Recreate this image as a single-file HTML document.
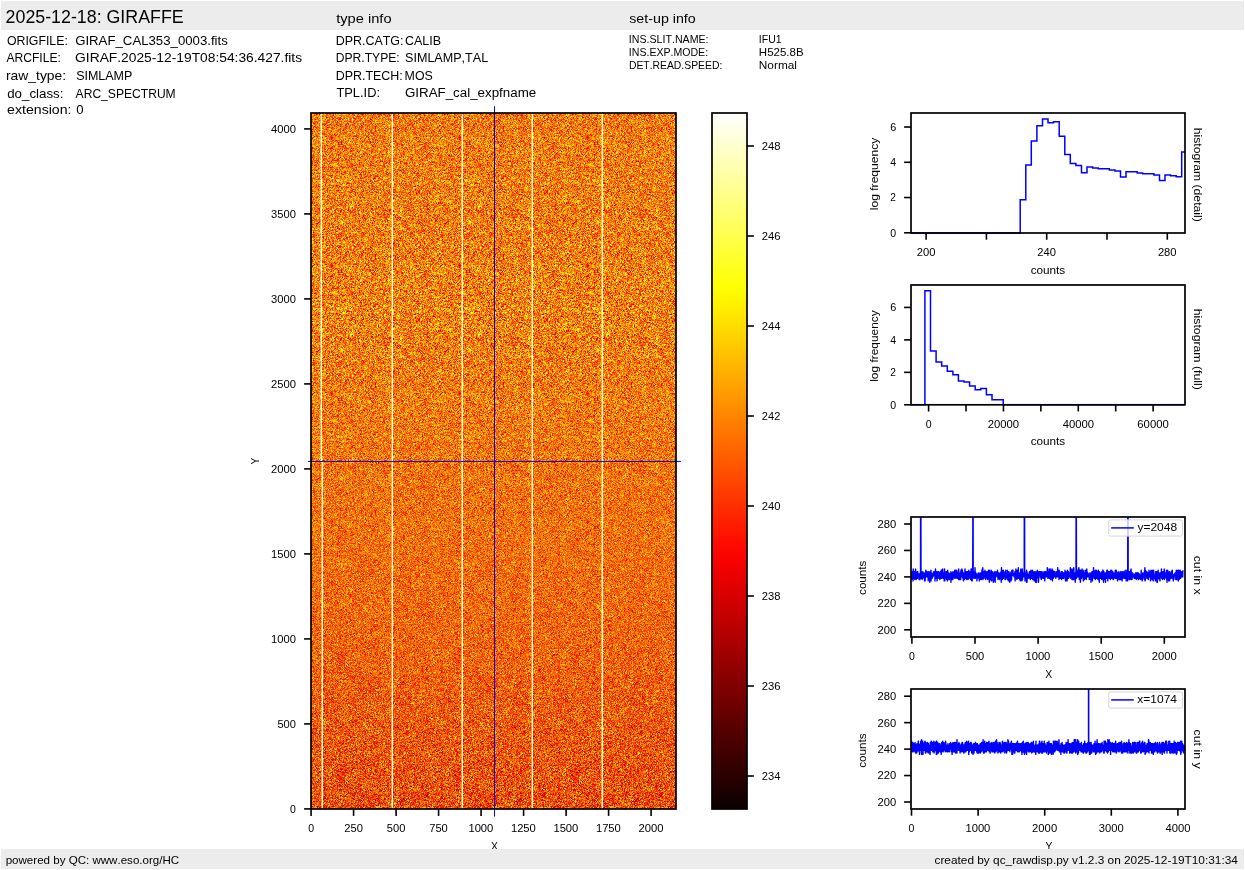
<!DOCTYPE html><html><head><meta charset="utf-8"><title>GIRAFFE raw display</title><style>html,body{margin:0;padding:0;background:#fff;width:1245px;height:870px;overflow:hidden;position:relative}text{font-family:"Liberation Sans",sans-serif;font-kerning:none}svg{will-change:transform}</style></head><body><svg width="1245" height="870" viewBox="0 0 1245 870" style="position:absolute;left:0;top:0">
<defs>
<pattern id="nzA" patternUnits="userSpaceOnUse" x="311" y="113" width="128" height="128">
<path stroke="#2a0000" stroke-width="1" fill="none" d="M29 13.5h1M57 24.5h1M1 25.5h1"/>
<path stroke="#560000" stroke-width="1" fill="none" d="M15 4.5h1M3 23.5h1M5 57.5h1M42 61.5h1M111 67.5h1M99 89.5h1M76 107.5h1"/>
<path stroke="#810000" stroke-width="1" fill="none" d="M5 1.5h1M22 2.5h1m59 0h1M103 10.5h1M0 12.5h1M84 15.5h1M30 29.5h1M126 35.5h1M117 40.5h1M58 41.5h1M50 43.5h1M20 48.5h1m48 0h1M81 50.5h1M108 51.5h1M56 69.5h1M80 70.5h1M104 76.5h1M105 80.5h1M67 85.5h1M44 89.5h1M47 92.5h1M115 93.5h1M17 97.5h1M105 100.5h1M115 101.5h1M61 104.5h1M125 107.5h1M6 110.5h1M51 111.5h1M113 120.5h1M23 121.5h1M90 123.5h1M33 126.5h1"/>
<path stroke="#ac0000" stroke-width="1" fill="none" d="M102 0.5h1m4 0h1M8 1.5h1m42 0h1M113 2.5h1m6 0h1M0 4.5h1m108 0h1M10 5.5h1M59 6.5h1M57 7.5h1m22 0h1M59 8.5h1M37 10.5h1m5 0h1M19 11.5h1m5 0h1m3 0h1m22 0h1m8 0h1M34 12.5h1m15 0h1m50 0h1M21 14.5h1m42 0h1m17 0h1M54 15.5h1M60 16.5h1M0 17.5h1m63 0h1M7 20.5h1M23 21.5h1M15 23.5h1M21 24.5h1m83 0h1M54 25.5h1m27 0h1M115 29.5h1M27 31.5h1M16 32.5h1m44 0h1m39 0h1m1 0h1M28 33.5h1m35 0h1m14 0h1M1 34.5h1m119 0h1M11 38.5h1m36 0h1m32 0h1m32 0h1m7 0h1M15 41.5h1m11 0h1M12 42.5h1m31 0h1M29 44.5h1m34 0h1M12 46.5h1M31 47.5h1m16 0h1m29 0h1m32 0h1M65 48.5h1m5 0h1M36 49.5h1m50 0h1m13 0h1m19 0h1M93 50.5h1M95 51.5h1M61 52.5h1m41 0h1M64 53.5h1M7 55.5h1M26 56.5h1m16 0h1m32 0h1M42 57.5h1M68 58.5h1M48 59.5h1m9 0h1M49 65.5h1m13 0h1M59 67.5h1M5 68.5h1M36 70.5h1m53 0h1M83 71.5h1M28 73.5h1m75 0h1M21 74.5h1M122 75.5h1M43 78.5h1m34 0h1M65 79.5h1m61 0h1M1 80.5h1m114 0h1M80 81.5h1M9 83.5h1m6 0h1M37 85.5h1m44 0h1M0 86.5h1M50 87.5h1M81 88.5h1M127 89.5h1M125 90.5h1m1 0h1M12 91.5h1m36 0h1M9 92.5h1m13 0h1m21 0h1M41 94.5h1M61 95.5h1M37 96.5h1M23 97.5h1m23 0h1m30 0h1M4 98.5h1M20 100.5h1m35 0h1m59 0h1M21 101.5h1m55 0h1M52 102.5h1m50 0h1m15 0h1m4 0h1M52 103.5h1M26 104.5h1m47 0h1m11 0h1M53 105.5h1m35 0h1m33 0h1M63 108.5h1m30 0h1m18 0h1M108 110.5h1M20 111.5h1m55 0h1M5 112.5h1m55 0h1m48 0h1M17 115.5h1m50 0h1M113 117.5h1M25 118.5h1m43 0h1M51 119.5h1M18 120.5h1m11 0h1M87 121.5h1m6 0h1M72 122.5h1M79 123.5h1M12 124.5h1m22 0h1M81 125.5h1m7 0h1M3 126.5h1m106 0h1M86 127.5h1"/>
<path stroke="#d70000" stroke-width="1" fill="none" d="M42 0.5h1m79 0h1M47 1.5h1m2 0h1m11 0h1m46 0h1M74 2.5h1m1 0h1m1 0h1M68 3.5h1m58 0h1M16 4.5h1m44 0h1m11 0h1m13 0h1m37 0h1M22 5.5h1m10 0h1m9 0h1m27 0h1m36 0h1M28 6.5h1m85 0h1M9 7.5h1m84 0h1m11 0h1m9 0h1m5 0h1m4 0h1M26 8.5h1m12 0h1m45 0h1m26 0h1M52 9.5h1m18 0h1m1 0h1M2 10.5h1m33 0h1m23 0h1m7 0h1m27 0h1M12 11.5h1m1 0h1m20 0h1m1 0h1m3 0h1m22 0h1m33 0h1M13 12.5h1m13 0h1m69 0h1m22 0h1M3 13.5h1m31 0h1m20 0h1m7 0h1m21 0h1m14 0h1M50 14.5h1m75 0h1M74 15.5h1m13 0h1m5 0h1m20 0h1M1 16.5h1m45 0h1m10 0h1m20 0h1m7 0h1m6 0h1m17 0h1M32 17.5h1m21 0h1m5 0h1m12 0h1M20 18.5h1m73 0h1m6 0h1m21 0h1M34 19.5h1m22 0h1m62 0h1M13 21.5h1M20 22.5h1M6 23.5h1m7 0h1m30 0h1m9 0h1m59 0h1M2 24.5h1m8 0h1m59 0h1m18 0h1m12 0h1M38 25.5h1m2 0h1m63 0h1M20 26.5h1m36 0h1m16 0h1m2 0h1m31 0h1m3 0h1M25 27.5h1m38 0h1m1 0h1m14 0h1m14 0h1m1 0h1m2 0h1m6 0h1m12 0h1M15 28.5h1m1 0h1m41 0h1m47 0h1M7 29.5h1m19 0h1m31 0h1m2 0h1m3 0h1m3 0h1m21 0h1M30 30.5h1m32 0h1m11 0h1m21 0h1m15 0h1M9 31.5h1m21 0h1m46 0h1m12 0h1M50 32.5h1m40 0h1m6 0h1M6 33.5h1m16 0h1m10 0h1m45 0h1m32 0h1M20 34.5h1m13 0h1m33 0h1m4 0h1m29 0h1M1 35.5h1m17 0h1m20 0h1m79 0h1M14 36.5h1m58 0h1m22 0h1M35 37.5h1m52 0h1M32 38.5h1m13 0h1m29 0h1m15 0h1m4 0h1m6 0h1M47 39.5h1m27 0h1m5 0h1M14 40.5h1m14 0h1m12 0h1m9 0h1M17 41.5h1m34 0h1m3 0h1m14 0h1m13 0h1m1 0h1m4 0h1m8 0h1m11 0h1M9 42.5h2m8 0h1m17 0h1m52 0h1m24 0h1M18 43.5h1m96 0h1M1 44.5h1m86 0h1m19 0h1M5 45.5h1m17 0h1m16 0h1M21 46.5h1m4 0h2m6 0h1m7 0h1M24 47.5h1m12 0h1m78 0h1M17 48.5h1m71 0h1M4 49.5h1m5 0h1m37 0h1m40 0h1m33 0h1M1 50.5h1m4 0h1m11 0h1m8 0h1m66 0h1m3 0h1M0 51.5h1m40 0h1m78 0h1M1 52.5h1m1 0h1m39 0h1m8 0h1m6 0h1M73 53.5h1m23 0h1m13 0h1m12 0h1M9 54.5h1m1 0h1m7 0h2m7 0h1m8 0h1m7 0h1m43 0h1M118 55.5h1M81 56.5h1m29 0h1M1 57.5h1m42 0h1m44 0h1m2 0h1M13 58.5h1m14 0h1m18 0h1m38 0h1M3 59.5h1m29 0h1m16 0h1m1 0h1m38 0h2M5 60.5h1m2 0h1m21 0h1m44 0h1m24 0h1M2 61.5h1m46 0h1M20 62.5h2m28 0h1m39 0h1m32 0h1M6 63.5h1m5 0h1m31 0h1m10 0h1m10 0h1M20 64.5h1m82 0h1m9 0h1M111 65.5h1m12 0h1M7 66.5h1m1 0h2m29 0h1m35 0h1m5 0h1M15 67.5h1m8 0h1M15 68.5h1m3 0h1m39 0h1M74 69.5h1m25 0h1m1 0h1M60 70.5h1m27 0h1m5 0h1M30 71.5h1m50 0h1M14 72.5h1m7 0h1m2 0h2m79 0h1M50 73.5h1m10 0h1m17 0h1m23 0h1m4 0h1M4 74.5h1m45 0h1m6 0h1m52 0h1m11 0h1M0 75.5h1M0 76.5h1m15 0h1m25 0h1m40 0h1M25 77.5h1m1 0h1m24 0h1m55 0h1M51 78.5h1m24 0h1m22 0h1m2 0h1M28 79.5h1m15 0h1m16 0h1m15 0h1m5 0h1m23 0h1M44 80.5h1M99 81.5h1m19 0h1M28 82.5h1m15 0h1m5 0h1m35 0h1M89 83.5h1M6 84.5h1m42 0h1m3 0h1m13 0h1m43 0h1m6 0h1M53 85.5h1M2 86.5h1m13 0h1m60 0h1M17 87.5h1m7 0h1m9 0h1M21 88.5h1m75 0h1M1 89.5h1m33 0h1m40 0h1m32 0h1m12 0h1M9 90.5h1m6 0h1m2 0h1m27 0h1m9 0h1m7 0h1M30 91.5h1m3 0h1m26 0h1m12 0h1m41 0h1m9 0h1M3 92.5h1M67 93.5h1m19 0h1m21 0h1m3 0h1M65 94.5h1m1 0h1m1 0h1m22 0h1M17 95.5h1m42 0h1m11 0h1m15 0h1m28 0h1M52 96.5h1m7 0h1m42 0h1M32 97.5h1m4 0h1m59 0h1M5 98.5h1m23 0h1m52 0h1m41 0h1M11 99.5h1m12 0h1m41 0h1M4 100.5h1M20 101.5h1m45 0h2m15 0h1m9 0h1m10 0h1M98 102.5h1m10 0h1M81 103.5h1m22 0h1m2 0h1M77 104.5h1m6 0h1m4 0h1m20 0h1m10 0h1M0 105.5h1m19 0h1m41 0h2m23 0h1m9 0h1m15 0h1m1 0h1M4 106.5h1m80 0h1M81 107.5h1m36 0h1m1 0h1m3 0h1M48 108.5h1m22 0h1m36 0h1m15 0h1M7 109.5h1m6 0h1m35 0h1M9 110.5h1m51 0h1m43 0h1M71 111.5h1M30 112.5h1m12 0h1M26 113.5h1m8 0h1m1 0h1m19 0h1m16 0h1m42 0h1M31 114.5h1m32 0h1M0 115.5h1m2 0h1m9 0h1m12 0h1m19 0h1m36 0h1M13 116.5h1m14 0h1m1 0h1m14 0h1m1 0h1M20 117.5h1m46 0h1m2 0h1M41 118.5h1m42 0h1m40 0h1M2 119.5h1m64 0h1m10 0h1m18 0h1m20 0h1M16 120.5h1m64 0h1m19 0h1M9 121.5h1m19 0h1M39 122.5h1m69 0h1m16 0h1M42 123.5h1m19 0h1M3 124.5h1m32 0h1m57 0h1M69 125.5h1m3 0h1m27 0h1M126 126.5h1M10 127.5h1m11 0h1m75 0h1"/>
<path stroke="#ff0400" stroke-width="1" fill="none" d="M4 0.5h1m11 0h1m1 0h1m2 0h1m19 0h1m52 0h1m16 0h1m1 0h1M15 1.5h1m6 0h1m15 0h1m2 0h1m24 0h1m2 0h1m3 0h1m9 0h1m3 0h1m19 0h1m13 0h1M43 2.5h1m26 0h1m8 0h1m1 0h1m16 0h1m2 0h1m4 0h1M9 3.5h1m1 0h1m34 0h1m1 0h1m18 0h1m19 0h1m4 0h1m2 0h1m2 0h1m5 0h2m3 0h1M6 4.5h1m11 0h1m2 0h1m7 0h1m12 0h1m61 0h1m13 0h1M25 5.5h2m1 0h1m1 0h1m13 0h1m2 0h1m11 0h1m27 0h1m17 0h1m9 0h1M4 6.5h1m16 0h1m5 0h1m1 0h1m14 0h1m15 0h1m6 0h1m9 0h1m1 0h1m29 0h1m14 0h1M16 7.5h1m32 0h1m4 0h1m24 0h1m28 0h1m4 0h1m5 0h1M33 8.5h1m4 0h1m3 0h1m3 0h1m4 0h1m47 0h1m3 0h2m12 0h1m5 0h1m2 0h1M2 9.5h1m12 0h1m1 0h1m63 0h1m26 0h2m9 0h1M3 10.5h1m2 0h1M34 11.5h1m19 0h1m16 0h1m12 0h1m28 0h1M90 12.5h1M6 13.5h1m3 0h1m33 0h1m3 0h1m2 0h1m13 0h1m45 0h1m5 0h1M2 14.5h1m13 0h2m16 0h1m3 0h1m7 0h1m29 0h1m17 0h2m6 0h1M5 15.5h1m14 0h1m8 0h1m10 0h1m23 0h1m10 0h1m4 0h1m18 0h1m4 0h1m3 0h1m1 0h1m7 0h1M15 16.5h1m16 0h1m16 0h2m33 0h1m1 0h1m12 0h1m2 0h1m8 0h1M8 17.5h2m30 0h1m26 0h1m3 0h1m4 0h1m9 0h1m6 0h1m18 0h1m4 0h1m3 0h2M1 18.5h1m1 0h1m25 0h1m9 0h1m24 0h1m19 0h2m5 0h1m35 0h1M41 19.5h1m18 0h1m26 0h1m37 0h1M1 20.5h1m9 0h1m1 0h1m33 0h1m4 0h1m9 0h1m11 0h1m27 0h1m15 0h1m8 0h1M26 21.5h1m18 0h1m16 0h1m24 0h1m17 0h1m5 0h1M24 22.5h1m3 0h1m9 0h1m8 0h1m6 0h1m14 0h1m11 0h1m26 0h1m16 0h1M27 23.5h1m6 0h1m8 0h2m28 0h1m38 0h1m7 0h1M6 24.5h1m2 0h1m9 0h2m25 0h1m18 0h1m7 0h1m5 0h1m3 0h1m1 0h1M20 25.5h1m24 0h1m3 0h1m13 0h1m21 0h1m36 0h1M34 26.5h1m18 0h1m11 0h1m7 0h1M12 27.5h1m17 0h1m22 0h1m30 0h1M26 28.5h1m12 0h1m11 0h1m4 0h1m15 0h1m9 0h1m26 0h1m7 0h1M34 29.5h1m16 0h1m27 0h1m15 0h1m18 0h1m4 0h1m5 0h1M20 30.5h1m6 0h1m7 0h1m8 0h1m14 0h1m5 0h1m8 0h1m11 0h1m30 0h1m6 0h1M0 31.5h1m29 0h1m15 0h1m4 0h1m8 0h1m1 0h1m23 0h1m8 0h1m12 0h4m3 0h1M9 32.5h1m3 0h1m64 0h1m6 0h1M5 33.5h1m3 0h1m11 0h1m5 0h1m3 0h2m15 0h1m12 0h2m9 0h1m39 0h1m4 0h1m2 0h1M21 34.5h1m28 0h1m23 0h1m11 0h1m3 0h2m3 0h1m2 0h1m15 0h1m4 0h1m5 0h1M5 35.5h1m11 0h1m2 0h1m12 0h1m2 0h2m15 0h1m12 0h1m2 0h1m5 0h1m37 0h1m4 0h1m5 0h1M8 36.5h1m13 0h1m8 0h1m14 0h1m14 0h1m14 0h1m10 0h1m6 0h1m9 0h1m6 0h1m2 0h1m12 0h1M20 37.5h1m3 0h1m8 0h1m6 0h1m1 0h1m15 0h1m1 0h1m11 0h1m27 0h1m5 0h1M13 38.5h1m25 0h2m20 0h1m7 0h1m40 0h1M16 39.5h1m9 0h1m27 0h1m57 0h1m2 0h1m2 0h1M21 40.5h1m33 0h1m4 0h1m7 0h1m35 0h1m2 0h1M10 41.5h1m1 0h1m40 0h1m14 0h1m31 0h1m15 0h1m10 0h1M2 42.5h1m19 0h1m4 0h1m12 0h1m2 0h1m4 0h1m15 0h2m18 0h1m16 0h1m24 0h2M11 43.5h1m20 0h1m18 0h1m9 0h1m28 0h1m5 0h2m13 0h1m9 0h1M19 44.5h1m13 0h1m15 0h1m27 0h1m11 0h1m11 0h1m5 0h1m7 0h1m3 0h1M28 45.5h1m6 0h1m2 0h1m19 0h1m15 0h1m7 0h1m17 0h1m14 0h1m2 0h1M2 46.5h1m32 0h1m4 0h1m14 0h1m36 0h1m8 0h1m9 0h1M10 47.5h1m10 0h1m1 0h1m2 0h2m19 0h1m60 0h1m5 0h1M1 48.5h1m57 0h2m9 0h1m14 0h1m5 0h1M50 49.5h1m24 0h1m2 0h1m16 0h1m7 0h1m15 0h1M13 50.5h1m34 0h1m10 0h1m1 0h2m14 0h1m25 0h1m7 0h1m13 0h1M11 51.5h1m36 0h1m8 0h1m1 0h1m18 0h1m33 0h1m1 0h1M4 52.5h2m4 0h1m25 0h1m32 0h1m16 0h1m19 0h1m10 0h1m6 0h1M5 53.5h1m11 0h1m3 0h1m7 0h2m3 0h1m3 0h1m2 0h1m10 0h1m10 0h1m7 0h1m20 0h1m21 0h1M31 54.5h3m39 0h1m51 0h1M13 55.5h1m40 0h1m2 0h1m7 0h1m32 0h1m6 0h1M9 56.5h1m6 0h2m6 0h1m4 0h1m54 0h1m6 0h1m21 0h1m3 0h1M60 57.5h1m22 0h1m6 0h1m16 0h1m11 0h2M0 58.5h1m11 0h1m8 0h2m3 0h1m7 0h1m19 0h1m11 0h1m23 0h1m10 0h1m2 0h1M7 59.5h1m1 0h2m14 0h2m48 0h1m26 0h2m2 0h1m5 0h1m4 0h1M49 60.5h1m14 0h1m12 0h1m1 0h1m6 0h1m7 0h1m1 0h1m6 0h1m2 0h2m2 0h2M11 61.5h1m19 0h2m6 0h1m45 0h1m3 0h1M18 62.5h1m6 0h1m13 0h1m19 0h2m44 0h1m1 0h2M24 63.5h1m8 0h1m20 0h1m4 0h1m4 0h2m14 0h1m25 0h1M11 64.5h2m31 0h1m4 0h1m3 0h1m9 0h1m7 0h1m51 0h1M26 65.5h1m20 0h1m14 0h1m1 0h1m19 0h1m8 0h1m8 0h1m5 0h1m12 0h1m5 0h1M17 66.5h1m44 0h1m34 0h1m6 0h1m8 0h1m5 0h1M42 67.5h1m7 0h1m40 0h1M21 68.5h1m30 0h1m10 0h1m29 0h1m5 0h1m9 0h1m12 0h1M13 69.5h1m14 0h1m19 0h1m12 0h1m28 0h1m16 0h1m12 0h1M37 70.5h2m1 0h1m8 0h1m25 0h1m16 0h1m24 0h1m3 0h1M5 71.5h1m8 0h1m20 0h1m4 0h1m5 0h1m44 0h1m34 0h1M5 72.5h1m12 0h1m34 0h1m7 0h1m23 0h1m7 0h1m1 0h1m3 0h1m7 0h1m4 0h1m14 0h1M7 73.5h2m20 0h1m5 0h1m4 0h1m5 0h1m15 0h1m2 0h1m11 0h1m19 0h1m20 0h1M19 74.5h1m10 0h1m6 0h1m8 0h1m4 0h1m12 0h1m27 0h1M10 75.5h1m1 0h2m2 0h1m23 0h1m20 0h2m29 0h1m22 0h1m3 0h1m3 0h1M7 76.5h1m33 0h1m1 0h1m8 0h1m7 0h1m2 0h1m1 0h1m14 0h3m13 0h1m27 0h1M18 77.5h2m9 0h1m10 0h2m12 0h1m12 0h1m4 0h1m31 0h1m11 0h1M4 78.5h1m5 0h1m5 0h1m24 0h1m10 0h1m5 0h1m5 0h1m19 0h1m22 0h2M10 79.5h1m3 0h1m15 0h1m8 0h2m18 0h1m6 0h1m15 0h1m3 0h1m11 0h1M12 80.5h1m9 0h1m23 0h1m22 0h1m38 0h1m1 0h1m2 0h1m4 0h2M10 81.5h1m22 0h1m26 0h1m20 0h2m2 0h1m12 0h1m17 0h1M17 82.5h1m14 0h1m1 0h1m3 0h1m34 0h1m10 0h1m25 0h1M1 83.5h1m4 0h2m5 0h1m4 0h1m13 0h1m5 0h1m12 0h1m70 0h1M5 84.5h1m20 0h1m21 0h1m3 0h1m35 0h1m2 0h1m11 0h1m9 0h1M26 85.5h1m1 0h1m2 0h1m17 0h1m7 0h1m31 0h2m9 0h1m12 0h1M11 86.5h1m11 0h1m57 0h1m2 0h1m17 0h1m2 0h1m15 0h1m3 0h1M26 87.5h1m2 0h1m7 0h1m36 0h1m19 0h1m4 0h1m16 0h1M70 88.5h1m33 0h1m7 0h1m11 0h1M3 89.5h1m23 0h1m11 0h1m33 0h2m33 0h1m7 0h1M1 90.5h1m84 0h1m10 0h1M28 91.5h1m19 0h1m7 0h1m43 0h1m16 0h1m4 0h1M0 92.5h1m4 0h1m21 0h1m20 0h1m21 0h1m23 0h1m21 0h1M19 93.5h1m14 0h1m26 0h1m9 0h1m18 0h1m5 0h1m7 0h1m18 0h1M55 94.5h1m20 0h1m4 0h1m12 0h2m5 0h2m15 0h1M3 95.5h1m3 0h2m6 0h1m9 0h1m39 0h1m50 0h1M8 96.5h1m2 0h1m8 0h1m3 0h1m5 0h1m12 0h2m11 0h1m4 0h1m2 0h1m9 0h1m3 0h2m4 0h1m24 0h1m6 0h3M8 97.5h1m4 0h1m12 0h1m2 0h2m5 0h1m2 0h1m1 0h1m10 0h1m9 0h1m12 0h1m3 0h1m2 0h1m27 0h1m7 0h1m6 0h1M14 98.5h1m15 0h1m7 0h1m5 0h1m5 0h1m3 0h1m23 0h1m12 0h1m1 0h1m5 0h1m12 0h1M29 99.5h1m2 0h1m6 0h1m25 0h1m7 0h1m35 0h1m5 0h1M28 100.5h1m3 0h1m14 0h1m22 0h1M5 101.5h1m23 0h1m14 0h1m2 0h2m8 0h1m11 0h1m3 0h1m2 0h1m5 0h1m2 0h1m36 0h1m4 0h1M0 102.5h1m13 0h1m27 0h2m28 0h1m9 0h1m3 0h1m12 0h1m18 0h1M11 103.5h1m9 0h1m6 0h1m5 0h1m13 0h1m9 0h1m25 0h1m16 0h1m24 0h1M44 104.5h1m6 0h1m1 0h1m27 0h1m40 0h1M2 105.5h1m10 0h1m1 0h1m28 0h1m2 0h1m1 0h1m1 0h1m2 0h1m25 0h1m14 0h1m5 0h2M54 106.5h1m31 0h1m1 0h1m12 0h1m18 0h1m5 0h1M9 107.5h1m6 0h1m7 0h1m13 0h1m15 0h1m5 0h1m1 0h1m10 0h1m17 0h1m2 0h1m12 0h1m2 0h1M8 108.5h2m64 0h1m8 0h1m9 0h1m12 0h1M27 109.5h1m10 0h1m2 0h1m10 0h1m6 0h1m6 0h1m7 0h1m20 0h1m10 0h1m2 0h1M5 110.5h1m8 0h1m3 0h1m1 0h2m10 0h1m4 0h1m1 0h1m43 0h1m4 0h1m1 0h2m10 0h1m21 0h1M1 111.5h1m16 0h1m3 0h1m34 0h1m9 0h1m19 0h1m7 0h1m13 0h1M21 112.5h1m5 0h1m17 0h1m12 0h1m4 0h1m12 0h1m7 0h1m9 0h1m1 0h1m15 0h2m2 0h1M1 113.5h1m78 0h1m7 0h1M19 114.5h1m2 0h1m3 0h1m8 0h2m4 0h2m50 0h1m17 0h1M28 115.5h1m3 0h1m20 0h1m11 0h2m29 0h3m21 0h1M7 116.5h1m4 0h1m26 0h1m32 0h1m9 0h2m12 0h1m8 0h1m6 0h1m14 0h1M0 117.5h1m42 0h1m47 0h1m15 0h1m13 0h1M14 118.5h1m1 0h1m14 0h1m1 0h1m13 0h1m9 0h1m4 0h1m11 0h2m1 0h1m9 0h1m4 0h1m10 0h1m7 0h1m12 0h1M0 119.5h1m10 0h1m89 0h1m7 0h1M9 120.5h1m10 0h1m7 0h1m10 0h1m10 0h1m1 0h1m1 0h1m3 0h1m13 0h1m27 0h1m6 0h1m9 0h1M11 121.5h1m3 0h1m5 0h1m22 0h1m7 0h2m7 0h1m1 0h1m8 0h1m4 0h1m21 0h1m2 0h1m12 0h1M3 122.5h1m1 0h1m24 0h1m1 0h1m25 0h1m3 0h1m18 0h1m10 0h1m34 0h1M2 123.5h1m24 0h1m10 0h1m26 0h1m56 0h1M9 124.5h1m15 0h1m12 0h1m73 0h1m5 0h1M12 125.5h1m2 0h1m4 0h1m6 0h3m2 0h1m2 0h1m24 0h1m16 0h1m19 0h1m4 0h1m13 0h1m9 0h1M14 126.5h1m2 0h1m8 0h1m23 0h1m34 0h1m20 0h1m13 0h1m6 0h1M29 127.5h1m39 0h1m13 0h1m1 0h1m2 0h1m4 0h1m27 0h1"/>
<path stroke="#ff2f00" stroke-width="1" fill="none" d="M3 0.5h1m7 0h2m6 0h1m17 0h1m6 0h1m3 0h1m7 0h1m4 0h1m4 0h1m3 0h1m20 0h1m8 0h1m22 0h1m1 0h2M6 1.5h1m45 0h1m1 0h1m5 0h1m3 0h1m2 0h2m3 0h1m4 0h1m2 0h1m27 0h1m4 0h1M3 2.5h1m25 0h2m15 0h1m4 0h1m9 0h1m21 0h1m1 0h2m5 0h1m2 0h1m18 0h1m2 0h2M20 3.5h1m9 0h1m14 0h1m1 0h1m4 0h1m23 0h1m5 0h2m4 0h1m7 0h1m16 0h1m2 0h1m3 0h1m1 0h1M24 4.5h1m2 0h2m28 0h1m7 0h1m17 0h1m1 0h1m5 0h2m8 0h1m9 0h1m5 0h1M6 5.5h1m22 0h1m5 0h1m14 0h1m13 0h1m9 0h1m2 0h1m6 0h1m7 0h2m3 0h1m14 0h1m5 0h1M1 6.5h1m12 0h1m3 0h1m5 0h1m6 0h1m7 0h1m9 0h1m25 0h1m6 0h1m10 0h1m5 0h1m7 0h2m2 0h2m3 0h1m8 0h1M8 7.5h1m8 0h2m5 0h1m18 0h1m12 0h1m3 0h2m20 0h1m5 0h1m9 0h2m5 0h1m5 0h1m3 0h1m5 0h1m4 0h1M1 8.5h1m1 0h1m11 0h1m6 0h1m7 0h1m4 0h1m9 0h1m8 0h1m2 0h1m5 0h1m11 0h1m4 0h1m1 0h1m12 0h1M4 9.5h1m1 0h1m2 0h1m8 0h1m2 0h1m2 0h1m1 0h2m4 0h1m3 0h1m2 0h2m1 0h1m11 0h1m5 0h1m27 0h2m7 0h1m3 0h1m3 0h2m5 0h2m10 0h1M14 10.5h2m4 0h1m4 0h2m3 0h1m20 0h1m10 0h1m24 0h2m5 0h1m4 0h2m13 0h1m4 0h1m5 0h1M8 11.5h1m2 0h1m1 0h1m4 0h1m12 0h1m14 0h1m20 0h1m4 0h2m6 0h1m7 0h1m2 0h2m6 0h1m2 0h1m12 0h1m4 0h1M1 12.5h1m6 0h1m7 0h1m1 0h1m1 0h1m2 0h1m2 0h1m2 0h1m9 0h1m1 0h1m1 0h1m13 0h1m7 0h1m4 0h1m15 0h1m7 0h1m1 0h1m1 0h1m16 0h1m2 0h1M0 13.5h1m3 0h1m18 0h1m7 0h1m6 0h1m6 0h1m3 0h1m8 0h1m2 0h1m7 0h1m6 0h1m4 0h1m7 0h1m22 0h2m1 0h1m10 0h1M4 14.5h2m1 0h1m10 0h1m16 0h1m8 0h1m3 0h1m2 0h1m4 0h1m16 0h1m5 0h1m3 0h3m6 0h1m6 0h1m9 0h1m2 0h2m13 0h1M2 15.5h1m6 0h1m5 0h1m5 0h1m1 0h1m1 0h1m9 0h1m9 0h1m2 0h1m1 0h1m12 0h1m4 0h1m2 0h1m5 0h3m10 0h2m11 0h1m10 0h1m10 0h1M0 16.5h1m3 0h1m8 0h1m13 0h3m3 0h2m4 0h1m1 0h1m22 0h1m2 0h1m28 0h1m4 0h1m8 0h1m12 0h1M10 17.5h1m9 0h1m5 0h2m3 0h1m3 0h1m11 0h1m21 0h1m13 0h1m6 0h1m15 0h1m4 0h1m1 0h1m5 0h1M0 18.5h1m12 0h1m13 0h1m5 0h1m4 0h1m5 0h1m6 0h1m3 0h1m3 0h1m5 0h1m13 0h1m2 0h1m4 0h1m7 0h1m7 0h2m5 0h1m1 0h1m1 0h1m5 0h1m1 0h1M1 19.5h1m7 0h1m5 0h1m3 0h1m9 0h1m1 0h1m1 0h1m1 0h1m6 0h1m18 0h2m5 0h2m9 0h2m8 0h1m12 0h2m1 0h1m1 0h1m1 0h1m13 0h1M10 20.5h1m1 0h1m5 0h1m4 0h1m5 0h2m1 0h1m21 0h1m6 0h1m11 0h1m6 0h1m7 0h1m14 0h2m10 0h1m4 0h2M5 21.5h1m5 0h1m3 0h1m5 0h1m11 0h1m16 0h1m3 0h1m2 0h2m26 0h1m17 0h2m4 0h1m12 0h1m3 0h1M5 22.5h1m4 0h1m11 0h1m2 0h1m17 0h1m1 0h1m7 0h1m3 0h1m5 0h2m1 0h1m15 0h1m7 0h1m6 0h1m19 0h1m1 0h1m2 0h1m4 0h1M5 23.5h1m11 0h1m1 0h3m20 0h1m13 0h1m3 0h1m8 0h1m2 0h1m9 0h1m13 0h1m22 0h1m4 0h1M1 24.5h1m45 0h1m15 0h1m16 0h1m6 0h1m9 0h1m6 0h1m1 0h2m11 0h1M15 25.5h2m1 0h2m1 0h1m20 0h1m7 0h1m7 0h1m2 0h1m5 0h1m1 0h1m11 0h1m9 0h1m6 0h1m3 0h1m4 0h1m1 0h1m9 0h1M0 26.5h1m2 0h1m14 0h1m4 0h1m8 0h1m13 0h1m11 0h1m2 0h2m1 0h1m7 0h1m7 0h1m7 0h1m1 0h1m7 0h1m5 0h1m6 0h1M21 27.5h2m1 0h1m7 0h1m3 0h1m35 0h1m3 0h1m12 0h1m20 0h1m14 0h1M2 28.5h1m17 0h1m2 0h1m6 0h2m3 0h1m8 0h1m10 0h1m2 0h1m9 0h1m6 0h1m1 0h1m2 0h2m1 0h2m5 0h1m7 0h1m1 0h1m5 0h1m1 0h1m13 0h1M9 29.5h2m4 0h1m4 0h1m1 0h1m5 0h1m29 0h1m2 0h1m2 0h1m19 0h1m14 0h1m18 0h1M11 30.5h1m4 0h1m16 0h1m20 0h1m16 0h1m4 0h1m10 0h1m2 0h1m13 0h1m9 0h2m6 0h1M15 31.5h1m12 0h2m6 0h1m5 0h1m1 0h1m25 0h2m18 0h1m2 0h1m3 0h1M23 32.5h1m9 0h1m4 0h2m15 0h1m8 0h1m1 0h1m19 0h1m3 0h1m22 0h1M14 33.5h1m14 0h1m20 0h1m15 0h1m3 0h1m2 0h1m2 0h2m10 0h1m27 0h1m9 0h1M7 34.5h1m3 0h1m1 0h1m17 0h1m3 0h1m4 0h1m5 0h2m35 0h1m17 0h1m21 0h1M11 35.5h1m1 0h1m4 0h1m2 0h1m7 0h1m5 0h1m5 0h2m11 0h1m1 0h3m27 0h1m5 0h1m2 0h1m5 0h1m7 0h2m1 0h1m9 0h1M4 36.5h1m8 0h1m2 0h1m2 0h1m6 0h2m11 0h1m9 0h1m5 0h1m19 0h1m7 0h1m9 0h1m4 0h2m8 0h2m13 0h1M6 37.5h1m9 0h1m63 0h1m4 0h1m29 0h1m2 0h1m1 0h2M8 38.5h1m6 0h1m3 0h1m7 0h1m24 0h1m7 0h1m3 0h1m1 0h1M6 39.5h3m21 0h1m6 0h1m22 0h1m5 0h1m2 0h2m11 0h1m10 0h1m2 0h1m9 0h1M0 40.5h1m6 0h1m31 0h1m1 0h1m2 0h2m7 0h1m21 0h1m2 0h1m10 0h1m2 0h1m28 0h2M6 41.5h1m13 0h2m3 0h1m2 0h1m5 0h1m6 0h2m6 0h1m14 0h1m7 0h2m2 0h1m16 0h1m5 0h1m5 0h2m1 0h1m1 0h2m7 0h2m1 0h1M16 42.5h1m8 0h1m8 0h1m45 0h1m39 0h1M2 43.5h1m2 0h1m4 0h1m2 0h2m20 0h1m2 0h4m3 0h2m10 0h1m4 0h1m4 0h1m3 0h1m9 0h2m11 0h1M21 44.5h1m2 0h1m2 0h1m16 0h1m3 0h1m7 0h1m2 0h1m2 0h1m5 0h1m2 0h1m20 0h1m5 0h1m1 0h1m12 0h2m1 0h1M0 45.5h1m9 0h1m2 0h2m19 0h1m11 0h1m2 0h1m6 0h1m9 0h1m1 0h1m8 0h1m2 0h1m3 0h2m13 0h1m4 0h1m5 0h1m9 0h1m3 0h1M9 46.5h1m4 0h1m7 0h1m14 0h1m3 0h1m5 0h1m6 0h1m3 0h1m3 0h1m33 0h1m2 0h2m9 0h1M5 47.5h3m5 0h1m2 0h1m5 0h1m2 0h1m8 0h1m19 0h1m11 0h1m2 0h1m17 0h1m12 0h1M26 48.5h1m11 0h1m4 0h1m2 0h1m8 0h1m17 0h2m3 0h1m4 0h1m6 0h1m10 0h1m7 0h1m8 0h1m2 0h1m1 0h1M0 49.5h2m1 0h1m1 0h2m14 0h1m5 0h1m7 0h1m8 0h1m15 0h1m3 0h2m2 0h1m3 0h1m25 0h1m23 0h1m2 0h1M29 50.5h1m9 0h2m15 0h1m15 0h2m1 0h1m8 0h3m2 0h1m5 0h1m11 0h1m4 0h2M17 51.5h1m12 0h1m4 0h1m3 0h1m2 0h1m1 0h1m1 0h1m25 0h2m8 0h1m1 0h1m17 0h1m6 0h1m8 0h2m1 0h1M13 52.5h1m5 0h1m7 0h1m12 0h2m2 0h1m1 0h1m2 0h1m1 0h1m8 0h1m1 0h1m3 0h1m5 0h2m1 0h1m4 0h1m4 0h1m10 0h1m14 0h1M12 53.5h1m27 0h1m7 0h1m23 0h1m3 0h1m18 0h1m2 0h1m4 0h3M13 54.5h2m6 0h1m13 0h1m8 0h1m2 0h1m11 0h1m1 0h1m5 0h1m17 0h1m15 0h1m5 0h2m18 0h1M17 55.5h1m2 0h1m2 0h1m4 0h1m2 0h1m9 0h2m2 0h1m5 0h1m10 0h1m6 0h1m13 0h1m9 0h1m1 0h1m4 0h2M6 56.5h1m4 0h2m7 0h1m19 0h1m4 0h1m10 0h1m20 0h1m9 0h1m7 0h1m6 0h1m17 0h1M4 57.5h1m4 0h1m9 0h1m6 0h1m9 0h1m4 0h1m12 0h1m11 0h1m21 0h1m4 0h1m1 0h2m21 0h1m3 0h1m1 0h1m1 0h1M16 58.5h3m6 0h1m12 0h1m12 0h3m3 0h1m4 0h1m7 0h1m3 0h2m4 0h2m17 0h1m7 0h1m7 0h1m1 0h1m1 0h1m1 0h1m1 0h1M22 59.5h1m9 0h1m1 0h1m3 0h1m7 0h1m8 0h1m1 0h1m14 0h1m3 0h1m1 0h1m5 0h1m9 0h1m21 0h1m5 0h1M1 60.5h2m3 0h1m2 0h1m14 0h1m9 0h1m3 0h1m3 0h1m11 0h1m23 0h1m4 0h1m9 0h1m11 0h1m8 0h1m1 0h1m3 0h1m4 0h1M0 61.5h1m14 0h1m12 0h1m19 0h1m1 0h1m2 0h2m11 0h1m3 0h1m4 0h3m3 0h1m4 0h1m14 0h1m4 0h1m3 0h1m8 0h1m2 0h2M17 62.5h1m1 0h1m36 0h1m5 0h1m1 0h1m1 0h1m2 0h1m4 0h1m1 0h1m2 0h2m2 0h1m8 0h1m1 0h1m1 0h1m7 0h1m4 0h1m10 0h1m6 0h1M8 63.5h2m9 0h1m9 0h1m15 0h1m4 0h1m31 0h1m6 0h1m8 0h1m8 0h1m3 0h1m11 0h1m3 0h1M4 64.5h1m24 0h1m6 0h1m20 0h1m10 0h1m26 0h2m1 0h1m1 0h1m1 0h1m4 0h1m6 0h1m1 0h1M1 65.5h3m3 0h2m14 0h1m3 0h1m13 0h1m9 0h1m15 0h3m8 0h1m13 0h1m20 0h1m4 0h1m6 0h1M16 66.5h1m25 0h1m12 0h1m14 0h2m9 0h1m3 0h1m1 0h1m23 0h1m6 0h1m1 0h1M1 67.5h1m8 0h1m7 0h1m1 0h2m14 0h2m1 0h1m4 0h1m4 0h1m2 0h1m1 0h1m5 0h1m5 0h2m13 0h2m3 0h1m17 0h1m1 0h2m11 0h1M1 68.5h1m10 0h1m12 0h1m21 0h1m5 0h1m7 0h1m2 0h2m6 0h2m2 0h1m4 0h1m3 0h1m17 0h1m8 0h1M4 69.5h1m11 0h1m9 0h1m5 0h1m3 0h2m5 0h2m9 0h1m15 0h1m4 0h1m9 0h1m11 0h1m13 0h1m6 0h1m4 0h1M3 70.5h1m11 0h1m15 0h1m3 0h1m6 0h1m1 0h1m6 0h1m5 0h1m1 0h1m2 0h1m6 0h1m7 0h1m5 0h1m11 0h1m2 0h1m1 0h1M7 71.5h1m1 0h1m8 0h1m10 0h1m18 0h1m2 0h1m9 0h1m7 0h1m2 0h1m2 0h2m3 0h1m3 0h1m3 0h1m5 0h1m3 0h1m16 0h1m1 0h2m5 0h1M7 72.5h1m12 0h2m16 0h1m3 0h1m15 0h1m1 0h1m7 0h1m4 0h1m1 0h1m1 0h1m1 0h1m10 0h1m22 0h1m8 0h1m1 0h1m1 0h1M2 73.5h1m7 0h2m3 0h1m6 0h1m2 0h1m22 0h1m8 0h1m13 0h2m18 0h1m3 0h1m3 0h1m2 0h1m9 0h1m3 0h1m6 0h2M1 74.5h1m4 0h1m10 0h1m9 0h1m3 0h1m3 0h2m2 0h1m4 0h1m2 0h1m5 0h1m4 0h1m13 0h1m2 0h1m3 0h1m2 0h1m17 0h1M30 75.5h1m4 0h1m11 0h1m6 0h1m3 0h1m4 0h1m5 0h1m2 0h1m24 0h1m3 0h1m5 0h1m2 0h1m3 0h1m6 0h1M9 76.5h4m33 0h1m14 0h1m4 0h1m2 0h1m1 0h1m1 0h1m4 0h1m5 0h1m8 0h2m13 0h1m1 0h1m15 0h1M9 77.5h1m6 0h1m9 0h1m1 0h1m3 0h1m1 0h1m21 0h1m2 0h1m2 0h1m12 0h1m1 0h1m11 0h1m2 0h1m7 0h1m5 0h1m8 0h1m1 0h1m1 0h1M1 78.5h2m10 0h1m12 0h1m7 0h1m2 0h2m1 0h1m22 0h1m1 0h1m4 0h1m11 0h1m5 0h1m24 0h1m3 0h3M16 79.5h1m1 0h1m2 0h1m16 0h1m7 0h1m3 0h1m4 0h2m3 0h1m9 0h1m2 0h1m16 0h2m1 0h2m2 0h1m7 0h1m12 0h1M6 80.5h2m5 0h1m9 0h1m25 0h1m5 0h1m17 0h1m1 0h1m1 0h1m10 0h1m1 0h1m4 0h1m1 0h1m8 0h1m4 0h1M23 81.5h1m19 0h2m3 0h1m1 0h1m10 0h1m2 0h1m7 0h1m3 0h1m2 0h1m8 0h1m1 0h1m10 0h1m3 0h1m4 0h1m13 0h1M8 82.5h1m1 0h1m5 0h1m5 0h1m1 0h2m21 0h1m3 0h1m12 0h1m4 0h1m4 0h1m5 0h1m11 0h1m2 0h2m2 0h1m6 0h1m9 0h1m5 0h1M0 83.5h1m29 0h1m5 0h1m2 0h2m6 0h1m24 0h1m3 0h1m2 0h1m6 0h1m8 0h1m14 0h1m4 0h1m1 0h1M1 84.5h1m19 0h1m6 0h1m10 0h1m22 0h3m6 0h1m2 0h1m1 0h1m27 0h1m3 0h1m6 0h1m6 0h1M11 85.5h1m6 0h4m1 0h1m35 0h1m13 0h1m7 0h1m17 0h1m16 0h1M8 86.5h1m1 0h1m2 0h1m6 0h1m3 0h1m8 0h1m8 0h1m20 0h1m4 0h2m8 0h1m8 0h1m2 0h1m7 0h2m14 0h3M23 87.5h1m7 0h1m10 0h1m2 0h1m7 0h2m1 0h2m1 0h1m6 0h1m8 0h1m2 0h1m8 0h1m17 0h2m5 0h2M1 88.5h1m14 0h1m1 0h1m4 0h1m8 0h1m1 0h1m4 0h1m3 0h1m3 0h1m2 0h1m7 0h1m3 0h1m16 0h1m5 0h1m7 0h2m5 0h1m8 0h1m10 0h1M5 89.5h1m8 0h2m3 0h1m4 0h1m3 0h1m3 0h1m14 0h1m7 0h2m20 0h1m11 0h1m2 0h1m2 0h1m7 0h1m9 0h1m6 0h1M0 90.5h1m6 0h1m9 0h1m7 0h1m3 0h2m2 0h1m3 0h1m2 0h1m3 0h1m13 0h2m8 0h2m6 0h1m4 0h1m21 0h2m12 0h1m5 0h1M5 91.5h2m6 0h1m12 0h1m2 0h1m7 0h1m15 0h1m6 0h1m12 0h1m1 0h1m12 0h1m2 0h2m3 0h1m2 0h1m12 0h1M4 92.5h1m1 0h1m15 0h1m8 0h1m1 0h1m9 0h1m15 0h1m13 0h1m1 0h1m11 0h1m12 0h1m1 0h1m14 0h1m2 0h1m4 0h1M4 93.5h1m15 0h1m11 0h1m26 0h1m2 0h1m1 0h1m33 0h1m7 0h1m7 0h1m1 0h1m7 0h2M9 94.5h1m10 0h1m1 0h1m9 0h1m12 0h1m2 0h1m22 0h1m21 0h1m6 0h1m11 0h1m9 0h1M6 95.5h1m9 0h1m2 0h2m5 0h1m10 0h1m8 0h2m47 0h1m1 0h2m10 0h1m2 0h1m6 0h1m3 0h1M1 96.5h1m1 0h1m11 0h1m9 0h1m5 0h1m2 0h1m15 0h1m19 0h1m5 0h1m21 0h1m3 0h1m19 0h1M0 97.5h1m9 0h1m13 0h1m2 0h1m14 0h1m5 0h1m5 0h1m17 0h3m6 0h1m12 0h1m1 0h1m1 0h2m1 0h1m4 0h1m15 0h1M10 98.5h1m4 0h2m1 0h1m5 0h1m8 0h1m5 0h2m2 0h1m3 0h1m4 0h1m2 0h1m4 0h1m3 0h1m4 0h1m2 0h1m3 0h1m9 0h1m1 0h1m6 0h1m4 0h1m1 0h1m12 0h1m1 0h1m1 0h1M0 99.5h1m6 0h2m7 0h2m16 0h1m1 0h1m3 0h4m3 0h1m3 0h1m8 0h1m1 0h1m8 0h1m17 0h1m1 0h1m5 0h1m12 0h2M6 100.5h1m6 0h1m9 0h1m1 0h1m1 0h1m11 0h1m4 0h1m10 0h1m5 0h2m4 0h1m5 0h1m5 0h2m7 0h1m4 0h2m6 0h1m1 0h1m13 0h1M0 101.5h1m5 0h1m5 0h1m1 0h1m2 0h1m6 0h1m10 0h1m6 0h1m2 0h1m18 0h1m3 0h1m3 0h1m1 0h1m4 0h2m21 0h1m20 0h1M4 102.5h1m5 0h1m5 0h1m2 0h1m6 0h1m6 0h2m18 0h2m1 0h1m10 0h1m5 0h1m10 0h1m22 0h1m3 0h1m14 0h1M16 103.5h1m7 0h1m1 0h1m11 0h1m2 0h1m22 0h1m1 0h1m2 0h2m4 0h2m16 0h2m22 0h1M1 104.5h2m5 0h1m6 0h2m18 0h2m20 0h1m10 0h2m3 0h1m1 0h1m12 0h1m1 0h1m16 0h1m6 0h1m2 0h1m7 0h1M3 105.5h1m1 0h1m16 0h2m2 0h1m7 0h1m2 0h1m21 0h1m14 0h2m16 0h1m25 0h1m5 0h1m1 0h1M3 106.5h1m4 0h3m1 0h1m5 0h1m7 0h1m3 0h1m2 0h1m11 0h1m6 0h1m2 0h1m14 0h1m4 0h2m5 0h1m14 0h1m2 0h1m6 0h2m15 0h1M1 107.5h2m11 0h1m8 0h1m23 0h3m2 0h1m4 0h1m11 0h1m16 0h2m24 0h2m1 0h1M0 108.5h1m9 0h1m4 0h1m30 0h1m9 0h1m19 0h1m13 0h1m5 0h1m18 0h1m2 0h1m6 0h2M8 109.5h1m13 0h1m25 0h1m12 0h1m1 0h1m13 0h1m15 0h1m8 0h1m5 0h1m5 0h1m2 0h1m5 0h1M7 110.5h1m9 0h1m17 0h2m11 0h1m7 0h2m12 0h1m10 0h1m2 0h1m14 0h1m7 0h1m2 0h2m5 0h1m9 0h1M0 111.5h1m1 0h1m3 0h1m1 0h2m13 0h1m8 0h1m22 0h1m10 0h1m8 0h1m4 0h1m1 0h1m2 0h1m6 0h1m1 0h1m12 0h1m3 0h1m2 0h1m4 0h1M13 112.5h1m3 0h2m10 0h1m4 0h1m2 0h1m1 0h1m4 0h1m4 0h1m22 0h1m24 0h2m24 0h1M5 113.5h2m1 0h1m4 0h1m7 0h2m1 0h2m5 0h2m8 0h1m7 0h2m14 0h1m2 0h1m2 0h1m7 0h1m11 0h2m9 0h1m2 0h2m6 0h1m2 0h1m4 0h2m2 0h1M0 114.5h1m1 0h1m1 0h1m7 0h1m8 0h1m2 0h1m8 0h1m14 0h1m2 0h2m22 0h1m6 0h1m11 0h1m4 0h1m10 0h1m7 0h1M10 115.5h1m16 0h1m11 0h1m1 0h1m3 0h1m3 0h1m6 0h1m1 0h1m15 0h1m10 0h1m24 0h1m3 0h1m2 0h1M0 116.5h1m17 0h1m2 0h1m2 0h1m10 0h1m6 0h1m5 0h2m8 0h1m1 0h1m8 0h1m29 0h1m10 0h1m7 0h1m1 0h1m1 0h2M3 117.5h1m1 0h1m5 0h1m9 0h1m2 0h1m12 0h1m26 0h1m1 0h1m4 0h1m6 0h1m16 0h1m2 0h1m11 0h3m3 0h2m5 0h1M8 118.5h1m1 0h1m7 0h1m7 0h1m8 0h1m8 0h1m3 0h1m6 0h1m4 0h1m5 0h1m1 0h1m11 0h2m11 0h1m1 0h1m6 0h1m2 0h2m5 0h1m2 0h1m3 0h1m3 0h1M3 119.5h1m13 0h1m6 0h1m14 0h1m12 0h1m2 0h1m20 0h1m11 0h1m1 0h1m8 0h2m2 0h1m1 0h1m4 0h1m6 0h1m3 0h1M10 120.5h1m20 0h1m6 0h1m5 0h1m16 0h1m1 0h1m23 0h1m1 0h2m1 0h1m6 0h1m22 0h1m2 0h1M1 121.5h3m8 0h1m1 0h1m11 0h2m7 0h1m9 0h1m12 0h1m8 0h2m1 0h1m9 0h1m1 0h1m6 0h1m6 0h2m5 0h1m5 0h1m12 0h1m1 0h2M2 122.5h1m4 0h1m2 0h1m9 0h1m4 0h1m1 0h1m14 0h1m8 0h1m15 0h1m2 0h2m13 0h1m2 0h1m7 0h1m2 0h1m3 0h1m11 0h4M1 123.5h1m1 0h1m5 0h1m2 0h1m2 0h1m10 0h1m2 0h2m3 0h1m4 0h2m3 0h1m5 0h2m29 0h1m12 0h1m4 0h1m1 0h1m15 0h1m5 0h1M8 124.5h1m2 0h1m8 0h1m1 0h1m27 0h2m5 0h1m4 0h1m11 0h1m6 0h1m6 0h1m15 0h1m8 0h1m7 0h1M0 125.5h1m16 0h1m7 0h1m10 0h1m3 0h2m5 0h1m4 0h1m4 0h1m4 0h2m3 0h2m21 0h1m14 0h2m6 0h2m3 0h1m8 0h1M15 126.5h1m16 0h1m3 0h1m7 0h2m13 0h1m2 0h1m12 0h1m1 0h2m10 0h1m1 0h1m20 0h1m2 0h1m6 0h1M0 127.5h1m5 0h2m10 0h1m12 0h1m2 0h1m15 0h1m10 0h1m3 0h2m6 0h2m14 0h2m12 0h2m1 0h1m4 0h1m7 0h1"/>
<path stroke="#ff5a00" stroke-width="1" fill="none" d="M17 0.5h1m4 0h1m1 0h3m1 0h1m5 0h1m1 0h1m2 0h2m10 0h1m7 0h2m1 0h3m6 0h1m5 0h2m1 0h1m5 0h2m7 0h1m8 0h2m6 0h1M3 1.5h1m5 0h1m6 0h1m2 0h1m4 0h1m17 0h2m12 0h1m13 0h1m3 0h1m3 0h1m3 0h1m8 0h1m1 0h1m2 0h1m3 0h1m11 0h1m9 0h1m2 0h2M5 2.5h1m2 0h1m3 0h1m2 0h3m1 0h1m5 0h1m2 0h1m6 0h1m1 0h1m4 0h1m12 0h1m1 0h2m1 0h1m1 0h2m3 0h2m22 0h1m2 0h1m2 0h1m4 0h2m1 0h1m2 0h1m12 0h4M14 3.5h2m3 0h1m1 0h1m1 0h1m8 0h2m2 0h2m1 0h1m13 0h2m6 0h2m1 0h2m5 0h1m2 0h1m2 0h2m5 0h1m15 0h1M9 4.5h1m10 0h1m2 0h1m9 0h1m5 0h1m5 0h1m1 0h1m1 0h1m6 0h1m3 0h1m2 0h1m4 0h1m2 0h1m5 0h1m3 0h2m10 0h1m16 0h1m4 0h1m7 0h1M0 5.5h1m2 0h1m4 0h1m2 0h1m6 0h1m2 0h1m14 0h1m2 0h2m1 0h1m2 0h1m3 0h1m1 0h1m1 0h1m2 0h1m4 0h2m5 0h2m2 0h1m3 0h1m3 0h2m1 0h1m7 0h1m6 0h1m2 0h1m1 0h1m3 0h1m2 0h1m5 0h1m2 0h1m2 0h1m1 0h1m1 0h1M3 6.5h1m1 0h1m1 0h1m1 0h1m9 0h1m2 0h1m9 0h1m5 0h1m4 0h1m6 0h1m3 0h2m12 0h1m1 0h1m3 0h1m9 0h3m2 0h2m3 0h1m7 0h1m17 0h4M7 7.5h1m2 0h1m12 0h1m1 0h1m9 0h2m2 0h1m8 0h1m6 0h1m2 0h1m15 0h1m2 0h1m5 0h1m6 0h2m8 0h1m1 0h2m8 0h1m4 0h1M4 8.5h3m3 0h1m2 0h1m2 0h1m7 0h1m3 0h2m10 0h1m6 0h1m8 0h1m1 0h1m2 0h2m3 0h1m1 0h2m8 0h1m5 0h1m1 0h1m1 0h4m2 0h1m3 0h1m6 0h1m10 0h1m4 0h1m2 0h1M16 9.5h1m3 0h1m1 0h1m2 0h1m4 0h1m13 0h1m12 0h1m24 0h1m4 0h1m3 0h1m4 0h1m3 0h1m16 0h1m4 0h1m2 0h1M4 10.5h1m5 0h4m14 0h1m13 0h1m1 0h1m1 0h2m1 0h2m1 0h1m3 0h1m2 0h1m6 0h1m3 0h2m3 0h1m1 0h3m1 0h1m1 0h1m1 0h1m11 0h2m6 0h1m4 0h1m4 0h1m11 0h1M3 11.5h2m16 0h2m5 0h1m11 0h1m1 0h2m5 0h2m4 0h1m1 0h3m6 0h1m9 0h1m12 0h1m10 0h2m1 0h1m7 0h1m9 0h2m2 0h1M4 12.5h1m4 0h1m7 0h1m4 0h1m1 0h1m10 0h1m6 0h1m3 0h2m3 0h1m2 0h1m1 0h1m1 0h1m2 0h1m5 0h1m7 0h1m8 0h2m13 0h1m9 0h1m4 0h1m1 0h1M14 13.5h2m2 0h1m6 0h1m4 0h1m2 0h1m2 0h1m6 0h1m6 0h1m4 0h1m4 0h1m1 0h2m6 0h1m1 0h1m1 0h1m4 0h1m5 0h1m5 0h1m4 0h1m5 0h1m1 0h2m2 0h2m6 0h1m4 0h1m1 0h1M6 14.5h1m12 0h1m5 0h2m6 0h1m8 0h1m9 0h1m5 0h1m2 0h2m3 0h2m13 0h1m5 0h1m2 0h2m5 0h1m7 0h2m1 0h1m9 0h2M8 15.5h1m2 0h2m9 0h1m9 0h3m1 0h1m1 0h1m5 0h1m2 0h1m8 0h1m5 0h1m7 0h1m1 0h1m9 0h1m3 0h1m5 0h1m2 0h1m1 0h1m8 0h2m9 0h1m1 0h1m7 0h1M2 16.5h1m3 0h1m3 0h1m3 0h1m1 0h2m3 0h1m16 0h1m5 0h1m16 0h1m8 0h1m5 0h2m2 0h2m9 0h2m2 0h1m18 0h1m2 0h2m1 0h1M7 17.5h1m8 0h1m1 0h2m4 0h1m4 0h1m16 0h1m8 0h1m3 0h1m5 0h1m2 0h1m5 0h1m9 0h1m4 0h1m4 0h1m5 0h1m1 0h1m1 0h1m4 0h2m3 0h1M6 18.5h1m9 0h2m4 0h1m3 0h1m9 0h1m10 0h1m4 0h1m1 0h1m1 0h1m3 0h1m2 0h1m4 0h1m3 0h1m1 0h1m1 0h1m11 0h1m3 0h1M10 19.5h2m1 0h1m11 0h1m19 0h2m8 0h1m3 0h1m3 0h1m1 0h1m6 0h2m8 0h1m3 0h1m8 0h1m2 0h1m7 0h1m1 0h1m8 0h1m4 0h1M4 20.5h1m3 0h2m7 0h1m16 0h2m2 0h2m2 0h2m4 0h1m2 0h1m5 0h2m1 0h1m3 0h1m1 0h1m1 0h1m1 0h1m7 0h1m2 0h3m1 0h1m4 0h2m3 0h1m1 0h1m2 0h1m12 0h1m3 0h1m1 0h1M4 21.5h1m7 0h1m1 0h1m3 0h2m4 0h1m3 0h1m3 0h1m4 0h3m8 0h1m17 0h2m15 0h2m10 0h1m1 0h1m3 0h1m6 0h1m12 0h1m3 0h1M1 22.5h2m3 0h1m9 0h1m1 0h1m4 0h1m12 0h1m2 0h1m4 0h1m1 0h1m8 0h2m2 0h2m1 0h1m4 0h2m1 0h2m5 0h2m5 0h2m1 0h2m5 0h1m3 0h1m3 0h1m3 0h1m2 0h1m2 0h1m1 0h2m5 0h1m2 0h1M0 23.5h1m7 0h1m15 0h1m3 0h1m6 0h5m7 0h1m1 0h1m1 0h1m6 0h1m2 0h1m2 0h1m3 0h1m2 0h1m3 0h1m16 0h2m1 0h1m13 0h2m10 0h1m1 0h1m2 0h2M10 24.5h1m11 0h1m5 0h1m1 0h2m18 0h1m1 0h1m2 0h2m12 0h1m7 0h1m11 0h1m2 0h2m18 0h1m11 0h1M5 25.5h1m1 0h1m1 0h1m18 0h1m8 0h1m6 0h1m27 0h1m1 0h1m1 0h2m11 0h1m16 0h1m6 0h1m11 0h1m1 0h1M4 26.5h1m4 0h1m2 0h1m1 0h1m6 0h2m5 0h2m7 0h1m7 0h1m3 0h1m32 0h1m4 0h1m3 0h4m6 0h1m14 0h2m1 0h1m1 0h4M2 27.5h1m2 0h1m5 0h1m15 0h2m8 0h1m4 0h1m1 0h2m5 0h1m6 0h1m3 0h1m2 0h1m2 0h1m10 0h1m3 0h1m6 0h3m1 0h1m10 0h1m6 0h1m3 0h3M4 28.5h1m2 0h2m9 0h2m1 0h1m2 0h1m3 0h1m5 0h1m6 0h1m6 0h2m2 0h2m7 0h2m1 0h1m2 0h1m2 0h1m2 0h1m11 0h1m3 0h1m1 0h1m2 0h1m18 0h1m7 0h1m4 0h1M4 29.5h1m11 0h1m12 0h1m1 0h1m9 0h1m2 0h2m3 0h1m2 0h1m1 0h4m2 0h1m16 0h1m2 0h2m4 0h1m1 0h1m5 0h1m2 0h1m4 0h2m3 0h6m9 0h1M4 30.5h1m2 0h1m1 0h1m2 0h2m5 0h1m2 0h1m19 0h1m6 0h2m7 0h1m22 0h1m1 0h1m1 0h1m3 0h1m29 0h1m5 0h1M3 31.5h1m15 0h1m4 0h1m1 0h1m12 0h1m5 0h1m7 0h1m9 0h1m5 0h1m11 0h1m3 0h1m1 0h2m3 0h1m9 0h2m9 0h2m3 0h3m4 0h1M4 32.5h1m6 0h1m3 0h1m1 0h1m4 0h1m5 0h1m3 0h1m1 0h1m5 0h1m4 0h1m14 0h1m7 0h1m3 0h2m1 0h1m1 0h1m3 0h1m10 0h1m12 0h3m6 0h1m1 0h2m4 0h1M13 33.5h1m4 0h1m20 0h1m5 0h1m5 0h2m21 0h1m7 0h1m1 0h1m2 0h1m3 0h1m2 0h1m4 0h1m4 0h1m1 0h2m3 0h1m2 0h2M2 34.5h1m20 0h1m8 0h2m4 0h1m17 0h1m5 0h3m1 0h2m10 0h1m1 0h1m1 0h1m10 0h2m5 0h1m9 0h1m2 0h1m4 0h1m5 0h1M2 35.5h2m4 0h2m15 0h1m1 0h2m2 0h1m2 0h1m9 0h2m14 0h1m1 0h1m7 0h1m8 0h1m5 0h1m4 0h1m2 0h1m2 0h1m17 0h2m11 0h1M1 36.5h1m5 0h1m9 0h1m6 0h1m9 0h2m5 0h1m2 0h1m11 0h1m5 0h2m6 0h1m7 0h1m1 0h1m3 0h1m15 0h1m2 0h1m3 0h1m2 0h1m1 0h1m3 0h1M1 37.5h1m6 0h1m1 0h2m18 0h1m3 0h1m4 0h1m1 0h1m1 0h1m1 0h2m2 0h1m5 0h3m5 0h2m5 0h1m3 0h1m7 0h3m5 0h1m13 0h2m4 0h1m13 0h2m1 0h1M1 38.5h3m10 0h1m5 0h1m3 0h1m1 0h1m2 0h1m6 0h1m4 0h1m3 0h1m19 0h1m2 0h1m2 0h1m21 0h1m5 0h1m7 0h2m4 0h1m5 0h1m6 0h2M0 39.5h1m2 0h1m9 0h1m4 0h2m1 0h1m5 0h1m1 0h1m1 0h1m12 0h1m3 0h1m4 0h1m7 0h1m1 0h2m14 0h1m5 0h1m1 0h1m2 0h3m5 0h1m5 0h1m11 0h1M2 40.5h1m8 0h1m6 0h1m5 0h2m2 0h1m2 0h1m1 0h1m2 0h2m9 0h1m8 0h1m19 0h1m8 0h1m4 0h2m1 0h2m14 0h1m1 0h1m6 0h3m6 0h1M1 41.5h2m1 0h1m3 0h1m17 0h1m2 0h1m3 0h1m1 0h2m7 0h1m5 0h1m15 0h2m2 0h1m8 0h2m2 0h2m4 0h2m26 0h2m5 0h1m1 0h1M3 42.5h1m3 0h1m10 0h1m9 0h2m16 0h1m4 0h1m1 0h2m4 0h2m2 0h1m7 0h1m20 0h2m1 0h1m7 0h1m2 0h1m3 0h1m1 0h1m3 0h2m7 0h1M0 43.5h2m5 0h1m1 0h1m2 0h1m14 0h1m5 0h1m10 0h1m3 0h1m3 0h1m2 0h2m11 0h3m1 0h1m11 0h1m3 0h1m3 0h1m6 0h1m2 0h1m2 0h1m1 0h2m7 0h1m1 0h1m5 0h1M0 44.5h1m1 0h2m2 0h1m1 0h1m6 0h1m4 0h1m17 0h1m3 0h2m17 0h1m1 0h1m2 0h1m3 0h1m3 0h1m5 0h1m2 0h1m10 0h1m14 0h1m7 0h1m2 0h1m1 0h1m1 0h1m1 0h2M2 45.5h1m4 0h1m1 0h1m5 0h1m1 0h2m2 0h2m3 0h2m3 0h1m1 0h1m9 0h1m7 0h1m1 0h1m6 0h3m8 0h2m6 0h1m3 0h1m24 0h1m3 0h2m2 0h1M0 46.5h1m6 0h1m5 0h1m1 0h2m13 0h1m1 0h1m10 0h1m16 0h2m7 0h1m3 0h1m2 0h1m1 0h2m2 0h1m2 0h1m2 0h2m3 0h1m9 0h1m5 0h1m2 0h2m4 0h1m6 0h1M0 47.5h1m1 0h3m7 0h1m7 0h1m11 0h2m4 0h1m1 0h1m8 0h1m3 0h1m3 0h1m5 0h1m3 0h1m2 0h2m1 0h3m1 0h1m2 0h1m1 0h2m4 0h1m3 0h1m2 0h2m4 0h2m1 0h3m2 0h1m10 0h1M3 48.5h1m1 0h1m1 0h1m3 0h1m2 0h1m3 0h1m3 0h1m7 0h2m4 0h1m3 0h1m12 0h1m3 0h1m3 0h2m5 0h1m7 0h1m3 0h3m1 0h1m14 0h1m20 0h1m1 0h1M8 49.5h2m3 0h1m1 0h1m4 0h1m4 0h1m12 0h1m10 0h1m8 0h1m8 0h1m5 0h1m2 0h1m8 0h2m5 0h3m4 0h1m8 0h1m1 0h1m9 0h1M15 50.5h2m3 0h1m20 0h1m1 0h1m6 0h1m2 0h1m1 0h1m18 0h1m4 0h1m10 0h1m5 0h1m4 0h1m7 0h1m5 0h1m1 0h1m5 0h2m1 0h1M3 51.5h3m1 0h1m2 0h1m2 0h1m12 0h1m1 0h1m2 0h1m1 0h1m6 0h1m8 0h1m1 0h2m7 0h1m2 0h1m3 0h1m19 0h1m11 0h1m22 0h1m2 0h1M0 52.5h1m11 0h1m17 0h1m6 0h3m2 0h1m5 0h1m9 0h1m5 0h2m1 0h1m2 0h1m5 0h1m2 0h1m1 0h1m17 0h3m6 0h1m5 0h1m8 0h1m2 0h1M8 53.5h1m2 0h1m3 0h1m2 0h1m12 0h1m11 0h1m2 0h1m2 0h2m6 0h2m3 0h1m14 0h1m3 0h1m6 0h2m10 0h1m9 0h1m1 0h1M0 54.5h2m1 0h2m5 0h1m1 0h1m2 0h1m1 0h2m3 0h1m3 0h1m12 0h3m6 0h1m5 0h1m11 0h1m1 0h1m5 0h1m13 0h1m2 0h1m2 0h1m4 0h1m2 0h1m13 0h1m2 0h2m3 0h1M3 55.5h1m4 0h1m2 0h1m3 0h1m3 0h1m5 0h1m6 0h1m2 0h1m1 0h1m5 0h1m11 0h1m2 0h1m1 0h1m2 0h1m4 0h1m1 0h3m9 0h1m4 0h1m4 0h1m1 0h1m1 0h1m5 0h1m3 0h1m8 0h2m2 0h2M2 56.5h2m1 0h1m7 0h1m5 0h1m1 0h1m3 0h1m20 0h1m3 0h1m14 0h1m2 0h1m2 0h1m3 0h1m3 0h2m5 0h1m1 0h1m1 0h1m1 0h1m1 0h1m4 0h1m7 0h1m1 0h2M3 57.5h1m6 0h1m1 0h1m1 0h1m3 0h1m2 0h1m2 0h1m4 0h2m14 0h1m1 0h1m1 0h1m7 0h3m9 0h4m2 0h2m4 0h2m2 0h1m1 0h1m9 0h1m2 0h1m2 0h1m8 0h1m8 0h1M14 58.5h1m9 0h1m5 0h2m1 0h1m2 0h1m18 0h1m4 0h1m2 0h1m8 0h1m9 0h1m2 0h1m6 0h2m3 0h1m5 0h1m4 0h2m1 0h1m14 0h1M6 59.5h1m21 0h1m10 0h1m1 0h1m2 0h1m22 0h1m2 0h1m25 0h1m29 0h1M11 60.5h1m3 0h1m3 0h1m13 0h1m2 0h1m6 0h2m1 0h1m5 0h1m3 0h1m1 0h1m6 0h1m3 0h1m2 0h2m11 0h1m5 0h1m7 0h1m2 0h1m5 0h1m9 0h1m4 0h1M12 61.5h2m2 0h1m2 0h1m1 0h1m8 0h1m6 0h2m6 0h1m1 0h1m4 0h1m3 0h1m2 0h1m1 0h3m3 0h1m4 0h1m7 0h1m1 0h1m9 0h1m2 0h1m9 0h1m6 0h3m2 0h1m2 0h1M0 62.5h2m2 0h1m1 0h1m1 0h1m4 0h1m2 0h1m19 0h1m6 0h1m9 0h1m11 0h1m6 0h2m3 0h1m6 0h1m3 0h1m10 0h1m1 0h1m8 0h1m3 0h1m1 0h1m1 0h1M4 63.5h1m8 0h2m5 0h2m1 0h1m4 0h1m1 0h1m10 0h1m4 0h1m9 0h3m3 0h2m3 0h1m1 0h3m3 0h2m7 0h3m1 0h1m6 0h1m1 0h1m1 0h1m9 0h1m2 0h1m4 0h1m1 0h1m2 0h1M2 64.5h1m11 0h1m8 0h4m3 0h1m2 0h2m16 0h2m1 0h1m9 0h1m14 0h2m4 0h1m3 0h3m5 0h1m7 0h1m9 0h1m3 0h1m1 0h1m4 0h1M4 65.5h1m7 0h2m1 0h1m9 0h1m3 0h1m2 0h1m4 0h1m8 0h1m3 0h1m1 0h1m4 0h2m18 0h1m1 0h1m2 0h1m2 0h1m2 0h1m9 0h2m5 0h2m8 0h2M1 66.5h1m1 0h3m6 0h2m1 0h1m5 0h2m1 0h1m6 0h1m16 0h1m8 0h1m1 0h1m7 0h1m1 0h1m7 0h1m16 0h1m4 0h1m6 0h1m7 0h1m1 0h2m3 0h1m1 0h1m3 0h1M16 67.5h1m6 0h1m5 0h1m2 0h1m14 0h1m15 0h1m4 0h1m10 0h1m8 0h1m11 0h1m1 0h2m1 0h1m9 0h1m6 0h1m4 0h1M0 68.5h1m23 0h1m9 0h1m6 0h1m1 0h3m4 0h1m3 0h2m2 0h1m7 0h1m8 0h1m8 0h1m1 0h1m1 0h1m2 0h1m2 0h1m6 0h1m2 0h2m7 0h1m4 0h1m1 0h2M2 69.5h1m11 0h2m2 0h2m4 0h1m10 0h1m11 0h1m3 0h1m10 0h1m9 0h1m5 0h1m16 0h1m21 0h1m3 0h1m2 0h1m1 0h2M0 70.5h1m10 0h1m2 0h1m13 0h1m4 0h1m5 0h1m7 0h1m7 0h2m6 0h1m4 0h1m4 0h1m12 0h1m16 0h1m7 0h1m4 0h1m3 0h1m3 0h2M8 71.5h1m16 0h1m16 0h1m7 0h1m22 0h2m3 0h1m10 0h1m9 0h2m9 0h2m2 0h1m7 0h2m3 0h1M12 72.5h1m4 0h1m1 0h1m4 0h1m2 0h1m9 0h1m9 0h1m3 0h2m11 0h1m4 0h2m1 0h1m8 0h1m7 0h1m2 0h1m1 0h1m1 0h1m7 0h1m9 0h1m3 0h1m1 0h1M0 73.5h2m2 0h2m3 0h1m4 0h1m3 0h1m5 0h1m1 0h1m6 0h1m5 0h1m2 0h1m15 0h1m1 0h1m2 0h1m2 0h1m9 0h1m3 0h1m3 0h2m1 0h1m1 0h1m4 0h1m1 0h1m3 0h2m5 0h1m2 0h2m2 0h1M10 74.5h1m1 0h1m5 0h1m5 0h1m1 0h1m1 0h1m13 0h1m2 0h1m17 0h1m2 0h2m10 0h1m4 0h2m5 0h1m3 0h1m3 0h1m2 0h1m4 0h2m3 0h1m3 0h2m8 0h2M3 75.5h1m1 0h1m14 0h1m2 0h1m1 0h1m1 0h1m3 0h1m1 0h1m10 0h1m4 0h1m9 0h2m4 0h1m14 0h1m8 0h1m3 0h1m6 0h1m4 0h1m3 0h1m2 0h2m3 0h1m6 0h1m1 0h2M1 76.5h1m4 0h1m16 0h1m3 0h1m2 0h1m13 0h1m6 0h1m5 0h1m6 0h1m3 0h1m3 0h1m25 0h2m12 0h1m1 0h1M1 77.5h1m5 0h2m6 0h1m4 0h1m1 0h1m16 0h1m4 0h1m5 0h1m4 0h1m2 0h1m17 0h1m1 0h1m1 0h1m1 0h3m9 0h1m3 0h2m5 0h1m1 0h1m4 0h1m1 0h1m5 0h3m2 0h2M14 78.5h1m3 0h1m4 0h1m1 0h1m7 0h1m2 0h1m5 0h1m7 0h1m16 0h1m5 0h1m6 0h1m4 0h1m3 0h3m9 0h1m4 0h1m8 0h1m5 0h1m1 0h1M5 79.5h1m2 0h2m10 0h1m4 0h1m5 0h3m13 0h1m1 0h1m1 0h1m5 0h1m4 0h1m4 0h1m6 0h1m3 0h2m4 0h2m2 0h1m3 0h1m6 0h1m1 0h2m1 0h1m3 0h1m2 0h1m3 0h2m2 0h1m1 0h1m2 0h2M0 80.5h1m2 0h1m1 0h1m5 0h1m7 0h1m4 0h1m8 0h1m5 0h1m2 0h1m8 0h1m2 0h1m1 0h1m1 0h1m8 0h1m6 0h1m1 0h1m1 0h2m16 0h1m2 0h1m7 0h1m17 0h1m1 0h1M5 81.5h1m2 0h1m3 0h1m4 0h1m11 0h1m10 0h1m8 0h1m2 0h1m4 0h3m13 0h2m3 0h1m4 0h1m9 0h1m2 0h1m6 0h1m5 0h1m2 0h2m1 0h1m4 0h1m4 0h1M1 82.5h1m9 0h2m20 0h1m1 0h1m3 0h1m1 0h1m10 0h1m1 0h2m1 0h2m7 0h1m3 0h1m1 0h1m2 0h1m6 0h1m2 0h1m3 0h1m1 0h1m10 0h2m8 0h2m4 0h1m2 0h1M3 83.5h1m11 0h1m7 0h1m4 0h1m2 0h1m10 0h1m24 0h1m15 0h1m1 0h1m1 0h2m5 0h1m3 0h1m1 0h1m7 0h1M2 84.5h1m1 0h1m3 0h1m3 0h1m2 0h3m2 0h1m1 0h1m1 0h1m6 0h2m2 0h1m4 0h1m5 0h1m3 0h2m3 0h1m2 0h1m6 0h1m6 0h1m6 0h1m2 0h2m1 0h1m1 0h1m4 0h1m1 0h1m5 0h1m1 0h1m21 0h2M0 85.5h1m2 0h1m1 0h1m16 0h1m6 0h1m15 0h1m17 0h2m4 0h2m4 0h1m2 0h2m3 0h1m8 0h3m1 0h3m2 0h3m8 0h1m1 0h1m4 0h2m2 0h1m3 0h1M3 86.5h1m8 0h1m1 0h1m2 0h1m12 0h1m17 0h1m3 0h1m7 0h1m4 0h1m1 0h1m6 0h2m4 0h1m19 0h1m7 0h1m10 0h2M1 87.5h1m2 0h1m2 0h1m1 0h1m4 0h1m1 0h1m3 0h1m3 0h1m3 0h1m1 0h1m5 0h1m9 0h1m1 0h2m11 0h1m8 0h1m6 0h1m11 0h1m1 0h3m1 0h1m1 0h1m9 0h1m1 0h1m1 0h1m5 0h1M14 88.5h2m11 0h1m5 0h1m4 0h1m1 0h1m19 0h1m2 0h2m6 0h2m2 0h1m2 0h1m5 0h1m3 0h1m3 0h1m3 0h1m8 0h1m1 0h1m9 0h1M0 89.5h1m16 0h1m3 0h1m7 0h1m1 0h1m4 0h1m3 0h1m5 0h1m4 0h1m12 0h2m1 0h1m3 0h1m12 0h1m1 0h1m6 0h1m6 0h1m11 0h1m1 0h1m10 0h1M2 90.5h2m17 0h1m2 0h1m6 0h1m2 0h1m17 0h1m10 0h1m8 0h2m6 0h1m1 0h1m1 0h1m2 0h2m9 0h2m2 0h1m2 0h4m1 0h1m7 0h1M10 91.5h1m4 0h2m7 0h1m20 0h1m5 0h1m2 0h2m3 0h1m21 0h2m1 0h2m4 0h1m10 0h1m8 0h1m2 0h2m5 0h2m5 0h1M1 92.5h1m6 0h1m12 0h1m3 0h2m3 0h1m1 0h1m1 0h2m8 0h1m6 0h1m3 0h1m1 0h2m1 0h1m5 0h1m4 0h1m5 0h2m3 0h1m10 0h1m1 0h3m3 0h1m4 0h1m1 0h1m2 0h3m1 0h1m2 0h1m2 0h2m1 0h1M13 93.5h1m7 0h2m1 0h2m2 0h1m8 0h1m5 0h2m4 0h2m5 0h1m8 0h1m2 0h1m1 0h1m2 0h1m1 0h1m4 0h1m2 0h1m1 0h2m16 0h1m4 0h1m3 0h1m6 0h1m6 0h1M3 94.5h1m1 0h2m3 0h1m8 0h1m14 0h1m2 0h2m5 0h1m1 0h2m1 0h2m1 0h1m1 0h1m2 0h1m10 0h1m29 0h1m8 0h1m7 0h1m4 0h1m2 0h2M0 95.5h2m8 0h1m11 0h1m4 0h3m2 0h1m1 0h1m6 0h1m1 0h1m10 0h1m1 0h2m5 0h2m1 0h1m2 0h2m3 0h1m1 0h1m9 0h1m6 0h1m2 0h1m3 0h1m1 0h1m5 0h1m1 0h1m3 0h1m7 0h1M5 96.5h1m10 0h1m1 0h2m18 0h1m7 0h1m1 0h1m16 0h1m1 0h2m2 0h3m3 0h1m2 0h1m4 0h1m11 0h1m1 0h1m5 0h1m4 0h1m2 0h1m1 0h1m7 0h1m2 0h1M1 97.5h1m2 0h1m1 0h1m7 0h1m18 0h1m12 0h1m8 0h1m1 0h1m1 0h1m1 0h1m6 0h1m2 0h1m16 0h1m3 0h1m7 0h1m2 0h1m9 0h1m2 0h1M0 98.5h1m5 0h1m1 0h2m2 0h1m4 0h1m3 0h1m5 0h1m13 0h1m15 0h2m8 0h1m7 0h1m7 0h1m1 0h1m1 0h1m16 0h1m2 0h1m1 0h1m10 0h1m1 0h1M15 99.5h1m2 0h1m4 0h1m6 0h1m4 0h1m8 0h1m12 0h1m3 0h1m6 0h1m9 0h3m6 0h1m6 0h2m3 0h1m2 0h2m12 0h1m1 0h2m1 0h1M3 100.5h1m3 0h3m12 0h1m15 0h1m19 0h1m5 0h1m1 0h1m5 0h1m3 0h1m4 0h1m15 0h2m7 0h1M28 101.5h1m3 0h1m1 0h1m3 0h1m13 0h1m9 0h1m15 0h1m7 0h1m8 0h1m3 0h1m9 0h2m6 0h1M15 102.5h1m2 0h1m1 0h1m17 0h1m5 0h1m13 0h1m4 0h1m6 0h1m5 0h1m1 0h1m2 0h1m10 0h1m1 0h4m2 0h2m11 0h1m9 0h1M3 103.5h2m2 0h1m9 0h2m6 0h1m1 0h1m3 0h1m13 0h1m5 0h1m2 0h1m1 0h1m16 0h1m4 0h1m4 0h1m3 0h2m2 0h1m7 0h1m6 0h1m3 0h2m1 0h1m4 0h1m4 0h1m3 0h1M9 104.5h1m2 0h1m1 0h1m3 0h1m5 0h1m7 0h3m7 0h1m7 0h1m1 0h1m3 0h1m5 0h2m8 0h1m9 0h1m2 0h1m1 0h1m10 0h2m2 0h1m8 0h1m14 0h2M8 105.5h1m15 0h1m2 0h1m2 0h1m1 0h2m7 0h1m3 0h1m9 0h2m7 0h1m18 0h1m14 0h1m1 0h1m3 0h1m5 0h1m3 0h1m4 0h1M0 106.5h2m3 0h1m7 0h1m6 0h1m2 0h2m6 0h1m4 0h2m2 0h1m18 0h1m6 0h4m4 0h1m6 0h1m7 0h1m1 0h1m6 0h1m3 0h1m2 0h1m3 0h4m12 0h1M3 107.5h1m1 0h2m1 0h1m2 0h1m7 0h1m8 0h1m2 0h1m3 0h1m7 0h2m1 0h1m6 0h1m5 0h1m4 0h3m4 0h1m2 0h1m2 0h2m10 0h1m2 0h1m6 0h2m3 0h1m6 0h1m4 0h1m4 0h1M3 108.5h1m1 0h1m17 0h1m1 0h2m6 0h1m7 0h2m1 0h2m6 0h1m27 0h1m3 0h1m7 0h1m4 0h1m3 0h1m3 0h1m5 0h1m5 0h1m3 0h1M0 109.5h1m2 0h1m16 0h1m3 0h1m3 0h1m5 0h2m4 0h1m2 0h2m1 0h1m7 0h1m21 0h1m3 0h1m11 0h1m5 0h1m1 0h1m2 0h1m6 0h3m2 0h2m1 0h1M1 110.5h1m2 0h1m7 0h2m2 0h1m9 0h2m27 0h1m4 0h1m2 0h1m2 0h1m5 0h1m21 0h2m2 0h1m5 0h1m1 0h1m12 0h1m5 0h1M5 111.5h1m8 0h1m1 0h1m11 0h1m5 0h1m3 0h1m3 0h2m3 0h2m1 0h1m1 0h1m5 0h1m10 0h1m2 0h1m1 0h1m4 0h1m3 0h1m7 0h1m4 0h1m4 0h1m3 0h1m6 0h1m5 0h1m2 0h1m1 0h2m2 0h1M11 112.5h1m3 0h1m25 0h1m6 0h1m3 0h2m2 0h1m3 0h1m10 0h1m6 0h1m1 0h1m4 0h2m6 0h1m15 0h1m5 0h1m11 0h1M14 113.5h1m2 0h1m11 0h1m13 0h2m1 0h2m35 0h2m9 0h1m1 0h1m3 0h1m3 0h1m6 0h1m7 0h1m4 0h1M1 114.5h1m14 0h2m9 0h1m15 0h1m3 0h1m6 0h1m4 0h2m4 0h2m6 0h2m11 0h1m8 0h2m1 0h1m3 0h2m4 0h1m3 0h1m6 0h1m3 0h4M5 115.5h1m9 0h1m18 0h1m2 0h1m10 0h1m3 0h1m1 0h2m5 0h2m13 0h2m4 0h1m3 0h1m1 0h1m12 0h4m2 0h1m3 0h1m7 0h1m1 0h1m2 0h1M15 116.5h2m6 0h1m1 0h1m1 0h1m4 0h2m3 0h1m5 0h1m6 0h1m4 0h1m5 0h1m4 0h2m17 0h1m5 0h1m3 0h1m1 0h2m8 0h1m5 0h2m1 0h1m8 0h1M2 117.5h1m1 0h1m1 0h1m5 0h1m3 0h2m1 0h1m2 0h1m9 0h1m1 0h2m14 0h1m6 0h2m9 0h1m10 0h1m3 0h1m4 0h1m1 0h1m14 0h1m2 0h1m11 0h1m1 0h1m1 0h1M0 118.5h1m1 0h1m12 0h1m1 0h1m6 0h1m7 0h1m13 0h1m2 0h1m4 0h1m12 0h1m5 0h1m4 0h1m7 0h1m2 0h1m1 0h1m2 0h1m5 0h1m6 0h1m2 0h1m2 0h2m3 0h1m1 0h1M10 119.5h1m2 0h1m1 0h1m4 0h1m1 0h1m6 0h2m2 0h1m3 0h1m9 0h2m1 0h1m2 0h1m2 0h1m6 0h1m4 0h2m1 0h1m7 0h1m3 0h1m2 0h2m4 0h2m2 0h1m11 0h1m4 0h1m1 0h1m7 0h1m1 0h1M2 120.5h1m3 0h1m8 0h1m8 0h1m2 0h1m4 0h2m2 0h1m5 0h1m2 0h1m9 0h2m3 0h1m1 0h1m2 0h1m3 0h1m4 0h1m2 0h1m1 0h1m5 0h1m2 0h1m6 0h2m9 0h1m1 0h1m1 0h1m1 0h1m6 0h3m4 0h1M4 121.5h2m10 0h1m7 0h2m2 0h1m1 0h1m3 0h1m8 0h1m6 0h2m8 0h1m10 0h1m1 0h2m6 0h1m1 0h1m4 0h1m3 0h1m5 0h1m2 0h1m5 0h1m15 0h1m2 0h1M4 122.5h1m3 0h1m6 0h1m2 0h1m5 0h1m9 0h2m7 0h1m1 0h1m3 0h2m1 0h1m3 0h1m12 0h1m3 0h1m26 0h1m3 0h1m3 0h1m4 0h1m7 0h1M0 123.5h1m10 0h1m1 0h1m2 0h1m2 0h1m5 0h1m2 0h1m6 0h1m5 0h1m3 0h1m2 0h1m3 0h1m1 0h1m2 0h1m6 0h1m1 0h1m6 0h1m6 0h1m2 0h1m2 0h1m4 0h1m3 0h1m2 0h1m1 0h1m1 0h2m20 0h1M1 124.5h1m3 0h1m11 0h1m3 0h1m5 0h1m2 0h1m2 0h1m7 0h1m1 0h2m1 0h2m8 0h1m9 0h1m18 0h1m3 0h2m8 0h2m5 0h1m2 0h1m10 0h1m6 0h1M8 125.5h1m13 0h2m10 0h1m9 0h2m25 0h1m4 0h1m3 0h1m2 0h1m3 0h2m2 0h2m5 0h1m13 0h1m6 0h1m1 0h1m3 0h1M5 126.5h1m1 0h4m7 0h1m2 0h1m16 0h2m17 0h1m3 0h1m7 0h2m3 0h1m7 0h1m1 0h1m2 0h1m15 0h2m13 0h1m2 0h1m3 0h1M2 127.5h2m1 0h1m2 0h1m2 0h2m1 0h1m6 0h1m2 0h1m3 0h1m4 0h1m7 0h2m2 0h3m5 0h1m4 0h2m11 0h1m7 0h2m10 0h1m8 0h1m14 0h1m4 0h1"/>
<path stroke="#ff8600" stroke-width="1" fill="none" d="M5 0.5h1m8 0h1m8 0h1m5 0h2m1 0h1m14 0h1m4 0h1m4 0h1m11 0h1m3 0h1m5 0h1m2 0h3m4 0h1m2 0h1m6 0h1m3 0h1m4 0h2m4 0h6m1 0h1m5 0h1M0 1.5h1m3 0h1m2 0h1m2 0h1m6 0h2m8 0h1m2 0h2m3 0h1m1 0h1m8 0h1m2 0h1m7 0h1m5 0h1m7 0h1m3 0h1m5 0h1m2 0h1m7 0h1m4 0h1m5 0h2m12 0h4m3 0h1M2 2.5h1m1 0h1m5 0h2m1 0h2m6 0h1m2 0h1m7 0h1m1 0h1m1 0h1m11 0h3m1 0h3m4 0h1m4 0h1m4 0h1m5 0h1m11 0h2m15 0h1m2 0h1m1 0h1m5 0h1M1 3.5h2m2 0h1m1 0h1m2 0h1m1 0h1m4 0h1m6 0h1m10 0h1m2 0h1m2 0h2m6 0h2m5 0h1m2 0h2m2 0h1m11 0h1m9 0h1m20 0h1m4 0h1m5 0h1m1 0h1m3 0h1M1 4.5h1m2 0h2m20 0h1m5 0h1m2 0h1m2 0h1m2 0h1m1 0h1m2 0h1m1 0h1m3 0h1m1 0h1m4 0h1m2 0h1m4 0h1m4 0h1m2 0h1m8 0h1m5 0h1m4 0h1m4 0h1m4 0h1m6 0h2m2 0h1m4 0h1M4 5.5h2m1 0h1m1 0h1m5 0h1m3 0h1m4 0h1m6 0h2m5 0h1m7 0h1m1 0h1m5 0h1m8 0h1m14 0h2m2 0h1m2 0h2m1 0h2m6 0h1m2 0h1m13 0h1m13 0h1M6 6.5h1m3 0h1m5 0h2m2 0h1m2 0h1m12 0h1m3 0h1m4 0h1m2 0h1m15 0h2m5 0h2m3 0h1m1 0h1m18 0h1m5 0h1m13 0h1M1 7.5h1m1 0h1m7 0h3m7 0h1m5 0h2m1 0h1m1 0h1m5 0h1m1 0h1m1 0h1m3 0h2m2 0h1m2 0h1m13 0h1m2 0h3m23 0h1m12 0h1m4 0h1m5 0h1m4 0h1M8 8.5h2m2 0h1m1 0h1m2 0h2m1 0h2m12 0h1m1 0h2m5 0h1m5 0h1m3 0h1m11 0h1m8 0h1m1 0h1m4 0h1m1 0h1m9 0h1m3 0h1m3 0h2m4 0h1m3 0h1m1 0h1m6 0h1m4 0h1M0 9.5h1m2 0h1m1 0h1m1 0h1m26 0h1m6 0h1m3 0h2m3 0h1m2 0h1m1 0h2m1 0h2m3 0h1m4 0h1m7 0h2m2 0h1m3 0h2m7 0h2m8 0h1m7 0h1m3 0h2M8 10.5h1m7 0h1m5 0h1m8 0h1m1 0h3m21 0h1m5 0h3m1 0h1m1 0h1m3 0h1m10 0h1m5 0h1m4 0h1m5 0h2m3 0h1m6 0h1m3 0h1m2 0h2m1 0h1M5 11.5h1m4 0h1m5 0h1m3 0h1m2 0h2m1 0h1m3 0h1m8 0h1m13 0h1m2 0h1m11 0h1m9 0h1m16 0h1m9 0h1m1 0h3m2 0h1m5 0h2M11 12.5h1m3 0h1m14 0h1m6 0h2m9 0h1m4 0h1m1 0h1m6 0h2m12 0h1m3 0h1m2 0h1m4 0h1m2 0h3m8 0h1m2 0h1m1 0h1m2 0h1m6 0h1m4 0h1m3 0h1M1 13.5h2m5 0h2m7 0h1m2 0h2m5 0h2m3 0h1m6 0h1m1 0h1m10 0h1m1 0h1m4 0h1m6 0h1m1 0h1m6 0h1m4 0h1m1 0h1m4 0h2m3 0h2m9 0h1m2 0h1m7 0h1m3 0h1m1 0h1m1 0h1m4 0h1M8 14.5h2m1 0h3m1 0h1m4 0h1m1 0h1m7 0h2m8 0h2m1 0h1m3 0h1m11 0h1m3 0h1m13 0h1m2 0h1m19 0h2m1 0h2m5 0h1m4 0h1m4 0h2m1 0h1m1 0h1M6 15.5h1m7 0h1m1 0h1m11 0h1m14 0h1m8 0h1m4 0h5m19 0h1m7 0h1m3 0h1m6 0h1m10 0h2m3 0h1m3 0h1m5 0h1M7 16.5h2m13 0h2m6 0h1m11 0h1m8 0h1m2 0h4m10 0h2m1 0h2m1 0h1m10 0h1m7 0h1m3 0h1m5 0h3m10 0h1m4 0h1m2 0h1m1 0h1M2 17.5h2m1 0h2m4 0h3m14 0h1m10 0h1m2 0h2m1 0h1m4 0h4m3 0h1m23 0h1m14 0h1m1 0h1m6 0h1m1 0h1m7 0h2m8 0h1M5 18.5h1m2 0h2m9 0h1m12 0h1m4 0h1m2 0h2m4 0h1m2 0h2m6 0h1m12 0h1m4 0h1m5 0h1m8 0h1m2 0h1m3 0h1m1 0h1m7 0h2m4 0h1m1 0h1m5 0h1M4 19.5h1m1 0h1m5 0h1m8 0h1m4 0h1m1 0h1m3 0h1m17 0h1m1 0h1m5 0h1m5 0h1m6 0h1m6 0h1m11 0h2m4 0h1m3 0h1m10 0h1m1 0h2m3 0h1m2 0h1m2 0h1m2 0h1M0 20.5h1m1 0h1m11 0h1m5 0h1m3 0h1m1 0h2m3 0h1m1 0h1m6 0h2m3 0h2m9 0h1m6 0h1m1 0h1m1 0h1m4 0h1m3 0h1m7 0h1m1 0h1m2 0h1m3 0h1m2 0h1m1 0h2m5 0h5m1 0h2m3 0h1m5 0h1m1 0h1M1 21.5h1m1 0h1m2 0h1m1 0h1m16 0h1m3 0h3m3 0h2m3 0h2m10 0h1m10 0h1m1 0h1m3 0h1m1 0h1m1 0h2m2 0h1m1 0h1m2 0h1m3 0h1m5 0h1m5 0h1m8 0h1m4 0h2m1 0h1m3 0h1m3 0h2M4 22.5h1m2 0h1m5 0h2m2 0h1m1 0h1m1 0h1m7 0h1m2 0h1m1 0h1m2 0h1m3 0h2m7 0h1m1 0h1m19 0h2m6 0h1m2 0h1m2 0h1m5 0h2m1 0h2m8 0h1m10 0h1m1 0h1m4 0h1m2 0h1M2 23.5h1m1 0h1m2 0h1m3 0h1m1 0h1m2 0h1m1 0h1m4 0h1m2 0h1m3 0h2m8 0h2m4 0h1m1 0h1m3 0h1m4 0h1m7 0h2m7 0h1m1 0h1m2 0h1m3 0h2m1 0h1m1 0h1m8 0h4m1 0h1m8 0h1m1 0h2m2 0h2m6 0h1M16 24.5h2m5 0h2m2 0h1m7 0h2m1 0h1m3 0h1m8 0h1m2 0h1m7 0h1m5 0h1m1 0h1m11 0h1m8 0h1m7 0h1m8 0h3m9 0h1m1 0h1M8 25.5h1m1 0h1m6 0h1m4 0h1m1 0h1m9 0h1m4 0h1m7 0h1m4 0h2m6 0h1m1 0h1m5 0h1m2 0h1m12 0h1m8 0h1m2 0h1m7 0h1m7 0h1m2 0h1m1 0h2m5 0h1M1 26.5h1m3 0h1m4 0h2m1 0h1m5 0h1m21 0h3m7 0h1m7 0h1m3 0h1m2 0h1m4 0h1m4 0h1m7 0h1m10 0h1m10 0h2m6 0h2m11 0h1M0 27.5h1m2 0h1m2 0h2m7 0h2m9 0h1m4 0h1m8 0h1m2 0h1m2 0h1m1 0h1m1 0h1m1 0h1m2 0h2m6 0h1m5 0h2m11 0h1m2 0h1m7 0h1m1 0h1m1 0h1m6 0h1m9 0h1m7 0h2m2 0h2M6 28.5h1m6 0h1m2 0h1m8 0h1m3 0h1m2 0h1m4 0h1m5 0h1m1 0h2m3 0h1m3 0h1m2 0h1m2 0h1m13 0h1m1 0h1m2 0h1m7 0h1m7 0h2m6 0h1m7 0h1m11 0h2m2 0h1M0 29.5h1m1 0h1m2 0h1m2 0h1m2 0h2m5 0h1m6 0h2m5 0h1m3 0h1m6 0h1m2 0h1m20 0h1m3 0h2m1 0h1m10 0h1m3 0h2m9 0h1m4 0h2m10 0h1m5 0h1m2 0h1M0 30.5h1m2 0h1m4 0h1m8 0h1m3 0h1m4 0h1m1 0h1m2 0h1m6 0h1m1 0h1m7 0h1m6 0h3m9 0h1m1 0h1m2 0h2m4 0h1m3 0h1m10 0h1m4 0h1m1 0h1m1 0h2m1 0h3m4 0h1m3 0h1m10 0h1M1 31.5h2m1 0h1m2 0h1m2 0h2m1 0h1m4 0h1m2 0h1m10 0h1m2 0h1m2 0h1m1 0h1m2 0h1m11 0h1m5 0h1m2 0h1m2 0h2m7 0h1m12 0h1m11 0h1m4 0h1m5 0h1m4 0h1M7 32.5h2m3 0h1m1 0h1m3 0h1m5 0h1m2 0h1m9 0h1m4 0h2m4 0h1m2 0h1m2 0h1m7 0h1m2 0h1m4 0h1m5 0h1m7 0h1m12 0h1m2 0h1m7 0h1m6 0h1m7 0h1m1 0h1M7 33.5h2m2 0h2m3 0h2m4 0h1m3 0h1m3 0h1m9 0h2m1 0h2m10 0h2m6 0h1m4 0h1m12 0h1m18 0h2m1 0h1m14 0h1m2 0h1m3 0h1m1 0h1M4 34.5h1m4 0h1m4 0h1m1 0h1m1 0h2m2 0h1m16 0h1m2 0h3m6 0h3m1 0h1m1 0h1m1 0h2m14 0h1m9 0h1m1 0h1m9 0h1m4 0h1m1 0h1m6 0h1m4 0h2m4 0h1m3 0h2M4 35.5h1m10 0h1m6 0h1m1 0h1m1 0h1m3 0h1m8 0h1m6 0h1m1 0h2m1 0h2m8 0h1m10 0h1m3 0h1m1 0h1m10 0h1m1 0h1m6 0h1m1 0h1m2 0h1m12 0h2m7 0h1M0 36.5h1m2 0h1m6 0h2m8 0h1m7 0h2m7 0h1m7 0h1m14 0h1m4 0h2m7 0h1m13 0h2m1 0h2m26 0h1m1 0h1M2 37.5h2m3 0h1m4 0h2m5 0h1m1 0h2m2 0h2m1 0h1m2 0h1m15 0h1m3 0h2m6 0h1m1 0h2m2 0h2m4 0h1m3 0h2m1 0h2m1 0h1m9 0h2m2 0h2m4 0h2m5 0h2m1 0h3m3 0h1m1 0h1m6 0h1M18 38.5h1m3 0h1m2 0h1m2 0h1m4 0h1m4 0h1m8 0h1m5 0h3m1 0h1m1 0h1m10 0h1m1 0h1m1 0h2m4 0h1m4 0h1m2 0h1m5 0h2m2 0h1m1 0h1m4 0h2m5 0h1m2 0h2m6 0h2M4 39.5h1m5 0h1m3 0h2m1 0h1m10 0h1m5 0h2m2 0h2m11 0h1m3 0h2m1 0h1m3 0h1m5 0h1m3 0h1m1 0h1m5 0h1m3 0h1m3 0h2m7 0h1m2 0h1m4 0h1m1 0h1m2 0h2m1 0h1m12 0h1M3 40.5h1m1 0h1m17 0h1m2 0h1m3 0h1m9 0h1m9 0h1m3 0h1m2 0h2m11 0h1m10 0h1m16 0h1m4 0h1m6 0h1m1 0h1m3 0h1m8 0h1M5 41.5h1m3 0h1m4 0h1m7 0h1m23 0h1m4 0h1m22 0h2m10 0h1m15 0h2m5 0h1m4 0h1m8 0h1M0 42.5h2m4 0h1m4 0h1m1 0h1m7 0h1m4 0h1m4 0h3m5 0h1m15 0h2m1 0h1m3 0h1m5 0h3m4 0h1m2 0h1m3 0h1m2 0h2m2 0h1m7 0h1m1 0h1m7 0h1m3 0h1m6 0h2m1 0h1m2 0h1M3 43.5h2m3 0h1m6 0h1m3 0h2m1 0h2m1 0h1m3 0h2m5 0h1m10 0h1m10 0h2m3 0h2m9 0h2m1 0h1m2 0h1m4 0h3m3 0h1m6 0h1m4 0h2m5 0h1m6 0h1m1 0h1m7 0h1M10 44.5h2m6 0h1m3 0h1m12 0h2m3 0h2m5 0h1m3 0h2m1 0h1m2 0h1m9 0h1m5 0h1m2 0h1m7 0h1m1 0h1m10 0h1m4 0h1m20 0h1M1 45.5h1m1 0h1m4 0h1m2 0h2m12 0h1m4 0h1m13 0h1m5 0h1m3 0h1m8 0h1m11 0h1m2 0h1m12 0h1m4 0h2m4 0h1m2 0h1m17 0h1m1 0h1M5 46.5h2m3 0h1m8 0h1m3 0h1m1 0h1m10 0h1m1 0h2m6 0h1m3 0h4m10 0h1m3 0h1m2 0h1m2 0h1m6 0h1m1 0h2m2 0h1m6 0h1m2 0h1m8 0h1m7 0h1m1 0h1m4 0h1m2 0h1M1 47.5h1m9 0h1m5 0h3m8 0h1m1 0h1m4 0h2m5 0h2m7 0h2m3 0h1m4 0h1m6 0h1m10 0h1m13 0h1m3 0h1m1 0h1m3 0h1m8 0h2m1 0h1m10 0h2M6 48.5h1m1 0h1m7 0h1m2 0h1m4 0h2m2 0h2m5 0h1m3 0h1m1 0h1m8 0h2m12 0h1m7 0h1m4 0h1m1 0h1m16 0h3m6 0h4m1 0h1m2 0h1m2 0h2m9 0h1M11 49.5h1m2 0h1m3 0h2m2 0h3m5 0h1m2 0h2m2 0h1m1 0h2m2 0h1m8 0h1m2 0h3m1 0h1m2 0h1m3 0h1m7 0h1m16 0h1m8 0h1m3 0h1m2 0h1m3 0h2m3 0h3m5 0h1m1 0h1M7 50.5h1m1 0h1m2 0h1m1 0h1m4 0h1m2 0h1m3 0h1m5 0h1m3 0h3m3 0h1m2 0h1m6 0h1m13 0h3m9 0h1m1 0h1m23 0h1m11 0h1m1 0h3M2 51.5h1m5 0h1m7 0h1m1 0h1m6 0h1m1 0h1m4 0h1m3 0h2m7 0h1m1 0h1m7 0h2m7 0h2m2 0h2m18 0h3m1 0h2m2 0h1m4 0h1m1 0h1m7 0h1M2 52.5h1m3 0h2m3 0h1m5 0h1m10 0h2m24 0h2m7 0h1m4 0h1m2 0h1m10 0h2m5 0h4m1 0h2m1 0h1m4 0h1m1 0h1m7 0h1m2 0h2m1 0h2m5 0h1M0 53.5h1m3 0h1m14 0h1m3 0h2m7 0h1m6 0h1m11 0h1m1 0h1m2 0h1m2 0h1m7 0h1m6 0h1m3 0h1m1 0h1m1 0h1m1 0h2m8 0h1m12 0h2m4 0h1m2 0h2m1 0h1m2 0h1m2 0h2M7 54.5h1m8 0h1m7 0h2m1 0h1m2 0h1m5 0h1m1 0h1m3 0h1m6 0h2m2 0h1m4 0h1m5 0h1m5 0h3m3 0h1m1 0h4m2 0h1m2 0h1m2 0h1m5 0h1m1 0h1m4 0h1m7 0h1m1 0h1m1 0h1m2 0h1m2 0h1M4 55.5h1m16 0h1m4 0h1m3 0h1m5 0h1m3 0h1m6 0h1m11 0h1m1 0h1m4 0h1m8 0h1m1 0h1m10 0h1m1 0h1m13 0h1m3 0h1m5 0h1m6 0h2m2 0h2M1 56.5h1m2 0h1m2 0h1m6 0h2m6 0h1m4 0h1m3 0h2m2 0h1m2 0h1m3 0h1m1 0h1m3 0h1m2 0h1m2 0h1m5 0h2m1 0h1m2 0h2m1 0h1m13 0h1m13 0h1m3 0h1m3 0h2m1 0h1m5 0h1m1 0h1m1 0h2m2 0h1M6 57.5h1m4 0h1m4 0h1m16 0h2m8 0h1m2 0h1m1 0h1m1 0h1m1 0h1m3 0h1m10 0h1m9 0h1m2 0h1m3 0h1m6 0h1m7 0h1m5 0h1m4 0h1m2 0h1m13 0h1M2 58.5h1m4 0h1m1 0h1m1 0h1m3 0h1m4 0h1m2 0h1m3 0h1m7 0h1m1 0h1m1 0h5m1 0h1m15 0h1m5 0h1m1 0h1m8 0h1m5 0h1m3 0h1m11 0h1m15 0h1m1 0h1m5 0h1m2 0h1M1 59.5h1m9 0h1m2 0h2m3 0h1m3 0h1m3 0h1m2 0h2m3 0h1m4 0h1m6 0h1m6 0h1m4 0h1m1 0h1m6 0h1m2 0h1m10 0h2m1 0h1m1 0h1m7 0h1m1 0h1m2 0h1m6 0h1m5 0h1m1 0h1m4 0h1m6 0h1M3 60.5h1m3 0h1m2 0h1m1 0h2m2 0h1m3 0h1m5 0h1m1 0h2m1 0h1m3 0h1m3 0h1m1 0h1m3 0h1m11 0h1m2 0h1m7 0h1m2 0h1m2 0h1m5 0h2m19 0h1m2 0h1m4 0h1m12 0h1m1 0h1m1 0h1M7 61.5h3m4 0h1m2 0h1m6 0h1m1 0h1m7 0h1m6 0h1m1 0h1m13 0h1m11 0h1m4 0h1m4 0h1m3 0h1m3 0h2m5 0h1m3 0h1m8 0h2m7 0h1m1 0h1m2 0h1m3 0h3M9 62.5h4m1 0h1m9 0h1m1 0h3m2 0h1m6 0h1m1 0h1m7 0h1m3 0h1m2 0h1m1 0h1m5 0h1m4 0h1m2 0h1m9 0h1m4 0h2m27 0h1m1 0h1m7 0h1M5 63.5h1m4 0h2m5 0h1m8 0h1m9 0h1m1 0h1m1 0h1m2 0h1m4 0h1m4 0h1m18 0h2m4 0h2m10 0h1m3 0h1m5 0h1m2 0h1m4 0h1m4 0h1m1 0h1m8 0h1M0 64.5h2m1 0h1m1 0h1m2 0h2m3 0h1m2 0h2m17 0h1m6 0h1m2 0h1m4 0h1m4 0h1m2 0h2m1 0h2m4 0h1m6 0h1m8 0h1m9 0h2m9 0h1m3 0h1m11 0h1m3 0h1m2 0h1M11 65.5h1m4 0h1m1 0h1m5 0h1m3 0h1m1 0h1m3 0h1m3 0h2m4 0h2m7 0h2m6 0h1m8 0h1m9 0h1m5 0h1m4 0h1m8 0h2m2 0h1m2 0h1m1 0h2m11 0h1M6 66.5h1m1 0h1m5 0h1m8 0h1m5 0h1m3 0h1m2 0h1m4 0h1m2 0h1m2 0h1m2 0h1m7 0h1m5 0h1m3 0h1m4 0h3m4 0h1m7 0h1m1 0h2m1 0h1m1 0h2m3 0h3m12 0h1M12 67.5h3m23 0h1m9 0h1m2 0h1m1 0h1m16 0h4m2 0h3m6 0h1m6 0h3m15 0h1m1 0h1m3 0h3M8 68.5h2m1 0h1m2 0h1m2 0h1m5 0h1m8 0h1m2 0h1m12 0h1m7 0h2m2 0h1m6 0h1m3 0h1m2 0h1m2 0h1m5 0h1m6 0h1m4 0h1m1 0h2m1 0h1m1 0h1m3 0h3m6 0h1m1 0h1m6 0h1M1 69.5h1m1 0h1m1 0h1m1 0h1m4 0h1m8 0h3m5 0h1m3 0h1m8 0h1m3 0h1m3 0h1m2 0h1m3 0h1m2 0h1m6 0h1m18 0h2m10 0h1m5 0h1m3 0h1m5 0h1m1 0h1m2 0h1M1 70.5h1m4 0h2m9 0h1m5 0h1m1 0h2m2 0h1m16 0h1m1 0h1m3 0h2m11 0h3m4 0h1m1 0h1m4 0h1m1 0h1m2 0h1m2 0h1m14 0h1m2 0h1m1 0h1m2 0h1m3 0h1m8 0h1M1 71.5h2m7 0h1m8 0h1m18 0h1m6 0h1m6 0h1m1 0h2m4 0h1m1 0h1m5 0h1m1 0h1m6 0h1m1 0h1m5 0h2m5 0h1m2 0h2m6 0h2m2 0h1m4 0h1m3 0h1m4 0h1M0 72.5h1m1 0h3m1 0h1m2 0h1m6 0h1m6 0h1m4 0h1m11 0h2m4 0h1m3 0h1m4 0h1m1 0h1m4 0h1m2 0h1m1 0h1m3 0h1m4 0h1m1 0h1m4 0h2m3 0h1m8 0h1m2 0h2m3 0h1m3 0h1m5 0h1m1 0h1m5 0h1M3 73.5h1m9 0h1m2 0h1m15 0h1m1 0h1m1 0h2m3 0h1m5 0h1m1 0h1m2 0h3m1 0h1m10 0h1m13 0h1m1 0h1m14 0h1m10 0h1m12 0h1m4 0h1M0 74.5h1m4 0h1m2 0h2m4 0h3m15 0h3m5 0h1m2 0h1m10 0h2m4 0h1m1 0h1m6 0h1m1 0h1m8 0h2m7 0h1m5 0h2m2 0h1m9 0h1m10 0h2m1 0h2M6 75.5h3m2 0h1m2 0h1m2 0h2m2 0h1m2 0h1m4 0h1m6 0h1m8 0h1m6 0h1m2 0h1m14 0h1m3 0h3m7 0h1m1 0h1m3 0h2m4 0h1m2 0h1m4 0h1m6 0h1m6 0h1m1 0h1M5 76.5h1m7 0h1m3 0h1m1 0h1m2 0h1m1 0h1m1 0h1m1 0h1m2 0h1m1 0h3m2 0h2m14 0h1m1 0h1m1 0h1m8 0h1m9 0h1m10 0h1m1 0h1m4 0h1m4 0h2m1 0h1m1 0h1m3 0h1m6 0h1m4 0h1M2 77.5h2m6 0h1m3 0h1m8 0h1m11 0h1m11 0h1m1 0h1m10 0h1m5 0h1m1 0h3m2 0h1m17 0h1m1 0h1m2 0h1m5 0h2m7 0h1M3 78.5h1m3 0h1m19 0h1m4 0h1m6 0h1m5 0h1m2 0h1m5 0h1m1 0h1m3 0h2m9 0h2m2 0h1m7 0h1m2 0h1m5 0h1m1 0h1m10 0h1m3 0h1m1 0h1m2 0h1m1 0h1m9 0h1M3 79.5h1m2 0h1m4 0h2m10 0h2m4 0h1m4 0h1m8 0h1m1 0h1m2 0h1m20 0h1m10 0h1m6 0h1m1 0h1m5 0h1m10 0h1m5 0h3m5 0h1m5 0h1M2 80.5h1m6 0h1m7 0h2m2 0h1m3 0h1m3 0h3m2 0h2m1 0h2m2 0h1m10 0h2m7 0h1m2 0h1m7 0h1m18 0h2m1 0h1m7 0h1m9 0h1m1 0h1m5 0h1m1 0h1m1 0h1m1 0h1M0 81.5h1m3 0h1m4 0h1m4 0h2m3 0h1m1 0h1m2 0h4m2 0h1m1 0h1m1 0h2m1 0h1m7 0h1m1 0h1m8 0h1m8 0h1m4 0h1m4 0h1m11 0h1m4 0h1m1 0h1m2 0h1m2 0h1m1 0h1m3 0h1m7 0h1m6 0h1m1 0h1M0 82.5h1m3 0h1m8 0h1m4 0h2m10 0h1m5 0h1m8 0h1m10 0h1m6 0h1m1 0h1m2 0h1m7 0h3m2 0h1m1 0h1m9 0h1m4 0h1m5 0h2m1 0h1m1 0h1m1 0h1M5 83.5h1m5 0h1m7 0h3m7 0h1m5 0h1m5 0h1m1 0h1m1 0h1m3 0h1m8 0h1m1 0h1m1 0h1m1 0h2m4 0h2m2 0h1m5 0h1m10 0h1m4 0h2m3 0h1m12 0h1m1 0h1m1 0h1m2 0h1M13 84.5h1m4 0h1m4 0h1m6 0h1m3 0h1m3 0h1m18 0h1m2 0h1m14 0h1m4 0h1m9 0h1m6 0h3m6 0h1m5 0h1m8 0h1M2 85.5h1m1 0h1m1 0h1m3 0h1m13 0h1m2 0h1m10 0h1m2 0h2m3 0h1m5 0h1m1 0h1m1 0h1m1 0h1m1 0h1m15 0h1m7 0h1m3 0h1m17 0h1m2 0h2m15 0h1M1 86.5h1m3 0h1m12 0h2m1 0h2m3 0h1m11 0h1m5 0h3m3 0h1m4 0h2m4 0h2m1 0h1m7 0h1m3 0h1m2 0h1m2 0h1m8 0h1m4 0h1m14 0h1m10 0h1m4 0h1M2 87.5h1m2 0h1m12 0h1m2 0h1m10 0h1m1 0h1m8 0h2m17 0h1m5 0h2m9 0h2m3 0h1m1 0h1m14 0h1m19 0h1M0 88.5h1m1 0h1m1 0h1m3 0h1m4 0h1m6 0h1m5 0h1m4 0h1m3 0h1m6 0h1m1 0h1m3 0h2m1 0h1m1 0h1m2 0h2m9 0h1m1 0h1m4 0h1m11 0h1m3 0h2m3 0h1m6 0h2m2 0h1m3 0h2m2 0h1m4 0h1M2 89.5h1m1 0h1m2 0h1m4 0h2m6 0h1m2 0h1m2 0h1m3 0h1m6 0h1m4 0h1m5 0h1m8 0h1m2 0h1m1 0h2m4 0h3m7 0h2m1 0h3m6 0h1m6 0h2m2 0h1m13 0h1m1 0h1m1 0h1m4 0h1M5 90.5h2m3 0h1m1 0h2m1 0h1m4 0h1m2 0h1m11 0h1m10 0h1m1 0h1m2 0h1m2 0h2m4 0h1m5 0h1m3 0h2m6 0h1m4 0h1m8 0h1m2 0h1m5 0h1m9 0h1m1 0h4m7 0h1M0 91.5h1m1 0h1m5 0h1m2 0h1m7 0h2m1 0h1m4 0h1m3 0h1m1 0h1m5 0h1m1 0h2m7 0h1m1 0h1m4 0h1m6 0h2m6 0h1m7 0h1m6 0h1m1 0h1m3 0h1m3 0h1m7 0h1m1 0h1m1 0h1m1 0h1m12 0h1M7 92.5h1m3 0h1m2 0h1m3 0h1m10 0h1m8 0h1m14 0h1m9 0h2m4 0h1m4 0h1m6 0h1m1 0h1m2 0h1m1 0h1m1 0h1m1 0h1m5 0h2m5 0h1m1 0h1m1 0h2m12 0h1M7 93.5h3m1 0h1m3 0h3m11 0h2m7 0h1m6 0h1m6 0h1m1 0h1m2 0h1m2 0h1m13 0h1m1 0h2m4 0h1m1 0h1m7 0h1m4 0h1m2 0h1m1 0h1m2 0h1m1 0h1m10 0h1m8 0h1M1 94.5h2m1 0h1m3 0h1m5 0h2m1 0h2m2 0h1m2 0h2m5 0h1m1 0h1m9 0h1m7 0h1m1 0h1m2 0h1m3 0h1m1 0h1m9 0h1m4 0h1m2 0h1m3 0h3m2 0h1m9 0h1m4 0h1m4 0h1m6 0h1m4 0h1m3 0h1M4 95.5h1m4 0h1m13 0h1m9 0h1m6 0h1m1 0h1m1 0h1m4 0h2m2 0h1m4 0h2m7 0h1m3 0h1m6 0h2m3 0h1m3 0h1m18 0h1m4 0h1m1 0h1m13 0h1M0 96.5h1m5 0h2m2 0h1m2 0h2m11 0h2m5 0h1m1 0h1m3 0h1m1 0h2m6 0h1m1 0h1m1 0h1m5 0h1m2 0h1m3 0h1m19 0h1m1 0h1m2 0h1m1 0h2m6 0h1m4 0h2m6 0h1m4 0h1m1 0h1m5 0h1M2 97.5h1m6 0h1m1 0h2m3 0h1m11 0h1m9 0h1m6 0h1m5 0h1m12 0h1m4 0h1m6 0h2m9 0h1m5 0h1m1 0h1m6 0h1m4 0h1m3 0h1m8 0h2m2 0h1M2 98.5h1m4 0h1m3 0h1m25 0h1m8 0h1m4 0h1m7 0h1m11 0h1m1 0h1m3 0h1m1 0h1m1 0h1m2 0h1m7 0h1m10 0h1m1 0h1m4 0h1m10 0h1M1 99.5h2m2 0h2m2 0h2m8 0h1m1 0h1m3 0h1m5 0h1m1 0h1m4 0h1m11 0h1m1 0h2m2 0h1m1 0h1m5 0h1m5 0h1m3 0h1m2 0h1m5 0h1m17 0h1m4 0h1m1 0h1m3 0h3m2 0h1m5 0h1M0 100.5h2m8 0h1m6 0h1m1 0h1m6 0h1m4 0h1m1 0h2m2 0h1m8 0h1m4 0h1m2 0h1m2 0h1m7 0h1m9 0h1m10 0h2m3 0h1m4 0h1m3 0h1m11 0h1m1 0h1m5 0h1m2 0h1m2 0h1M2 101.5h1m4 0h5m4 0h1m5 0h1m7 0h2m1 0h1m5 0h1m1 0h1m8 0h1m2 0h1m1 0h1m14 0h2m3 0h1m5 0h1m8 0h1m6 0h2m9 0h1m10 0h1m4 0h2M2 102.5h1m3 0h1m2 0h1m11 0h1m1 0h1m1 0h1m1 0h1m1 0h1m1 0h2m2 0h2m4 0h1m3 0h5m1 0h1m9 0h2m3 0h1m4 0h1m3 0h1m1 0h1m7 0h1m4 0h2m10 0h1m1 0h1m3 0h1m1 0h1m3 0h4m2 0h1m1 0h1m2 0h1M1 103.5h1m10 0h3m14 0h1m7 0h1m4 0h1m1 0h1m2 0h1m1 0h1m5 0h1m3 0h2m2 0h1m8 0h1m1 0h1m2 0h1m25 0h1m1 0h1m8 0h2m3 0h4m1 0h1M3 104.5h1m9 0h1m3 0h1m4 0h1m8 0h1m11 0h1m2 0h1m7 0h1m9 0h1m1 0h1m3 0h2m4 0h1m1 0h1m14 0h1m2 0h1m4 0h1m2 0h2m3 0h1M14 105.5h1m1 0h2m3 0h1m16 0h2m21 0h1m10 0h1m9 0h1m1 0h3m3 0h1m15 0h2m1 0h1m1 0h1m8 0h1m1 0h1m2 0h1M7 106.5h1m6 0h4m9 0h1m1 0h1m4 0h1m4 0h1m2 0h2m4 0h1m2 0h1m10 0h1m1 0h2m7 0h1m9 0h1m11 0h1m7 0h1m2 0h1m6 0h2m1 0h1m1 0h1m3 0h1M0 107.5h1m3 0h1m2 0h1m10 0h1m2 0h1m3 0h2m15 0h1m18 0h1m5 0h2m13 0h1m2 0h1m2 0h1m4 0h1m2 0h1m4 0h1m1 0h1m2 0h1m7 0h1m4 0h1m7 0h1M1 108.5h1m2 0h1m1 0h1m4 0h1m6 0h1m1 0h1m8 0h1m2 0h1m2 0h1m2 0h2m7 0h1m2 0h2m2 0h1m9 0h1m2 0h2m1 0h1m1 0h1m6 0h1m5 0h1m5 0h1m3 0h1m4 0h1m3 0h1m2 0h1m1 0h1m6 0h1m3 0h1M1 109.5h1m4 0h1m2 0h1m1 0h1m5 0h2m2 0h1m25 0h1m5 0h1m4 0h1m3 0h1m4 0h2m1 0h2m6 0h1m3 0h1m2 0h1m4 0h1m6 0h1m1 0h1m24 0h1m1 0h1M3 110.5h1m19 0h1m14 0h1m2 0h1m1 0h1m1 0h1m3 0h2m2 0h1m8 0h1m2 0h1m10 0h1m1 0h2m7 0h1m4 0h2m7 0h1m11 0h2m3 0h1m1 0h1m5 0h1M4 111.5h1m6 0h2m8 0h1m2 0h4m1 0h1m5 0h2m2 0h1m1 0h1m2 0h1m4 0h1m3 0h1m7 0h2m7 0h1m2 0h1m4 0h1m10 0h2m24 0h1m4 0h1m1 0h1M2 112.5h2m2 0h1m2 0h2m3 0h1m20 0h1m4 0h1m9 0h1m4 0h1m3 0h1m2 0h1m12 0h1m1 0h1m9 0h1m3 0h2m9 0h1m2 0h2m7 0h1m2 0h1M4 113.5h1m2 0h1m1 0h1m1 0h2m14 0h1m2 0h1m9 0h1m7 0h1m2 0h1m3 0h1m2 0h3m14 0h1m2 0h1m16 0h1m12 0h3m7 0h1M7 114.5h2m5 0h2m2 0h1m1 0h1m8 0h1m2 0h1m5 0h2m5 0h1m7 0h1m3 0h2m2 0h1m1 0h1m4 0h1m19 0h1m1 0h1m6 0h1m3 0h1m5 0h1m9 0h1m3 0h2M6 115.5h1m2 0h1m6 0h1m2 0h1m3 0h1m6 0h2m1 0h1m4 0h1m28 0h1m2 0h1m4 0h1m2 0h1m8 0h1m18 0h1m8 0h1m2 0h1M3 116.5h1m5 0h1m4 0h1m4 0h1m9 0h1m8 0h1m5 0h1m8 0h1m2 0h1m5 0h2m1 0h1m18 0h1m2 0h1m6 0h1m6 0h4m3 0h1m10 0h1M1 117.5h1m6 0h1m9 0h1m7 0h1m4 0h1m1 0h1m6 0h1m4 0h1m7 0h4m2 0h4m11 0h1m2 0h1m2 0h2m3 0h2m2 0h1m7 0h1m2 0h3m6 0h1m4 0h2M4 118.5h1m2 0h1m1 0h1m26 0h1m1 0h1m1 0h1m9 0h1m2 0h1m7 0h1m3 0h1m16 0h1m25 0h2m7 0h1m4 0h1M4 119.5h2m15 0h1m1 0h1m4 0h1m2 0h2m25 0h1m2 0h1m3 0h2m3 0h1m1 0h1m9 0h1m1 0h2m3 0h1m4 0h1m9 0h1m2 0h1m4 0h1m3 0h1m9 0h1M3 120.5h2m2 0h1m4 0h1m1 0h1m4 0h1m1 0h2m3 0h1m2 0h1m7 0h1m10 0h2m3 0h1m19 0h1m4 0h1m1 0h1m1 0h1m14 0h2m4 0h1m7 0h1m11 0h1M0 121.5h1m5 0h3m1 0h1m2 0h1m3 0h1m14 0h2m3 0h2m1 0h1m1 0h1m3 0h1m12 0h1m4 0h3m2 0h1m5 0h2m2 0h1m20 0h1m13 0h1m2 0h3m1 0h1M9 122.5h1m6 0h2m10 0h2m11 0h1m4 0h3m4 0h2m4 0h1m1 0h1m12 0h1m1 0h4m6 0h1m7 0h1m7 0h1m2 0h1m1 0h1m2 0h1m1 0h1m6 0h2m3 0h2M4 123.5h1m2 0h1m6 0h1m3 0h1m2 0h1m2 0h1m6 0h2m10 0h1m9 0h1m1 0h2m2 0h2m2 0h1m5 0h2m4 0h2m1 0h1m3 0h1m1 0h2m6 0h1m13 0h1m3 0h1m1 0h1m1 0h1m3 0h3M0 124.5h1m1 0h1m3 0h1m8 0h1m3 0h1m6 0h1m1 0h1m8 0h1m2 0h1m8 0h1m8 0h2m1 0h1m7 0h2m6 0h1m2 0h1m5 0h2m8 0h1m4 0h1m8 0h1m3 0h1m8 0h1M2 125.5h1m1 0h1m14 0h1m6 0h1m6 0h1m4 0h1m3 0h2m6 0h1m4 0h1m3 0h1m14 0h1m3 0h2m2 0h1m2 0h1m8 0h1m1 0h1m2 0h1m4 0h1m3 0h2m7 0h1m4 0h1m1 0h1M6 126.5h1m4 0h1m1 0h1m5 0h1m2 0h1m5 0h2m1 0h1m3 0h1m6 0h1m3 0h1m1 0h1m2 0h2m5 0h1m1 0h1m3 0h2m6 0h1m10 0h1m2 0h1m8 0h1m2 0h1m6 0h1m3 0h1m1 0h1m4 0h1m2 0h1m3 0h1M1 127.5h1m13 0h1m9 0h2m3 0h1m6 0h1m5 0h1m5 0h1m2 0h1m3 0h2m2 0h1m2 0h1m6 0h1m13 0h1m2 0h1m4 0h1m1 0h1m1 0h1m11 0h3m1 0h1m3 0h1m6 0h2m2 0h1"/>
<path stroke="#ffb100" stroke-width="1" fill="none" d="M7 0.5h1m1 0h2m4 0h1m11 0h1m3 0h1m11 0h1m1 0h1m3 0h2m4 0h1m2 0h1m9 0h1m5 0h2m5 0h1m8 0h1m2 0h1m2 0h1m1 0h1m2 0h1m8 0h1m9 0h1m3 0h1M2 1.5h1m9 0h1m7 0h2m4 0h1m9 0h1m3 0h1m3 0h1m3 0h1m4 0h1m1 0h1m2 0h2m16 0h1m17 0h1m4 0h1m2 0h1m2 0h1m4 0h2m11 0h1M6 2.5h1m13 0h1m10 0h1m1 0h1m4 0h4m14 0h1m8 0h2m6 0h1m6 0h1m3 0h1m11 0h1m2 0h1m10 0h3m12 0h1M6 3.5h1m6 0h1m4 0h1m7 0h2m3 0h1m12 0h1m6 0h1m5 0h1m11 0h1m9 0h1m1 0h1m4 0h1m3 0h2m2 0h1m2 0h1m1 0h1m1 0h1m6 0h1m9 0h1m5 0h3M2 4.5h1m4 0h1m2 0h1m6 0h1m7 0h1m8 0h1m1 0h2m2 0h1m10 0h1m1 0h1m4 0h1m7 0h1m11 0h3m5 0h1m2 0h1m4 0h1m1 0h1m1 0h1m20 0h1m4 0h1m1 0h1M1 5.5h2m10 0h1m13 0h1m29 0h2m1 0h1m4 0h2m28 0h1m4 0h1m5 0h1m2 0h1m4 0h1m2 0h1m5 0h1M2 6.5h1m8 0h1m1 0h1m20 0h1m11 0h2m3 0h1m6 0h1m2 0h1m1 0h1m2 0h1m2 0h1m3 0h1m13 0h2m9 0h1m2 0h1m8 0h1m4 0h1m3 0h1M0 7.5h1m1 0h1m1 0h1m9 0h1m4 0h1m2 0h1m6 0h1m3 0h2m2 0h1m6 0h1m7 0h1m6 0h1m3 0h1m2 0h1m1 0h1m12 0h1m2 0h1m2 0h1m1 0h1m7 0h1m3 0h1m5 0h1m16 0h1M0 8.5h1m6 0h1m23 0h1m9 0h1m2 0h1m3 0h1m11 0h1m6 0h1m2 0h4m18 0h1m7 0h1m7 0h1m5 0h2m2 0h1m3 0h1m4 0h1M1 9.5h1m8 0h2m1 0h1m14 0h1m22 0h1m9 0h2m1 0h1m13 0h2m15 0h1m3 0h1m10 0h1m3 0h1m8 0h1m3 0h1M5 10.5h1m1 0h1m10 0h1m5 0h1m2 0h1m1 0h1m2 0h1m7 0h1m7 0h1m4 0h1m4 0h1m13 0h1m7 0h1m1 0h1m8 0h1m1 0h1m13 0h1m4 0h1m3 0h1m7 0h1m1 0h1M0 11.5h1m5 0h2m9 0h1m9 0h1m4 0h1m3 0h1m7 0h1m2 0h1m3 0h1m13 0h1m3 0h2m3 0h2m3 0h1m3 0h1m1 0h3m5 0h1m2 0h2m16 0h1m1 0h2m5 0h2M3 12.5h1m1 0h1m4 0h1m1 0h1m8 0h1m6 0h1m3 0h2m2 0h1m7 0h2m6 0h1m11 0h1m3 0h2m1 0h1m2 0h1m4 0h1m1 0h2m6 0h1m10 0h1m7 0h1m3 0h1m14 0h1M11 13.5h2m3 0h1m9 0h1m7 0h1m2 0h1m4 0h1m3 0h1m6 0h1m3 0h1m9 0h1m9 0h1m5 0h1m6 0h1m3 0h2m1 0h1m1 0h2M1 14.5h1m8 0h1m3 0h1m8 0h2m2 0h1m1 0h1m2 0h1m3 0h2m11 0h1m4 0h2m4 0h1m8 0h2m4 0h1m13 0h1m6 0h1m14 0h1m2 0h1m7 0h1m1 0h1M1 15.5h1m5 0h1m2 0h1m6 0h1m1 0h1m4 0h1m5 0h2m5 0h1m4 0h1m6 0h1m1 0h1m3 0h1m9 0h3m5 0h1m9 0h1m1 0h1m16 0h1m2 0h1m15 0h1m2 0h1M3 16.5h1m1 0h1m6 0h1m7 0h1m4 0h2m10 0h1m5 0h1m2 0h1m1 0h1m4 0h1m9 0h1m18 0h2m4 0h1m1 0h1m7 0h1m1 0h1m5 0h4m3 0h1m5 0h1m5 0h1m1 0h1M1 17.5h1m12 0h2m1 0h1m4 0h1m2 0h1m7 0h2m2 0h1m3 0h1m2 0h1m16 0h1m1 0h1m2 0h1m5 0h1m6 0h1m2 0h1m2 0h1m1 0h1m3 0h2m2 0h1m1 0h1m1 0h1m3 0h1m16 0h1m3 0h1m2 0h1M2 18.5h1m4 0h1m3 0h2m1 0h2m7 0h1m1 0h1m4 0h2m3 0h1m6 0h2m1 0h1m2 0h1m13 0h1m6 0h1m1 0h1m1 0h1m6 0h1m5 0h1m2 0h1m10 0h1m1 0h1m14 0h2m7 0h1M2 19.5h2m3 0h1m8 0h3m4 0h2m11 0h1m2 0h1m7 0h2m2 0h1m14 0h1m7 0h1m2 0h1m3 0h1m1 0h1m13 0h1m1 0h1m1 0h1m2 0h1m5 0h1M15 20.5h1m5 0h1m14 0h2m33 0h1m3 0h1m3 0h1m7 0h1m4 0h1m1 0h1m28 0h1m2 0h1M0 21.5h1m6 0h1m1 0h2m5 0h1m3 0h1m1 0h1m11 0h1m11 0h1m2 0h1m1 0h1m4 0h1m2 0h1m12 0h1m2 0h1m2 0h1m1 0h1m7 0h1m1 0h2m7 0h1m2 0h1m11 0h1M8 22.5h1m6 0h1m15 0h1m3 0h1m4 0h1m10 0h1m9 0h1m13 0h1m15 0h1m7 0h1m3 0h1m6 0h2m1 0h1M9 23.5h2m14 0h1m3 0h1m2 0h2m16 0h1m2 0h1m5 0h1m3 0h1m3 0h1m2 0h1m6 0h1m2 0h2m3 0h1m1 0h1m3 0h1m9 0h1m2 0h2M5 24.5h1m1 0h2m4 0h1m1 0h1m2 0h1m7 0h1m12 0h1m3 0h1m5 0h1m8 0h1m1 0h2m2 0h1m2 0h1m6 0h2m2 0h1m16 0h1m2 0h1m3 0h1m11 0h2m7 0h1m1 0h1m1 0h1M0 25.5h1m10 0h1m11 0h1m3 0h1m1 0h1m1 0h3m2 0h1m20 0h1m1 0h1m6 0h1m3 0h1m8 0h1m3 0h1m2 0h2m2 0h1m4 0h1m5 0h1m1 0h1m6 0h2m9 0h1m4 0h1M7 26.5h1m7 0h2m7 0h3m3 0h1m4 0h1m3 0h1m4 0h1m2 0h1m6 0h2m11 0h1m1 0h1m5 0h1m2 0h2m5 0h2m15 0h2m1 0h1m6 0h1m5 0h1M8 27.5h1m1 0h1m3 0h1m4 0h1m13 0h1m1 0h1m11 0h1m6 0h1m5 0h1m10 0h1m2 0h1m12 0h2m11 0h1m6 0h1m7 0h1m3 0h1M0 28.5h2m3 0h1m3 0h2m1 0h1m9 0h1m10 0h1m6 0h1m1 0h1m22 0h2m4 0h1m16 0h1m4 0h1m7 0h1m8 0h1m1 0h1m3 0h1m1 0h1M3 29.5h1m2 0h1m10 0h1m3 0h1m18 0h1m6 0h1m2 0h1m12 0h1m9 0h1m1 0h1m2 0h1m8 0h1m8 0h1m19 0h1m3 0h2m2 0h1M1 30.5h1m3 0h2m7 0h1m9 0h1m11 0h2m1 0h1m13 0h1m7 0h1m4 0h1m1 0h1m15 0h1m3 0h1m7 0h1m2 0h1m8 0h1m9 0h1m1 0h1m2 0h1m2 0h1M5 31.5h1m2 0h1m16 0h1m15 0h1m5 0h1m1 0h1m4 0h1m1 0h3m6 0h1m8 0h1m2 0h1m1 0h2m1 0h3m11 0h1m1 0h1m1 0h1m3 0h2m10 0h1M1 32.5h1m8 0h1m8 0h3m4 0h1m8 0h2m4 0h1m10 0h2m3 0h1m1 0h1m3 0h1m3 0h1m6 0h1m4 0h2m2 0h1m3 0h3m4 0h3m2 0h1m2 0h1m1 0h1m4 0h1m11 0h1M0 33.5h2m13 0h1m3 0h2m3 0h2m7 0h1m4 0h1m7 0h1m6 0h1m3 0h1m2 0h1m4 0h1m1 0h1m1 0h1m15 0h2m3 0h1m1 0h1m4 0h2m6 0h1m16 0h1M5 34.5h2m3 0h1m1 0h1m2 0h1m8 0h2m1 0h4m5 0h2m3 0h1m3 0h1m2 0h1m5 0h1m15 0h1m1 0h1m8 0h1m2 0h1m21 0h4m2 0h1m2 0h1M6 35.5h1m5 0h1m1 0h1m8 0h1m8 0h1m10 0h1m19 0h3m7 0h1m6 0h1m1 0h1m1 0h1m3 0h1m5 0h1m7 0h1m1 0h1m14 0h1m1 0h1m1 0h1M5 36.5h1m3 0h1m2 0h1m5 0h1m2 0h1m1 0h1m1 0h1m7 0h1m2 0h1m5 0h1m4 0h2m1 0h1m2 0h2m3 0h1m5 0h1m6 0h2m4 0h1m7 0h2m10 0h1m7 0h1m9 0h1m1 0h1m7 0h2M4 37.5h2m3 0h1m4 0h2m2 0h1m17 0h1m11 0h1m1 0h1m16 0h2m4 0h1m12 0h1m2 0h1m3 0h2m3 0h2m3 0h1m10 0h1m1 0h1m5 0h1M0 38.5h1m4 0h2m2 0h2m5 0h2m3 0h1m1 0h1m7 0h1m2 0h1m2 0h1m4 0h3m4 0h1m1 0h1m4 0h1m1 0h1m3 0h1m4 0h1m5 0h1m9 0h1m2 0h2m1 0h3m9 0h1m1 0h1m7 0h1m8 0h1M1 39.5h1m3 0h1m5 0h1m21 0h1m2 0h1m4 0h1m3 0h1m11 0h1m9 0h1m3 0h1m11 0h1m11 0h1m5 0h1m6 0h1m10 0h1m2 0h2m3 0h1M9 40.5h1m5 0h1m1 0h1m1 0h2m1 0h1m11 0h1m13 0h1m2 0h1m7 0h1m1 0h2m2 0h1m1 0h1m6 0h1m5 0h1m3 0h1m1 0h2m8 0h2m1 0h2m4 0h2m1 0h1m4 0h1m1 0h1m8 0h1m1 0h1M3 41.5h1m12 0h1m6 0h1m6 0h3m5 0h1m4 0h1m4 0h1m6 0h1m6 0h2m1 0h1m12 0h1m2 0h2m11 0h2m1 0h2m26 0h1M14 42.5h2m14 0h1m5 0h1m1 0h1m8 0h1m9 0h1m14 0h2m2 0h1m4 0h1m6 0h1m13 0h1m2 0h1m3 0h1m13 0h1M6 43.5h1m17 0h1m6 0h1m2 0h1m2 0h1m15 0h1m6 0h1m5 0h1m11 0h2m34 0h1m5 0h1m4 0h2M4 44.5h1m2 0h1m1 0h1m3 0h1m3 0h1m7 0h1m11 0h1m8 0h1m3 0h1m2 0h1m4 0h1m6 0h1m9 0h1m5 0h2m2 0h1m1 0h1m2 0h1m8 0h1m4 0h3m3 0h2m6 0h1m2 0h1M6 45.5h1m9 0h1m2 0h1m32 0h1m12 0h1m1 0h1m8 0h1m4 0h1m4 0h3m1 0h1m2 0h1m7 0h1m4 0h2m3 0h1m2 0h1m4 0h1m2 0h1m3 0h1M1 46.5h1m1 0h1m4 0h1m9 0h1m10 0h1m1 0h1m12 0h2m10 0h1m6 0h1m8 0h1m13 0h1m4 0h1m10 0h1m2 0h1m9 0h1m3 0h2m1 0h1m3 0h2M9 47.5h1m4 0h2m13 0h1m14 0h1m1 0h1m3 0h1m7 0h3m1 0h1m13 0h1m12 0h3m2 0h1m3 0h1m8 0h1m2 0h1m10 0h1m1 0h1M0 48.5h1m1 0h1m10 0h1m1 0h1m11 0h1m6 0h1m10 0h1m1 0h3m2 0h1m13 0h1m8 0h1m12 0h1m4 0h1m1 0h1m8 0h1m7 0h1m11 0h1m1 0h1M12 49.5h1m15 0h1m12 0h1m4 0h1m4 0h1m2 0h1m6 0h1m1 0h1m5 0h1m7 0h1m3 0h1m1 0h1m12 0h1m8 0h2m2 0h1m3 0h1m13 0h1M0 50.5h1m2 0h1m4 0h1m12 0h1m2 0h1m5 0h2m1 0h3m8 0h1m2 0h1m3 0h1m6 0h1m4 0h1m5 0h1m12 0h2m8 0h1m9 0h1m7 0h1m11 0h1m4 0h1M1 51.5h1m4 0h1m2 0h1m2 0h1m6 0h1m1 0h1m2 0h1m25 0h1m3 0h1m3 0h1m3 0h1m3 0h1m12 0h1m3 0h1m10 0h1m2 0h1m6 0h1m8 0h1m3 0h1m6 0h1m1 0h2M8 52.5h1m5 0h3m1 0h1m1 0h3m9 0h2m1 0h1m11 0h1m2 0h1m6 0h1m19 0h1m20 0h1m6 0h1m16 0h1M6 53.5h2m1 0h1m3 0h2m5 0h1m5 0h1m6 0h1m3 0h1m7 0h1m1 0h1m7 0h1m4 0h1m5 0h1m1 0h1m6 0h1m3 0h1m7 0h1m5 0h1m7 0h2m3 0h1m2 0h1m5 0h1m2 0h1m4 0h1m3 0h1M2 54.5h1m2 0h2m1 0h1m14 0h1m5 0h1m4 0h1m8 0h1m7 0h1m5 0h1m5 0h1m5 0h1m12 0h2m21 0h2m3 0h1m1 0h1m4 0h1m5 0h1M0 55.5h3m6 0h1m2 0h1m1 0h1m9 0h1m9 0h1m3 0h1m5 0h1m5 0h1m1 0h1m14 0h1m6 0h1m5 0h1m16 0h1m5 0h1m7 0h1m1 0h1m3 0h1m5 0h2M0 56.5h1m7 0h1m19 0h1m1 0h1m3 0h1m2 0h1m14 0h1m4 0h1m1 0h1m4 0h1m7 0h2m8 0h1m6 0h1m8 0h1m5 0h1m19 0h1M0 57.5h1m1 0h1m4 0h2m6 0h1m4 0h1m2 0h1m1 0h1m1 0h2m3 0h1m5 0h2m11 0h1m1 0h1m7 0h2m1 0h2m13 0h1m6 0h1m7 0h1m3 0h1m2 0h2m3 0h1m2 0h1m1 0h1m2 0h1M3 58.5h1m2 0h1m3 0h1m21 0h1m11 0h1m3 0h3m7 0h2m11 0h1m7 0h1m9 0h1m4 0h1m1 0h1m1 0h1m6 0h1m7 0h1m6 0h1m4 0h1M4 59.5h1m7 0h1m3 0h3m1 0h2m21 0h1m5 0h1m1 0h1m4 0h1m6 0h1m1 0h2m2 0h1m10 0h1m8 0h1m9 0h1m4 0h1m5 0h2m2 0h1m3 0h1M0 60.5h1m17 0h1m3 0h1m2 0h1m6 0h1m17 0h1m4 0h1m5 0h1m5 0h1m14 0h1m4 0h2m3 0h1m5 0h1m13 0h1m8 0h1M3 61.5h2m20 0h1m7 0h1m10 0h1m6 0h1m12 0h1m8 0h1m4 0h1m14 0h1m2 0h1m7 0h1m6 0h1m3 0h1M3 62.5h1m18 0h2m6 0h1m2 0h3m5 0h1m2 0h4m1 0h1m8 0h1m2 0h1m5 0h1m17 0h1m3 0h1m5 0h1m4 0h1m1 0h1m3 0h1m4 0h1m1 0h1m12 0h1M2 63.5h1m4 0h1m10 0h1m8 0h1m9 0h1m4 0h1m6 0h1m18 0h1m5 0h1m2 0h1m9 0h1m3 0h1m12 0h1m5 0h1m5 0h1m3 0h2m3 0h1M6 64.5h1m14 0h1m9 0h1m6 0h4m1 0h1m3 0h2m11 0h1m5 0h1m5 0h1m3 0h2m3 0h2m4 0h2m17 0h1m4 0h1m13 0h1M6 65.5h1m3 0h1m3 0h1m2 0h1m13 0h1m1 0h1m2 0h1m11 0h1m6 0h2m2 0h1m11 0h1m9 0h1m7 0h1m4 0h1m1 0h1m17 0h1m2 0h1m1 0h1m3 0h1m2 0h1M0 66.5h1m10 0h1m6 0h2m6 0h1m1 0h1m1 0h1m1 0h1m1 0h1m2 0h1m5 0h1m2 0h1m2 0h1m2 0h1m1 0h1m11 0h1m16 0h2m13 0h1m27 0h1M3 67.5h1m2 0h4m9 0h1m25 0h2m8 0h2m8 0h1m8 0h1m5 0h1m2 0h2m4 0h2m4 0h2m1 0h2m13 0h2m5 0h2m3 0h1M6 68.5h1m15 0h1m5 0h1m2 0h1m1 0h1m2 0h2m4 0h1m3 0h1m4 0h1m18 0h1m7 0h1m3 0h1m9 0h1m3 0h1m13 0h2m7 0h1m3 0h1m1 0h2M6 69.5h1m1 0h2m7 0h1m2 0h1m4 0h1m1 0h1m6 0h1m3 0h1m2 0h1m3 0h1m6 0h1m2 0h1m2 0h1m4 0h2m1 0h1m1 0h2m1 0h1m4 0h2m6 0h1m7 0h3m4 0h1m3 0h1m5 0h1m2 0h1m2 0h1m6 0h1M2 70.5h1m2 0h1m3 0h2m7 0h2m7 0h1m4 0h1m8 0h1m1 0h1m6 0h1m13 0h1m20 0h1m3 0h1m3 0h1m7 0h1m13 0h1m3 0h1M0 71.5h1m2 0h2m7 0h2m3 0h1m3 0h1m1 0h1m2 0h3m5 0h1m22 0h1m7 0h1m5 0h1m15 0h1m9 0h1m7 0h1m3 0h1m9 0h1M1 72.5h1m6 0h1m6 0h1m14 0h2m12 0h2m2 0h2m9 0h1m38 0h1m3 0h2m6 0h1m5 0h1m4 0h1M6 73.5h1m13 0h2m1 0h1m7 0h1m6 0h1m4 0h2m6 0h1m3 0h1m13 0h1m5 0h1m10 0h1m6 0h1m11 0h1m9 0h1m1 0h1m1 0h2M2 74.5h2m3 0h1m12 0h1m1 0h2m1 0h1m12 0h1m2 0h1m6 0h2m9 0h1m1 0h1m3 0h1m2 0h1m5 0h1m1 0h2m7 0h1m2 0h1m2 0h1m16 0h1m5 0h1m2 0h2M4 75.5h1m10 0h1m18 0h1m2 0h1m1 0h1m1 0h1m1 0h1m7 0h1m4 0h1m10 0h2m8 0h1m1 0h1m2 0h1m2 0h1m9 0h1m2 0h1m4 0h1m4 0h1m7 0h1m8 0h1M2 76.5h2m4 0h1m6 0h1m2 0h1m18 0h1m2 0h1m4 0h1m1 0h3m24 0h1m1 0h1m9 0h2m1 0h1m16 0h2m5 0h1m3 0h4m1 0h1m4 0h1M4 77.5h3m4 0h3m3 0h1m3 0h1m2 0h1m5 0h1m6 0h1m7 0h2m6 0h1m25 0h1m1 0h1m15 0h1m11 0h1m8 0h1m8 0h1M5 78.5h2m1 0h1m12 0h1m6 0h2m14 0h1m2 0h1m1 0h1m3 0h1m1 0h1m10 0h1m7 0h1m4 0h1m1 0h1m5 0h1m5 0h1m2 0h2m14 0h1m9 0h1m2 0h1M0 79.5h1m1 0h1m12 0h1m1 0h1m1 0h1m6 0h2m7 0h3m3 0h1m11 0h1m9 0h2m3 0h1m2 0h1m24 0h1m3 0h1m2 0h1m5 0h2m6 0h1M20 80.5h1m7 0h1m18 0h1m2 0h1m6 0h1m4 0h2m1 0h1m2 0h1m12 0h1m1 0h1m1 0h1m1 0h1m10 0h1m1 0h1m2 0h2m4 0h1m7 0h1m3 0h1m1 0h1M1 81.5h1m5 0h1m10 0h1m9 0h1m9 0h1m7 0h1m7 0h2m6 0h1m3 0h2m3 0h1m17 0h1m1 0h1m3 0h1m8 0h1m2 0h2m9 0h1m3 0h1m3 0h1M5 82.5h2m2 0h1m4 0h2m5 0h1m5 0h1m1 0h1m1 0h1m5 0h1m5 0h1m2 0h1m1 0h2m3 0h1m6 0h1m10 0h1m42 0h2m4 0h1m2 0h3M4 83.5h1m7 0h1m9 0h1m1 0h1m2 0h1m18 0h1m1 0h1m5 0h3m2 0h1m1 0h1m6 0h1m4 0h1m1 0h1m1 0h1m4 0h1m1 0h1m5 0h1m2 0h1m5 0h1m4 0h1m1 0h1m4 0h1m1 0h1m9 0h1m3 0h1M3 84.5h1m5 0h3m17 0h1m7 0h1m4 0h1m2 0h1m8 0h1m1 0h1m2 0h1m13 0h1m4 0h1m2 0h1m25 0h1m1 0h2m6 0h1m1 0h2m5 0h1M7 85.5h1m1 0h1m3 0h1m2 0h1m16 0h4m2 0h1m3 0h1m17 0h1m3 0h1m5 0h1m5 0h1m2 0h1m23 0h1m2 0h1m3 0h1m6 0h1m3 0h1M7 86.5h1m7 0h1m13 0h1m1 0h2m2 0h3m1 0h2m2 0h1m7 0h1m1 0h1m3 0h2m12 0h1m14 0h1m5 0h1m1 0h1m11 0h2m1 0h1m2 0h2m9 0h2M0 87.5h1m37 0h4m10 0h1m12 0h1m6 0h2m2 0h1m4 0h1m6 0h1m11 0h1m7 0h1m1 0h1m4 0h1m2 0h1m3 0h1m1 0h1m1 0h1M3 88.5h1m2 0h1m5 0h1m4 0h1m1 0h1m5 0h1m3 0h2m15 0h1m12 0h1m1 0h1m4 0h1m1 0h1m8 0h1m9 0h1m1 0h1m18 0h1m6 0h2m1 0h1m2 0h1m1 0h1M6 89.5h1m2 0h2m5 0h1m16 0h2m3 0h1m10 0h1m2 0h3m3 0h1m2 0h1m13 0h1m9 0h1m2 0h1m2 0h1m4 0h1m5 0h1m1 0h1m2 0h1m2 0h1m15 0h1M14 90.5h1m21 0h1m6 0h1m5 0h2m2 0h1m7 0h2m1 0h1m2 0h1m9 0h1m1 0h1m16 0h1m12 0h1m9 0h1m1 0h2M1 91.5h1m2 0h1m2 0h1m9 0h1m3 0h1m1 0h1m19 0h1m2 0h1m19 0h1m1 0h1m1 0h2m6 0h1m15 0h2m2 0h1m4 0h2m3 0h1m6 0h1m7 0h1M2 92.5h1m7 0h1m2 0h1m3 0h1m18 0h2m1 0h1m1 0h1m8 0h1m3 0h1m1 0h1m8 0h1m1 0h1m11 0h1m4 0h1m4 0h1m1 0h1m11 0h2m9 0h1m4 0h1m7 0h1M5 93.5h2m3 0h1m1 0h1m1 0h1m3 0h1m4 0h1m2 0h1m4 0h1m1 0h1m1 0h2m9 0h1m1 0h1m4 0h1m1 0h1m2 0h1m13 0h1m5 0h2m13 0h3m3 0h1m10 0h1M7 94.5h1m15 0h1m2 0h1m13 0h1m17 0h2m4 0h1m5 0h1m2 0h1m1 0h1m7 0h1m3 0h1m2 0h1m6 0h1m21 0h1m6 0h2M13 95.5h1m4 0h1m16 0h2m1 0h1m12 0h2m20 0h1m7 0h2m1 0h2m4 0h2m11 0h1m11 0h1m10 0h1M2 96.5h1m1 0h1m12 0h1m10 0h1m7 0h1m18 0h1m7 0h1m18 0h1m6 0h1m2 0h1m2 0h2m3 0h1m7 0h1m16 0h1M3 97.5h1m1 0h1m1 0h1m10 0h4m18 0h1m2 0h2m8 0h1m9 0h1m16 0h1m2 0h1m2 0h1m17 0h2m2 0h2m4 0h2m3 0h1m3 0h1m2 0h2M3 98.5h1m18 0h2m4 0h1m3 0h1m1 0h1m10 0h1m3 0h1m6 0h1m8 0h2m7 0h1m5 0h1m9 0h1m5 0h1m14 0h1m1 0h2m3 0h1m4 0h1m3 0h1M4 99.5h1m8 0h2m11 0h1m1 0h1m16 0h1m17 0h1m3 0h1m4 0h1m2 0h1m5 0h1m3 0h2m5 0h1m5 0h1m5 0h1m2 0h1m12 0h1m1 0h1m1 0h3M2 100.5h1m8 0h1m3 0h1m2 0h1m5 0h1m10 0h1m4 0h3m2 0h1m2 0h1m4 0h1m14 0h2m7 0h2m4 0h1m6 0h1m4 0h1m3 0h1m2 0h1m6 0h1m1 0h1m1 0h1m1 0h1m3 0h1m4 0h1m2 0h1M3 101.5h1m15 0h1m5 0h3m12 0h1m10 0h1m4 0h1m1 0h2m1 0h1m3 0h1m21 0h1m1 0h1m2 0h1m1 0h1m1 0h1m8 0h1m1 0h1m5 0h2m1 0h1m1 0h1m7 0h1M8 102.5h1m2 0h2m11 0h1m3 0h1m1 0h1m6 0h1m2 0h1m9 0h1m4 0h1m1 0h1m1 0h1m4 0h2m8 0h1m8 0h1m4 0h1m23 0h1m8 0h1m5 0h1M0 103.5h1m5 0h1m1 0h2m9 0h1m10 0h1m4 0h2m2 0h2m2 0h1m6 0h1m2 0h1m7 0h1m3 0h1m1 0h2m2 0h1m7 0h2m1 0h1m3 0h1m5 0h1m3 0h1m3 0h1m1 0h1m6 0h1m2 0h1M0 104.5h1m3 0h2m1 0h1m2 0h2m13 0h1m2 0h2m7 0h1m1 0h1m1 0h1m3 0h1m1 0h1m7 0h1m2 0h1m6 0h1m1 0h1m11 0h1m14 0h1m13 0h1m10 0h1m3 0h2M1 105.5h1m4 0h1m2 0h1m1 0h1m7 0h1m5 0h1m2 0h2m5 0h1m4 0h1m1 0h2m6 0h1m1 0h1m4 0h2m1 0h1m4 0h1m7 0h1m3 0h1m1 0h1m1 0h1m6 0h1m5 0h1m1 0h1m2 0h1m3 0h1m8 0h1m3 0h2m3 0h1m5 0h1M6 106.5h1m4 0h1m7 0h1m1 0h2m12 0h1m2 0h1m2 0h1m2 0h1m1 0h2m9 0h1m5 0h1m7 0h1m7 0h1m13 0h2m1 0h1m18 0h1m1 0h1m1 0h1m3 0h1M12 107.5h2m3 0h1m2 0h1m11 0h1m4 0h1m2 0h2m8 0h1m5 0h1m15 0h1m6 0h1m10 0h1m4 0h1m2 0h1m3 0h1m6 0h1m12 0h1M13 108.5h1m2 0h1m2 0h1m2 0h1m1 0h1m2 0h1m6 0h1m1 0h2m2 0h1m2 0h1m9 0h1m3 0h1m1 0h1m1 0h2m3 0h1m2 0h1m3 0h1m3 0h1m3 0h2m5 0h2m8 0h2m2 0h1m9 0h1m1 0h1m12 0h1M2 109.5h1m9 0h1m2 0h2m9 0h1m2 0h1m6 0h1m5 0h1m12 0h1m9 0h1m13 0h1m3 0h1m2 0h1m4 0h1m2 0h1m1 0h1m4 0h1m2 0h2m7 0h1m7 0h2m4 0h1M2 110.5h1m5 0h1m10 0h1m5 0h1m2 0h1m4 0h2m7 0h1m3 0h2m3 0h1m6 0h1m8 0h3m3 0h1m6 0h1m1 0h1m2 0h1m10 0h2m2 0h1m8 0h1m2 0h1m3 0h1m4 0h3M3 111.5h1m3 0h1m5 0h1m5 0h1m10 0h2m8 0h1m5 0h1m7 0h1m4 0h1m3 0h3m18 0h1m1 0h1m6 0h1m5 0h1m2 0h1m1 0h1m11 0h2M1 112.5h1m5 0h1m4 0h1m3 0h1m2 0h1m3 0h1m8 0h2m2 0h1m5 0h1m4 0h1m16 0h1m2 0h1m2 0h1m3 0h1m7 0h1m7 0h1m10 0h1m2 0h1m2 0h1m3 0h1m6 0h1m3 0h1m1 0h1m1 0h1M0 113.5h1m9 0h1m5 0h1m1 0h1m23 0h1m9 0h1m3 0h1m4 0h3m3 0h1m2 0h1m1 0h1m9 0h1m2 0h1m1 0h1m13 0h1m5 0h1m6 0h2m4 0h1m5 0h2M5 114.5h2m2 0h1m13 0h1m6 0h1m3 0h1m2 0h1m2 0h1m9 0h1m4 0h2m12 0h4m5 0h3m3 0h1m6 0h1m8 0h1m5 0h1m6 0h1m1 0h1m4 0h1m6 0h1M4 115.5h1m3 0h1m2 0h1m2 0h1m9 0h1m4 0h1m5 0h1m7 0h2m2 0h1m2 0h2m5 0h1m11 0h1m1 0h1m9 0h1m7 0h1m3 0h1m1 0h1m3 0h2m11 0h1m10 0h1m3 0h1M1 116.5h1m20 0h1m8 0h1m20 0h1m6 0h1m10 0h1m2 0h5m1 0h1m6 0h1m2 0h1m2 0h2m6 0h1m5 0h1m2 0h1m16 0h1M7 117.5h1m5 0h1m1 0h1m9 0h1m2 0h3m7 0h2m1 0h1m5 0h1m1 0h1m2 0h1m12 0h1m3 0h1m2 0h2m1 0h1m6 0h1m1 0h1m2 0h1m4 0h2m9 0h2m14 0h1m5 0h2M6 118.5h1m5 0h2m5 0h1m1 0h2m4 0h2m1 0h1m3 0h1m2 0h1m1 0h1m2 0h2m14 0h1m5 0h1m7 0h1m3 0h1m2 0h1m8 0h1m1 0h1m7 0h2m1 0h1m2 0h1m16 0h1m4 0h1M1 119.5h1m5 0h1m4 0h1m1 0h1m4 0h1m7 0h1m8 0h1m1 0h1m2 0h1m4 0h1m7 0h1m2 0h1m2 0h1m1 0h1m10 0h1m1 0h1m5 0h1m13 0h1m6 0h1m11 0h1m5 0h1M0 120.5h1m4 0h1m17 0h1m1 0h1m8 0h1m6 0h1m5 0h1m3 0h1m5 0h1m8 0h3m1 0h2m4 0h1m7 0h1m6 0h1m17 0h1m4 0h1m1 0h1m10 0h1M18 121.5h2m2 0h1m8 0h1m4 0h1m2 0h1m8 0h2m4 0h1m2 0h1m26 0h2m5 0h1m16 0h1m1 0h1m2 0h1m2 0h1m3 0h1m6 0h1M1 122.5h1m9 0h1m11 0h1m7 0h1m1 0h1m3 0h2m5 0h1m12 0h1m8 0h1m1 0h1m6 0h1m6 0h1m4 0h1m2 0h1m23 0h1m7 0h1M5 123.5h1m14 0h1m2 0h1m12 0h2m8 0h2m20 0h1m5 0h1m18 0h1m3 0h1m7 0h1m1 0h1m1 0h1m3 0h1m11 0h1m1 0h1M4 124.5h1m2 0h1m2 0h1m5 0h1m6 0h2m4 0h1m2 0h1m6 0h1m2 0h1m5 0h1m4 0h3m7 0h3m2 0h1m9 0h2m3 0h1m7 0h2m4 0h2m3 0h1m4 0h2m2 0h1m4 0h2m7 0h1M3 125.5h1m1 0h1m3 0h2m2 0h2m6 0h1m2 0h1m24 0h1m3 0h2m1 0h1m8 0h2m3 0h1m13 0h1m1 0h1m8 0h1m11 0h1m3 0h1m11 0h1M4 126.5h1m7 0h1m3 0h1m3 0h1m6 0h1m6 0h1m6 0h1m7 0h1m5 0h1m7 0h1m4 0h1m2 0h1m1 0h1m2 0h1m15 0h1m1 0h1m1 0h1m3 0h3m5 0h1m4 0h2M4 127.5h1m4 0h1m3 0h1m3 0h1m1 0h2m14 0h2m1 0h1m5 0h1m6 0h1m2 0h1m9 0h1m7 0h1m2 0h1m2 0h1m2 0h1m13 0h1m1 0h1m1 0h1m1 0h1m3 0h1m11 0h1m4 0h1m3 0h1"/>
<path stroke="#ffdc00" stroke-width="1" fill="none" d="M0 0.5h1m1 0h1m3 0h1m13 0h1m14 0h1m2 0h1m15 0h1m10 0h1m1 0h1m8 0h1m8 0h1m2 0h1M1 1.5h1m9 0h1m11 0h1m1 0h1m3 0h1m4 0h1m4 0h1m25 0h1m13 0h1m5 0h1m2 0h3m4 0h1m2 0h1m7 0h1m7 0h1M1 2.5h1m5 0h1m1 0h1m16 0h1m17 0h2m1 0h1m23 0h2m4 0h1m11 0h2m2 0h1m6 0h1m15 0h1m9 0h1M3 3.5h1m4 0h1m7 0h1m8 0h1m3 0h1m4 0h1m5 0h1m17 0h1m13 0h1m20 0h1m8 0h1m7 0h1m1 0h1m1 0h1m6 0h1M11 4.5h4m4 0h1m2 0h1m41 0h1m4 0h1m4 0h1m1 0h1m20 0h1m1 0h1m8 0h1m5 0h1m5 0h1M12 5.5h1m1 0h1m1 0h1m24 0h1m13 0h1m38 0h1m7 0h1m1 0h1m6 0h1m8 0h1M0 6.5h1m7 0h1m26 0h1m17 0h1m2 0h2m4 0h1m17 0h1m2 0h1m7 0h1m3 0h1m4 0h1m12 0h1m13 0h1M6 7.5h1m8 0h1m15 0h1m19 0h1m12 0h1m8 0h1m2 0h1m8 0h1m6 0h2m1 0h1m8 0h1m5 0h1m7 0h1m4 0h1M23 8.5h1m8 0h1m17 0h1m28 0h1m7 0h1m31 0h1M12 9.5h1m1 0h1m8 0h1m13 0h2m4 0h1m4 0h2m15 0h3m4 0h1m1 0h2m7 0h1m14 0h1m5 0h1m15 0h1M0 10.5h2m19 0h1m1 0h1m14 0h1m2 0h1m3 0h1m28 0h1m14 0h1m14 0h1m6 0h1m10 0h1M2 11.5h1m6 0h1m5 0h1m22 0h1m9 0h1m11 0h1m2 0h1m13 0h1m4 0h1m23 0h1m3 0h1m15 0h2M6 12.5h2m6 0h1m10 0h1m14 0h1m18 0h2m5 0h1m5 0h1m4 0h1m9 0h1m7 0h1m7 0h2m1 0h1m6 0h1m5 0h1M5 13.5h1m1 0h1m11 0h1m2 0h1m1 0h1m46 0h1m1 0h1m4 0h1m5 0h1m13 0h1m11 0h1m13 0h1M3 14.5h1m24 0h1m10 0h1m13 0h1m11 0h1m5 0h1m14 0h1m1 0h1m4 0h1M18 15.5h1m7 0h2m11 0h1m6 0h1m51 0h1m10 0h1m3 0h1m8 0h2M9 16.5h1m9 0h1m11 0h1m4 0h1m15 0h1m6 0h1m55 0h1m6 0h1M23 17.5h1m6 0h1m17 0h2m6 0h1m1 0h1m3 0h1m14 0h2m1 0h1m27 0h1m9 0h1m4 0h1m2 0h1M4 18.5h1m13 0h1m2 0h1m2 0h1m3 0h1m5 0h1m26 0h1m15 0h1m5 0h1m12 0h1m8 0h2m2 0h1m14 0h1M5 19.5h1m14 0h1m1 0h1m4 0h1m16 0h1m8 0h2m1 0h1m10 0h1m8 0h1m7 0h1m7 0h3m17 0h1m6 0h1M5 20.5h2m9 0h1m2 0h1m2 0h1m2 0h1m2 0h1m24 0h1m1 0h1m3 0h1m9 0h1m31 0h1m8 0h1m14 0h1M2 21.5h1m14 0h1m9 0h1m14 0h1m4 0h1m16 0h1m29 0h1m22 0h1m2 0h1M0 22.5h1m2 0h1m7 0h2m14 0h1m5 0h1m14 0h2m15 0h1m10 0h1m23 0h2m2 0h1m15 0h1M22 23.5h1m39 0h1m26 0h1m16 0h1m1 0h1m7 0h1M3 24.5h1m8 0h1m12 0h1m3 0h1m2 0h1m7 0h1m4 0h1m2 0h1m4 0h1m5 0h1m6 0h1m5 0h1m3 0h1m4 0h1m2 0h1m3 0h1m7 0h1m3 0h1m10 0h1m1 0h1m3 0h1M12 25.5h2m11 0h2m8 0h1m7 0h1m4 0h1m16 0h1m7 0h1m1 0h1m2 0h1m9 0h1m3 0h1m1 0h1m2 0h1m1 0h2m7 0h1m5 0h1m1 0h1m6 0h1M2 26.5h1m3 0h1m1 0h1m18 0h1m3 0h1m4 0h1m1 0h1m1 0h1m9 0h1m1 0h1m3 0h1m3 0h1m7 0h1m14 0h1m13 0h1m1 0h1m8 0h1m1 0h1m14 0h1M1 27.5h1m2 0h1m8 0h1m3 0h1m2 0h1m2 0h1m14 0h1m10 0h1m7 0h1m3 0h1m5 0h1m5 0h1m3 0h1m21 0h1m2 0h2m9 0h1m10 0h1M14 28.5h1m21 0h1m26 0h1m28 0h1m4 0h1m1 0h1m2 0h1m2 0h1m8 0h1m4 0h1m5 0h1M1 29.5h1m11 0h1m9 0h2m8 0h1m1 0h1m6 0h1m5 0h1m4 0h1m15 0h1m21 0h1m1 0h1m7 0h1m11 0h1m13 0h1M2 30.5h1m7 0h1m7 0h1m4 0h1m5 0h1m4 0h1m6 0h1m1 0h1m2 0h2m4 0h1m17 0h1m6 0h1m16 0h2M12 31.5h1m1 0h1m1 0h1m3 0h1m12 0h2m2 0h1m10 0h1m1 0h1m1 0h1m6 0h1m12 0h2m1 0h1m18 0h1m4 0h1m22 0h1m1 0h1m1 0h1M0 32.5h1m1 0h2m2 0h1m18 0h1m3 0h1m1 0h1m15 0h1m23 0h1m39 0h2m6 0h2m3 0h1M3 33.5h2m5 0h1m25 0h2m9 0h1m23 0h1m17 0h1m20 0h1m8 0h1m4 0h1M3 34.5h1m4 0h1m8 0h1m40 0h1m2 0h1m3 0h1m3 0h1m1 0h1m4 0h1m2 0h1m19 0h1m5 0h1m14 0h1M38 35.5h1m11 0h1m8 0h1m7 0h1m3 0h1m5 0h1m3 0h1m15 0h1m7 0h2m1 0h1m2 0h1M30 36.5h1m1 0h1m5 0h1m4 0h1m13 0h1m1 0h1m7 0h1m1 0h1m31 0h1m4 0h1m11 0h1m5 0h1M0 37.5h1m16 0h1m9 0h1m1 0h1m7 0h2m30 0h1m27 0h1m9 0h1m15 0h1M12 38.5h1m50 0h1m14 0h2m2 0h1m1 0h1m11 0h1m5 0h1m6 0h1m8 0h1M2 39.5h1m9 0h1m7 0h1m2 0h3m6 0h1m9 0h1m9 0h1m20 0h1m3 0h1m8 0h1m7 0h1m7 0h2m13 0h1m2 0h1m4 0h1M10 40.5h1m5 0h1m15 0h1m2 0h1m2 0h1m4 0h1m20 0h1m4 0h1m1 0h2m6 0h1m2 0h2m4 0h1m6 0h1m5 0h2m20 0h1M7 41.5h1m3 0h1m6 0h1m5 0h1m12 0h1m2 0h1m6 0h1m9 0h1m19 0h1m10 0h1m7 0h1m10 0h1m7 0h1M20 42.5h1m2 0h2m10 0h1m5 0h1m7 0h2m1 0h1m13 0h2m11 0h1m11 0h1m2 0h1m1 0h1m1 0h1m5 0h1m3 0h1m5 0h1M16 43.5h2m3 0h1m4 0h1m15 0h2m21 0h1m17 0h1m5 0h1m5 0h1m4 0h2m7 0h1M5 44.5h1m6 0h1m10 0h1m4 0h1m1 0h1m1 0h1m1 0h1m4 0h1m5 0h1m9 0h1m13 0h1m9 0h1m11 0h1m3 0h1m16 0h1M20 45.5h1m3 0h1m7 0h1m6 0h1m1 0h1m15 0h1m11 0h1m3 0h1m20 0h1m3 0h1M4 46.5h1m6 0h1m5 0h1m2 0h1m3 0h1m23 0h2m9 0h1m7 0h1m2 0h1m6 0h1m2 0h1m17 0h1m8 0h1m15 0h1M8 47.5h1m36 0h1m9 0h1m8 0h2m18 0h1m39 0h2M4 48.5h1m4 0h2m12 0h1m8 0h2m10 0h1m9 0h1m3 0h1m4 0h1m3 0h1m18 0h1m5 0h1m10 0h1m7 0h1m13 0h1M2 49.5h1m13 0h1m12 0h1m1 0h2m12 0h1m1 0h1m5 0h1m16 0h2m8 0h1m3 0h1m3 0h1m1 0h1m24 0h1M2 50.5h1m2 0h1m19 0h1m23 0h1m7 0h1m12 0h2m16 0h1m8 0h1m2 0h1m4 0h2m1 0h1M15 51.5h1m4 0h1m13 0h1m3 0h1m22 0h1m12 0h1m5 0h1m4 0h2m4 0h1m14 0h2m2 0h1m4 0h1m7 0h1M9 52.5h1m13 0h3m19 0h1m7 0h1m20 0h1m3 0h1m5 0h1m2 0h2m4 0h1m13 0h1m12 0h2m5 0h1M2 53.5h2m6 0h1m14 0h1m2 0h1m6 0h2m5 0h1m11 0h1m10 0h1m3 0h2m12 0h1m6 0h1m29 0h1M52 54.5h1m7 0h1m4 0h1m9 0h1m1 0h1m14 0h2m1 0h1m8 0h1m4 0h1m4 0h1m7 0h1m3 0h1M5 55.5h1m4 0h1m11 0h1m16 0h1m8 0h2m3 0h1m2 0h1m7 0h1m8 0h1m2 0h1m1 0h1m5 0h2m3 0h1m1 0h1m7 0h1m7 0h1m2 0h1m1 0h1m14 0h1M10 56.5h1m22 0h1m2 0h1m2 0h1m13 0h1m1 0h1m14 0h1m7 0h1m6 0h1m14 0h1m2 0h1m8 0h1m10 0h1m1 0h2M17 57.5h1m4 0h1m12 0h1m1 0h1m2 0h1m14 0h1m7 0h1m10 0h1m3 0h1m25 0h1m10 0h1m1 0h1m5 0h1M1 58.5h1m3 0h1m13 0h1m9 0h1m16 0h1m26 0h1m2 0h1m14 0h1m14 0h1m3 0h1m3 0h1m7 0h1M0 59.5h1m1 0h1m21 0h1m4 0h1m12 0h1m10 0h1m6 0h1m3 0h1m8 0h2m4 0h1m6 0h1m1 0h1m1 0h1m2 0h1m4 0h1m2 0h1m3 0h1m3 0h1m9 0h1m1 0h1m1 0h2M4 60.5h1m12 0h1m3 0h1m1 0h1m13 0h1m2 0h1m6 0h1m5 0h1m5 0h1m3 0h1m6 0h1m18 0h2m24 0h1m3 0h1m7 0h1M1 61.5h1m3 0h1m12 0h1m4 0h1m5 0h1m5 0h1m4 0h1m14 0h1m2 0h1m1 0h1m4 0h1m2 0h1m2 0h1m12 0h1m6 0h1m7 0h2m23 0h1M7 62.5h1m21 0h1m2 0h1m21 0h1m20 0h1m2 0h1m3 0h1m10 0h1m3 0h2m4 0h1m8 0h1m6 0h1m1 0h2M0 63.5h1m15 0h1m5 0h1m2 0h1m6 0h1m1 0h2m3 0h1m11 0h2m7 0h1m20 0h1m10 0h2m2 0h1m4 0h1M7 64.5h1m2 0h1m4 0h1m6 0h1m5 0h1m3 0h1m4 0h1m8 0h1m9 0h1m8 0h1m4 0h1m4 0h1m10 0h1m5 0h1m6 0h1m1 0h1m7 0h2m6 0h2M19 65.5h2m14 0h1m6 0h2m22 0h1m5 0h1m2 0h1m7 0h1m6 0h1m6 0h1m5 0h1m16 0h1M2 66.5h1m17 0h1m17 0h2m16 0h1m3 0h1m2 0h1m1 0h1m6 0h1m5 0h1m7 0h1m16 0h1m3 0h2m3 0h1m9 0h1M0 67.5h1m3 0h1m6 0h1m5 0h1m7 0h1m2 0h1m2 0h1m11 0h1m13 0h2m10 0h1m5 0h1m21 0h1m3 0h1m6 0h2m16 0h1M2 68.5h3m2 0h1m2 0h1m2 0h1m4 0h1m1 0h1m6 0h1m1 0h2m8 0h2m8 0h1m29 0h2m33 0h1M30 69.5h2m33 0h1m7 0h1m6 0h1m1 0h2m7 0h1m4 0h1m16 0h1M4 70.5h1m7 0h1m3 0h1m7 0h1m20 0h1m8 0h1m3 0h1m19 0h1m3 0h1m8 0h1m4 0h2m6 0h1m3 0h1m3 0h2m4 0h1m7 0h1M15 71.5h2m3 0h1m1 0h1m1 0h1m6 0h1m1 0h1m2 0h2m3 0h1m1 0h1m9 0h1m4 0h1m5 0h1m17 0h1m7 0h1m10 0h2m10 0h1m6 0h1m4 0h1M10 72.5h2m1 0h1m15 0h1m3 0h2m4 0h1m3 0h1m12 0h1m6 0h1m16 0h1m1 0h1m4 0h1m3 0h1m16 0h1m2 0h1m13 0h1M27 73.5h1m17 0h1m13 0h1m4 0h1m3 0h1m9 0h1m13 0h1m13 0h1m6 0h1m11 0h2M52 74.5h1m20 0h1m12 0h2m9 0h1m7 0h1m6 0h1m6 0h1m7 0h1M1 75.5h2m6 0h1m18 0h1m17 0h1m6 0h1m17 0h1m6 0h1m2 0h1m6 0h1m5 0h1m7 0h1m3 0h1M4 76.5h1m15 0h1m4 0h1m10 0h1m13 0h1m4 0h1m3 0h1m2 0h1m16 0h1m5 0h1m5 0h1m5 0h1m25 0h1m1 0h1M0 77.5h1m30 0h1m10 0h2m7 0h1m5 0h1m5 0h2m9 0h1m10 0h3m2 0h1m10 0h1m21 0h2M0 78.5h1m8 0h1m1 0h2m4 0h1m1 0h2m1 0h1m1 0h1m10 0h1m21 0h1m37 0h1m7 0h2m15 0h1M1 79.5h1m5 0h1m14 0h1m19 0h1m11 0h1m3 0h1m13 0h1m2 0h2m4 0h1m41 0h1M14 80.5h1m1 0h1m9 0h1m9 0h1m6 0h1m1 0h1m2 0h1m10 0h1m6 0h1m3 0h2m8 0h1m3 0h1m4 0h1m3 0h1m7 0h1m13 0h1M3 81.5h1m7 0h1m1 0h1m2 0h1m19 0h1m2 0h1m2 0h1m8 0h1m1 0h1m15 0h1m7 0h1m33 0h1m15 0h1M2 82.5h2m3 0h1m12 0h1m2 0h1m16 0h1m1 0h1m18 0h1m5 0h1m11 0h1m7 0h2m8 0h1m3 0h1m6 0h1m8 0h1m8 0h1M2 83.5h1m5 0h1m1 0h1m3 0h1m2 0h1m7 0h2m6 0h2m22 0h1m5 0h1m5 0h1m22 0h1m9 0h2m3 0h1m18 0h1M0 84.5h1m6 0h1m6 0h1m18 0h1m2 0h1m4 0h1m2 0h1m2 0h1m13 0h1m7 0h2m22 0h1m2 0h1m4 0h1m3 0h1m10 0h1m10 0h1M1 85.5h1m10 0h1m1 0h1m2 0h1m12 0h1m1 0h1m15 0h1m2 0h1m3 0h1m6 0h1m9 0h1m1 0h1m11 0h1m4 0h1m3 0h1m19 0h1m5 0h1m2 0h1M6 86.5h1m2 0h1m17 0h1m13 0h1m5 0h1m1 0h1m4 0h1m4 0h1m13 0h1m9 0h1m1 0h1m3 0h1m3 0h1m7 0h1m1 0h1m13 0h2m7 0h1M3 87.5h1m2 0h1m1 0h1m1 0h4m1 0h1m6 0h1m4 0h1m19 0h1m3 0h1m6 0h1m1 0h1m2 0h2m2 0h1m3 0h1m18 0h1m5 0h1m1 0h1m5 0h1m14 0h2m2 0h1m1 0h1m1 0h1M7 88.5h1m1 0h1m14 0h1m20 0h1m9 0h1m9 0h1m10 0h1m6 0h1m15 0h1m1 0h1m20 0h1m2 0h1m1 0h1M11 89.5h1m6 0h1m3 0h1m2 0h1m17 0h1m6 0h1m8 0h1m20 0h1m6 0h1m6 0h1m10 0h1m12 0h1M4 90.5h1m3 0h1m9 0h1m3 0h1m4 0h1m10 0h2m2 0h1m32 0h1m9 0h1m5 0h1m1 0h1m6 0h1m11 0h1M9 91.5h1m8 0h1m6 0h1m6 0h1m11 0h1m2 0h1m14 0h2m3 0h1m1 0h1m6 0h2m5 0h1m2 0h1m31 0h2m5 0h1M12 92.5h1m3 0h1m11 0h1m11 0h1m5 0h1m2 0h1m2 0h1m8 0h1m10 0h1m7 0h1m4 0h1M0 93.5h2m25 0h1m13 0h2m4 0h1m21 0h1m21 0h1m9 0h1m9 0h1m5 0h1m3 0h1M11 94.5h3m13 0h1m1 0h1m6 0h1m26 0h1m2 0h1m7 0h1m3 0h2m2 0h1m5 0h1m16 0h1m2 0h1m4 0h1m3 0h1M2 95.5h1m2 0h1m5 0h2m11 0h1m5 0h2m7 0h1m5 0h1m9 0h1m12 0h1m6 0h1m4 0h1m8 0h1m2 0h1m1 0h1m9 0h1m2 0h1m10 0h1m1 0h2m2 0h2M9 96.5h1m11 0h2m6 0h1m2 0h1m12 0h1m8 0h1m3 0h1m10 0h1m11 0h1m1 0h1m3 0h1m2 0h1m13 0h1m6 0h1M15 97.5h1m15 0h1m2 0h2m13 0h2m5 0h1m1 0h1m6 0h3m2 0h1m20 0h1M13 98.5h1m5 0h1m5 0h1m5 0h1m3 0h2m5 0h1m10 0h1m7 0h1m6 0h1m25 0h1m11 0h1m1 0h1m16 0h1M20 99.5h1m6 0h1m9 0h1m8 0h1m29 0h1m5 0h1m5 0h1m1 0h1m2 0h1m2 0h1m8 0h1m21 0h1M5 100.5h1m6 0h1m1 0h1m14 0h2m12 0h1m6 0h1m1 0h1m18 0h1m2 0h1m10 0h1m18 0h1m2 0h2m9 0h1m2 0h2M1 101.5h1m2 0h1m10 0h1m7 0h1m13 0h1m5 0h1m5 0h1m10 0h1m23 0h1m6 0h1m8 0h1m5 0h1m4 0h2m7 0h1M3 102.5h1m1 0h1m1 0h1m9 0h1m21 0h1m28 0h1m11 0h1m6 0h1m1 0h1m15 0h2M2 103.5h1m19 0h2m8 0h1m13 0h1m61 0h1m16 0h1M6 104.5h1m12 0h3m5 0h1m2 0h1m7 0h1m9 0h2m9 0h1m23 0h1m11 0h1m1 0h1m14 0h2m1 0h1M12 105.5h1m18 0h1m14 0h1m1 0h1m17 0h1m1 0h4m19 0h1m1 0h1m11 0h1m2 0h1M2 106.5h1m22 0h1m23 0h2m5 0h1m4 0h1m16 0h1m5 0h1m14 0h1m4 0h1m16 0h1M15 107.5h1m11 0h1m1 0h1m3 0h2m1 0h1m8 0h1m17 0h1m11 0h1m7 0h1m13 0h1m10 0h1m8 0h1m5 0h1M2 108.5h1m4 0h1m4 0h1m1 0h1m6 0h1m6 0h1m26 0h1m2 0h1m16 0h1m2 0h1m7 0h2m34 0h2M5 109.5h1m4 0h1m2 0h1m9 0h1m1 0h1m4 0h1m1 0h2m11 0h1m3 0h1m1 0h1m5 0h1m2 0h1m3 0h1m4 0h1m3 0h1m7 0h1m6 0h1m30 0h1M10 110.5h2m3 0h1m13 0h1m22 0h1m1 0h1m9 0h1m12 0h1m11 0h1m25 0h1M10 111.5h1m6 0h1m15 0h1m3 0h1m22 0h1m7 0h1m8 0h1m10 0h1m8 0h1m8 0h1m1 0h1M0 112.5h1m7 0h1m13 0h1m1 0h2m2 0h1m9 0h1m12 0h1m2 0h1m2 0h1m7 0h1m2 0h2m9 0h1m1 0h1m6 0h2m9 0h2m18 0h3m3 0h1M2 113.5h2m11 0h1m4 0h1m7 0h1m4 0h2m3 0h1m25 0h1m1 0h1m9 0h2m8 0h1m2 0h2m2 0h1m3 0h1M3 114.5h1m7 0h1m16 0h1m17 0h1m15 0h1m18 0h1m5 0h1m4 0h1m12 0h1m3 0h1m4 0h1m1 0h1M1 115.5h2m15 0h1m1 0h1m4 0h1m10 0h1m3 0h1m1 0h1m16 0h1m3 0h2m8 0h1m5 0h1m4 0h1m9 0h1m14 0h1m3 0h1m8 0h1M2 116.5h1m1 0h1m3 0h1m31 0h2m4 0h1m4 0h1m12 0h1m16 0h1m29 0h1m3 0h1m1 0h1M10 117.5h1m3 0h1m8 0h1m3 0h1m16 0h1m1 0h1m1 0h1m2 0h1m42 0h1m4 0h1m6 0h1m11 0h1M11 118.5h1m8 0h1m2 0h1m27 0h1m4 0h1m6 0h1m6 0h1m12 0h1m12 0h1m30 0h1M6 119.5h1m1 0h2m8 0h1m15 0h1m10 0h1m3 0h1m9 0h1m4 0h1m9 0h1m2 0h1m13 0h1m6 0h1m7 0h1m12 0h1M13 120.5h1m26 0h1m2 0h1m15 0h1m15 0h1m10 0h1m7 0h1m7 0h1m2 0h1m9 0h1M20 121.5h1m20 0h1m5 0h1m8 0h1m21 0h1m7 0h1m6 0h1m1 0h1m9 0h1m5 0h2M13 122.5h2m25 0h1m19 0h1m2 0h3m14 0h1m2 0h2m4 0h1m5 0h1m1 0h2m2 0h1M6 123.5h1m1 0h1m1 0h1m11 0h1m10 0h1m15 0h1m17 0h1m3 0h2m4 0h1m9 0h2m19 0h1m6 0h2m4 0h1m4 0h1M34 124.5h1m10 0h1m14 0h1m6 0h1m3 0h2m9 0h1m10 0h1m1 0h1m7 0h1m11 0h1m6 0h1m3 0h1M6 125.5h1m4 0h1m27 0h1m8 0h1m9 0h1m2 0h1m10 0h1m20 0h1m6 0h1m2 0h1m6 0h1M0 126.5h1m1 0h1m20 0h2m5 0h1m6 0h1m2 0h1m2 0h1m3 0h1m5 0h1m12 0h2m11 0h1m10 0h1m2 0h1m13 0h1m9 0h1m6 0h1M39 127.5h2m7 0h1m13 0h1m5 0h1m7 0h2m40 0h1"/>
<path stroke="#ffff0d" stroke-width="1" fill="none" d="M1 0.5h1m6 0h1m4 0h1m19 0h1m19 0h1M14 1.5h1m18 0h1m11 0h1m55 0h1m13 0h2m10 0h1M0 2.5h1m26 0h1m91 0h1M0 3.5h1m54 0h1m14 0h1m2 0h1m6 0h1m8 0h1m17 0h1m7 0h1M3 4.5h1m4 0h1m21 0h2m12 0h1m10 0h1m14 0h1m17 0h1m13 0h2m3 0h1m14 0h1m4 0h1M17 5.5h1m5 0h1m10 0h1m35 0h1m2 0h1m16 0h1m34 0h1M15 6.5h1m9 0h2m3 0h1m2 0h1m8 0h1m9 0h1m39 0h1m12 0h2m19 0h1M5 7.5h1m20 0h1m18 0h1m16 0h1m2 0h1m3 0h1m5 0h1m2 0h1M2 8.5h1m8 0h1m7 0h1m7 0h1m27 0h1m8 0h1m12 0h1m18 0h1m13 0h1M19 9.5h1m9 0h1m1 0h1m15 0h1m22 0h1m15 0h1m3 0h1m1 0h1m14 0h1m10 0h1M9 10.5h1m9 0h1m19 0h1m14 0h2m30 0h1m5 0h1M45 11.5h1m16 0h1m18 0h1m12 0h1M2 12.5h1m16 0h1m11 0h1m93 0h1M40 13.5h1m78 0h1m5 0h1M45 14.5h1m11 0h1m14 0h1m5 0h1m19 0h1m8 0h1m8 0h2M0 15.5h1m3 0h1m8 0h1m27 0h1m27 0h1m6 0h1m10 0h1M18 16.5h1m16 0h1m4 0h1m4 0h1m16 0h1m2 0h2m6 0h1m1 0h1m13 0h1M4 17.5h1m16 0h1m14 0h1m1 0h1m31 0h1m4 0h1m12 0h1m12 0h1M10 18.5h1m42 0h1m4 0h1m7 0h2m10 0h1m19 0h1m20 0h1M0 19.5h1m13 0h1m22 0h1m2 0h1m8 0h1m25 0h1m9 0h1m2 0h1m26 0h2M44 20.5h1m4 0h2m26 0h1M43 21.5h1m9 0h1m1 0h1m5 0h1m6 0h1m1 0h1m5 0h1m4 0h1m11 0h1m6 0h1m5 0h1m3 0h1m5 0h1m1 0h1m8 0h1M9 22.5h1m16 0h1m3 0h1m43 0h1m4 0h1M1 23.5h1m10 0h1m65 0h1m11 0h1m3 0h1m8 0h1m3 0h1m14 0h1M0 24.5h1m3 0h1m9 0h1m18 0h1m7 0h1m44 0h1m7 0h1m6 0h1m19 0h1M2 25.5h1m1 0h1m25 0h1m9 0h1m5 0h1m4 0h1m3 0h2m7 0h1m15 0h1m39 0h1M17 26.5h1m30 0h1m21 0h1m10 0h1m7 0h1m6 0h1m23 0h1m5 0h1M9 27.5h1m8 0h1m15 0h1m4 0h1m1 0h1m33 0h1m2 0h1m1 0h1m5 0h1m19 0h1m2 0h1m10 0h1M27 28.5h1m19 0h1m21 0h1m8 0h1m7 0h1m17 0h1m15 0h1M14 29.5h1m4 0h1m17 0h3m25 0h1m2 0h1m7 0h1m5 0h2m14 0h1m5 0h1M15 30.5h1m9 0h1m6 0h1m18 0h1m10 0h1m28 0h1m9 0h1m7 0h3m9 0h1M6 31.5h1m15 0h2m42 0h1m40 0h1m13 0h1m1 0h1m3 0h1M5 32.5h1m24 0h1m13 0h1m1 0h1m9 0h1m1 0h1m10 0h1m23 0h1m24 0h1m8 0h1M2 33.5h1m46 0h1m4 0h1m28 0h1m9 0h1m8 0h1m5 0h2M0 34.5h1m25 0h1m22 0h1m27 0h1m10 0h2m2 0h1M0 35.5h1m6 0h1m2 0h1m63 0h1m8 0h1m3 0h1m11 0h1M6 36.5h1m33 0h1m10 0h2m37 0h1m4 0h1m6 0h1m10 0h1m6 0h1m1 0h1M44 37.5h1m8 0h2m32 0h1M4 38.5h1m2 0h1m22 0h1m4 0h1m14 0h1m26 0h1m39 0h1m7 0h1M9 39.5h1m30 0h1m2 0h1m2 0h1m12 0h1m16 0h1m22 0h1m9 0h1m4 0h1m6 0h1M4 40.5h1m1 0h1m20 0h1m18 0h1m16 0h1m2 0h1m6 0h1m40 0h1M0 41.5h1m18 0h1m19 0h1m5 0h1m8 0h1m4 0h3m7 0h1m21 0h1m12 0h1m7 0h1m8 0h1M4 42.5h2m2 0h1m33 0h1m2 0h1m15 0h1m15 0h1m5 0h1m38 0h1M28 43.5h1m44 0h1m2 0h1m16 0h1m12 0h1m6 0h1m9 0h1M14 44.5h1m11 0h1m4 0h1m40 0h1m5 0h1m14 0h1m2 0h1m6 0h1m21 0h1M4 45.5h1m31 0h2m7 0h1m2 0h1m10 0h1m10 0h1m18 0h1m2 0h1m2 0h1m7 0h1m13 0h1m3 0h1m5 0h1M28 46.5h1m37 0h1m23 0h1m4 0h1m8 0h1m3 0h1M39 47.5h1m1 0h1m30 0h1m12 0h1m32 0h2m2 0h1M12 48.5h1m8 0h1m15 0h1m4 0h1m44 0h1m6 0h1m5 0h1m1 0h1m11 0h1m4 0h1M7 49.5h1m18 0h1m15 0h1m36 0h1m2 0h1m19 0h1m11 0h1M4 50.5h1m5 0h1m12 0h1m22 0h1m13 0h1m3 0h2m10 0h1m10 0h1m3 0h1m22 0h1M14 51.5h1m8 0h1m19 0h1m9 0h1m17 0h1m4 0h1m4 0h1m18 0h1m15 0h1M26 52.5h1m4 0h1m2 0h1m21 0h1m56 0h1M1 53.5h1m20 0h1m4 0h1m16 0h1m16 0h1m34 0h1m2 0h1M55 54.5h1m6 0h1m23 0h1m13 0h1M16 55.5h1m1 0h1m8 0h1m5 0h1m45 0h1m6 0h1m22 0h1M18 56.5h1m4 0h1m17 0h1m5 0h1m14 0h1m11 0h1m18 0h1m21 0h1m5 0h1M68 57.5h1m39 0h1m7 0h1m8 0h1M8 58.5h1m47 0h1m8 0h1m11 0h1m17 0h1m6 0h1M5 59.5h1m7 0h1m22 0h2m7 0h1m16 0h1m45 0h1M14 60.5h1m12 0h1m20 0h1m2 0h1m10 0h1m3 0h1m17 0h1m10 0h1m17 0h1M6 61.5h1m3 0h1m9 0h1m1 0h1m4 0h1m18 0h1m43 0h1m6 0h1m4 0h2m5 0h1M5 62.5h1m9 0h1m21 0h1m13 0h1m72 0h1M3 63.5h1m27 0h1m70 0h1m2 0h1m8 0h1m3 0h1m7 0h1M18 64.5h2m53 0h1m4 0h1m5 0h1m27 0h1m9 0h1M0 65.5h1m8 0h1m11 0h1m18 0h1m19 0h1m4 0h1m7 0h2m1 0h1m10 0h1m7 0h1m16 0h1M45 66.5h1m7 0h1m7 0h1m27 0h1m19 0h1m14 0h2M2 67.5h1m2 0h1m16 0h1m3 0h2m2 0h1m3 0h2m5 0h1m20 0h1m1 0h1m59 0h1M16 68.5h1m21 0h1m29 0h1m18 0h1m1 0h1m26 0h1M0 69.5h1m9 0h1m28 0h2m18 0h1m19 0h1m1 0h1m6 0h2m15 0h2m3 0h1m14 0h1M8 70.5h1m11 0h2m8 0h1m3 0h1m36 0h1m27 0h1m6 0h1m15 0h1m4 0h1M6 71.5h1m4 0h1m32 0h1m2 0h1m1 0h1m6 0h1m2 0h1m3 0h1m2 0h1m26 0h1m14 0h1M32 72.5h1m2 0h2m17 0h1m11 0h1m7 0h1m11 0h1m32 0h1M12 73.5h1m4 0h1m1 0h1m53 0h1m8 0h1m7 0h1m30 0h1M11 74.5h1m1 0h1m56 0h1m22 0h1m8 0h1m1 0h1M19 75.5h1m2 0h1m15 0h1m9 0h1m1 0h1m13 0h1m1 0h1m6 0h1m9 0h1m3 0h1M14 76.5h1m17 0h1m20 0h1m21 0h1m35 0h1m3 0h1M36 77.5h1m1 0h1m26 0h1m5 0h1m23 0h1m14 0h1M15 78.5h1m14 0h1m15 0h1m12 0h1m2 0h1m35 0h1m1 0h1m9 0h1m13 0h1M4 79.5h1m47 0h1M4 80.5h1m3 0h1m1 0h1m4 0h1m11 0h1m4 0h1m49 0h1m3 0h1M22 81.5h1m40 0h1m4 0h1m17 0h1M59 82.5h1m30 0h1m3 0h1m5 0h1m26 0h1M44 83.5h1m5 0h1m2 0h1m12 0h1m14 0h1m37 0h2m4 0h1M19 84.5h1m5 0h1m1 0h1m38 0h1m1 0h1m8 0h1m6 0h1m4 0h1m5 0h1m18 0h1m8 0h1M8 85.5h1m6 0h1m9 0h1m21 0h1m2 0h1m17 0h1m16 0h1m1 0h1m17 0h1m19 0h1M4 86.5h1m23 0h1m37 0h1m21 0h1m6 0h1m8 0h1M19 87.5h1m13 0h1m48 0h2m18 0h2m10 0h1M10 88.5h1m11 0h1m13 0h1m4 0h1m12 0h1m25 0h1m1 0h1m15 0h1M8 89.5h1m32 0h1m24 0h1m39 0h1m14 0h1m1 0h1M26 90.5h1m1 0h1m3 0h1m12 0h1m28 0h1m14 0h2m29 0h1M3 91.5h1m10 0h1m21 0h1m1 0h1m1 0h1m38 0h1m22 0h1m3 0h1M15 92.5h1m3 0h2m3 0h1m17 0h1m19 0h1m13 0h1M2 93.5h2m36 0h1m10 0h1m11 0h1m2 0h1m14 0h1m6 0h2m30 0h1m1 0h1M0 94.5h1m34 0h1m25 0h1m29 0h1m14 0h1m3 0h2M14 95.5h1m6 0h1m40 0h1m14 0h1m21 0h1m1 0h1M12 96.5h1m27 0h1m6 0h1m27 0h1m36 0h1m7 0h1m3 0h1M25 97.5h1m59 0h1m26 0h1M20 98.5h1m49 0h1m18 0h1m7 0h2m2 0h1m14 0h1m9 0h1M3 99.5h1m18 0h1m31 0h2m13 0h1m14 0h1m15 0h1M21 100.5h1m27 0h1m9 0h2m21 0h1m1 0h1m4 0h1m35 0h1M13 101.5h1m4 0h1m17 0h1m17 0h1m8 0h1m37 0h1m19 0h1M1 102.5h1m20 0h1m37 0h1m8 0h1m9 0h1M5 103.5h1m4 0h1m9 0h1m12 0h1m28 0h1m32 0h1m1 0h1m18 0h1M40 104.5h1m19 0h1m19 0h1m10 0h1m8 0h1m2 0h1m2 0h1m13 0h1M4 105.5h1m2 0h1m2 0h1m7 0h1m17 0h1m39 0h1m1 0h1M32 106.5h1m27 0h1m11 0h1m7 0h1m6 0h1m2 0h1m1 0h1m34 0h1M10 107.5h1m19 0h1m8 0h1m11 0h1m3 0h1m2 0h1m21 0h1m45 0h1M17 108.5h1m12 0h2m17 0h1m15 0h1m37 0h1m6 0h1m8 0h1M19 109.5h1m17 0h1m34 0h1m14 0h1m1 0h1m17 0h1m12 0h1m4 0h1M0 110.5h1m29 0h2m8 0h1m3 0h1m14 0h1m14 0h1m11 0h1M15 111.5h1m40 0h1m24 0h1m16 0h1m1 0h1m2 0h1m9 0h1m11 0h2M4 112.5h1m21 0h1m4 0h1m41 0h1m21 0h1m7 0h1m4 0h1M19 113.5h1m3 0h1m21 0h1m23 0h1m3 0h1m24 0h1m13 0h1M10 114.5h1m14 0h1m18 0h1m31 0h1m12 0h1M7 115.5h1m4 0h1m8 0h2m37 0h1m29 0h1m1 0h1m15 0h1m7 0h1m8 0h2M10 116.5h1m6 0h1m2 0h1m5 0h1m9 0h1m17 0h1m2 0h1m13 0h1m8 0h1m7 0h1m32 0h1m2 0h1M9 117.5h1m26 0h1m5 0h1m20 0h1m12 0h1m19 0h1M1 118.5h1m1 0h1m1 0h1m39 0h1m25 0h1m13 0h1m30 0h1M25 119.5h1m9 0h1m6 0h2m67 0h1m10 0h1m1 0h1M1 120.5h1m6 0h1m26 0h1m10 0h1m17 0h1m18 0h1M104 121.5h1m1 0h1M12 122.5h1m13 0h1m9 0h1m18 0h1m35 0h1m1 0h1m12 0h1m16 0h1M17 123.5h1m71 0h1m6 0h1M13 124.5h2m58 0h1m1 0h2m7 0h1m20 0h1m13 0h1m4 0h1M16 125.5h1m1 0h1m11 0h2m19 0h1m12 0h1m50 0h1M1 126.5h1m23 0h1m28 0h1m1 0h1m23 0h2m15 0h1m1 0h1M16 127.5h1m6 0h1m3 0h1m4 0h1m34 0h1m14 0h1m30 0h1"/>
<path stroke="#ffff4e" stroke-width="1" fill="none" d="M46 0.5h1m25 0h1m24 0h1m8 0h1M13 1.5h1m14 0h1m32 0h1m24 0h1M18 2.5h1M22 3.5h1m5 0h1m37 0h1m36 0h1M37 5.5h1m14 0h1m14 0h1M12 6.5h1m24 0h1m58 0h1m7 0h1M20 7.5h1m65 0h1M25 8.5h1m26 0h1m53 0h1m2 0h1M33 9.5h1m1 0h1m33 0h1m32 0h1m23 0h1M61 10.5h1m14 0h1m32 0h1M1 11.5h1m31 0h1m56 0h1m13 0h1M73 12.5h1m4 0h1m32 0h1m9 0h1m1 0h2M47 13.5h1M0 14.5h1m67 0h1M3 15.5h1m49 0h1m47 0h1M24 16.5h1m53 0h1M111 18.5h1m4 0h1m8 0h1M8 19.5h1m29 0h1m4 0h1m26 0h1M3 20.5h1m110 0h1M60 21.5h1m28 0h1m6 0h1M58 22.5h1m48 0h1M34 24.5h1m9 0h1m73 0h1m7 0h1M3 25.5h1m2 0h1M100 26.5h1M59 27.5h1m51 0h1M3 28.5h1m34 0h1m76 0h1M45 30.5h1m33 0h2m11 0h1M17 31.5h1M49 32.5h1m32 0h1m27 0h1m15 0h1M35 33.5h1m6 0h1m16 0h1m15 0h1m19 0h2m26 0h1M96 34.5h1M16 35.5h1m30 0h1M2 36.5h1m12 0h1m52 0h1m12 0h2M23 37.5h1m8 0h1m44 0h1M121 38.5h1M22 39.5h1m26 0h2m14 0h1M8 40.5h1m3 0h2m35 0h1M13 41.5h1M17 42.5h1m56 0h1m12 0h1m25 0h1M49 43.5h1m62 0h1M16 44.5h1m43 0h1M29 45.5h1m12 0h1m12 0h1m53 0h1M33 46.5h1m31 0h1m9 0h1m41 0h1M86 47.5h1M56 48.5h1M11 50.5h1m16 0h1m25 0h1m44 0h1m21 0h1M22 51.5h1m47 0h1m6 0h1m20 0h1M109 52.5h2M86 53.5h1m4 0h1m29 0h1M46 54.5h1m9 0h1M6 55.5h1m22 0h1m16 0h1M58 56.5h1m37 0h1M13 57.5h1m17 0h1M4 58.5h1m82 0h1M8 59.5h1m68 0h1m3 0h1m43 0h1M76 60.5h1m20 0h1m19 0h1M36 61.5h1M2 62.5h1m39 0h1m27 0h1m20 0h1M1 63.5h1m13 0h1m31 0h1m35 0h1M27 64.5h1m41 0h1M5 65.5h1M25 66.5h1m1 0h1m7 0h1m15 0h1m27 0h1m30 0h1M33 67.5h1m6 0h1m20 0h1m25 0h1m35 0h1M26 68.5h1m35 0h1m6 0h1m57 0h1M11 69.5h1m37 0h1M13 70.5h1m47 0h1m8 0h1m5 0h1m32 0h1M67 71.5h1M30 73.5h1m39 0h1m3 0h1m13 0h1M29 74.5h1m26 0h1M26 75.5h1m5 0h1m9 0h1m14 0h1M21 76.5h1m7 0h1m40 0h1m21 0h1m9 0h1M33 77.5h1m14 0h1m12 0h1m26 0h1M31 78.5h1m45 0h1m49 0h1M122 79.5h1M40 80.5h1M2 81.5h1m3 0h1m13 0h1m10 0h1m52 0h1m32 0h1M26 82.5h1m35 0h1M52 83.5h1m25 0h1m26 0h1m3 0h1m2 0h1m11 0h1M43 84.5h1M40 85.5h1m25 0h1m41 0h1m8 0h1M25 86.5h1m44 0h1M55 87.5h1m29 0h1M5 88.5h1m5 0h1m16 0h1m8 0h1m14 0h1m20 0h1m39 0h1m12 0h1M45 89.5h1m26 0h1m38 0h1M56 90.5h1m37 0h1m31 0h1M35 91.5h1m22 0h1M126 92.5h1M39 93.5h1M28 94.5h1m67 0h1m6 0h1m10 0h1M48 95.5h1m56 0h1M23 96.5h1M22 97.5h1m61 0h1m5 0h1m26 0h1M1 98.5h1m24 0h1m35 0h2M12 99.5h1m35 0h1M16 100.5h1m19 0h1m26 0h1m28 0h1m17 0h1M46 101.5h1m56 0h1M93 102.5h1M85 103.5h1m3 0h1m8 0h1M92 104.5h1m23 0h1m1 0h1M67 105.5h1M28 106.5h1m24 0h1m4 0h1M70 107.5h1m13 0h1M4 109.5h1m26 0h1m7 0h1m16 0h1m18 0h1m8 0h1M22 110.5h1m1 0h1m46 0h1m3 0h1m27 0h1M45 111.5h1m64 0h1M20 112.5h1m25 0h1m36 0h1M36 113.5h1m2 0h1m13 0h2m26 0h1m17 0h1m3 0h1m19 0h1M13 114.5h1m35 0h1m17 0h1m9 0h1m7 0h1m18 0h1M72 115.5h1m18 0h1m13 0h1M5 116.5h1m5 0h1m56 0h1m9 0h1m11 0h1M52 118.5h1m6 0h1m37 0h1M16 119.5h1m23 0h1m3 0h1m35 0h1M17 120.5h1m75 0h1m10 0h1M55 121.5h1M21 122.5h1M58 123.5h1M31 124.5h1m20 0h1M1 125.5h1m35 0h1m37 0h1M88 126.5h1M55 127.5h1m51 0h1m6 0h1m10 0h1"/>
<path stroke="#ffff8f" stroke-width="1" fill="none" d="M32 1.5h1M4 3.5h1M50 4.5h1m55 0h1M75 5.5h1m45 0h1M81 6.5h1m36 0h1M41 7.5h1M8 9.5h1m112 0h1M17 10.5h1m90 0h1m9 0h1M49 12.5h1M13 13.5h1m93 0h1M74 14.5h1M96 15.5h1M11 16.5h1M126 19.5h1M44 21.5h1M89 22.5h1M54 23.5h1M116 24.5h1M14 25.5h1M33 26.5h1M29 27.5h1M11 28.5h1M64 30.5h1M58 33.5h1M68 35.5h1m38 0h1M79 36.5h1M78 39.5h1m45 0h1M1 40.5h1m75 0h1M100 42.5h1M54 43.5h1m67 0h1M47 45.5h1m16 0h1M57 46.5h1M81 47.5h1m35 0h1M115 48.5h1M17 49.5h1M17 50.5h1M29 51.5h1M16 53.5h1M81 55.5h1M49 56.5h1m77 0h1M73 57.5h1M64 58.5h1m18 0h1m28 0h1M61 63.5h1M105 66.5h1M101 69.5h1M32 71.5h1m6 0h1M103 74.5h1m9 0h1M113 77.5h1M68 78.5h1M13 79.5h1M60 80.5h1M119 82.5h1M37 83.5h1M86 84.5h1M44 85.5h1M34 86.5h1m62 0h1M11 90.5h1M68 92.5h1M16 94.5h1m13 0h1m8 0h1m2 0h1M57 96.5h1M60 97.5h1M48 98.5h1M49 99.5h1m9 0h1M88 101.5h1M13 102.5h1M57 103.5h1m32 0h1M23 104.5h1M77 106.5h1M105 107.5h1M60 108.5h1M66 112.5h1M83 114.5h1M6 116.5h1M127 117.5h1M26 119.5h1m100 0h1M11 120.5h1m106 0h1m5 0h1M90 121.5h1M0 122.5h1m5 0h1m12 0h1m2 0h1m88 0h1M61 123.5h1m42 0h1m6 0h1M18 124.5h1M7 125.5h1m38 0h1m73 0h1M102 127.5h1"/>
<path stroke="#ffffd0" stroke-width="1" fill="none" d="M23 2.5h1m103 0h1M43 3.5h1M20 5.5h1M41 6.5h1M30 19.5h1M37 24.5h1M60 30.5h1M97 49.5h1M105 51.5h1M106 71.5h1M69 78.5h1M41 81.5h1M41 90.5h1M89 97.5h1M15 103.5h1M22 107.5h1M80 115.5h1M34 116.5h1M62 121.5h1"/>
<path stroke="#ffffff" stroke-width="1" fill="none" d="M55 35.5h1M75 51.5h1M97 54.5h1M22 65.5h1M92 66.5h1M22 70.5h1M110 86.5h1M29 118.5h1"/>
<path stroke="#ffffff" stroke-width="1" fill="none" d="M78 33.5h1"/>
</pattern>
<pattern id="nzB" patternUnits="userSpaceOnUse" x="311" y="113" width="117" height="117">
<path stroke="#0b0000" stroke-width="1" fill="none" d="M45 66.5h1M48 107.5h1"/>
<path stroke="#2a0000" stroke-width="1" fill="none" d="M30 28.5h1M2 30.5h1M11 73.5h1M37 83.5h1M53 112.5h1"/>
<path stroke="#560000" stroke-width="1" fill="none" d="M25 3.5h1M76 9.5h1M13 12.5h1M32 13.5h1M88 18.5h1M9 23.5h1M100 27.5h1M87 29.5h1M85 36.5h1M45 39.5h1M54 43.5h1M100 44.5h1M54 45.5h1M81 58.5h1m2 0h1M59 72.5h1M74 73.5h1M79 78.5h1M14 80.5h1M28 86.5h1M34 87.5h1m59 0h1m20 0h1M59 92.5h1M115 98.5h1M58 103.5h1M97 104.5h1M65 107.5h1M77 110.5h1"/>
<path stroke="#810000" stroke-width="1" fill="none" d="M86 0.5h1m10 0h1M14 1.5h1m84 0h1m12 0h1M9 2.5h1m10 0h1M21 3.5h1m35 0h1M42 5.5h1m41 0h1m9 0h1M17 6.5h1M71 7.5h1M13 9.5h1m12 0h1m11 0h1m73 0h1M30 10.5h1M94 11.5h1m21 0h1M39 13.5h1M65 14.5h1M3 15.5h2m16 0h1m77 0h1M24 16.5h1m9 0h1m12 0h1M25 17.5h1m5 0h1m6 0h1m38 0h1m29 0h1M60 18.5h1M3 19.5h1m42 0h2M55 20.5h1m21 0h1m8 0h1M15 22.5h1m5 0h1m23 0h1M115 26.5h1M42 27.5h1m19 0h1M70 28.5h1m20 0h1M28 29.5h1m44 0h1m5 0h1M4 30.5h1M37 31.5h1m27 0h2M15 32.5h1m9 0h1m33 0h1M34 33.5h1M1 34.5h1m111 0h1M110 37.5h1M99 38.5h1m5 0h2M35 41.5h1m20 0h1M109 42.5h1M5 43.5h1M65 45.5h1M5 46.5h1m57 0h1m5 0h1M7 48.5h1m11 0h1M74 50.5h1m32 0h1M14 51.5h1M43 52.5h1m6 0h1m8 0h1M39 54.5h1M55 56.5h1M16 57.5h1M23 58.5h1m3 0h1m82 0h1M107 59.5h1M54 60.5h1m37 0h1m10 0h1M2 62.5h1m64 0h1m10 0h1M50 63.5h1M63 65.5h1M35 66.5h1M40 67.5h1m16 0h2m47 0h1M25 68.5h1m27 0h1m12 0h1M105 69.5h1M53 70.5h1m19 0h1M6 71.5h1m6 0h1m101 0h1M34 72.5h1m76 0h1M73 73.5h1M35 74.5h1M7 75.5h1M27 77.5h1M43 79.5h2M9 80.5h1m87 0h1M7 81.5h1M28 82.5h1m52 0h1M102 83.5h1M35 84.5h1m66 0h1M77 85.5h1M20 86.5h1m48 0h1m36 0h1M12 87.5h1M99 88.5h2M0 91.5h1m12 0h1M70 92.5h1M37 94.5h1M35 96.5h1M14 97.5h1m14 0h1M101 99.5h1M80 100.5h1m11 0h1M89 101.5h1m5 0h1m8 0h1m9 0h1M32 102.5h1M88 103.5h1M44 104.5h1m41 0h1M71 105.5h1M22 110.5h1M67 115.5h1m29 0h1M87 116.5h1"/>
<path stroke="#ac0000" stroke-width="1" fill="none" d="M8 0.5h1m11 0h1m2 0h1m22 0h1m4 0h1m20 0h1m25 0h1m13 0h1M47 1.5h1M64 2.5h1M44 3.5h1m1 0h1m39 0h1M37 4.5h1m51 0h1m9 0h1M13 5.5h1m13 0h1m4 0h1m20 0h1m5 0h1m10 0h1M4 6.5h1m80 0h1M48 7.5h1M13 8.5h1m17 0h1m15 0h1m10 0h1m20 0h1m20 0h1m10 0h1M69 9.5h1m1 0h1m33 0h1M26 10.5h1m17 0h1m10 0h1m44 0h1M30 11.5h1m2 0h1m13 0h1m12 0h1m12 0h1m1 0h1m10 0h1m17 0h2M4 12.5h1m36 0h1M23 14.5h1m36 0h1m8 0h1m32 0h1M49 16.5h1m16 0h1M16 17.5h1m41 0h1m21 0h1m34 0h1M8 18.5h1m7 0h1M14 19.5h1m10 0h1M20 20.5h1m21 0h1m9 0h1m3 0h1M2 21.5h1m47 0h1m23 0h1m13 0h1m17 0h1M26 22.5h1m9 0h1m2 0h1m67 0h1M106 23.5h1M41 24.5h1M24 26.5h1m33 0h1m2 0h1m10 0h1M89 27.5h1M17 28.5h1m53 0h1m11 0h1m25 0h1M29 29.5h1m10 0h1m43 0h1m1 0h1m15 0h1M6 30.5h1m80 0h1m13 0h1M0 31.5h1m4 0h1m82 0h1M9 32.5h1m28 0h1M16 33.5h1m5 0h1m31 0h1m40 0h1m8 0h2m5 0h1M28 34.5h1m56 0h1m9 0h1m18 0h1M5 35.5h1m28 0h1m3 0h1m3 0h1m49 0h1m4 0h1M3 36.5h1m3 0h1m13 0h1m1 0h1m64 0h1M58 37.5h1M8 38.5h1m51 0h1m1 0h1m7 0h1m4 0h1M39 39.5h1m2 0h1m9 0h1m61 0h1M20 40.5h1m33 0h1M12 42.5h1m28 0h1m35 0h1M27 43.5h1m74 0h1m5 0h1M17 44.5h1m3 0h1m26 0h1m3 0h2m9 0h1m10 0h1m23 0h1M31 45.5h1m2 0h1M50 46.5h1m52 0h1M4 47.5h1m62 0h1m22 0h1M5 48.5h1m44 0h1m24 0h1M13 49.5h1m1 0h1m28 0h1m10 0h1m39 0h1M1 50.5h1m10 0h1m9 0h1m6 0h1m53 0h1M54 51.5h1m55 0h2M7 52.5h1m5 0h1m20 0h1m21 0h1m36 0h1M8 53.5h1m5 0h1m30 0h1M13 54.5h2m10 0h1m3 0h1m5 0h1m24 0h1m27 0h1M31 55.5h1m1 0h1m7 0h1m7 0h1m31 0h1M39 56.5h1m4 0h1m4 0h1m7 0h1M98 57.5h1m6 0h1M35 58.5h1m5 0h1m12 0h1M12 59.5h1M15 60.5h1m19 0h1M13 61.5h1m6 0h1m3 0h1m3 0h1m29 0h1m18 0h1M21 62.5h1m29 0h1m5 0h1M32 63.5h1m12 0h1m51 0h1m14 0h1M32 64.5h1m70 0h1M94 65.5h1M60 66.5h1m18 0h1m3 0h1m18 0h1m3 0h1M9 67.5h1m69 0h1m20 0h1M4 68.5h1m67 0h1M13 69.5h1m61 0h1m1 0h1m21 0h1M7 70.5h1m33 0h1m32 0h1m10 0h1m15 0h1M41 71.5h1m50 0h1m10 0h1M3 72.5h1m47 0h1m2 0h1m34 0h1m16 0h1M8 73.5h1m8 0h1m31 0h1m14 0h1M65 74.5h1m1 0h1M62 75.5h1m44 0h1m4 0h1M21 76.5h1m5 0h1m31 0h1m21 0h1m7 0h1m1 0h1M16 77.5h1m48 0h1m26 0h1m20 0h1M86 78.5h1m7 0h1M1 79.5h1M17 80.5h1m53 0h1m37 0h1M20 81.5h1m57 0h1M20 82.5h1m12 0h1m35 0h1M25 83.5h1m42 0h1m10 0h1m17 0h1M83 84.5h1m14 0h1m4 0h1M40 86.5h1m42 0h1m32 0h1M50 87.5h1m20 0h1m3 0h1m16 0h1m18 0h1M31 88.5h1m29 0h1m14 0h1m15 0h1m17 0h1M36 89.5h1m7 0h1m50 0h1M66 90.5h1M19 91.5h1m22 0h1m11 0h1m59 0h1M26 92.5h1m1 0h1m10 0h1m29 0h1M33 93.5h1m11 0h1m9 0h1M0 94.5h1m81 0h1m19 0h1M46 95.5h1m45 0h2M18 96.5h1m70 0h1M21 97.5h1M13 98.5h1M56 99.5h1m57 0h1M14 100.5h1m11 0h1m14 0h1m24 0h1m10 0h1m21 0h1M29 101.5h1m13 0h1m26 0h1m2 0h1m17 0h1M50 102.5h1m13 0h1m48 0h1M2 103.5h1m7 0h1m7 0h1m32 0h1m35 0h1M37 105.5h1m2 0h1m27 0h1m20 0h1m18 0h1M21 106.5h1m11 0h1m13 0h1m41 0h1M32 107.5h1m12 0h1m16 0h1m4 0h1M1 108.5h1m16 0h1m50 0h1M6 109.5h1m1 0h1m20 0h1m59 0h1M70 110.5h1m4 0h1m4 0h1M33 111.5h1m4 0h1m6 0h1m2 0h1m20 0h1m18 0h1M16 112.5h1m10 0h1m40 0h1m28 0h1M20 113.5h1m46 0h1m6 0h1m14 0h1M3 114.5h1m47 0h1m26 0h1M39 115.5h1m15 0h1m2 0h1m23 0h1m12 0h1m4 0h1M35 116.5h1m17 0h1m25 0h1m24 0h1"/>
<path stroke="#d70000" stroke-width="1" fill="none" d="M2 0.5h2m10 0h2m1 0h1m3 0h1m2 0h1m27 0h1m5 0h1m7 0h1m3 0h1m11 0h1m4 0h1m2 0h1m14 0h1M13 1.5h1m8 0h1m13 0h1m5 0h1m11 0h1m7 0h1m9 0h1m5 0h1m13 0h1m15 0h2m4 0h1M2 2.5h1m29 0h1m2 0h1m41 0h1m5 0h1m1 0h1m8 0h1m4 0h1m2 0h2m12 0h1M16 3.5h1m3 0h1m14 0h1m13 0h1m11 0h1m10 0h1m3 0h1m17 0h1m11 0h2M12 4.5h1m11 0h1m23 0h1m16 0h1m16 0h1M6 5.5h1m5 0h1m22 0h1m4 0h1m17 0h1m7 0h1m13 0h1m1 0h1m5 0h1M8 6.5h2m4 0h1m36 0h1m27 0h1m4 0h1m5 0h1m5 0h1m2 0h1m1 0h1m7 0h1m4 0h1M28 7.5h1m7 0h1m4 0h1m1 0h1m33 0h1m3 0h1m6 0h1m5 0h1m13 0h1m7 0h1M20 8.5h1m2 0h1m3 0h1m9 0h1m21 0h1m14 0h1m32 0h1M2 9.5h1m12 0h1m28 0h1m41 0h1m3 0h1m15 0h1m2 0h1M0 10.5h1m3 0h1m47 0h1m49 0h1m2 0h1M12 12.5h1m6 0h1m3 0h1m1 0h2m28 0h1m17 0h1m14 0h1m3 0h1M15 13.5h1m8 0h1m15 0h1m3 0h1m1 0h1m5 0h1m13 0h1m4 0h1m4 0h1m11 0h1m7 0h2m11 0h1M16 14.5h1m45 0h1m10 0h1m19 0h1m9 0h1M12 15.5h1m2 0h1m19 0h1m16 0h1m19 0h1m7 0h1m12 0h1m9 0h1M1 16.5h1m27 0h1m27 0h1m5 0h1m1 0h1m2 0h1m12 0h1m3 0h1m26 0h1M5 17.5h1m2 0h1m33 0h1m30 0h1m16 0h1m7 0h1M59 18.5h1m13 0h1m10 0h1m24 0h1M4 19.5h1m7 0h1m28 0h1m12 0h1m1 0h1m17 0h1m20 0h1m17 0h1M11 20.5h1m45 0h1m1 0h2m4 0h1m14 0h1m2 0h1m10 0h1M19 21.5h1m6 0h1m10 0h1m6 0h1m40 0h1M23 22.5h1m3 0h1m12 0h1m2 0h2m12 0h1m4 0h1m24 0h1m21 0h1m2 0h1M0 23.5h1m21 0h1m4 0h1m1 0h1m11 0h1m2 0h1m10 0h2m21 0h1m25 0h1m4 0h1m6 0h1M23 24.5h1m10 0h1m7 0h1m15 0h1m18 0h1m17 0h1m18 0h1M2 25.5h1m22 0h1m3 0h1m1 0h1m2 0h1m10 0h1m23 0h1m9 0h1m11 0h1m1 0h1m9 0h1m8 0h1M19 26.5h1m9 0h1m1 0h2m12 0h1m9 0h1m47 0h1M12 27.5h1m3 0h1m9 0h1m23 0h1m17 0h1m10 0h2m5 0h1m27 0h1M2 28.5h1m5 0h1m4 0h1m6 0h1m4 0h1m8 0h1m6 0h1m10 0h1m4 0h1m9 0h1m18 0h1m7 0h3M25 29.5h1m4 0h1m5 0h1m26 0h2m6 0h1m4 0h1m8 0h1m9 0h1m12 0h1M33 30.5h1m60 0h1m1 0h1m15 0h1M15 31.5h3m1 0h1m1 0h1m16 0h1m6 0h1m17 0h1m25 0h1m2 0h1m10 0h2M35 32.5h1m17 0h1m1 0h1m17 0h1m16 0h1m23 0h1M2 33.5h1m8 0h1m9 0h1m2 0h1m15 0h1m6 0h1m3 0h2m19 0h1m23 0h1M56 34.5h1m5 0h1m8 0h1m7 0h1m4 0h1m26 0h1M1 35.5h2m5 0h1m3 0h1m4 0h1m15 0h1m26 0h1m20 0h1m2 0h1m8 0h1m1 0h1m16 0h1m3 0h1M13 36.5h1m16 0h1m3 0h1m12 0h1m24 0h1m1 0h1m32 0h1M37 37.5h2m4 0h1m30 0h1m10 0h1m20 0h1m5 0h1M24 38.5h1m14 0h1m11 0h1m25 0h2m13 0h1m7 0h1M2 39.5h1m20 0h1m39 0h2m39 0h1m2 0h2m3 0h1M32 40.5h1m27 0h1m4 0h2m3 0h1m1 0h1m32 0h1M2 41.5h1m6 0h1m1 0h1m5 0h1m1 0h1m38 0h1m4 0h1m7 0h2m7 0h1m10 0h1m7 0h1m14 0h2M0 42.5h1m3 0h1m18 0h1m8 0h1m2 0h1m4 0h1m45 0h1M1 43.5h1m47 0h1m7 0h1m6 0h1m19 0h1m16 0h1m2 0h1m1 0h1m6 0h1M3 44.5h1m5 0h1m15 0h1m6 0h1m4 0h1m4 0h1m25 0h1m25 0h1m16 0h1M4 45.5h1m5 0h1m1 0h1m3 0h1m11 0h2m2 0h1m4 0h1m4 0h1m64 0h1M17 46.5h1m6 0h1m5 0h2m3 0h1m35 0h1m2 0h2m1 0h1m6 0h1m9 0h1m10 0h1M1 47.5h1m4 0h2m4 0h1m67 0h1m1 0h2m17 0h1m11 0h1M1 48.5h1m14 0h1m18 0h1m21 0h1m2 0h1m3 0h1m4 0h1m22 0h2m9 0h1m4 0h1m3 0h1m1 0h1M8 49.5h1m50 0h1m4 0h1m14 0h1m20 0h1M14 50.5h1m23 0h1m1 0h1m4 0h1m6 0h1m9 0h1m33 0h1M27 51.5h1m3 0h1m3 0h1m9 0h1m14 0h1m21 0h1m11 0h1M6 52.5h1m4 0h1m11 0h1m13 0h1m6 0h1m7 0h1m20 0h1m15 0h1m10 0h1m9 0h1M9 53.5h1m8 0h1m20 0h1m65 0h1M6 54.5h1m4 0h1m7 0h1m51 0h1m1 0h1m23 0h1M14 55.5h1m63 0h1m10 0h1m1 0h1m6 0h1m3 0h2M2 56.5h3m4 0h2m17 0h1m22 0h1m18 0h1m23 0h1m11 0h1m9 0h1M62 57.5h1m7 0h1m17 0h1m10 0h2m13 0h1M7 58.5h1m3 0h2m23 0h1m2 0h1m12 0h1m12 0h1m17 0h1m8 0h1m18 0h1M8 59.5h1m33 0h1m5 0h1m11 0h1m6 0h2m28 0h1m5 0h1M1 60.5h1m9 0h1m54 0h1m4 0h1m2 0h1m14 0h1m3 0h1M2 61.5h1m15 0h1m29 0h1m4 0h1m16 0h1m42 0h1M13 62.5h1m10 0h1m14 0h1m10 0h1M19 63.5h1m7 0h1m13 0h1m10 0h1m20 0h1m6 0h1m3 0h1m3 0h1m2 0h1M16 64.5h1m5 0h1m22 0h1m2 0h2m23 0h1m7 0h1m11 0h1M43 65.5h1m22 0h2M19 66.5h1m8 0h1m1 0h1m18 0h1m6 0h1m10 0h1m3 0h1m25 0h2m4 0h1m4 0h1M4 67.5h1m5 0h2m3 0h1m2 0h1m22 0h1m14 0h1m2 0h1m2 0h1m23 0h1M33 68.5h1m43 0h1m16 0h1m14 0h1M5 69.5h1m18 0h1m13 0h1m10 0h1m33 0h1m29 0h1M16 70.5h1m4 0h2m8 0h1m4 0h1m6 0h1m2 0h1m5 0h1m7 0h1m7 0h1m28 0h1m15 0h1M14 71.5h1m15 0h1m4 0h1m15 0h1m8 0h1m18 0h1m1 0h1m3 0h1m21 0h1M12 72.5h1m12 0h2m6 0h1m30 0h1m1 0h1m13 0h1m7 0h1m3 0h2M25 73.5h1m1 0h3m8 0h1m14 0h2m30 0h1m7 0h1m16 0h1M8 74.5h2m4 0h1m5 0h2m9 0h2m7 0h1m1 0h1m30 0h1m4 0h1m2 0h1m26 0h1m5 0h2M19 75.5h1m5 0h1m11 0h1m46 0h2m4 0h1m1 0h1m8 0h1M11 76.5h1m1 0h1m12 0h1m35 0h1m25 0h1m14 0h1M21 77.5h1m4 0h1m20 0h1m9 0h1m11 0h1m10 0h1m7 0h1m14 0h1M20 78.5h1m8 0h1m19 0h1m8 0h1m9 0h1m14 0h1m20 0h1m4 0h1M4 79.5h1m70 0h1m3 0h1m8 0h1m11 0h1m4 0h1m3 0h1M12 80.5h1m13 0h1m30 0h1m7 0h1m24 0h1m14 0h1m2 0h1M31 81.5h1m11 0h1m7 0h2m23 0h1m26 0h1m1 0h1M36 82.5h1m5 0h1m12 0h1m30 0h1m3 0h1m3 0h1m8 0h1m10 0h1M5 83.5h2m17 0h1m8 0h1m24 0h1m16 0h1M4 84.5h1m1 0h2m19 0h2m4 0h1m33 0h1m5 0h1m25 0h1M2 85.5h1m10 0h1m21 0h1m57 0h1m16 0h2M2 86.5h1m28 0h1m1 0h1m4 0h1m8 0h1m11 0h1m20 0h1m3 0h1M24 87.5h1m1 0h1m2 0h1m11 0h1m7 0h1m15 0h1m10 0h1m2 0h1M15 88.5h1m1 0h1m10 0h1m16 0h1m17 0h2m4 0h1m21 0h1m19 0h1m2 0h1M12 89.5h2m6 0h1m26 0h1m18 0h1m22 0h1m1 0h1m19 0h1M0 90.5h1m39 0h1m4 0h2m30 0h1m13 0h1m3 0h2m18 0h1M15 91.5h1m12 0h2m26 0h1m16 0h1m3 0h1m6 0h1m6 0h1m9 0h1M4 92.5h1m25 0h1m20 0h1m5 0h1m19 0h1m1 0h1M3 93.5h1m21 0h1m6 0h1m4 0h1m10 0h1m5 0h1m17 0h1m6 0h1m26 0h1M39 94.5h1m3 0h2m14 0h1m21 0h1m1 0h1m8 0h1m12 0h1m2 0h1M20 95.5h1m15 0h1m6 0h1m7 0h1m29 0h1m18 0h1m9 0h1m1 0h1M6 96.5h1m7 0h1m8 0h1m17 0h1m14 0h1m7 0h2m8 0h1m6 0h1m30 0h1m1 0h1m1 0h1M34 97.5h1m7 0h1m7 0h1m1 0h1m17 0h1m7 0h1m1 0h1m4 0h1m2 0h1m3 0h1m11 0h1m5 0h1m4 0h2M24 98.5h1m6 0h1m1 0h1m16 0h1m16 0h1m20 0h1m14 0h1m3 0h1M0 99.5h1m20 0h1m3 0h1m26 0h1m4 0h1m29 0h1m1 0h1m23 0h1M42 100.5h1m8 0h1m13 0h1m7 0h1m23 0h1m13 0h1M10 101.5h1m1 0h1m2 0h1m31 0h1m19 0h1m12 0h1m3 0h1m7 0h1M7 102.5h1m16 0h1m1 0h1m20 0h1m18 0h1m23 0h1m2 0h2m21 0h1M3 103.5h1m7 0h1m1 0h1m35 0h1m40 0h1M12 104.5h1m12 0h1m55 0h1m7 0h1m4 0h1m13 0h1M41 105.5h1m1 0h1m15 0h2m1 0h1m10 0h2M52 106.5h1m16 0h1m15 0h1m9 0h1m6 0h1m5 0h1m6 0h1M52 107.5h1m30 0h1m6 0h1m21 0h1M6 108.5h2m2 0h1m10 0h2m8 0h1m3 0h1m14 0h1m1 0h1m9 0h1m23 0h1m19 0h1m8 0h1M15 109.5h1m2 0h1m25 0h1m2 0h1m3 0h1m2 0h1m4 0h1m12 0h1m3 0h1m3 0h1m16 0h1m1 0h1m8 0h1M18 110.5h1m18 0h1m17 0h1m2 0h3m3 0h1m24 0h1m2 0h1m7 0h1m14 0h2M18 111.5h1m3 0h1m3 0h1m8 0h1m3 0h1m37 0h1m12 0h1m4 0h1m2 0h1m13 0h1M1 112.5h1m22 0h1m12 0h1m5 0h1m8 0h1m1 0h1m6 0h1m43 0h3m1 0h1m5 0h1M8 113.5h1m7 0h1m2 0h1m1 0h1m4 0h2m15 0h1m20 0h1m5 0h1m5 0h1m13 0h1m3 0h2M1 114.5h1m24 0h2m20 0h1m6 0h1m1 0h1m33 0h1m2 0h1M27 115.5h1m23 0h2m8 0h1m18 0h1m2 0h1M4 116.5h1m4 0h1m29 0h1m25 0h1m3 0h1m10 0h1m5 0h1m6 0h1m4 0h1m14 0h1"/>
<path stroke="#ff0400" stroke-width="1" fill="none" d="M0 0.5h1m9 0h1m7 0h1m7 0h1m15 0h2m5 0h1m10 0h1m6 0h1m6 0h1m3 0h1m6 0h1m2 0h1m7 0h1m5 0h1m8 0h1m2 0h2M4 1.5h1m7 0h1m5 0h2m12 0h1m4 0h1m37 0h1m1 0h1m1 0h1m26 0h1m3 0h1M10 2.5h2m10 0h1m3 0h1m4 0h1m10 0h1m11 0h1m8 0h1m5 0h1m3 0h1m4 0h1m7 0h1m2 0h1m15 0h1m7 0h1M2 3.5h2m1 0h1m6 0h1m9 0h1m7 0h1m6 0h1m2 0h2m5 0h1m4 0h1m6 0h1m6 0h1m8 0h1m5 0h1m1 0h1m7 0h1m6 0h1M2 4.5h1m5 0h2m8 0h1m3 0h1m3 0h1m11 0h1m3 0h2m19 0h1m8 0h1m18 0h2m2 0h1m9 0h1M8 5.5h1m6 0h3m10 0h1m8 0h1m17 0h1m33 0h1m19 0h1m1 0h1M24 6.5h1m9 0h1m1 0h1m5 0h1m1 0h1m2 0h1m5 0h1m26 0h1m10 0h2m4 0h2m13 0h1M5 7.5h1m6 0h2m12 0h1m18 0h1m4 0h1m12 0h1m5 0h1m13 0h1m2 0h1m2 0h1m1 0h2m6 0h1m1 0h1m13 0h1M16 8.5h1m4 0h1m4 0h1m1 0h2m12 0h1m1 0h1m4 0h1m5 0h1m10 0h1m6 0h1m7 0h1m8 0h1m6 0h2M1 9.5h1m8 0h1m5 0h1m15 0h1m6 0h1m3 0h1m8 0h1m5 0h1m6 0h1m9 0h1m9 0h1m5 0h1m7 0h1m3 0h1m3 0h1m2 0h1m3 0h1M2 10.5h1m17 0h1m3 0h1m2 0h1m1 0h1m11 0h1m3 0h1m1 0h1m2 0h1m10 0h1m5 0h1m4 0h1m10 0h1m10 0h1m9 0h1m6 0h1M14 11.5h1m1 0h1m2 0h1m5 0h1m2 0h1m9 0h2m5 0h1m11 0h1m25 0h1m15 0h1m1 0h1m5 0h1m1 0h1M11 12.5h1m3 0h1m6 0h1m20 0h1m6 0h1m7 0h1m1 0h3m1 0h1m17 0h1m27 0h1M3 13.5h1m1 0h1m4 0h1m2 0h1m9 0h1m5 0h1m6 0h1m1 0h1m12 0h1m2 0h1m12 0h1m1 0h1m15 0h1m5 0h1m8 0h1m3 0h1m5 0h2M5 14.5h1m9 0h1m1 0h1m1 0h1m12 0h1m6 0h1m4 0h1m6 0h1m29 0h1m2 0h1m7 0h1m7 0h1m8 0h1m3 0h1M1 15.5h1m6 0h1m2 0h1m2 0h1m7 0h1m4 0h1m2 0h1m11 0h1m1 0h1m1 0h1m10 0h1m8 0h1m8 0h1m6 0h1m24 0h1M7 16.5h1m18 0h1m24 0h1m6 0h1m27 0h3m2 0h1m3 0h2m13 0h1m3 0h1M20 17.5h1m11 0h1m3 0h1m4 0h1m11 0h1m2 0h1m6 0h1m3 0h1m6 0h1m28 0h1M1 18.5h1m4 0h1m5 0h1m5 0h1m8 0h2m16 0h1m2 0h2m4 0h1m1 0h1m4 0h1m31 0h1m6 0h1m4 0h1m10 0h1M0 19.5h1m12 0h1m10 0h1m7 0h1m3 0h1m5 0h1m5 0h1m2 0h1m18 0h1m6 0h1m13 0h1m11 0h2m10 0h1M6 20.5h1m1 0h1m3 0h1m4 0h1m1 0h1m4 0h1m9 0h1m15 0h1m10 0h1m2 0h1m13 0h1m5 0h1m11 0h1m4 0h1m2 0h1m7 0h2m2 0h1M1 21.5h1m15 0h1m7 0h1m2 0h1m2 0h1m33 0h1m16 0h2m6 0h2m10 0h1m6 0h2m4 0h1M11 22.5h1m1 0h1m6 0h1m4 0h1m26 0h2m10 0h2m1 0h1m15 0h1m7 0h2m10 0h1m2 0h1m8 0h2M1 23.5h1m5 0h1m2 0h1m8 0h1m18 0h1m1 0h1m1 0h1m2 0h1m11 0h1m8 0h1m2 0h1m4 0h1m16 0h1m6 0h1m15 0h1M10 24.5h1m11 0h1m1 0h2m1 0h1m10 0h1m7 0h2m3 0h1m5 0h1m5 0h1m4 0h1m3 0h1m2 0h1m3 0h1m4 0h1m7 0h1m4 0h1m9 0h1m8 0h1M6 25.5h1m4 0h1m6 0h1m4 0h1m14 0h1m9 0h1m12 0h2m2 0h1m20 0h1m7 0h1m1 0h1m5 0h1m13 0h1M2 26.5h1m3 0h1m8 0h1m4 0h1m12 0h1m17 0h1m12 0h1m2 0h2m14 0h2m8 0h1m6 0h1m7 0h1M3 27.5h1m1 0h1m15 0h1m5 0h1m3 0h2m7 0h1m15 0h1m9 0h1m11 0h1m5 0h2m9 0h2M3 28.5h1m11 0h2m7 0h1m10 0h1m4 0h1m6 0h1m2 0h1m2 0h1m9 0h2m10 0h1m27 0h1M17 29.5h1m9 0h1m7 0h1m9 0h1m1 0h2m8 0h1m2 0h1m11 0h1m23 0h1m2 0h1m6 0h1m3 0h1M3 30.5h1m1 0h1m18 0h1m2 0h1m51 0h1m2 0h1m2 0h1m6 0h1m6 0h1m7 0h1M10 31.5h1m9 0h1m20 0h1m6 0h2m22 0h1m10 0h1m23 0h1m3 0h1m4 0h1M5 32.5h1m2 0h1m1 0h1m19 0h1m19 0h1m5 0h1m6 0h1m8 0h1m8 0h1m10 0h1m4 0h1m4 0h1m5 0h1M8 33.5h1m9 0h1m16 0h1m1 0h1m4 0h1m3 0h1m2 0h1m13 0h1m6 0h1m5 0h1m2 0h1m26 0h1m5 0h1M3 34.5h2m3 0h1m2 0h1m7 0h1m10 0h1m11 0h1m2 0h1m5 0h1m2 0h1m11 0h1m2 0h1m26 0h3m6 0h2m1 0h1M4 35.5h1m11 0h1m2 0h1m1 0h1m3 0h3m8 0h1m31 0h1m19 0h1m5 0h1m4 0h1m7 0h1m2 0h1M0 36.5h1m18 0h1m5 0h1m7 0h1m3 0h1m4 0h1m5 0h1m4 0h2m10 0h4m6 0h1m1 0h1m16 0h3m12 0h1m3 0h1M4 37.5h1m3 0h3m12 0h1m10 0h1m14 0h1m1 0h1m9 0h1m2 0h3m3 0h1m7 0h1m10 0h1m6 0h1m3 0h1M30 38.5h2m8 0h2m4 0h2m8 0h1m4 0h1m26 0h3m17 0h1M6 39.5h1m4 0h1m6 0h2m2 0h1m1 0h1m11 0h1m3 0h1m2 0h1m18 0h1m2 0h1m10 0h1m3 0h2m3 0h1m2 0h1m4 0h1m4 0h1m14 0h1M4 40.5h1m5 0h2m6 0h1m15 0h1m11 0h1m12 0h1m3 0h1m5 0h1m9 0h2m5 0h1m9 0h1m5 0h1m9 0h1M0 41.5h1m20 0h1m3 0h1m10 0h3m1 0h1m2 0h1m10 0h1m18 0h1m1 0h1m3 0h1m1 0h1m1 0h1m2 0h1m1 0h1m5 0h1m3 0h1m9 0h1M2 42.5h1m11 0h1m5 0h2m21 0h1m2 0h1m2 0h1m2 0h1m5 0h1m9 0h1m16 0h1m4 0h1m16 0h1m4 0h1m2 0h1M0 43.5h1m2 0h1m4 0h1m26 0h1m19 0h1m6 0h2m2 0h1m3 0h1m6 0h1m5 0h1m8 0h1m3 0h1m2 0h1m12 0h1M28 44.5h3m8 0h2m5 0h1m18 0h2m12 0h1m9 0h2m6 0h1m14 0h1m2 0h1M3 45.5h1m7 0h1m1 0h1m4 0h1m5 0h1m10 0h1m17 0h1m6 0h1m1 0h3m5 0h1m4 0h1m1 0h2m4 0h1m2 0h1m7 0h1m4 0h1m11 0h1m2 0h1M6 46.5h1m1 0h2m2 0h1m7 0h1m5 0h1m12 0h1m4 0h1m8 0h2m28 0h1m12 0h1m11 0h1m6 0h2M9 47.5h1m1 0h1m13 0h1m18 0h1m5 0h1m9 0h2m2 0h1m22 0h1m1 0h1m2 0h2m11 0h1m5 0h1M0 48.5h1m17 0h1m4 0h1m2 0h1m7 0h1m11 0h1m2 0h1m2 0h1m2 0h1m2 0h1m6 0h2m12 0h1m5 0h1m1 0h1m3 0h1m15 0h1m3 0h1M2 49.5h1m1 0h1m1 0h1m13 0h1m12 0h1m14 0h1m12 0h1m3 0h1m2 0h1m14 0h2m5 0h1m13 0h1m7 0h1M18 50.5h1m7 0h1m8 0h1m5 0h1m12 0h1m15 0h1m4 0h1m1 0h1m16 0h1m19 0h1M1 51.5h1m24 0h1m1 0h1m11 0h1m5 0h1m3 0h1m2 0h1m8 0h1m12 0h1m3 0h1m1 0h1m3 0h1m22 0h1M19 52.5h1m7 0h2m4 0h1m8 0h1m17 0h1m4 0h1m11 0h1m2 0h1m17 0h2m13 0h2M5 53.5h1m21 0h3m1 0h1m1 0h1m4 0h1m1 0h1m29 0h1m1 0h2m4 0h1m2 0h1m7 0h1m5 0h1m4 0h1m6 0h1m7 0h1M4 54.5h1m7 0h1m17 0h1m12 0h1m1 0h1m4 0h2m2 0h1m1 0h1m18 0h2m8 0h1m4 0h2m3 0h1m17 0h1M9 55.5h1m10 0h1m33 0h1m15 0h1m9 0h1m1 0h1m14 0h1m3 0h1m6 0h1m6 0h1M14 56.5h1m8 0h1m5 0h1m4 0h1m1 0h1m29 0h1m13 0h1m2 0h1m4 0h1m1 0h2m4 0h1m2 0h1m9 0h2m4 0h1M18 57.5h1m2 0h1m6 0h2m12 0h2m3 0h1m3 0h2m12 0h1m1 0h1m5 0h2m18 0h1m7 0h2m1 0h1m3 0h1M6 58.5h1m17 0h1m5 0h1m11 0h2m20 0h1m17 0h1m13 0h1m12 0h1m6 0h1M9 59.5h1m6 0h1m3 0h1m25 0h1m11 0h1m4 0h1m19 0h1m7 0h1m22 0h1M6 60.5h1m17 0h2m2 0h1m5 0h1m10 0h1m1 0h1m9 0h1m9 0h1m7 0h1m7 0h1m7 0h1m5 0h1m7 0h2M3 61.5h1m13 0h1m3 0h2m12 0h1m6 0h1m11 0h1m6 0h3m7 0h1m27 0h1m5 0h1m3 0h2m5 0h1M6 62.5h1m1 0h1m6 0h1m13 0h1m11 0h1m7 0h1m3 0h1m5 0h1m6 0h1m28 0h1m3 0h1m14 0h2M1 63.5h2m10 0h2m29 0h1m8 0h1m4 0h1m2 0h1m2 0h2m1 0h1m10 0h1m19 0h1m9 0h2m1 0h1m4 0h1M14 64.5h1m4 0h2m10 0h1m2 0h1m4 0h1m1 0h1m2 0h1m1 0h1m6 0h1m4 0h2m10 0h1m4 0h1m2 0h3m17 0h1m3 0h1m4 0h1m1 0h2M0 65.5h1m6 0h1m1 0h1m15 0h1m12 0h2m11 0h1m2 0h2m1 0h1m4 0h1m9 0h1m4 0h1m2 0h1m6 0h1m25 0h1M17 66.5h1m6 0h1m2 0h1m5 0h1m18 0h1m1 0h1m4 0h1m2 0h2m12 0h1m1 0h1m5 0h1m10 0h1m5 0h1m7 0h3m4 0h1M1 67.5h1m3 0h2m13 0h1m1 0h1m3 0h1m2 0h2m3 0h1m1 0h1m8 0h1m4 0h1m12 0h1m11 0h1m1 0h1m2 0h1m32 0h1m1 0h1M7 68.5h1m10 0h1m1 0h1m10 0h2m13 0h1m17 0h1m15 0h1m7 0h1m7 0h1m1 0h3m3 0h1m6 0h2M2 69.5h1m37 0h1m2 0h1m7 0h2m5 0h1m1 0h1m27 0h1m1 0h1m2 0h1m2 0h1m6 0h1m3 0h1M1 70.5h1m4 0h1m3 0h3m16 0h2m6 0h1m4 0h1m1 0h1m3 0h2m6 0h1m24 0h1m10 0h1m9 0h2m1 0h1m1 0h1m8 0h1M4 71.5h1m12 0h1m5 0h2m2 0h1m1 0h1m1 0h1m8 0h1m23 0h2m4 0h2m1 0h1m6 0h1m14 0h1m4 0h1m3 0h1M2 72.5h1m20 0h1m11 0h1m4 0h1m4 0h1m24 0h1m1 0h1m23 0h2m16 0h1m1 0h1M0 73.5h1m4 0h1m3 0h2m1 0h1m21 0h1m12 0h1m17 0h1m3 0h1m14 0h1m7 0h1m10 0h1m8 0h1M0 74.5h1m5 0h1m19 0h1m3 0h1m2 0h2m1 0h1m17 0h1m1 0h1m1 0h1m13 0h1m9 0h1m23 0h1m2 0h1M1 75.5h1m22 0h1m6 0h1m8 0h2m12 0h1m4 0h1m9 0h1m7 0h1m8 0h1m6 0h1m9 0h1M0 76.5h1m4 0h2m3 0h1m11 0h1m8 0h2m6 0h1m2 0h1m3 0h1m2 0h1m13 0h1m2 0h1m4 0h2m1 0h1m20 0h1m6 0h1m3 0h1m3 0h1m3 0h1M4 77.5h1m1 0h2m16 0h1m8 0h2m19 0h1m3 0h1m9 0h1m3 0h1m3 0h3m2 0h1m3 0h1m12 0h1m2 0h1m10 0h1M16 78.5h1m7 0h1m3 0h1m8 0h1m1 0h1m1 0h1m2 0h1m8 0h2m5 0h1m20 0h1m16 0h1m2 0h1M10 79.5h1m2 0h1m11 0h1m4 0h1m2 0h1m4 0h1m2 0h1m19 0h2m6 0h1m2 0h1m4 0h1m2 0h1m3 0h2m22 0h1m5 0h1M1 80.5h1m14 0h1m2 0h1m1 0h1m6 0h3m1 0h1m15 0h2m3 0h1m2 0h1m3 0h1m1 0h1m1 0h1m3 0h1m14 0h1m5 0h1M2 81.5h1m6 0h1m17 0h1m1 0h2m4 0h1m3 0h1m6 0h1m1 0h1m15 0h1m1 0h1m5 0h1m9 0h1m5 0h2m4 0h1m19 0h1m1 0h1M8 82.5h1m5 0h2m3 0h1m4 0h1m7 0h1m15 0h1m13 0h1m3 0h1m8 0h3m5 0h1m22 0h1m5 0h1M9 83.5h1m4 0h1m11 0h1m4 0h1m7 0h1m5 0h1m19 0h1m5 0h1m12 0h1m24 0h1M29 84.5h2m13 0h2m6 0h1m16 0h1m6 0h1m2 0h1m9 0h1m11 0h1m4 0h1m6 0h1m2 0h1M1 85.5h1m2 0h1m5 0h1m7 0h2m2 0h1m24 0h1m11 0h1m3 0h1m7 0h1m11 0h1m4 0h1m1 0h1m3 0h1m10 0h1m6 0h1M9 86.5h1m5 0h1m20 0h2m10 0h3m10 0h1m5 0h1m20 0h1m7 0h1m14 0h1M7 87.5h1m6 0h1m8 0h1m4 0h1m27 0h1m6 0h1m5 0h1m3 0h1m29 0h1m4 0h1M3 88.5h1m1 0h1m5 0h1m10 0h2m2 0h1m6 0h1m1 0h1m1 0h1m10 0h1m3 0h1m5 0h1m25 0h1m3 0h1m16 0h1m6 0h1m2 0h2M2 89.5h1m2 0h1m5 0h1m9 0h1m16 0h1m28 0h1m6 0h1m5 0h1m16 0h1m4 0h1m1 0h1m4 0h2M3 90.5h1m9 0h2m1 0h1m1 0h1m3 0h1m15 0h2m9 0h1m2 0h1m3 0h1m16 0h1m5 0h1m9 0h1m21 0h1m4 0h1M4 91.5h1m11 0h1m9 0h1m3 0h1m1 0h1m2 0h1m5 0h1m7 0h2m8 0h1m9 0h1m9 0h1m32 0h1M9 92.5h1m19 0h1m14 0h2m3 0h1m10 0h1m7 0h1m15 0h1m1 0h2m23 0h1m1 0h3M42 93.5h1m6 0h1m18 0h1m4 0h1m7 0h1M14 94.5h1m18 0h1m15 0h1m5 0h1m11 0h1m12 0h1m7 0h1m6 0h1m8 0h1m9 0h1m1 0h1M8 95.5h1m1 0h1m2 0h1m24 0h1m1 0h1m3 0h1m12 0h1m5 0h1m13 0h1m6 0h1m2 0h1m9 0h1m4 0h1m1 0h1m2 0h1m3 0h1m3 0h2M0 96.5h1m4 0h1m2 0h1m1 0h1m40 0h1m2 0h1m7 0h2m16 0h1m2 0h2m5 0h1m9 0h1m4 0h2M18 97.5h1m11 0h1m10 0h1m1 0h1m9 0h1m13 0h2m15 0h1m4 0h1m3 0h2m2 0h1m9 0h2m4 0h2M0 98.5h1m28 0h1m4 0h1m4 0h1m2 0h1m3 0h1m5 0h1m9 0h1m2 0h1m3 0h1m5 0h1m1 0h1m4 0h1m28 0h1m4 0h1M4 99.5h1m2 0h1m5 0h2m5 0h1m15 0h1m6 0h1m5 0h1m10 0h1m21 0h1m14 0h1m4 0h2M4 100.5h1m7 0h2m2 0h2m3 0h1m2 0h1m4 0h1m20 0h1m6 0h1m1 0h1m7 0h2m17 0h1m6 0h1m12 0h1m1 0h1M16 101.5h1m10 0h1m14 0h1m5 0h2m2 0h1m4 0h1m4 0h3m9 0h1m4 0h1m13 0h1m4 0h1m8 0h2M21 102.5h1m12 0h1m10 0h1m2 0h2m6 0h3m9 0h1m17 0h1m4 0h1m11 0h1m10 0h2M5 103.5h2m1 0h1m6 0h2m3 0h1m7 0h1m30 0h1m7 0h2m20 0h1m1 0h2m3 0h1m6 0h2m1 0h1M15 104.5h1m7 0h1m3 0h1m1 0h1m4 0h1m3 0h1m8 0h1m6 0h1m5 0h1m3 0h1m3 0h1m3 0h1m2 0h1m3 0h1m20 0h1m1 0h1m1 0h1m2 0h1M9 105.5h1m9 0h1m3 0h3m4 0h2m17 0h1m2 0h1m8 0h1m1 0h1m3 0h1m2 0h1m15 0h1m12 0h1m2 0h1M2 106.5h2m5 0h1m3 0h1m12 0h1m26 0h1m6 0h1m6 0h1m6 0h1m12 0h1m4 0h1m1 0h1m2 0h1m3 0h1m9 0h1M3 107.5h1m8 0h1m1 0h1m7 0h1m8 0h1m4 0h3m3 0h1m3 0h1m8 0h1m3 0h1m16 0h1m14 0h1m8 0h1m9 0h1m3 0h2M0 108.5h1m8 0h1m2 0h2m1 0h1m4 0h1m19 0h1m14 0h2m3 0h2m16 0h1m20 0h1m5 0h1M9 109.5h1m3 0h1m3 0h1m16 0h1m5 0h3m3 0h1m2 0h1m6 0h3m12 0h1m12 0h1m7 0h1m9 0h1m1 0h1M1 110.5h1m5 0h1m3 0h1m1 0h1m6 0h1m28 0h5m7 0h1m3 0h1m2 0h1m16 0h1m8 0h4m7 0h1m8 0h1M30 111.5h1m26 0h2m3 0h1m4 0h1m2 0h1m5 0h1m8 0h1m6 0h1m13 0h1M23 112.5h1m8 0h1m15 0h1m6 0h1m3 0h1m4 0h1m2 0h1m10 0h1m3 0h1m2 0h1m3 0h1m3 0h1m5 0h1m11 0h1M1 113.5h1m9 0h2m17 0h1m6 0h1m1 0h1m4 0h3m5 0h1m8 0h1m38 0h1m3 0h1M0 114.5h1m13 0h1m1 0h2m4 0h1m11 0h1m1 0h2m16 0h1m9 0h1m5 0h1m14 0h1m1 0h2m10 0h1M8 115.5h2m10 0h1m1 0h1m14 0h1m21 0h1m5 0h1m7 0h2m13 0h1m9 0h1m9 0h2m4 0h1M3 116.5h1m12 0h1m1 0h1m2 0h1m1 0h1m5 0h1m2 0h1m9 0h2m5 0h1m4 0h1m12 0h1m20 0h1m11 0h1m2 0h1m1 0h1m5 0h1m4 0h1"/>
<path stroke="#ff2f00" stroke-width="1" fill="none" d="M5 0.5h1m3 0h1m1 0h1m4 0h1m11 0h1m1 0h1m2 0h2m6 0h1m6 0h1m1 0h1m3 0h1m6 0h1m13 0h1m3 0h1m9 0h1m1 0h2m10 0h1M0 1.5h1m2 0h1m6 0h1m9 0h2m11 0h1m5 0h1m4 0h2m3 0h1m2 0h1m2 0h2m6 0h1m3 0h1m1 0h2m2 0h1m9 0h2m3 0h1m7 0h2M1 2.5h1m2 0h1m3 0h1m6 0h1m2 0h1m9 0h2m3 0h1m4 0h1m2 0h1m1 0h1m1 0h1m1 0h1m4 0h1m2 0h2m2 0h1m8 0h1m2 0h2m14 0h1m2 0h1m2 0h1m6 0h1m5 0h1m3 0h1m3 0h1M23 3.5h2m9 0h1m16 0h1m3 0h1m7 0h1m1 0h1m1 0h1m6 0h1m2 0h1m1 0h1m2 0h1m2 0h1m3 0h2m12 0h2M3 4.5h1m7 0h1m8 0h2m1 0h1m4 0h1m3 0h1m12 0h1m6 0h1m5 0h2m1 0h1m8 0h1m2 0h1m1 0h2m2 0h1m6 0h1m1 0h1m5 0h1m2 0h2m11 0h1m1 0h1m1 0h3M0 5.5h1m9 0h1m7 0h1m3 0h1m6 0h1m1 0h1m2 0h1m1 0h1m1 0h2m10 0h1m1 0h1m10 0h1m3 0h2m10 0h1m7 0h1m5 0h1m1 0h4m17 0h1M1 6.5h1m8 0h2m4 0h1m4 0h1m18 0h1m2 0h1m5 0h1m2 0h1m2 0h2m2 0h3m1 0h1m1 0h1m5 0h1m1 0h1m1 0h1m11 0h2m5 0h2m4 0h1m3 0h2m1 0h1m2 0h2m3 0h1M9 7.5h2m5 0h1m1 0h1m1 0h1m13 0h1m11 0h1m2 0h1m6 0h1m5 0h1m3 0h1m1 0h1m3 0h4m31 0h1m4 0h1M8 8.5h2m1 0h1m6 0h1m19 0h1m26 0h1m2 0h1m2 0h2m4 0h1m2 0h1m4 0h1m10 0h1m4 0h2m3 0h1m8 0h1M0 9.5h1m5 0h1m11 0h1m18 0h1m7 0h1m4 0h1m2 0h1m1 0h3m2 0h1m1 0h1m14 0h1m6 0h1m8 0h2m20 0h1M1 10.5h1m3 0h1m2 0h1m4 0h1m7 0h1m13 0h1m6 0h1m23 0h1m1 0h1m4 0h2m9 0h2m3 0h1m1 0h1m3 0h5m6 0h2M2 11.5h1m1 0h1m1 0h1m1 0h1m2 0h1m1 0h1m1 0h1m6 0h3m1 0h1m10 0h1m3 0h1m7 0h1m12 0h2m6 0h3m4 0h1m3 0h1m2 0h1m5 0h1m2 0h1m6 0h1m9 0h1m3 0h1M0 12.5h1m6 0h1m8 0h1m3 0h1m9 0h1m1 0h2m5 0h1m5 0h1m5 0h1m1 0h2m15 0h2m12 0h1m4 0h1m3 0h1m1 0h1m4 0h1m1 0h1m8 0h1m1 0h1M11 13.5h1m7 0h1m2 0h1m2 0h1m1 0h2m18 0h1m9 0h1m14 0h1m1 0h1m2 0h1m2 0h1m2 0h2m5 0h1m1 0h2m1 0h1m3 0h1m1 0h1m11 0h2M2 14.5h1m1 0h1m1 0h4m1 0h1m2 0h1m5 0h1m13 0h1m5 0h1m4 0h1m7 0h2m17 0h1m7 0h1m1 0h2m3 0h2m15 0h1m2 0h2m3 0h1M6 15.5h1m2 0h1m8 0h1m1 0h1m4 0h1m5 0h1m5 0h1m1 0h3m6 0h2m6 0h1m2 0h2m1 0h1m16 0h1m5 0h1m4 0h1m6 0h1m3 0h1m7 0h1m1 0h1m4 0h1M4 16.5h1m6 0h1m4 0h1m10 0h1m10 0h2m3 0h1m2 0h1m3 0h1m1 0h1m1 0h1m1 0h1m4 0h1m5 0h1m1 0h1m4 0h1m2 0h1m11 0h1m4 0h1m2 0h1m3 0h1m1 0h2m2 0h1m3 0h1m1 0h1m1 0h1M0 17.5h1m5 0h1m4 0h1m1 0h1m5 0h1m1 0h1m5 0h1m6 0h1m9 0h2m6 0h1m17 0h1m5 0h1m2 0h1m2 0h1m1 0h1m4 0h1m4 0h1m1 0h2m3 0h1m10 0h2m2 0h1M0 18.5h1m1 0h1m8 0h1m3 0h1m4 0h1m16 0h1m5 0h1m3 0h1m10 0h1m4 0h1m4 0h1m2 0h1m4 0h1m2 0h1m7 0h1m2 0h1m3 0h1m1 0h2m4 0h1m4 0h1m3 0h1m3 0h1M6 19.5h1m10 0h1m1 0h1m8 0h2m5 0h1m1 0h1m15 0h1m7 0h1m6 0h1m7 0h1m5 0h1m4 0h2m3 0h1m4 0h3M1 20.5h1m3 0h1m12 0h1m3 0h1m2 0h1m2 0h1m1 0h1m1 0h1m6 0h1m1 0h1m6 0h1m13 0h2m12 0h1m2 0h1m5 0h1m6 0h1m6 0h1m8 0h1m2 0h1m3 0h1M0 21.5h1m5 0h2m1 0h1m6 0h1m6 0h1m18 0h1m3 0h1m1 0h2m1 0h2m9 0h1m14 0h1m9 0h1m9 0h2m13 0h1M3 22.5h2m2 0h1m2 0h1m18 0h1m4 0h1m11 0h1m16 0h1m4 0h1m1 0h1m1 0h1m1 0h1m3 0h1m3 0h1m2 0h1m3 0h1m8 0h1m3 0h1m2 0h1m7 0h1M4 23.5h1m1 0h1m13 0h1m3 0h1m1 0h1m4 0h1m5 0h1m9 0h2m4 0h1m10 0h1m6 0h1m8 0h2m3 0h2m3 0h1m14 0h1m4 0h4m1 0h1M3 24.5h1m8 0h1m15 0h1m2 0h1m8 0h1m7 0h1m10 0h2m3 0h1m2 0h1m6 0h1m5 0h2m1 0h1m3 0h1m2 0h2m1 0h1m2 0h1m1 0h1m12 0h1M14 25.5h1m17 0h1m2 0h1m3 0h1m4 0h1m2 0h1m1 0h1m5 0h1m2 0h1m8 0h2m3 0h1m4 0h1m11 0h1m2 0h1m17 0h1m2 0h2M0 26.5h2m7 0h1m6 0h1m1 0h1m2 0h1m19 0h1m2 0h1m4 0h2m5 0h1m5 0h1m6 0h1m1 0h1m10 0h1m4 0h3m2 0h1m3 0h1m9 0h1m3 0h1M2 27.5h1m6 0h2m2 0h1m5 0h1m18 0h1m5 0h1m1 0h1m1 0h1m21 0h2m2 0h1m7 0h1m4 0h1m2 0h1m11 0h1m4 0h1m1 0h1m2 0h2M6 28.5h1m2 0h2m7 0h1m2 0h2m13 0h1m14 0h1m6 0h2m12 0h2m3 0h1m1 0h1m1 0h1m5 0h1m1 0h2m6 0h1m1 0h2m1 0h1m1 0h2m4 0h2m2 0h1m1 0h1M5 29.5h2m7 0h1m3 0h1m5 0h1m7 0h1m11 0h1m4 0h2m3 0h1m4 0h1m14 0h1m2 0h1m5 0h1m5 0h2m1 0h1m19 0h1M0 30.5h1m8 0h1m5 0h1m4 0h2m4 0h1m4 0h1m18 0h1m1 0h2m3 0h1m8 0h1m4 0h1m1 0h1m2 0h1m1 0h1m2 0h1m9 0h1m10 0h1m13 0h1M1 31.5h1m1 0h2m6 0h2m14 0h1m1 0h1m1 0h2m6 0h2m1 0h1m1 0h1m10 0h1m3 0h1m1 0h1m17 0h3m8 0h1m8 0h1m2 0h1m7 0h1m4 0h1M1 32.5h1m10 0h3m1 0h5m1 0h1m5 0h2m1 0h1m11 0h1m4 0h1m3 0h1m5 0h1m2 0h1m6 0h1m6 0h2m2 0h1m4 0h1m1 0h1m8 0h2m4 0h1m7 0h2m4 0h2M0 33.5h1m4 0h1m4 0h1m3 0h1m5 0h1m2 0h1m3 0h1m1 0h1m3 0h1m2 0h1m2 0h1m8 0h1m4 0h1m2 0h1m7 0h2m2 0h1m4 0h1m4 0h1m8 0h1m3 0h1m5 0h1m1 0h2m12 0h2m1 0h1M0 34.5h1m16 0h1m2 0h1m2 0h1m7 0h1m21 0h1m3 0h4m11 0h1m3 0h1m16 0h1m6 0h1m2 0h1m5 0h2M0 35.5h1m5 0h1m2 0h1m1 0h1m1 0h1m10 0h1m4 0h2m4 0h1m1 0h1m1 0h1m1 0h1m1 0h2m4 0h1m1 0h1m2 0h2m6 0h1m10 0h3m1 0h1m5 0h1m2 0h1m9 0h1m18 0h1M2 36.5h1m1 0h1m5 0h1m11 0h1m1 0h1m3 0h1m14 0h1m13 0h1m13 0h1m7 0h1m7 0h1m3 0h1m13 0h1m2 0h1M1 37.5h2m9 0h1m14 0h1m11 0h1m1 0h1m4 0h1m8 0h1m6 0h1m9 0h2m1 0h1m21 0h1m17 0h2M0 38.5h1m3 0h3m5 0h1m4 0h2m10 0h1m2 0h1m21 0h1m3 0h2m7 0h1m5 0h1m5 0h2m2 0h2m18 0h1m5 0h1m2 0h2m1 0h2M0 39.5h2m6 0h1m3 0h2m15 0h1m3 0h1m23 0h1m2 0h2m4 0h1m4 0h1m30 0h1m2 0h1M2 40.5h1m3 0h1m12 0h1m9 0h1m6 0h1m2 0h1m3 0h1m11 0h1m17 0h1m9 0h2m2 0h1m3 0h2m2 0h1m1 0h1m2 0h1m5 0h1m6 0h1m1 0h1M6 41.5h1m5 0h1m2 0h1m2 0h1m1 0h1m1 0h1m6 0h1m12 0h1m1 0h1m5 0h1m9 0h2m8 0h1m19 0h1m1 0h1m2 0h1m1 0h1m11 0h1m6 0h1M3 42.5h1m2 0h1m4 0h1m15 0h2m7 0h1m14 0h1m4 0h1m12 0h1m1 0h1m3 0h1m2 0h1m1 0h1m12 0h1m5 0h1m2 0h2m10 0h1M4 43.5h1m1 0h1m6 0h1m5 0h1m1 0h1m2 0h1m4 0h1m1 0h2m5 0h1m1 0h1m7 0h1m3 0h2m5 0h1m1 0h1m3 0h1m5 0h1m1 0h3m6 0h1m8 0h1m3 0h1m2 0h1m1 0h1m13 0h1M13 44.5h2m4 0h1m3 0h1m12 0h1m1 0h1m10 0h1m10 0h1m1 0h1m4 0h1m2 0h2m3 0h1m7 0h1m2 0h1m5 0h1m3 0h1m9 0h2m5 0h1M1 45.5h1m5 0h1m11 0h2m5 0h2m11 0h1m1 0h1m2 0h1m1 0h1m8 0h1m1 0h3m16 0h1m3 0h1m4 0h1m4 0h1m10 0h1m2 0h1m5 0h1M2 46.5h1m8 0h1m11 0h1m18 0h1m3 0h1m2 0h1m5 0h1m10 0h1m9 0h1m2 0h2m10 0h1m5 0h1m3 0h1M16 47.5h1m4 0h1m4 0h1m2 0h1m6 0h1m1 0h1m2 0h1m6 0h1m3 0h1m3 0h1m2 0h1m3 0h1m7 0h1m7 0h1m22 0h1m6 0h1m2 0h1m1 0h2M14 48.5h1m13 0h1m4 0h1m2 0h1m2 0h1m1 0h1m1 0h2m8 0h1m5 0h1m1 0h1m14 0h3m3 0h1m1 0h1m4 0h2m4 0h2m3 0h3m2 0h1m3 0h1M5 49.5h1m8 0h1m2 0h1m1 0h1m2 0h1m1 0h1m5 0h1m12 0h1m7 0h1m2 0h1m5 0h1m2 0h1m2 0h1m8 0h3m10 0h2m2 0h2m2 0h1m2 0h1m2 0h1m7 0h1M8 50.5h1m7 0h1m14 0h1m14 0h3m6 0h1m3 0h3m1 0h1m9 0h1m11 0h1m4 0h1m2 0h1m1 0h1m3 0h1m1 0h1m2 0h1m5 0h1m1 0h1m2 0h2M0 51.5h1m2 0h1m3 0h2m1 0h1m5 0h1m4 0h2m9 0h1m1 0h1m1 0h1m2 0h1m4 0h1m3 0h2m2 0h1m4 0h1m1 0h1m5 0h1m6 0h1m3 0h1m1 0h1m5 0h1m4 0h1m1 0h1m4 0h2m14 0h1M9 52.5h2m10 0h1m2 0h1m20 0h1m3 0h1m1 0h1m6 0h1m7 0h1m7 0h1m8 0h1m4 0h1m8 0h1m10 0h1m2 0h2m2 0h1M1 53.5h1m4 0h1m8 0h1m4 0h2m3 0h1m10 0h2m4 0h1m17 0h1m6 0h1m7 0h1m1 0h1m4 0h1m3 0h1m1 0h1m2 0h2m1 0h1m1 0h1m1 0h1m3 0h1m8 0h1M1 54.5h1m3 0h1m11 0h1m2 0h1m2 0h1m2 0h1m4 0h1m2 0h1m2 0h1m2 0h1m21 0h1m2 0h1m8 0h1m2 0h1m4 0h1m3 0h1m13 0h1m2 0h1m2 0h1m3 0h1M11 55.5h1m3 0h3m7 0h2m1 0h2m4 0h1m20 0h1m5 0h1m1 0h1m1 0h1m2 0h1m2 0h1m14 0h1m1 0h1m11 0h1m4 0h1m10 0h1M8 56.5h1m12 0h2m2 0h1m14 0h1m5 0h2m11 0h1m2 0h1m5 0h2m8 0h1m5 0h1m2 0h1m1 0h1m11 0h1m1 0h1m1 0h1m2 0h1M17 57.5h1m5 0h2m13 0h1m5 0h3m3 0h1m8 0h1m1 0h1m2 0h1m4 0h1m1 0h2m4 0h1m5 0h1m3 0h1m6 0h1m1 0h1m9 0h1m9 0h1M5 58.5h1m3 0h1m3 0h1m4 0h1m9 0h2m3 0h1m3 0h1m9 0h2m2 0h1m8 0h1m5 0h1m7 0h1m1 0h2m1 0h1m6 0h1m7 0h1m4 0h3m3 0h1m1 0h1M3 59.5h2m26 0h1m1 0h1m3 0h1m1 0h1m9 0h1m2 0h1m2 0h1m8 0h1m1 0h1m5 0h2m1 0h1m5 0h2m9 0h2m2 0h1m18 0h2M3 60.5h1m12 0h1m2 0h1m1 0h2m7 0h1m2 0h1m3 0h1m1 0h1m1 0h1m7 0h1m5 0h1m3 0h1m4 0h1m13 0h2m1 0h1m2 0h1m1 0h3m5 0h3m2 0h1m13 0h1M5 61.5h2m3 0h1m3 0h1m8 0h1m1 0h1m23 0h2m4 0h1m1 0h1m10 0h1m5 0h1m16 0h1m2 0h2m6 0h1m3 0h2m6 0h1M0 62.5h1m3 0h1m5 0h1m7 0h1m1 0h1m1 0h1m4 0h2m1 0h1m1 0h1m3 0h1m19 0h1m7 0h2m7 0h1m2 0h1m9 0h1m2 0h1m1 0h2m4 0h1m2 0h1m4 0h1m2 0h1m2 0h1M10 63.5h2m5 0h1m16 0h1m3 0h1m1 0h1m5 0h1m2 0h1m4 0h1m5 0h1m14 0h1m3 0h1m5 0h1m4 0h1m5 0h1m2 0h1m6 0h1M8 64.5h1m2 0h1m3 0h1m1 0h1m10 0h1m4 0h1m2 0h1m1 0h1m1 0h1m15 0h2m3 0h3m3 0h1m20 0h1m5 0h1m16 0h1m1 0h1M3 65.5h1m1 0h1m6 0h2m3 0h2m3 0h1m11 0h2m1 0h1m2 0h1m1 0h1m3 0h3m3 0h1m3 0h1m12 0h1m1 0h1m1 0h1m7 0h1m9 0h3m5 0h1m1 0h1m5 0h1m3 0h1m3 0h1M1 66.5h1m1 0h1m1 0h2m2 0h1m3 0h4m4 0h1m4 0h1m2 0h1m2 0h1m8 0h1m1 0h1m2 0h1m4 0h1m1 0h1m7 0h1m3 0h2m8 0h1m5 0h1m7 0h1m2 0h1m7 0h1M8 67.5h1m3 0h2m3 0h1m13 0h1m1 0h1m1 0h1m12 0h1m16 0h1m16 0h2m4 0h2m3 0h1m1 0h2m7 0h1m11 0h1M13 68.5h1m2 0h1m9 0h1m7 0h1m7 0h2m8 0h1m2 0h1m1 0h1m5 0h1m1 0h1m17 0h5m4 0h1m8 0h1m3 0h3m5 0h1M1 69.5h1m15 0h1m2 0h1m2 0h1m2 0h1m3 0h1m1 0h1m1 0h2m1 0h1m3 0h2m3 0h1m18 0h2m2 0h1m9 0h1m5 0h1m1 0h1m1 0h1m2 0h1m5 0h1m3 0h1m5 0h2M5 70.5h1m12 0h1m6 0h2m11 0h1m11 0h1m4 0h1m3 0h1m6 0h2m4 0h1m4 0h1m11 0h1m3 0h4m11 0h1m2 0h1M8 71.5h1m12 0h1m12 0h1m12 0h1m1 0h1m8 0h1m23 0h1m3 0h1m2 0h2m5 0h1m2 0h1m11 0h1m1 0h2M10 72.5h1m3 0h1m4 0h1m4 0h1m2 0h1m2 0h1m5 0h1m1 0h1m2 0h1m1 0h2m11 0h1m6 0h1m4 0h1m2 0h1m7 0h1m1 0h3m2 0h1m7 0h1m8 0h1m1 0h1m3 0h2m2 0h1M21 73.5h1m1 0h1m2 0h1m4 0h2m6 0h2m3 0h1m11 0h1m3 0h1m2 0h1m2 0h1m3 0h1m1 0h1m9 0h2m6 0h2m10 0h1m1 0h1m4 0h1m1 0h1m1 0h1M2 74.5h1m4 0h1m3 0h1m17 0h1m7 0h1m8 0h1m2 0h2m2 0h1m5 0h1m1 0h1m7 0h1m15 0h1m4 0h4m7 0h1m9 0h1M0 75.5h1m14 0h1m5 0h1m6 0h1m3 0h2m8 0h1m6 0h1m2 0h2m1 0h1m8 0h1m6 0h1m1 0h1m5 0h1m17 0h1m2 0h1m5 0h1m3 0h1M14 76.5h1m1 0h1m13 0h1m2 0h1m16 0h4m2 0h2m6 0h1m3 0h2m5 0h2m7 0h2m1 0h1m10 0h1m2 0h1m5 0h1M0 77.5h1m10 0h1m2 0h2m6 0h1m5 0h1m2 0h1m13 0h1m6 0h1m17 0h1m2 0h3m6 0h1m11 0h1m1 0h1m8 0h1m2 0h1m5 0h1m1 0h1M7 78.5h1m4 0h1m4 0h1m4 0h1m2 0h1m1 0h1m5 0h2m11 0h1m8 0h1m5 0h1m18 0h1m4 0h1m2 0h3m4 0h1m4 0h1m5 0h1m7 0h1m1 0h1M0 79.5h1m1 0h2m5 0h1m2 0h1m6 0h1m7 0h1m1 0h1m1 0h2m4 0h1m1 0h1m7 0h1m6 0h3m8 0h1m1 0h2m14 0h1m3 0h1m3 0h1m1 0h1m2 0h1m1 0h1m4 0h2m1 0h1m4 0h1m4 0h1M2 80.5h1m8 0h1m1 0h1m8 0h1m2 0h1m7 0h1m8 0h1m1 0h1m1 0h1m3 0h1m1 0h1m2 0h1m3 0h1m3 0h1m2 0h1m6 0h1m1 0h1m2 0h2m6 0h1m8 0h1m6 0h1m1 0h1m11 0h1M4 81.5h1m5 0h1m3 0h1m1 0h1m40 0h1m1 0h1m10 0h1m13 0h1m1 0h1m4 0h1m5 0h1m12 0h1m2 0h1M0 82.5h1m1 0h1m4 0h1m8 0h1m1 0h1m3 0h1m6 0h1m8 0h1m1 0h1m5 0h2m1 0h1m10 0h1m6 0h1m2 0h1m1 0h1m11 0h1m4 0h1m2 0h1m5 0h1m5 0h1m4 0h3M1 83.5h1m1 0h1m3 0h1m5 0h1m8 0h1m25 0h3m1 0h1m1 0h1m5 0h1m1 0h1m4 0h1m12 0h1m1 0h1m7 0h1m1 0h1m1 0h2m4 0h1m3 0h1m1 0h2m6 0h2M0 84.5h2m10 0h1m4 0h1m3 0h1m1 0h1m14 0h1m2 0h1m1 0h1m9 0h1m8 0h1m5 0h1m8 0h1m4 0h1m1 0h2m19 0h1m1 0h1M5 85.5h1m15 0h1m3 0h2m3 0h1m2 0h1m5 0h1m3 0h3m2 0h1m7 0h2m7 0h2m5 0h2m2 0h1m3 0h1m3 0h2m9 0h2m1 0h2m3 0h2m8 0h1m2 0h1M5 86.5h1m1 0h1m4 0h3m8 0h1m2 0h1m2 0h1m4 0h1m11 0h1m6 0h1m4 0h1m17 0h2m3 0h1m8 0h1m3 0h2m6 0h1m1 0h1m2 0h2m5 0h2M0 87.5h1m2 0h1m9 0h1m13 0h1m2 0h1m4 0h2m3 0h1m3 0h1m2 0h1m7 0h1m3 0h1m1 0h2m3 0h1m5 0h1m1 0h1m2 0h1m2 0h1m5 0h1m1 0h1m7 0h1m2 0h1m2 0h1m3 0h1m3 0h1m1 0h2M0 88.5h1m5 0h1m1 0h2m3 0h2m1 0h1m2 0h1m9 0h2m5 0h1m5 0h1m3 0h2m1 0h1m4 0h1m11 0h1m1 0h1m8 0h1m2 0h1m4 0h1m12 0h1M3 89.5h2m4 0h1m4 0h1m3 0h2m2 0h1m3 0h1m6 0h2m4 0h1m15 0h1m3 0h2m1 0h1m13 0h1m7 0h1m3 0h1m1 0h1m2 0h2m12 0h2m6 0h1M1 90.5h2m2 0h2m14 0h1m3 0h2m2 0h1m11 0h1m1 0h2m3 0h1m1 0h1m10 0h1m6 0h1m2 0h1m3 0h1m4 0h1m1 0h1m7 0h1m6 0h1m1 0h1m7 0h1m4 0h1M8 91.5h1m5 0h1m3 0h1m4 0h2m6 0h1m4 0h2m9 0h2m9 0h1m6 0h1m2 0h1m2 0h1m10 0h1m11 0h1m5 0h1m9 0h1M8 92.5h1m3 0h2m1 0h1m1 0h1m2 0h3m12 0h2m13 0h1m23 0h1m13 0h2m5 0h1m3 0h3m6 0h1M2 93.5h1m3 0h2m1 0h1m10 0h1m7 0h1m1 0h1m3 0h1m22 0h1m3 0h1m7 0h2m3 0h1m3 0h1m3 0h1m1 0h1m6 0h1m1 0h1m2 0h1m1 0h1m3 0h1m5 0h1m1 0h2m1 0h1M8 94.5h1m1 0h2m1 0h1m6 0h1m3 0h1m2 0h1m7 0h1m9 0h3m3 0h1m2 0h1m2 0h1m5 0h1m7 0h1m17 0h1m3 0h1m4 0h1m1 0h2m4 0h1M0 95.5h2m1 0h1m1 0h1m1 0h1m3 0h1m3 0h1m8 0h1m1 0h1m2 0h2m2 0h1m3 0h1m1 0h1m1 0h2m4 0h2m1 0h1m2 0h1m1 0h1m4 0h1m4 0h1m6 0h2m4 0h2m11 0h1m2 0h2m3 0h1M3 96.5h1m3 0h1m5 0h1m1 0h1m4 0h1m11 0h1m6 0h1m2 0h3m3 0h1m3 0h1m2 0h1m10 0h1m1 0h2m3 0h1m4 0h2m17 0h2m16 0h1M2 97.5h1m4 0h1m1 0h3m5 0h1m6 0h1m23 0h1m2 0h1m3 0h1m4 0h2m1 0h2m4 0h1m2 0h1m2 0h3m3 0h1m5 0h1m10 0h1m1 0h2m1 0h1m2 0h1M1 98.5h1m1 0h2m2 0h1m10 0h1m2 0h1m4 0h1m5 0h1m2 0h2m6 0h1m7 0h1m1 0h1m1 0h1m2 0h1m2 0h1m14 0h1m3 0h2m13 0h2m3 0h2m4 0h1m1 0h1m1 0h1M3 99.5h1m5 0h1m2 0h1m3 0h1m9 0h2m4 0h1m7 0h1m6 0h1m6 0h2m3 0h1m1 0h2m4 0h1m1 0h1m3 0h1m5 0h2m2 0h1m6 0h1m2 0h1m5 0h1m8 0h1m7 0h1M1 100.5h3m1 0h1m13 0h1m3 0h1m16 0h1m5 0h2m5 0h1m20 0h1m15 0h1m5 0h1m3 0h1m4 0h1m10 0h1M5 101.5h3m17 0h1m2 0h1m1 0h1m1 0h2m2 0h2m16 0h1m4 0h1m1 0h1m15 0h1m3 0h2m19 0h1m3 0h1m2 0h1m2 0h2M0 102.5h1m4 0h1m4 0h2m1 0h2m3 0h1m10 0h1m6 0h1m3 0h2m2 0h1m1 0h1m5 0h1m19 0h1m3 0h1m4 0h1m1 0h1m4 0h1m10 0h1m2 0h1m1 0h1m6 0h1M0 103.5h1m8 0h1m4 0h1m6 0h2m1 0h1m2 0h1m6 0h2m4 0h1m1 0h1m2 0h1m1 0h1m8 0h2m4 0h1m1 0h1m7 0h2m5 0h1m3 0h2m9 0h1m3 0h1m8 0h1M0 104.5h2m3 0h1m3 0h1m1 0h1m5 0h3m11 0h1m1 0h1m16 0h1m6 0h2m10 0h2m9 0h1m1 0h1m9 0h1m2 0h1m5 0h1m3 0h2m7 0h2M4 105.5h1m3 0h1m12 0h1m4 0h1m9 0h1m9 0h1m22 0h1m5 0h1m5 0h1m9 0h1m4 0h1m3 0h2m1 0h1m8 0h1m2 0h1M0 106.5h2m3 0h1m5 0h1m5 0h1m1 0h2m3 0h1m6 0h1m2 0h1m1 0h2m2 0h1m5 0h1m4 0h1m3 0h1m2 0h1m5 0h1m6 0h1m16 0h1m2 0h1m1 0h1m5 0h1m3 0h1m1 0h1m8 0h1M11 107.5h1m1 0h1m1 0h2m7 0h1m2 0h1m2 0h1m12 0h1m5 0h1m3 0h2m3 0h1m2 0h1m4 0h1m2 0h1m15 0h1m1 0h1m4 0h1m6 0h1m3 0h1m3 0h1m1 0h1M3 108.5h1m1 0h1m5 0h1m11 0h1m5 0h1m4 0h1m1 0h1m7 0h2m1 0h3m9 0h1m19 0h4m4 0h1m2 0h1m13 0h1m2 0h1m3 0h1M10 109.5h1m1 0h1m1 0h1m12 0h2m1 0h1m8 0h1m10 0h1m11 0h1m1 0h1m8 0h1m1 0h1m5 0h1m3 0h1m5 0h1m14 0h1m8 0h1M10 110.5h1m6 0h1m3 0h1m1 0h1m14 0h1m8 0h1m14 0h2m2 0h2m6 0h1m4 0h1m1 0h1m22 0h1M2 111.5h1m4 0h1m8 0h2m1 0h1m1 0h1m6 0h1m3 0h1m10 0h1m3 0h1m7 0h1m3 0h1m6 0h1m16 0h1m3 0h1m5 0h2m8 0h1m4 0h1M5 112.5h1m1 0h1m1 0h1m2 0h1m2 0h1m3 0h4m5 0h1m4 0h1m13 0h1m1 0h1m6 0h2m4 0h2m11 0h1m7 0h1m3 0h2m3 0h1m2 0h1m6 0h2m8 0h2M5 113.5h1m1 0h1m5 0h1m4 0h1m9 0h1m6 0h1m2 0h1m2 0h1m7 0h1m25 0h1m3 0h1m7 0h2m2 0h1m4 0h4m3 0h1m4 0h1m3 0h3M2 114.5h1m1 0h2m3 0h1m11 0h1m2 0h1m3 0h2m1 0h1m9 0h1m3 0h3m4 0h1m13 0h1m1 0h1m3 0h1m1 0h1m2 0h1m3 0h1m1 0h1m13 0h1m7 0h1m8 0h1M2 115.5h1m3 0h1m4 0h1m2 0h3m12 0h2m13 0h3m17 0h1m3 0h2m7 0h1m3 0h1m22 0h3m3 0h1M7 116.5h1m12 0h1m7 0h1m16 0h1m14 0h1m1 0h1m7 0h1m3 0h2m5 0h1m1 0h1m7 0h2m4 0h1m1 0h1"/>
<path stroke="#ff5a00" stroke-width="1" fill="none" d="M1 0.5h1m10 0h1m12 0h1m1 0h1m4 0h1m2 0h1m1 0h1m2 0h1m15 0h1m2 0h1m4 0h1m6 0h1m9 0h1m2 0h1m10 0h1m3 0h1m4 0h1m11 0h1M5 1.5h2m2 0h1m6 0h1m9 0h1m2 0h1m1 0h1m3 0h1m2 0h1m1 0h1m2 0h1m2 0h1m3 0h2m5 0h1m8 0h1m1 0h1m16 0h1m3 0h3m1 0h1m1 0h1m2 0h1m1 0h2m13 0h1M6 2.5h1m12 0h1m1 0h1m1 0h3m1 0h1m16 0h1m1 0h1m1 0h1m4 0h1m4 0h1m6 0h1m4 0h1m8 0h1m4 0h1m6 0h1m4 0h2M1 3.5h1m6 0h1m2 0h1m2 0h2m1 0h3m9 0h1m6 0h1m2 0h1m2 0h2m14 0h1m3 0h1m5 0h3m17 0h1m4 0h1m2 0h1m2 0h4m10 0h1m1 0h1M4 4.5h3m9 0h1m2 0h1m7 0h1m1 0h2m2 0h1m1 0h1m8 0h1m4 0h1m3 0h1m2 0h1m23 0h1m15 0h1m7 0h1m8 0h1M1 5.5h2m2 0h1m8 0h1m5 0h2m2 0h1m21 0h1m28 0h1m2 0h1m6 0h2m4 0h2m10 0h3m6 0h1m1 0h2M0 6.5h1m1 0h2m2 0h1m6 0h1m1 0h1m4 0h1m1 0h1m2 0h2m3 0h3m6 0h1m1 0h1m12 0h1m11 0h1m2 0h1m2 0h1m8 0h1m11 0h1m9 0h1m2 0h1m6 0h1M6 7.5h1m7 0h2m6 0h3m2 0h1m2 0h2m1 0h1m6 0h1m1 0h1m1 0h1m2 0h1m4 0h1m1 0h1m4 0h1m10 0h1m7 0h1m1 0h1m1 0h1m2 0h1m1 0h1m2 0h1m2 0h1m8 0h1m10 0h1M0 8.5h1m3 0h3m5 0h1m1 0h2m6 0h1m2 0h1m4 0h1m3 0h2m15 0h1m1 0h1m2 0h1m5 0h2m3 0h1m2 0h1m5 0h1m17 0h1m9 0h2m2 0h1m1 0h1m2 0h2M4 9.5h1m3 0h2m4 0h1m2 0h1m4 0h1m5 0h1m2 0h1m1 0h1m8 0h1m4 0h1m1 0h1m4 0h1m4 0h1m7 0h2m1 0h1m3 0h1m4 0h1m8 0h2m2 0h1m5 0h1m1 0h2m6 0h1m4 0h1M11 10.5h1m2 0h2m6 0h2m4 0h1m3 0h1m5 0h1m7 0h1m2 0h1m4 0h1m3 0h1m3 0h1m2 0h1m4 0h2m7 0h1m2 0h1m10 0h1m7 0h1m11 0h1m2 0h1M7 11.5h1m2 0h1m6 0h1m11 0h1m4 0h1m5 0h1m7 0h1m1 0h1m4 0h1m3 0h1m1 0h1m2 0h2m3 0h1m8 0h1m3 0h1m2 0h1m1 0h1m1 0h1m7 0h2m3 0h1m10 0h1M5 12.5h1m2 0h1m5 0h1m19 0h1m1 0h2m2 0h1m1 0h1m20 0h1m1 0h4m10 0h1m14 0h1m3 0h1m4 0h3m8 0h2M1 13.5h1m6 0h1m7 0h1m3 0h2m13 0h1m1 0h1m5 0h1m4 0h1m1 0h1m2 0h1m9 0h2m8 0h1m8 0h1m11 0h1m10 0h1m2 0h1m3 0h1m2 0h2M22 14.5h1m7 0h1m6 0h2m3 0h2m4 0h1m1 0h1m4 0h1m2 0h1m2 0h1m4 0h1m3 0h2m13 0h1m5 0h1m4 0h3m12 0h1m3 0h2M0 15.5h1m1 0h1m2 0h1m7 0h1m3 0h1m1 0h1m4 0h1m9 0h1m1 0h1m1 0h1m4 0h1m6 0h1m3 0h1m19 0h1m2 0h2m4 0h2m1 0h1m1 0h2m14 0h1m1 0h1m1 0h1m4 0h1M2 16.5h1m3 0h1m2 0h2m1 0h1m5 0h3m2 0h1m4 0h1m6 0h1m1 0h1m2 0h1m3 0h1m10 0h1m26 0h1m1 0h1m5 0h1m1 0h1m5 0h1m17 0h1M2 17.5h1m7 0h1m4 0h1m14 0h1m12 0h1m7 0h1m2 0h2m4 0h2m4 0h1m4 0h1m13 0h1m2 0h1m2 0h1m16 0h1m1 0h1M4 18.5h2m3 0h2m2 0h1m5 0h1m2 0h2m1 0h1m7 0h1m1 0h1m2 0h2m1 0h1m10 0h1m2 0h1m1 0h1m20 0h1m3 0h1m3 0h1m23 0h1m1 0h1M5 19.5h1m9 0h2m1 0h1m1 0h1m2 0h1m9 0h1m10 0h1m4 0h2m6 0h1m6 0h1m1 0h2m3 0h1m8 0h1m3 0h1m1 0h1m6 0h2m5 0h1m1 0h1m2 0h1m4 0h2M7 20.5h1m6 0h3m18 0h1m1 0h1m13 0h1m2 0h1m11 0h1m1 0h1m1 0h1m2 0h2m12 0h3m3 0h1m3 0h1m4 0h1m3 0h1m2 0h2M12 21.5h1m2 0h1m5 0h1m2 0h1m2 0h1m8 0h1m3 0h2m3 0h1m1 0h1m5 0h1m6 0h2m1 0h1m5 0h1m3 0h1m1 0h2m2 0h1m6 0h1m7 0h2m3 0h1m4 0h1m3 0h1m5 0h1m1 0h1M0 22.5h1m16 0h1m1 0h1m10 0h1m11 0h1m7 0h1m15 0h1m6 0h1m1 0h3m1 0h1m1 0h1m11 0h2m6 0h1m2 0h1m3 0h1m1 0h1m3 0h1M2 23.5h1m2 0h1m12 0h1m6 0h1m6 0h1m10 0h1m6 0h1m1 0h1m1 0h1m4 0h1m1 0h3m3 0h1m4 0h1m2 0h1m8 0h1m3 0h2m4 0h1m4 0h1m7 0h1M0 24.5h1m3 0h1m4 0h1m1 0h1m2 0h1m1 0h2m2 0h1m8 0h1m2 0h1m2 0h1m1 0h1m1 0h1m3 0h3m4 0h1m11 0h1m3 0h1m2 0h2m5 0h1m1 0h1m6 0h1m2 0h1m10 0h1m1 0h1m1 0h2m1 0h1m3 0h1m1 0h1M3 25.5h1m1 0h1m2 0h1m11 0h2m2 0h1m1 0h1m14 0h1m4 0h1m3 0h1m5 0h2m1 0h1m6 0h1m3 0h1m4 0h1m2 0h1m1 0h1m1 0h1m1 0h1m2 0h2m1 0h1m4 0h1m4 0h1m3 0h1m1 0h4m5 0h1M3 26.5h1m4 0h1m1 0h1m16 0h1m2 0h1m6 0h1m1 0h2m1 0h1m3 0h1m5 0h1m1 0h1m19 0h3m1 0h1m1 0h1m14 0h1m1 0h3m2 0h1m1 0h2m1 0h1m3 0h1m1 0h2m1 0h1M0 27.5h1m3 0h1m2 0h1m6 0h1m2 0h2m6 0h1m9 0h1m1 0h1m1 0h1m9 0h1m8 0h1m2 0h1m15 0h1m10 0h1m2 0h1m9 0h1m2 0h1m6 0h1M4 28.5h1m18 0h1m4 0h2m1 0h1m11 0h1m2 0h1m1 0h2m5 0h1m6 0h1m5 0h2m12 0h1m2 0h1m2 0h1m4 0h1m4 0h1m9 0h1m6 0h1M3 29.5h1m3 0h1m1 0h3m9 0h3m9 0h2m3 0h2m1 0h1m20 0h1m2 0h2m3 0h1m11 0h1m17 0h2m1 0h1m1 0h1m3 0h1m1 0h1m3 0h2M1 30.5h1m6 0h1m7 0h1m1 0h1m9 0h2m4 0h3m1 0h1m3 0h1m1 0h1m2 0h2m11 0h1m1 0h1m5 0h1m1 0h1m3 0h1m5 0h1m2 0h2m3 0h3m7 0h1m4 0h1m5 0h1m4 0h1M2 31.5h1m6 0h1m3 0h1m16 0h1m5 0h1m17 0h1m9 0h1m2 0h1m1 0h1m1 0h1m1 0h1m8 0h1m1 0h4m6 0h1m6 0h1m6 0h1M4 32.5h1m1 0h1m25 0h1m9 0h1m14 0h1m20 0h1m1 0h1m2 0h1m4 0h1m9 0h1m5 0h1m1 0h1m6 0h1M1 33.5h1m2 0h1m8 0h1m5 0h1m10 0h3m5 0h1m5 0h1m5 0h1m18 0h1m5 0h1m1 0h1m3 0h6m1 0h1m4 0h2m8 0h1M13 34.5h1m12 0h2m4 0h1m2 0h1m1 0h5m6 0h1m1 0h1m14 0h1m11 0h1m3 0h2m3 0h2m1 0h1m17 0h1m7 0h1M3 35.5h1m10 0h2m2 0h1m12 0h1m8 0h1m4 0h1m1 0h1m2 0h1m1 0h2m2 0h1m4 0h1m7 0h1m1 0h1m6 0h2m5 0h1m3 0h1m1 0h1m8 0h2m3 0h2m7 0h1M6 36.5h1m2 0h1m4 0h2m11 0h1m4 0h1m2 0h2m1 0h1m2 0h1m3 0h2m3 0h2m8 0h1m3 0h1m13 0h1m1 0h1m5 0h1m3 0h1m9 0h3m1 0h1m7 0h1m2 0h1M14 37.5h1m4 0h1m2 0h1m3 0h1m1 0h1m4 0h1m2 0h1m5 0h1m1 0h1m2 0h2m3 0h2m6 0h1m8 0h1m6 0h1m5 0h2m7 0h5m9 0h1m7 0h1M2 38.5h1m7 0h2m2 0h3m2 0h1m13 0h1m3 0h2m9 0h2m5 0h1m20 0h1m5 0h1m2 0h1m24 0h2m2 0h1M9 39.5h1m5 0h2m3 0h1m7 0h1m2 0h1m2 0h2m8 0h1m2 0h1m1 0h3m2 0h2m11 0h1m7 0h1m21 0h1m2 0h2m1 0h1m2 0h1m8 0h1M8 40.5h2m2 0h1m11 0h2m2 0h1m2 0h1m18 0h2m5 0h1m6 0h1m11 0h1m1 0h1m2 0h1m6 0h1m4 0h1m9 0h2m3 0h2M1 41.5h1m2 0h1m2 0h2m1 0h1m12 0h1m10 0h1m6 0h1m5 0h2m8 0h1m1 0h1m6 0h2m6 0h1m7 0h1m1 0h2m7 0h1m10 0h1m1 0h1m4 0h1M1 42.5h1m5 0h1m7 0h2m8 0h1m3 0h2m2 0h2m4 0h1m2 0h1m4 0h1m7 0h1m4 0h1m1 0h1m2 0h1m1 0h1m2 0h1m12 0h2m3 0h2m4 0h1m6 0h1M9 43.5h1m2 0h1m1 0h2m12 0h1m4 0h2m6 0h3m2 0h2m3 0h1m8 0h1m11 0h1m6 0h1m1 0h1m3 0h2m7 0h1m8 0h1m1 0h1M1 44.5h1m4 0h1m3 0h3m2 0h1m4 0h1m3 0h1m6 0h1m2 0h1m9 0h1m11 0h1m7 0h1m4 0h1m2 0h1m3 0h2m3 0h1m5 0h2m2 0h1m1 0h1m5 0h1m9 0h2M0 45.5h1m8 0h1m7 0h1m3 0h1m1 0h1m6 0h1m5 0h1m3 0h1m2 0h1m4 0h1m17 0h3m2 0h1m2 0h1m7 0h1m5 0h2m2 0h2m15 0h1m2 0h1m3 0h1M0 46.5h1m6 0h1m2 0h1m3 0h2m2 0h2m5 0h1m6 0h2m3 0h2m12 0h1m10 0h1m2 0h1m1 0h1m10 0h1m9 0h2m16 0h1m2 0h1M0 47.5h1m2 0h1m1 0h1m2 0h1m4 0h1m1 0h1m7 0h1m3 0h2m1 0h1m8 0h1m15 0h1m9 0h1m4 0h1m2 0h1m1 0h1m5 0h1m13 0h1m1 0h1m1 0h1m4 0h1m1 0h2m2 0h1M3 48.5h1m7 0h1m1 0h1m1 0h1m8 0h2m1 0h1m10 0h1m6 0h1m8 0h1m12 0h1m3 0h1m1 0h1m6 0h1m5 0h1m7 0h1m11 0h1m3 0h1M0 49.5h1m6 0h1m1 0h2m12 0h1m7 0h2m2 0h1m2 0h1m1 0h1m1 0h1m3 0h1m3 0h1m11 0h1m6 0h2m9 0h1m6 0h1m3 0h1m6 0h1m2 0h1m3 0h2m6 0h1m1 0h1M0 50.5h1m1 0h2m6 0h2m15 0h1m2 0h1m5 0h1m5 0h1m1 0h1m5 0h1m2 0h1m3 0h1m8 0h2m1 0h1m2 0h1m3 0h1m1 0h1m13 0h1m4 0h2m1 0h1m1 0h1m2 0h1m5 0h1M2 51.5h1m2 0h1m5 0h2m4 0h1m11 0h1m8 0h1m2 0h1m27 0h2m2 0h1m3 0h1m5 0h1m2 0h1m1 0h1m6 0h1m6 0h1m1 0h1m1 0h2m8 0h1M1 52.5h1m1 0h1m13 0h1m8 0h1m5 0h1m2 0h2m3 0h2m4 0h1m1 0h1m4 0h1m3 0h1m3 0h1m7 0h2m1 0h1m9 0h1m2 0h1m1 0h1m4 0h1m1 0h3m4 0h2m1 0h2M12 53.5h1m3 0h1m13 0h1m10 0h1m2 0h1m2 0h1m3 0h3m2 0h1m4 0h1m2 0h1m3 0h1m11 0h1m2 0h2m5 0h1m8 0h1m13 0h1M2 54.5h1m12 0h2m5 0h1m9 0h2m2 0h1m10 0h2m3 0h1m2 0h1m3 0h1m1 0h1m4 0h1m1 0h1m1 0h1m7 0h1m1 0h1m8 0h1m15 0h1m2 0h2M0 55.5h1m1 0h1m1 0h1m7 0h2m7 0h3m11 0h1m4 0h1m2 0h1m1 0h1m5 0h1m14 0h1m6 0h1m3 0h1m1 0h1m12 0h1m2 0h1m3 0h1m6 0h1m2 0h1M5 56.5h2m9 0h1m2 0h2m5 0h1m10 0h2m2 0h2m2 0h1m6 0h3m3 0h1m1 0h1m6 0h1m3 0h4m6 0h1m13 0h1m8 0h1m9 0h1M0 57.5h1m2 0h2m1 0h3m1 0h4m1 0h1m14 0h1m1 0h1m4 0h1m1 0h1m9 0h1m13 0h1m4 0h1m20 0h1m7 0h1m12 0h2M8 58.5h1m1 0h1m3 0h1m1 0h2m7 0h1m5 0h1m18 0h1m5 0h2m9 0h1m1 0h1m1 0h1m3 0h1m2 0h1m10 0h2m6 0h2m3 0h1m1 0h1m7 0h1m1 0h1M1 59.5h2m10 0h1m5 0h1m1 0h1m2 0h2m2 0h1m1 0h1m3 0h2m5 0h1m3 0h1m1 0h1m3 0h1m4 0h2m4 0h1m13 0h1m1 0h1m15 0h1m5 0h1m7 0h2m2 0h2M9 60.5h1m3 0h1m3 0h1m2 0h1m8 0h1m8 0h1m7 0h1m3 0h1m1 0h2m7 0h1m3 0h1m10 0h1m8 0h1m4 0h1m9 0h1m6 0h1m1 0h1m1 0h2M1 61.5h1m9 0h1m14 0h1m5 0h3m3 0h1m6 0h2m9 0h1m2 0h1m5 0h3m4 0h1m2 0h2m5 0h1m1 0h1m1 0h1m1 0h1m3 0h1m3 0h1m1 0h1m1 0h1m2 0h1m4 0h1M1 62.5h1m9 0h2m1 0h1m8 0h1m11 0h1m16 0h1m2 0h1m5 0h1m6 0h1m1 0h2m2 0h1m2 0h1m1 0h1m2 0h2m4 0h1m4 0h1m2 0h1m4 0h3m2 0h1m5 0h1M0 63.5h1m5 0h2m1 0h1m10 0h1m8 0h2m2 0h1m9 0h1m7 0h1m11 0h1m5 0h1m7 0h1m3 0h1m13 0h1m5 0h3m1 0h1m8 0h2M1 64.5h1m3 0h2m2 0h1m2 0h1m8 0h1m1 0h1m1 0h1m3 0h2m6 0h1m4 0h1m7 0h2m8 0h1m13 0h1m1 0h2m9 0h1m3 0h1m7 0h1m4 0h2m2 0h1m5 0h1m1 0h1M1 65.5h2m12 0h2m2 0h2m3 0h1m1 0h1m1 0h1m4 0h1m2 0h1m8 0h1m3 0h1m18 0h1m7 0h1m2 0h1m5 0h2m1 0h1m7 0h1M4 66.5h1m5 0h3m5 0h1m1 0h1m21 0h1m4 0h1m25 0h1m3 0h1m2 0h1m7 0h1m10 0h1m4 0h2m1 0h1m5 0h1m1 0h1M7 67.5h1m11 0h1m12 0h1m4 0h2m5 0h1m1 0h1m7 0h2m4 0h2m4 0h4m1 0h1m1 0h1m2 0h1m1 0h1m5 0h1m2 0h1m2 0h1m3 0h1m2 0h1m1 0h1m5 0h1m4 0h1m3 0h1M8 68.5h1m1 0h1m4 0h1m8 0h1m3 0h1m1 0h1m9 0h1m7 0h1m2 0h1m8 0h3m4 0h1m1 0h1m1 0h1m1 0h1m15 0h1m5 0h1m6 0h1m13 0h1M0 69.5h1m8 0h1m4 0h2m3 0h1m7 0h1m8 0h1m2 0h1m5 0h1m1 0h1m5 0h1m1 0h1m1 0h1m1 0h1m4 0h1m8 0h1m2 0h1m3 0h1m1 0h1m14 0h1m2 0h2m9 0h2M0 70.5h1m7 0h1m4 0h1m18 0h4m9 0h1m15 0h1m3 0h1m3 0h1m8 0h1m1 0h1m5 0h1m1 0h1m9 0h2m4 0h1m1 0h1m2 0h2M2 71.5h2m14 0h1m6 0h1m2 0h1m3 0h2m2 0h2m1 0h1m2 0h1m5 0h1m1 0h1m1 0h4m7 0h1m2 0h1m1 0h1m8 0h2m12 0h1m1 0h1m4 0h1m7 0h1m2 0h1m2 0h1M0 72.5h1m4 0h3m9 0h2m10 0h1m30 0h1m4 0h1m11 0h1m6 0h2m1 0h1m2 0h1m7 0h3m3 0h1m7 0h1M1 73.5h1m5 0h1m5 0h1m22 0h1m8 0h2m1 0h1m3 0h1m2 0h1m2 0h1m2 0h1m13 0h1m2 0h1m1 0h1m5 0h1m1 0h2m5 0h3M3 74.5h1m8 0h2m2 0h1m2 0h1m3 0h2m2 0h1m11 0h1m1 0h1m1 0h1m1 0h1m5 0h1m8 0h1m3 0h1m1 0h1m7 0h4m1 0h1m4 0h1m3 0h1m5 0h2m1 0h1m5 0h1m3 0h1M12 75.5h3m1 0h1m1 0h1m11 0h1m5 0h1m2 0h1m5 0h1m1 0h2m11 0h2m26 0h1m5 0h2m9 0h1m3 0h1M1 76.5h1m5 0h1m10 0h1m4 0h1m5 0h1m5 0h1m4 0h1m2 0h1m10 0h1m3 0h1m21 0h1m12 0h1m5 0h2m3 0h1m6 0h2m2 0h1M8 77.5h1m14 0h1m1 0h1m4 0h1m1 0h1m2 0h2m2 0h3m2 0h1m1 0h1m1 0h1m2 0h1m11 0h1m3 0h1m3 0h1m7 0h1m4 0h1m1 0h2m5 0h1m1 0h1m8 0h1m4 0h1M0 78.5h1m3 0h1m4 0h3m3 0h1m2 0h1m2 0h1m8 0h1m11 0h1m7 0h1m1 0h1m4 0h1m1 0h1m6 0h1m2 0h1m3 0h1m8 0h1m4 0h1m4 0h2m2 0h1m2 0h1m7 0h1m7 0h1M14 79.5h1m2 0h1m2 0h2m1 0h1m2 0h1m1 0h1m7 0h1m9 0h1m4 0h2m5 0h1m4 0h2m8 0h1m7 0h1m4 0h1m3 0h1m3 0h1m2 0h1m9 0h1m4 0h2M5 80.5h2m3 0h1m7 0h1m12 0h1m4 0h1m10 0h1m3 0h1m6 0h1m2 0h1m5 0h1m1 0h1m4 0h1m2 0h1m2 0h2m6 0h1m2 0h1m1 0h1m7 0h1m1 0h1m3 0h1m5 0h1m1 0h1M11 81.5h3m3 0h1m6 0h3m1 0h1m3 0h2m3 0h1m2 0h2m5 0h1m1 0h1m4 0h1m1 0h1m1 0h1m1 0h1m2 0h1m3 0h2m8 0h1m12 0h1m5 0h1m1 0h3m5 0h1m8 0h1M3 82.5h1m6 0h1m1 0h2m16 0h2m7 0h1m3 0h1m15 0h1m3 0h1m4 0h1m2 0h1m6 0h2m2 0h1m10 0h1m3 0h1m1 0h2m1 0h1m2 0h1m7 0h1M0 83.5h1m10 0h1m8 0h1m7 0h3m1 0h1m8 0h1m9 0h1m1 0h1m2 0h2m14 0h1m1 0h1m6 0h1m3 0h1m1 0h2m2 0h1m1 0h1m4 0h2m1 0h1m1 0h1m4 0h1m3 0h1m3 0h1M8 84.5h3m2 0h2m10 0h1m5 0h2m4 0h1m4 0h1m3 0h1m1 0h1m1 0h1m3 0h1m2 0h1m2 0h1m2 0h1m14 0h1m9 0h1m1 0h1m2 0h1m2 0h1m13 0h3m1 0h1M8 85.5h1m3 0h1m1 0h2m1 0h1m2 0h1m11 0h1m22 0h1m2 0h1m2 0h1m6 0h1m12 0h1m4 0h1m2 0h1m1 0h1m8 0h1m7 0h1M1 86.5h1m2 0h1m1 0h1m14 0h1m3 0h1m15 0h1m9 0h2m2 0h1m1 0h1m2 0h1m2 0h1m2 0h1m3 0h1m7 0h1m7 0h2m5 0h1m3 0h1m5 0h1m5 0h1m3 0h1M2 87.5h1m2 0h1m3 0h2m4 0h1m1 0h1m4 0h1m9 0h1m5 0h1m3 0h2m1 0h1m22 0h1m12 0h3m1 0h1m4 0h1m13 0h2M4 88.5h1m5 0h1m16 0h1m10 0h2m1 0h1m11 0h1m6 0h1m10 0h1m1 0h1m7 0h2m3 0h2m5 0h3m7 0h1M17 89.5h1m6 0h2m2 0h1m1 0h1m9 0h2m1 0h1m10 0h1m1 0h1m1 0h1m5 0h1m10 0h1m1 0h2m2 0h3m12 0h1m8 0h1m6 0h3M8 90.5h2m14 0h1m6 0h4m1 0h1m16 0h2m15 0h1m3 0h1m11 0h1m6 0h1m4 0h1m4 0h1m1 0h1m3 0h2M2 91.5h1m6 0h1m7 0h1m3 0h2m4 0h1m5 0h2m4 0h1m4 0h1m1 0h1m4 0h1m3 0h1m5 0h2m1 0h1m5 0h1m4 0h2m11 0h1m6 0h2m8 0h1m3 0h1m1 0h1M0 92.5h1m2 0h1m1 0h1m1 0h1m6 0h1m1 0h1m6 0h1m13 0h1m2 0h1m7 0h1m3 0h1m2 0h1m5 0h4m11 0h1m5 0h1m14 0h1m4 0h1m2 0h2m2 0h1M5 93.5h1m5 0h3m2 0h2m3 0h4m4 0h1m6 0h1m3 0h1m6 0h1m4 0h1m3 0h1m3 0h1m5 0h2m8 0h1m6 0h1m1 0h2m3 0h1m1 0h1m2 0h1m1 0h1m1 0h1m3 0h1m8 0h1m1 0h2M1 94.5h1m3 0h1m6 0h1m4 0h1m1 0h1m1 0h2m5 0h1m1 0h1m7 0h1m1 0h2m10 0h1m3 0h1m4 0h1m2 0h1m12 0h1m1 0h1m11 0h1m2 0h1m1 0h1m6 0h1m3 0h1m1 0h1m2 0h1m2 0h1M6 95.5h1m9 0h3m2 0h1m6 0h1m20 0h1m12 0h1m8 0h1m8 0h1m1 0h2m5 0h2m5 0h1m4 0h1m7 0h1m3 0h1M4 96.5h1m6 0h1m10 0h1m2 0h1m5 0h1m4 0h1m3 0h1m8 0h1m7 0h1m12 0h2m3 0h1m1 0h1m10 0h1m2 0h1m1 0h1m7 0h2m1 0h1m4 0h3m1 0h1M8 97.5h1m6 0h2m2 0h2m1 0h2m1 0h1m6 0h2m3 0h1m1 0h1m5 0h2m2 0h1m7 0h3m2 0h1m3 0h1m4 0h1m1 0h2m7 0h1m12 0h1m6 0h1M5 98.5h1m6 0h1m1 0h2m1 0h1m4 0h1m4 0h1m9 0h2m6 0h1m1 0h1m6 0h1m2 0h1m5 0h2m3 0h1m5 0h1m3 0h1m10 0h1m2 0h3m3 0h2m12 0h3M1 99.5h1m4 0h1m10 0h1m1 0h1m3 0h2m13 0h1m2 0h1m4 0h1m4 0h1m12 0h1m3 0h1m1 0h1m5 0h1m7 0h2m6 0h1m1 0h1m5 0h1m4 0h1m1 0h1m1 0h3M0 100.5h1m5 0h1m1 0h1m9 0h1m3 0h1m4 0h1m5 0h1m9 0h2m3 0h1m5 0h3m1 0h1m1 0h2m1 0h2m4 0h1m8 0h1m8 0h2m2 0h1m2 0h2m5 0h1m5 0h1m1 0h2m1 0h1M1 101.5h1m1 0h1m5 0h1m3 0h1m3 0h1m4 0h1m30 0h1m6 0h1m4 0h2m1 0h2m2 0h1m3 0h1m6 0h1m6 0h1m5 0h2m3 0h1m1 0h1m1 0h1M16 102.5h1m2 0h1m11 0h1m1 0h1m1 0h1m2 0h2m13 0h1m6 0h2m3 0h1m1 0h1m1 0h1m1 0h1m1 0h1m5 0h1m4 0h1m7 0h1m2 0h1m2 0h1m1 0h2m5 0h1m2 0h1m1 0h1M4 103.5h1m18 0h1m8 0h1m3 0h1m11 0h1m4 0h1m9 0h1m2 0h1m3 0h1m3 0h1m2 0h1m3 0h1m3 0h2m6 0h1m1 0h1m5 0h2m5 0h1m1 0h2M3 104.5h1m4 0h1m1 0h1m5 0h1m3 0h1m1 0h1m1 0h1m1 0h1m8 0h1m1 0h1m2 0h1m1 0h1m2 0h1m2 0h2m3 0h1m9 0h1m1 0h1m1 0h1m8 0h1m8 0h1m4 0h1m7 0h1m11 0h1m1 0h1M0 105.5h1m1 0h2m10 0h2m18 0h2m8 0h1m2 0h1m7 0h1m1 0h2m7 0h1m9 0h1m1 0h1m9 0h1m1 0h1m1 0h1m1 0h1m2 0h1m6 0h1m6 0h1m2 0h1M7 106.5h2m7 0h1m5 0h2m6 0h1m8 0h1m1 0h1m2 0h1m4 0h2m5 0h2m5 0h1m2 0h1m5 0h1m3 0h1m1 0h1m3 0h1m3 0h1m13 0h1m5 0h2m5 0h1M0 107.5h1m6 0h2m12 0h1m3 0h1m7 0h1m1 0h1m3 0h2m3 0h1m5 0h2m5 0h1m2 0h1m2 0h2m6 0h1m1 0h2m2 0h1m4 0h1m6 0h1m3 0h1m4 0h1m2 0h1m2 0h2m7 0h1m2 0h1M8 108.5h1m5 0h1m1 0h1m7 0h1m1 0h3m1 0h1m1 0h2m3 0h1m5 0h1m2 0h1m7 0h1m8 0h1m12 0h2m6 0h1m3 0h1m3 0h1m1 0h1m13 0h2m2 0h1m3 0h1M2 109.5h1m16 0h1m1 0h1m4 0h1m4 0h1m1 0h1m9 0h1m11 0h1m5 0h1m1 0h1m13 0h2m3 0h1m4 0h1m10 0h1m4 0h1m3 0h1m2 0h1M0 110.5h1m1 0h1m2 0h1m6 0h1m2 0h1m3 0h1m4 0h3m1 0h1m1 0h1m1 0h2m7 0h1m15 0h1m20 0h1m5 0h1m2 0h1m2 0h2m14 0h2m1 0h1M0 111.5h2m7 0h1m3 0h1m1 0h1m13 0h1m4 0h1m2 0h1m13 0h1m2 0h1m17 0h2m7 0h1m7 0h1m9 0h1m5 0h1m1 0h1m5 0h1M0 112.5h1m13 0h1m2 0h2m6 0h2m2 0h2m7 0h1m1 0h2m4 0h1m3 0h1m9 0h1m13 0h1m2 0h1m1 0h3m4 0h1m7 0h1m6 0h1m12 0h1m1 0h1M0 113.5h1m13 0h2m13 0h1m2 0h1m1 0h1m16 0h1m1 0h1m3 0h1m1 0h1m13 0h1m3 0h2m1 0h1m1 0h1m1 0h2m6 0h2m12 0h1m4 0h1M6 114.5h1m6 0h1m1 0h1m27 0h2m4 0h1m9 0h2m1 0h1m4 0h1m3 0h1m1 0h1m6 0h1m1 0h1m3 0h1m6 0h1m1 0h1m7 0h1m7 0h1m4 0h1M5 115.5h1m1 0h1m2 0h1m12 0h1m16 0h1m2 0h1m4 0h1m1 0h1m3 0h1m1 0h1m5 0h2m2 0h1m3 0h1m7 0h1m5 0h3m12 0h1m1 0h2m10 0h1M0 116.5h2m4 0h1m1 0h1m1 0h3m4 0h1m4 0h1m4 0h1m3 0h1m4 0h2m2 0h1m6 0h1m2 0h2m3 0h1m1 0h1m6 0h1m1 0h1m4 0h1m4 0h1m5 0h1m1 0h1m11 0h1m15 0h1"/>
<path stroke="#ff8600" stroke-width="1" fill="none" d="M4 0.5h1m2 0h1m5 0h1m5 0h1m9 0h1m6 0h1m1 0h2m4 0h1m8 0h1m1 0h1m6 0h2m1 0h1m2 0h2m6 0h2m28 0h2m5 0h1M1 1.5h1m6 0h1m8 0h1m9 0h1m6 0h1m6 0h1m6 0h1m4 0h1m5 0h1m1 0h1m2 0h1m6 0h1m2 0h1m1 0h1m5 0h1m3 0h2m6 0h1m8 0h2m11 0h1M3 2.5h1m9 0h2m1 0h1m17 0h1m2 0h1m1 0h1m9 0h1m1 0h1m10 0h1m3 0h1m8 0h2m3 0h1m1 0h1m9 0h1m2 0h1m5 0h1m5 0h1M0 3.5h1m3 0h1m1 0h2m1 0h2m17 0h1m2 0h1m1 0h1m19 0h1m2 0h1m27 0h1m7 0h1m12 0h1m4 0h1m3 0h1M1 4.5h1m12 0h1m2 0h1m7 0h1m5 0h1m7 0h3m4 0h2m3 0h1m8 0h1m3 0h1m1 0h1m1 0h1m5 0h1m2 0h1m3 0h1m3 0h1m1 0h1m12 0h1m2 0h1m4 0h1M11 5.5h1m7 0h1m3 0h1m6 0h1m2 0h1m10 0h2m2 0h2m6 0h2m2 0h1m3 0h2m3 0h1m4 0h1m31 0h2m2 0h1M5 6.5h1m6 0h1m5 0h1m8 0h2m9 0h1m6 0h1m4 0h1m13 0h1m11 0h3m4 0h1m2 0h1m2 0h1M0 7.5h1m6 0h1m9 0h1m1 0h1m1 0h1m3 0h1m38 0h1m2 0h1m11 0h1m15 0h3m7 0h1m5 0h1M3 8.5h1m20 0h1m7 0h1m7 0h1m4 0h1m4 0h1m9 0h1m3 0h1m13 0h1m3 0h1m1 0h1m2 0h3m5 0h1m3 0h1M5 9.5h1m1 0h1m3 0h1m7 0h3m2 0h2m8 0h3m4 0h1m22 0h1m1 0h1m11 0h1m2 0h1m22 0h1m11 0h1M3 10.5h1m5 0h1m2 0h1m3 0h1m2 0h1m14 0h1m1 0h1m6 0h1m4 0h1m2 0h1m1 0h1m6 0h1m8 0h1m6 0h1m1 0h1m7 0h1m5 0h1m10 0h1m5 0h2m1 0h1m1 0h1M0 11.5h1m2 0h1m5 0h1m8 0h1m1 0h1m21 0h1m8 0h1m2 0h1m3 0h1m7 0h3m5 0h1m1 0h1m26 0h1m11 0h1M2 12.5h1m3 0h1m3 0h1m6 0h2m8 0h3m1 0h1m14 0h1m1 0h2m19 0h1m7 0h1m2 0h2m1 0h1m1 0h1m1 0h1m2 0h2m4 0h1m2 0h1m1 0h1m6 0h2m2 0h1m3 0h1M0 13.5h1m1 0h1m1 0h1m4 0h1m2 0h1m1 0h1m2 0h1m8 0h1m4 0h1m9 0h1m3 0h1m3 0h1m6 0h1m2 0h1m5 0h1m4 0h1m4 0h1m3 0h1m1 0h1m4 0h2m10 0h1m3 0h1m3 0h2M0 14.5h2m10 0h1m12 0h1m5 0h1m1 0h1m1 0h1m13 0h1m2 0h1m4 0h1m1 0h1m8 0h1m5 0h1m4 0h1m6 0h1m2 0h2m4 0h1m5 0h1M7 15.5h1m2 0h1m17 0h1m22 0h1m3 0h1m7 0h1m1 0h1m2 0h1m2 0h1m4 0h1m4 0h1m5 0h1m3 0h1m2 0h1m5 0h1m1 0h1m7 0h1M5 16.5h1m8 0h1m2 0h1m7 0h1m4 0h4m7 0h2m2 0h1m2 0h1m10 0h1m16 0h1m6 0h1m9 0h1m5 0h1m2 0h1M1 17.5h1m1 0h2m2 0h1m6 0h1m2 0h2m3 0h3m3 0h2m7 0h1m9 0h2m1 0h1m8 0h1m4 0h1m3 0h2m2 0h1m2 0h1m5 0h1m1 0h1m3 0h1m7 0h1m8 0h1m4 0h1m1 0h1m2 0h1M3 18.5h1m10 0h1m2 0h1m3 0h1m7 0h1m2 0h1m11 0h1m1 0h1m3 0h1m2 0h1m8 0h1m1 0h3m8 0h1m1 0h1m2 0h1m2 0h1m1 0h1m3 0h1m1 0h1m3 0h1m2 0h2m1 0h1m2 0h1m3 0h1m4 0h1M10 19.5h2m9 0h2m11 0h1m3 0h1m13 0h1m5 0h2m3 0h1m9 0h1m16 0h1m10 0h1m4 0h3m3 0h1M21 20.5h1m1 0h1m2 0h1m17 0h1m1 0h1m2 0h1m19 0h1m1 0h2m8 0h1m8 0h1m4 0h1m2 0h1m4 0h1M5 21.5h1m5 0h1m2 0h1m7 0h1m7 0h1m1 0h3m3 0h1m4 0h1m11 0h1m1 0h1m10 0h1m2 0h1m9 0h1m7 0h1m2 0h2m2 0h1m3 0h2m1 0h1m1 0h1m1 0h1m3 0h1m1 0h1M2 22.5h1m2 0h2m1 0h1m5 0h1m1 0h1m14 0h1m9 0h1m9 0h1m3 0h2m1 0h1m2 0h1m7 0h1m1 0h1m8 0h1m14 0h2M3 23.5h1m7 0h2m1 0h1m8 0h1m6 0h1m2 0h1m1 0h2m12 0h1m8 0h1m6 0h1m7 0h1m5 0h1m2 0h2m8 0h2M1 24.5h2m3 0h2m10 0h2m6 0h1m9 0h1m12 0h1m3 0h2m6 0h1m3 0h1m5 0h1m10 0h1m11 0h1m7 0h1m2 0h1m3 0h1m5 0h1M0 25.5h1m8 0h1m2 0h1m9 0h1m4 0h2m7 0h2m4 0h2m7 0h1m8 0h1m3 0h1m6 0h1m26 0h2m1 0h1m3 0h1M7 26.5h1m4 0h1m12 0h1m2 0h1m5 0h2m21 0h1m8 0h1m3 0h1m8 0h1m1 0h1m4 0h1m3 0h1m3 0h1m6 0h1m10 0h1M1 27.5h1m4 0h1m1 0h1m2 0h1m3 0h1m6 0h3m3 0h1m1 0h1m2 0h1m7 0h1m1 0h1m1 0h1m5 0h1m8 0h1m2 0h1m5 0h1m11 0h1m1 0h1m8 0h3m10 0h1m2 0h1m1 0h1M0 28.5h2m3 0h1m1 0h1m4 0h1m6 0h1m6 0h1m5 0h1m6 0h1m2 0h1m1 0h1m15 0h1m5 0h1m9 0h1m1 0h1m1 0h1m3 0h1m7 0h1m19 0h2M0 29.5h1m3 0h1m7 0h1m18 0h1m5 0h1m8 0h1m4 0h1m4 0h1m4 0h1m6 0h2m5 0h1m12 0h1m4 0h1m3 0h1m9 0h1m6 0h1M10 30.5h1m1 0h1m4 0h1m1 0h1m5 0h1m4 0h1m6 0h1m2 0h2m3 0h1m8 0h1m4 0h1m1 0h1m2 0h1m2 0h1m1 0h1m2 0h1m2 0h1m1 0h1m8 0h1m8 0h1m8 0h1m3 0h1m6 0h1M22 31.5h1m1 0h1m3 0h1m4 0h2m11 0h2m3 0h1m1 0h1m2 0h1m3 0h1m1 0h1m5 0h1m6 0h2m1 0h1m12 0h1m6 0h1m1 0h1m4 0h2m2 0h1m2 0h3M0 32.5h1m1 0h2m20 0h1m2 0h1m6 0h1m1 0h2m1 0h1m4 0h1m2 0h1m1 0h1m4 0h1m7 0h1m4 0h1m2 0h1m3 0h1m10 0h1m3 0h1m4 0h1m4 0h2m2 0h1m1 0h1m1 0h1m3 0h2M7 33.5h1m1 0h1m5 0h1m9 0h1m15 0h1m15 0h3m2 0h1m8 0h1m2 0h1m14 0h2m1 0h1m8 0h2m4 0h3M2 34.5h1m2 0h1m3 0h2m1 0h1m3 0h1m1 0h1m2 0h2m2 0h1m3 0h1m4 0h1m1 0h1m9 0h1m2 0h1m13 0h1m6 0h1m3 0h2m4 0h1m9 0h1m3 0h1m4 0h1m1 0h2m1 0h1m11 0h1M10 35.5h1m9 0h1m2 0h1m8 0h1m15 0h1m9 0h2m3 0h1m1 0h1m4 0h1m9 0h1m1 0h1m7 0h1m12 0h1M8 36.5h1m7 0h3m1 0h1m8 0h1m9 0h1m15 0h2m5 0h2m12 0h1m4 0h2m1 0h1m4 0h1m2 0h1m4 0h3m3 0h1m6 0h1m5 0h1M7 37.5h1m3 0h1m1 0h1m1 0h2m1 0h1m1 0h1m3 0h2m3 0h2m1 0h1m17 0h1m5 0h1m6 0h1m3 0h1m3 0h1m5 0h1m3 0h1m2 0h1m1 0h1m3 0h1m12 0h2m2 0h2m2 0h1M1 38.5h1m5 0h1m1 0h1m10 0h1m2 0h1m1 0h1m8 0h2m14 0h1m1 0h1m10 0h1m2 0h1m1 0h2m2 0h1m1 0h1m12 0h1m3 0h1m1 0h3M3 39.5h3m8 0h1m10 0h2m3 0h1m1 0h1m8 0h1m4 0h1m11 0h2m10 0h1m2 0h1m3 0h3m3 0h1m3 0h1m8 0h1m2 0h1m9 0h1m1 0h1m4 0h1M0 40.5h2m5 0h1m5 0h1m1 0h1m1 0h1m8 0h1m8 0h1m1 0h2m3 0h1m1 0h2m7 0h1m4 0h1m8 0h1m6 0h1m23 0h1m11 0h2M13 41.5h2m1 0h1m7 0h1m1 0h1m4 0h1m1 0h1m15 0h1m1 0h2m2 0h1m6 0h1m2 0h1m3 0h1m6 0h2m11 0h1m10 0h1m1 0h1m2 0h1m4 0h1m1 0h1M9 42.5h1m3 0h1m3 0h1m6 0h1m6 0h1m27 0h1m1 0h1m4 0h1m5 0h1m1 0h1m4 0h1m7 0h1m4 0h1m3 0h1m7 0h2m5 0h1m1 0h1m2 0h1M2 43.5h1m8 0h1m5 0h1m4 0h2m1 0h2m12 0h1m4 0h2m4 0h1m16 0h1m10 0h1m1 0h1m9 0h1m2 0h1m13 0h1m2 0h2m3 0h1M4 44.5h1m2 0h1m8 0h1m1 0h1m7 0h2m5 0h1m1 0h1m5 0h1m3 0h1m4 0h2m5 0h2m2 0h1m16 0h1m5 0h1m16 0h2m2 0h1m2 0h1m5 0h1m1 0h1M2 45.5h1m3 0h1m1 0h1m5 0h2m6 0h1m15 0h1m8 0h1m1 0h1m1 0h2m3 0h1m22 0h1m7 0h1m7 0h1m4 0h1m2 0h1m1 0h2m1 0h1M3 46.5h1m9 0h1m7 0h1m7 0h1m6 0h1m10 0h1m13 0h1m2 0h1m3 0h1m3 0h2m7 0h1m3 0h2m3 0h1m2 0h1m4 0h1m3 0h1m8 0h1M2 47.5h1m15 0h2m2 0h1m1 0h1m7 0h2m3 0h1m2 0h1m1 0h1m4 0h1m9 0h2m7 0h1m2 0h1m2 0h1m4 0h1m6 0h3m1 0h1m2 0h1m4 0h1m3 0h1m2 0h1m12 0h1M2 48.5h1m1 0h1m1 0h1m1 0h3m6 0h1m2 0h3m6 0h4m14 0h2m7 0h1m6 0h1m6 0h1m10 0h1m1 0h1m13 0h3m4 0h1m10 0h1M11 49.5h1m4 0h1m4 0h1m3 0h2m1 0h1m23 0h2m2 0h1m1 0h1m8 0h1m3 0h1m2 0h1m3 0h1m2 0h2m20 0h1m5 0h1M4 50.5h3m8 0h1m1 0h1m2 0h1m3 0h1m3 0h1m3 0h1m16 0h1m1 0h1m4 0h1m7 0h1m3 0h1m10 0h1m2 0h1m4 0h3m1 0h1m14 0h1m1 0h2M9 51.5h1m3 0h1m1 0h1m2 0h1m4 0h1m9 0h1m9 0h1m3 0h1m7 0h1m2 0h1m5 0h1m1 0h2m3 0h1m15 0h1m2 0h1m2 0h1m5 0h1m1 0h1m1 0h1m1 0h1m9 0h1M0 52.5h1m3 0h2m8 0h1m7 0h1m2 0h1m3 0h1m25 0h1m8 0h1m3 0h1m2 0h1m4 0h1m4 0h1m2 0h1m1 0h1m3 0h1m15 0h1m2 0h1M0 53.5h1m1 0h3m5 0h1m6 0h1m4 0h1m9 0h1m2 0h1m10 0h1m7 0h1m11 0h1m2 0h1m6 0h1m8 0h1m1 0h1m5 0h1m9 0h2m1 0h1m2 0h1m2 0h1M3 54.5h1m3 0h1m1 0h1m18 0h1m12 0h1m21 0h2m14 0h1m3 0h1m8 0h1m5 0h1m2 0h1m9 0h2M1 55.5h1m1 0h1m2 0h2m10 0h1m8 0h1m2 0h1m1 0h1m3 0h2m4 0h1m7 0h1m8 0h1m2 0h1m4 0h1m7 0h1m7 0h1m1 0h1m1 0h1m16 0h1m2 0h1m3 0h4M7 56.5h1m3 0h3m3 0h2m14 0h1m9 0h1m4 0h1m14 0h1m1 0h1m13 0h1m5 0h1m11 0h2m1 0h1m12 0h1M9 57.5h1m4 0h1m4 0h2m1 0h1m2 0h1m1 0h1m3 0h1m1 0h3m12 0h1m6 0h1m1 0h2m1 0h1m5 0h1m8 0h1m2 0h1m1 0h3m3 0h1m20 0h1m5 0h1m1 0h1M3 58.5h2m10 0h1m4 0h3m21 0h2m3 0h1m3 0h1m1 0h1m5 0h1m6 0h1m1 0h1m2 0h1m6 0h1m4 0h1m2 0h1m4 0h1m12 0h1m6 0h1M10 59.5h2m2 0h2m1 0h2m4 0h1m3 0h1m4 0h1m7 0h1m2 0h1m10 0h1m4 0h1m1 0h1m3 0h1m4 0h2m2 0h1m2 0h1m6 0h1m3 0h1m1 0h1m10 0h1m4 0h1m4 0h1M0 60.5h1m1 0h1m2 0h1m8 0h1m12 0h1m3 0h2m7 0h1m1 0h1m1 0h1m15 0h1m2 0h1m4 0h3m2 0h1m6 0h1m1 0h1m18 0h1m2 0h1m11 0h1M0 61.5h1m7 0h1m3 0h1m2 0h2m10 0h1m2 0h1m5 0h2m5 0h2m6 0h2m7 0h1m3 0h1m4 0h1m8 0h1m1 0h2m1 0h1m1 0h1m4 0h1m6 0h1m3 0h1m9 0h2M3 62.5h1m1 0h1m1 0h1m8 0h2m7 0h2m7 0h1m3 0h1m1 0h1m1 0h2m2 0h2m12 0h1m1 0h2m5 0h1m2 0h1m2 0h1m8 0h2m4 0h1m3 0h1m12 0h1m1 0h1m6 0h1M3 63.5h3m2 0h1m13 0h2m1 0h1m5 0h1m4 0h1m5 0h1m12 0h1m1 0h1m1 0h1m6 0h1m1 0h1m1 0h2m17 0h1m2 0h1m1 0h1m5 0h1m3 0h1m5 0h1M4 64.5h1m2 0h1m2 0h1m2 0h1m4 0h1m5 0h1m2 0h1m26 0h1m9 0h1m1 0h1m18 0h2m2 0h1m5 0h1m1 0h1m2 0h1m5 0h1m5 0h1M4 65.5h1m9 0h1m8 0h1m3 0h1m16 0h1m8 0h1m4 0h1m1 0h1m3 0h1m9 0h2m6 0h3m10 0h1m2 0h1m4 0h1m1 0h2m1 0h2m6 0h1M0 66.5h1m6 0h2m14 0h1m1 0h1m8 0h1m2 0h3m8 0h1m1 0h1m4 0h1m12 0h1m1 0h1m15 0h1m7 0h1m19 0h1M21 67.5h1m1 0h3m1 0h1m14 0h2m5 0h1m1 0h1m33 0h1m5 0h2m5 0h1m8 0h2m2 0h2M0 68.5h4m10 0h1m8 0h1m3 0h1m1 0h1m8 0h1m2 0h1m2 0h1m2 0h1m1 0h2m5 0h1m1 0h2m8 0h1m5 0h3m2 0h1m13 0h1m14 0h1m5 0h1M6 69.5h2m2 0h3m3 0h1m5 0h1m5 0h2m14 0h1m3 0h1m1 0h1m11 0h1m4 0h1m2 0h1m3 0h1m3 0h1m7 0h1m28 0h1M3 70.5h1m10 0h1m2 0h1m1 0h1m7 0h2m10 0h1m7 0h1m14 0h2m6 0h2m4 0h1m10 0h1m2 0h1m9 0h1m11 0h1m2 0h1M1 71.5h1m5 0h1m2 0h2m3 0h2m5 0h1m15 0h1m4 0h1m2 0h1m9 0h1m5 0h1m6 0h1m2 0h1m10 0h2m2 0h2m8 0h1m3 0h1m8 0h1M1 72.5h1m2 0h1m11 0h1m4 0h2m9 0h1m4 0h1m8 0h1m2 0h1m2 0h1m5 0h1m10 0h1m4 0h2m19 0h1m12 0h1m6 0h1M3 73.5h2m10 0h2m5 0h1m7 0h1m6 0h1m12 0h1m16 0h1m3 0h1m4 0h2m9 0h1m6 0h1m5 0h1m13 0h3M1 74.5h1m8 0h1m4 0h1m1 0h1m7 0h1m2 0h1m26 0h1m1 0h1m4 0h1m5 0h1m1 0h2m8 0h1m2 0h1m2 0h1m9 0h1m2 0h2m4 0h1m4 0h1m1 0h2m2 0h1M2 75.5h2m2 0h1m2 0h1m16 0h2m1 0h1m5 0h1m2 0h1m11 0h2m4 0h3m6 0h4m3 0h1m1 0h2m2 0h1m1 0h1m10 0h1m4 0h1m1 0h2m4 0h1m6 0h1m1 0h1M2 76.5h3m3 0h2m2 0h1m6 0h1m4 0h1m3 0h1m5 0h1m2 0h2m5 0h2m1 0h2m6 0h1m9 0h1m1 0h1m2 0h1m7 0h1m4 0h1m2 0h1m7 0h1m1 0h1m11 0h2M1 77.5h2m2 0h1m3 0h2m6 0h1m11 0h1m7 0h1m17 0h1m5 0h2m1 0h1m18 0h1m6 0h2m5 0h1m9 0h1M1 78.5h2m3 0h1m1 0h1m5 0h1m4 0h1m3 0h1m2 0h1m4 0h1m6 0h1m4 0h1m4 0h1m2 0h1m4 0h1m5 0h1m2 0h1m1 0h1m4 0h1m1 0h2m21 0h1m5 0h1m1 0h1m2 0h1m1 0h2M8 79.5h1m6 0h1m6 0h1m1 0h1m15 0h1m7 0h3m6 0h1m2 0h1m9 0h2m4 0h1m5 0h1m6 0h1m9 0h1m2 0h1m12 0h1M4 80.5h1m3 0h1m11 0h1m6 0h1m6 0h2m1 0h1m3 0h1m3 0h1m38 0h1m7 0h1m1 0h1m1 0h1m14 0h1M1 81.5h1m1 0h1m18 0h1m19 0h1m7 0h1m2 0h1m1 0h1m6 0h1m2 0h1m3 0h1m3 0h2m4 0h1m1 0h1m10 0h2m1 0h1m5 0h1m2 0h1m7 0h1M1 82.5h1m2 0h2m3 0h1m1 0h1m5 0h1m5 0h1m2 0h1m8 0h1m8 0h2m5 0h4m6 0h1m3 0h1m7 0h2m13 0h1m2 0h1m3 0h2m4 0h1m6 0h1m7 0h1M8 83.5h1m1 0h1m12 0h1m10 0h1m3 0h1m7 0h2m21 0h2m2 0h1m2 0h2m8 0h1m2 0h1m15 0h1m5 0h1M3 84.5h1m12 0h1m2 0h2m18 0h2m8 0h1m6 0h1m1 0h1m5 0h1m5 0h1m4 0h1m5 0h1m4 0h1m17 0h1m4 0h1m5 0h1M3 85.5h1m3 0h1m3 0h1m4 0h1m7 0h1m2 0h1m1 0h1m1 0h1m4 0h3m1 0h1m1 0h1m7 0h1m3 0h1m9 0h1m4 0h1m4 0h1m4 0h1m22 0h1M3 86.5h1m4 0h1m1 0h1m5 0h1m2 0h1m7 0h1m15 0h2m17 0h1m1 0h2m5 0h1m2 0h2m3 0h1m2 0h1m2 0h1m6 0h1m5 0h1m1 0h1m9 0h1M4 87.5h1m1 0h1m4 0h1m4 0h1m3 0h2m3 0h1m5 0h1m1 0h1m5 0h1m8 0h1m2 0h3m10 0h1m2 0h1m2 0h1m18 0h1m1 0h1m1 0h1m4 0h1m1 0h2m5 0h1m1 0h1m6 0h1M2 88.5h1m4 0h1m10 0h1m1 0h1m3 0h1m15 0h1m3 0h1m5 0h1m4 0h1m6 0h1m4 0h1m2 0h1m7 0h1m4 0h1m12 0h1M1 89.5h1m4 0h1m1 0h1m1 0h1m5 0h1m14 0h2m2 0h1m9 0h2m1 0h3m1 0h2m3 0h1m7 0h1m3 0h4m13 0h1m5 0h1m6 0h1m1 0h1m1 0h1M4 90.5h1m5 0h1m4 0h1m35 0h1m3 0h1m1 0h1m1 0h1m5 0h1m6 0h1m10 0h3m1 0h2m3 0h1m8 0h1m2 0h1m8 0h1M3 91.5h1m1 0h1m4 0h1m1 0h1m12 0h1m12 0h1m14 0h1m12 0h2m4 0h1m5 0h1m2 0h1m1 0h1m5 0h1m2 0h2m3 0h1m5 0h1m3 0h1M1 92.5h1m8 0h2m6 0h1m5 0h1m6 0h2m1 0h1m3 0h1m2 0h1m4 0h1m11 0h1m12 0h1m8 0h1m4 0h1m4 0h1m1 0h3m15 0h1m1 0h1m3 0h1M0 93.5h2m6 0h1m1 0h1m3 0h1m3 0h1m7 0h1m8 0h1m3 0h1m1 0h1m2 0h1m5 0h1m2 0h1m4 0h1m3 0h4m9 0h1m4 0h1m7 0h2m4 0h1m5 0h1m3 0h2m1 0h1m1 0h1M2 94.5h1m1 0h1m1 0h1m2 0h1m5 0h1m10 0h1m2 0h1m23 0h1m4 0h1m3 0h1m3 0h1m1 0h3m1 0h2m1 0h1m2 0h1m6 0h3m2 0h1m6 0h1m12 0h1M2 95.5h1m6 0h1m4 0h1m8 0h1m1 0h1m5 0h1m20 0h1m1 0h1m3 0h2m1 0h1m2 0h1m2 0h3m5 0h2m9 0h1m11 0h1m4 0h1m1 0h2m7 0h1M9 96.5h1m2 0h1m4 0h1m3 0h1m5 0h1m2 0h1m7 0h1m6 0h3m2 0h1m2 0h1m5 0h3m20 0h1m2 0h2m5 0h1m1 0h3m6 0h1M3 97.5h1m1 0h1m20 0h2m7 0h1m2 0h1m1 0h1m3 0h1m11 0h1m26 0h1m2 0h1m18 0h1m5 0h2M9 98.5h1m1 0h1m4 0h1m6 0h1m4 0h1m11 0h1m3 0h1m4 0h1m6 0h1m2 0h2m5 0h1m5 0h2m5 0h1m10 0h1m6 0h1m6 0h1M8 99.5h1m9 0h1m14 0h1m1 0h1m1 0h1m15 0h1m4 0h1m7 0h1m8 0h1m2 0h1m7 0h1m1 0h1m2 0h1m12 0h1m1 0h1m5 0h1m2 0h1M7 100.5h1m1 0h1m1 0h1m3 0h1m4 0h1m10 0h2m2 0h1m1 0h3m5 0h1m16 0h1m8 0h1m4 0h1m2 0h1m2 0h2m1 0h1m3 0h1m12 0h2M0 101.5h1m3 0h1m3 0h1m2 0h1m6 0h2m11 0h1m3 0h1m2 0h1m1 0h2m2 0h3m3 0h1m4 0h1m2 0h1m16 0h1m2 0h1m21 0h1m9 0h2m3 0h1M3 102.5h2m1 0h1m2 0h1m2 0h1m14 0h1m9 0h1m4 0h1m8 0h1m2 0h1m4 0h1m17 0h1m2 0h1m4 0h1m19 0h1m2 0h1M7 103.5h1m11 0h1m5 0h2m2 0h1m1 0h1m5 0h2m5 0h1m10 0h1m9 0h1m3 0h1m1 0h1m6 0h1m3 0h1m14 0h1m14 0h1m2 0h1M2 104.5h1m3 0h2m31 0h1m1 0h1m4 0h1m5 0h1m3 0h1m2 0h1m2 0h1m8 0h1m1 0h2m9 0h1m3 0h1m2 0h1m4 0h1m2 0h1m3 0h1m5 0h1M1 105.5h1m3 0h1m1 0h1m2 0h3m3 0h1m5 0h1m4 0h3m8 0h2m2 0h1m5 0h1m1 0h1m2 0h2m24 0h1m2 0h1m4 0h1m5 0h1m4 0h1m10 0h1m6 0h1M6 106.5h1m5 0h1m1 0h2m9 0h1m16 0h2m15 0h1m1 0h2m2 0h1m4 0h1m2 0h1m1 0h1m1 0h1m1 0h1m16 0h1m1 0h1m11 0h1M2 107.5h1m2 0h1m3 0h2m8 0h1m6 0h1m7 0h1m12 0h1m24 0h1m2 0h1m2 0h3m13 0h1m1 0h1m5 0h1m5 0h1M19 108.5h1m5 0h1m12 0h1m12 0h1m1 0h1m16 0h1m1 0h1m1 0h1m10 0h1m3 0h1m7 0h2m2 0h2m7 0h1m2 0h2M1 109.5h1m14 0h1m3 0h1m1 0h1m1 0h2m6 0h1m2 0h4m21 0h1m7 0h1m5 0h1m4 0h1m6 0h1m3 0h1m3 0h3m3 0h1m4 0h1m10 0h1M3 110.5h2m1 0h1m1 0h2m19 0h1m4 0h2m3 0h1m5 0h1m2 0h1m20 0h1m2 0h2m9 0h1m2 0h1m6 0h1m7 0h1m6 0h1M3 111.5h2m3 0h1m1 0h1m3 0h1m9 0h2m14 0h1m3 0h1m15 0h1m3 0h1m6 0h1m2 0h2m2 0h3m5 0h1m9 0h2m3 0h1m2 0h1m5 0h2m3 0h2M2 112.5h3m1 0h1m6 0h1m17 0h1m3 0h2m2 0h1m5 0h1m5 0h1m6 0h1m6 0h2m4 0h3m2 0h1m13 0h2m6 0h1m1 0h1m3 0h1m3 0h1M2 113.5h1m3 0h1m15 0h1m13 0h1m3 0h1m1 0h1m12 0h1m6 0h1m2 0h1m5 0h1m9 0h1m4 0h1m14 0h1m3 0h1m3 0h2m4 0h1M7 114.5h2m1 0h2m7 0h2m9 0h1m4 0h1m2 0h1m1 0h1m1 0h1m15 0h1m2 0h1m7 0h1m5 0h1m8 0h1m13 0h1m2 0h1m5 0h1m4 0h1m2 0h1M0 115.5h2m2 0h1m8 0h1m5 0h1m5 0h1m2 0h1m3 0h3m6 0h1m7 0h1m3 0h1m22 0h1m2 0h1m7 0h1m2 0h1m3 0h1m8 0h1m7 0h1M14 116.5h1m9 0h2m7 0h2m3 0h1m2 0h1m6 0h1m3 0h1m5 0h1m2 0h1m1 0h1m4 0h1m3 0h1m4 0h2m6 0h1m9 0h1m11 0h2m1 0h1"/>
<path stroke="#ffb100" stroke-width="1" fill="none" d="M6 0.5h1m24 0h1m13 0h1m11 0h1m15 0h1m20 0h1m5 0h2m6 0h3M11 1.5h1m3 0h1m8 0h1m3 0h1m1 0h1m27 0h1m1 0h1m4 0h1m41 0h1m3 0h1m1 0h1M5 2.5h1m1 0h1m4 0h1m4 0h1m22 0h1m16 0h1m2 0h2m19 0h1m6 0h1m9 0h1m9 0h2m2 0h1m2 0h1M26 3.5h2m4 0h1m5 0h1m6 0h1m2 0h1m1 0h1m9 0h1m12 0h1m13 0h1m7 0h1m12 0h2m6 0h1M0 4.5h1m6 0h1m2 0h1m2 0h1m1 0h1m18 0h1m15 0h1m3 0h1m16 0h1m12 0h1m17 0h1m3 0h2m1 0h1M7 5.5h1m1 0h1m15 0h2m16 0h1m10 0h1m6 0h2m9 0h2m2 0h2m12 0h1m22 0h1M23 6.5h1m5 0h1m3 0h1m12 0h1m1 0h1m8 0h2m3 0h1m4 0h1m14 0h1m33 0h1M1 7.5h2m5 0h1m20 0h1m2 0h1m2 0h1m3 0h1m21 0h1m36 0h1m4 0h2m1 0h1m2 0h1m4 0h1M1 8.5h2m4 0h1m2 0h1m6 0h1m15 0h1m2 0h1m6 0h1m8 0h1m1 0h1m6 0h1m13 0h1m7 0h1m7 0h3m15 0h1M12 9.5h1m10 0h1m3 0h1m1 0h1m10 0h1m5 0h1m1 0h1m2 0h1m20 0h2m6 0h1m1 0h2m11 0h1m6 0h1m8 0h1M17 10.5h1m7 0h1m5 0h1m1 0h1m5 0h2m16 0h1m1 0h1m21 0h1M1 11.5h1m3 0h1m6 0h1m14 0h1m3 0h1m3 0h2m9 0h1m5 0h1m3 0h1m22 0h1m11 0h2m3 0h1m11 0h1m2 0h2M1 12.5h1m1 0h1m17 0h1m2 0h1m10 0h1m8 0h1m2 0h1m11 0h1m12 0h1m1 0h1m1 0h1m29 0h1M7 13.5h1m10 0h1m11 0h1m2 0h2m7 0h1m17 0h1m1 0h1m15 0h1M3 14.5h1m6 0h1m2 0h1m7 0h1m4 0h2m13 0h1m14 0h1m10 0h1m7 0h1m1 0h1m27 0h1m4 0h1m3 0h1M16 15.5h1m6 0h1m2 0h1m2 0h1m2 0h2m13 0h1m10 0h1m2 0h1m2 0h1m8 0h1m18 0h1m2 0h2m8 0h1m6 0h1m2 0h1M0 16.5h1m2 0h1m4 0h1m6 0h1m20 0h1m23 0h1m9 0h2m1 0h1m1 0h1m4 0h1m24 0h1m3 0h1M12 17.5h1m20 0h1m5 0h1m9 0h1m7 0h1m4 0h1m39 0h1m2 0h2M7 18.5h1m22 0h1m3 0h1m1 0h1m5 0h1m8 0h1m15 0h1m2 0h1m1 0h1m1 0h1m6 0h1m10 0h1m10 0h1M8 19.5h1m17 0h1m3 0h2m7 0h2m2 0h1m1 0h1m9 0h1m4 0h1m1 0h1m15 0h1m4 0h1m5 0h1m6 0h1M2 20.5h1m7 0h1m16 0h1m5 0h1m2 0h1m1 0h1m4 0h1m1 0h1m12 0h1m16 0h1m6 0h1m17 0h1m4 0h1m1 0h1M8 21.5h1m4 0h1m4 0h1m1 0h1m14 0h1m3 0h1m16 0h1m1 0h1m11 0h1M24 22.5h1m3 0h1m6 0h1m12 0h2m4 0h1m31 0h1m1 0h1m1 0h1m6 0h1m1 0h1m11 0h1M15 23.5h1m1 0h1m3 0h1m24 0h1m4 0h1m16 0h1m1 0h1m5 0h2m9 0h1m8 0h1m3 0h2m6 0h1M5 24.5h1m2 0h1m12 0h1m8 0h1m2 0h1m21 0h1m17 0h1m15 0h1m10 0h1m7 0h1m4 0h1M4 25.5h1m2 0h1m5 0h1m2 0h1m2 0h1m10 0h1m9 0h1m12 0h1m9 0h1m10 0h1m1 0h1m6 0h1m1 0h1M5 26.5h1m17 0h1m14 0h1m4 0h1m3 0h2m10 0h1m3 0h1m13 0h1M20 27.5h1m13 0h1m1 0h1m16 0h1m1 0h1m3 0h1m5 0h1m1 0h1m5 0h1m1 0h1m21 0h3m3 0h1M27 28.5h1m9 0h1m68 0h2M2 29.5h1m10 0h1m1 0h2m9 0h1m15 0h2m8 0h2m4 0h1m8 0h1m12 0h2m12 0h1m9 0h1M7 30.5h1m3 0h1m1 0h1m8 0h2m8 0h1m30 0h1m1 0h1m27 0h1m6 0h1m4 0h2m3 0h2M7 31.5h1m6 0h1m3 0h1m16 0h1m38 0h1m18 0h1m2 0h1M11 32.5h1m9 0h1m1 0h1m2 0h1m6 0h1m7 0h1m3 0h2m17 0h1m4 0h1m21 0h1m1 0h1M3 33.5h1m8 0h1m4 0h1m8 0h1m16 0h1m1 0h1m15 0h1m4 0h1m13 0h1m17 0h1M6 34.5h2m6 0h2m8 0h1m18 0h1m3 0h1m7 0h1m22 0h1m9 0h1m2 0h1m20 0h1M28 35.5h1m28 0h1m18 0h1m10 0h1m10 0h1m9 0h2m3 0h1M1 36.5h1m3 0h1m25 0h1m8 0h1m3 0h1m16 0h1m7 0h1m13 0h1m9 0h1m12 0h1m4 0h1M0 37.5h1m4 0h2m10 0h1m22 0h1m13 0h1m2 0h1m1 0h1m8 0h1m10 0h1m7 0h2m10 0h1m1 0h2m6 0h1M3 38.5h1m18 0h1m3 0h2m17 0h1m7 0h1m10 0h2m5 0h1m24 0h1M7 39.5h1m2 0h1m42 0h1m2 0h1m11 0h2m2 0h1m1 0h1m7 0h1m1 0h1m1 0h1m2 0h2m3 0h1M5 40.5h1m8 0h1m6 0h2m7 0h1m9 0h2m5 0h1m4 0h1m3 0h1m4 0h2m5 0h1m8 0h1m7 0h1m3 0h1m11 0h1m5 0h1m6 0h1m1 0h1M5 41.5h1m21 0h2m3 0h1m13 0h1m6 0h1m14 0h1m18 0h1m8 0h1m4 0h1m5 0h1M5 42.5h1m2 0h1m1 0h1m15 0h1m11 0h1m6 0h1m4 0h1m3 0h1m2 0h1m18 0h1m4 0h1m9 0h1m3 0h1m1 0h2m1 0h1m5 0h1M7 43.5h1m2 0h1m7 0h1m1 0h1m9 0h1m25 0h1m11 0h1m7 0h1m10 0h3m26 0h1M43 44.5h1m10 0h2m3 0h1m20 0h1m1 0h1m2 0h1M5 45.5h1m19 0h1m7 0h1m16 0h1m33 0h1m11 0h3m3 0h1M1 46.5h1m2 0h1m11 0h1m5 0h1m4 0h2m5 0h1m8 0h1m1 0h1m10 0h5m21 0h1m4 0h1m11 0h2m3 0h1m2 0h1m2 0h1m2 0h2M10 47.5h1m3 0h1m5 0h1m13 0h1m8 0h1m2 0h1m2 0h1m1 0h1m1 0h2m7 0h1m5 0h1m9 0h1m15 0h1m3 0h1M12 48.5h1m29 0h1m25 0h1m3 0h1m1 0h1m13 0h1M3 49.5h1m8 0h1m5 0h1m8 0h1m6 0h1m1 0h1m8 0h1m3 0h1m22 0h1m13 0h1m7 0h1m12 0h2m2 0h1m2 0h1M19 50.5h1m1 0h1m11 0h2m2 0h1m1 0h1m18 0h1m6 0h1m5 0h1m8 0h1m5 0h1m16 0h1M4 51.5h1m1 0h1m12 0h2m30 0h1m4 0h1m6 0h1m4 0h1m5 0h1m5 0h1m11 0h1m5 0h1m1 0h1m13 0h1M12 52.5h1m3 0h1m14 0h1m6 0h2m14 0h1m7 0h2m11 0h1m15 0h1m11 0h1m3 0h1m8 0h1M7 53.5h1m3 0h1m11 0h2m25 0h1m4 0h1m1 0h2m3 0h2m7 0h1m2 0h1m22 0h1m12 0h1m3 0h1m1 0h1M8 54.5h1m9 0h1m2 0h1m22 0h1m1 0h1m2 0h1m7 0h1m23 0h1m2 0h1m2 0h1m6 0h1m4 0h1m2 0h1m1 0h1m9 0h1M8 55.5h1m15 0h1m13 0h2m12 0h1m3 0h1m1 0h1m10 0h1m2 0h1m1 0h1m9 0h1m5 0h1m19 0h1M15 56.5h1m8 0h1m2 0h1m2 0h3m2 0h1m20 0h1m4 0h1m2 0h1m10 0h1m1 0h1m8 0h1m5 0h1m14 0h1m3 0h2M40 57.5h1m12 0h1m22 0h1m13 0h1m1 0h1m19 0h1M0 58.5h3m16 0h1m6 0h1m5 0h1m1 0h1m27 0h2m8 0h1m22 0h1m19 0h1M0 59.5h1m4 0h1m20 0h1m2 0h1m6 0h1m1 0h1m5 0h1m8 0h1m25 0h1m5 0h3m10 0h1m5 0h2M7 60.5h2m1 0h1m7 0h1m4 0h1m12 0h1m14 0h1m6 0h1m13 0h1m25 0h1m3 0h1m11 0h2M4 61.5h1m2 0h1m1 0h1m9 0h1m9 0h1m1 0h1m7 0h1m1 0h1m5 0h1m25 0h1m15 0h1m14 0h1m10 0h1M19 62.5h1m11 0h1m1 0h1m3 0h1m6 0h2m2 0h1m5 0h1m3 0h1m21 0h1m6 0h1m10 0h1m5 0h1M12 63.5h1m2 0h2m4 0h1m13 0h1m11 0h2m7 0h1m5 0h1m19 0h2m2 0h2m5 0h1m13 0h1m5 0h1M35 64.5h1m16 0h1m15 0h1m2 0h2m10 0h2m5 0h1m1 0h1m22 0h1M6 65.5h1m1 0h1m2 0h1m17 0h2m10 0h1m8 0h1m10 0h1m3 0h1m23 0h1m7 0h1m6 0h1m9 0h1M2 66.5h1m28 0h1m8 0h1m3 0h1m19 0h1m4 0h1m4 0h1m12 0h1m2 0h1m5 0h1M0 67.5h1m2 0h1m10 0h1m1 0h1m11 0h1m10 0h1m7 0h1m16 0h1m5 0h1m31 0h2m5 0h1M6 68.5h1m4 0h2m6 0h1m1 0h1m17 0h1m14 0h1m23 0h1m2 0h1m8 0h1m6 0h1m5 0h1m6 0h1m4 0h1M4 69.5h1m26 0h1m1 0h1m20 0h1m1 0h1m4 0h1m1 0h1m7 0h2m8 0h1m9 0h1m2 0h2m8 0h1m9 0h1m1 0h1M4 70.5h1m10 0h1m4 0h1m2 0h1m27 0h1m2 0h1m2 0h1m6 0h1m14 0h1m3 0h2m29 0h1M12 71.5h1m48 0h1m12 0h2m26 0h1m5 0h1m7 0h1M9 72.5h1m3 0h1m6 0h1m7 0h1m2 0h1m7 0h1m7 0h2m1 0h1m2 0h1m1 0h1m1 0h1m3 0h1m5 0h1m5 0h1m17 0h1m10 0h1m4 0h1M6 73.5h1m11 0h1m14 0h1m1 0h1m7 0h1m7 0h1m7 0h1m8 0h1m10 0h1m1 0h1m16 0h1m6 0h1m2 0h1M4 74.5h2m16 0h1m15 0h1m5 0h1m7 0h1m10 0h1m23 0h1m10 0h1m3 0h1m1 0h1M4 75.5h1m12 0h1m5 0h1m10 0h1m35 0h1m5 0h1m4 0h2m4 0h1m1 0h1m12 0h1m5 0h1m5 0h2M15 76.5h1m4 0h1m15 0h1m23 0h1m12 0h1m3 0h1m1 0h1m2 0h1m7 0h1m6 0h1m7 0h1m7 0h1M12 77.5h2m5 0h1m23 0h1m6 0h1m2 0h1m2 0h1m2 0h1m6 0h1m22 0h1m9 0h1m15 0h1M3 78.5h1m41 0h1m17 0h2m11 0h1m7 0h1m27 0h2M6 79.5h2m3 0h1m4 0h1m1 0h1m23 0h1m2 0h1m20 0h1m7 0h1m3 0h1m13 0h1m2 0h1m5 0h1m8 0h1M0 80.5h1m2 0h1m11 0h1m22 0h1m4 0h1m26 0h1m1 0h1m3 0h1m5 0h1m2 0h1m1 0h1m26 0h1M5 81.5h1m12 0h1m2 0h1m14 0h1m1 0h1m32 0h1m8 0h1m2 0h1m1 0h1m1 0h1m20 0h1m2 0h1M21 82.5h1m3 0h1m8 0h1m2 0h1m3 0h1m15 0h1m6 0h1m20 0h1M2 83.5h1m1 0h1m7 0h1m2 0h1m1 0h2m23 0h3m10 0h1m3 0h1m3 0h2m1 0h1m11 0h1m34 0h1M15 84.5h1m2 0h1m3 0h1m1 0h1m1 0h1m7 0h1m12 0h1m3 0h1m7 0h1m5 0h1m5 0h2m14 0h1m7 0h1m1 0h1m2 0h1m7 0h1M0 85.5h1m5 0h1m2 0h1m13 0h1m4 0h1m12 0h1m7 0h1m1 0h3m6 0h1m9 0h1m4 0h1m2 0h1m27 0h2m1 0h1M0 86.5h1m16 0h2m3 0h1m1 0h1m7 0h1m2 0h1m6 0h1m13 0h1m15 0h1m16 0h1m1 0h1m7 0h1m12 0h1M1 87.5h1m6 0h1m9 0h1m18 0h1m8 0h1m7 0h1m2 0h2m1 0h1m17 0h1m5 0h1m2 0h1m7 0h1M21 88.5h1m3 0h1m17 0h1m12 0h2m1 0h1m5 0h1m6 0h1m6 0h1m17 0h1m3 0h1m4 0h4m3 0h1M0 89.5h1m22 0h1m3 0h1m1 0h1m7 0h1m4 0h1m20 0h1m4 0h1m4 0h1m5 0h1m20 0h1m15 0h1M7 90.5h1m3 0h2m4 0h1m5 0h1m4 0h1m6 0h1m1 0h1m4 0h1m4 0h1m10 0h1m4 0h2m2 0h1m8 0h1m1 0h1m15 0h1m7 0h1M20 91.5h1m22 0h1m13 0h1m5 0h1m26 0h1m11 0h1m1 0h1m3 0h1M6 92.5h1m12 0h1m7 0h1m14 0h2m9 0h1m11 0h3m5 0h1m1 0h1m2 0h1m4 0h1m7 0h1m4 0h1m1 0h1m5 0h1m2 0h1M15 93.5h1m11 0h1m15 0h1m15 0h1m11 0h1m5 0h1m23 0h1m14 0h1M3 94.5h1m3 0h1m8 0h1m6 0h1m1 0h1m6 0h1m1 0h1m1 0h1m5 0h1m5 0h1m1 0h1m9 0h1m38 0h1m13 0h1M4 95.5h1m7 0h1m6 0h1m2 0h1m4 0h1m4 0h1m1 0h1m10 0h1m20 0h1m7 0h1m10 0h1M2 96.5h1m13 0h1m2 0h1m4 0h1m3 0h1m4 0h2m2 0h1m20 0h1m8 0h1m8 0h1m30 0h2M0 97.5h2m2 0h1m7 0h2m14 0h1m2 0h1m22 0h1m10 0h1m24 0h1m5 0h1m12 0h1M6 98.5h1m1 0h1m16 0h1m15 0h1m29 0h1m15 0h1m3 0h1m10 0h1m2 0h1m3 0h1M2 99.5h1m2 0h1m4 0h1m11 0h1m5 0h2m9 0h1m5 0h1m4 0h1m12 0h1m1 0h1m5 0h2m1 0h1m2 0h1m18 0h1M10 100.5h1m14 0h1m4 0h1m3 0h1m1 0h1m33 0h1m1 0h1m8 0h1m16 0h1m5 0h1m8 0h2M21 101.5h1m1 0h1m10 0h1m4 0h1m31 0h1m16 0h1m10 0h1m16 0h1M1 102.5h2m14 0h1m2 0h1m1 0h2m1 0h1m2 0h1m26 0h1m6 0h1m11 0h1m3 0h1m3 0h1m6 0h1m16 0h1m2 0h1M1 103.5h1m10 0h1m26 0h1m1 0h1m10 0h1m7 0h1m14 0h2m23 0h1m8 0h1m3 0h2m1 0h1M4 104.5h1m8 0h1m7 0h1m6 0h1m3 0h1m3 0h1m14 0h1m3 0h1m5 0h1m4 0h1m11 0h1m4 0h1m27 0h1m1 0h1M17 105.5h1m2 0h1m11 0h2m11 0h1m10 0h1m8 0h1m6 0h1m11 0h1m22 0h1m2 0h1m2 0h1M18 106.5h1m9 0h2m5 0h1m12 0h1m5 0h1m13 0h1m14 0h2m19 0h1m4 0h1m2 0h1m3 0h1M4 107.5h1m1 0h1m11 0h1m1 0h1m8 0h1m26 0h1m13 0h1m15 0h1m1 0h1m6 0h1m15 0h1M2 108.5h1m14 0h1m21 0h1m1 0h1m16 0h1m6 0h3m23 0h1m3 0h2m3 0h1M3 109.5h3m1 0h1m3 0h1m33 0h1m6 0h1m14 0h1m1 0h2m38 0h1m1 0h2m1 0h1M27 110.5h1m8 0h1m3 0h1m1 0h1m1 0h1m9 0h1m1 0h1m14 0h1m10 0h1m5 0h1m9 0h2m3 0h1m6 0h2M5 111.5h1m6 0h1m7 0h1m6 0h1m3 0h1m9 0h2m3 0h1m2 0h2m1 0h2m7 0h1m3 0h1m16 0h1m1 0h1m15 0h1m8 0h1m4 0h1M10 112.5h2m30 0h1m26 0h2m13 0h1m11 0h1M3 113.5h2m4 0h2m6 0h1m5 0h2m6 0h1m16 0h1m5 0h1m3 0h1m1 0h1m2 0h1m4 0h1m3 0h1m34 0h1M18 114.5h1m6 0h1m6 0h2m5 0h1m10 0h1m2 0h1m2 0h1m32 0h1m6 0h1m3 0h1m3 0h1m1 0h1m1 0h1m1 0h1m2 0h1M3 115.5h1m8 0h1m4 0h1m8 0h1m4 0h1m3 0h2m1 0h1m3 0h1m14 0h1m13 0h1m19 0h1m1 0h1m2 0h1m10 0h1m7 0h1M2 116.5h1m12 0h1m10 0h1m17 0h1m14 0h1m29 0h2m10 0h2m12 0h1"/>
<path stroke="#ffdc00" stroke-width="1" fill="none" d="M80 0.5h1M2 1.5h1m4 0h1m15 0h1m56 0h1m21 0h1M30 2.5h1m5 0h1m13 0h1m16 0h1m6 0h1m29 0h1m6 0h1M13 3.5h1m50 0h1m6 0h1m6 0h1m18 0h1m13 0h2M36 4.5h1m32 0h1m13 0h1m6 0h1m2 0h1m7 0h1m9 0h1M3 5.5h2m36 0h1m5 0h1m33 0h1m17 0h1m8 0h1M7 6.5h1m11 0h1m48 0h1m5 0h1M37 7.5h2m12 0h1m1 0h1m4 0h1m1 0h1m15 0h1m23 0h1m9 0h1M39 8.5h1m1 0h1m4 0h1m39 0h1m16 0h1m8 0h1M61 9.5h1m25 0h1M6 10.5h2m2 0h1m26 0h1m18 0h1m6 0h2m10 0h1m1 0h1m9 0h2m19 0h1m6 0h1M21 11.5h1m58 0h1m7 0h1m6 0h1M9 12.5h1m28 0h1m17 0h2m17 0h1m21 0h1m9 0h1M6 13.5h1m48 0h1m2 0h1m30 0h1m13 0h1M24 14.5h1m3 0h1m7 0h1m9 0h2m16 0h1m11 0h1m17 0h1m4 0h1m6 0h1M45 15.5h1m7 0h1m13 0h1m1 0h1m44 0h1M21 16.5h2m30 0h1m8 0h1m1 0h1m7 0h1m5 0h1M9 17.5h1m25 0h1m4 0h1m5 0h1m18 0h1m12 0h1m7 0h1m5 0h2m5 0h2M24 18.5h1m1 0h1m4 0h1m8 0h1m28 0h1m36 0h1M1 19.5h2m66 0h1m5 0h1m3 0h1m1 0h1m27 0h1m4 0h1m1 0h1M0 20.5h1m2 0h1m5 0h1m19 0h1m1 0h1m8 0h1m12 0h1m13 0h1m23 0h1M3 21.5h2m5 0h1m18 0h1m24 0h1m4 0h1m4 0h1m1 0h2m4 0h1m5 0h1m1 0h1m3 0h1M1 22.5h1m7 0h1m2 0h1m9 0h1m10 0h1m4 0h1m8 0h1m11 0h2m23 0h1M8 23.5h1m7 0h1m11 0h1m5 0h1m25 0h1m34 0h1m1 0h1m4 0h1M13 24.5h1m1 0h1M1 25.5h1m13 0h1m1 0h1m15 0h1m18 0h1m1 0h1m56 0h1M4 26.5h1m8 0h2m7 0h1m3 0h1m9 0h1m23 0h1m4 0h1m7 0h1m11 0h1m5 0h1m17 0h1M47 27.5h1m6 0h1m2 0h1m6 0h1m41 0h1m9 0h1M11 28.5h1m21 0h1m4 0h1m6 0h1m10 0h1m8 0h1m8 0h1M1 29.5h1m6 0h1m10 0h1m58 0h1m12 0h1M14 30.5h1m24 0h1m3 0h1m2 0h1m2 0h1m1 0h1m3 0h2m40 0h1m15 0h1M6 31.5h1m1 0h1m14 0h1m1 0h2m23 0h1m1 0h1m4 0h2m18 0h1M7 32.5h1m32 0h1m10 0h1m8 0h1m4 0h2m4 0h1m5 0h1m4 0h1m4 0h1M6 33.5h1m21 0h1m26 0h1m4 0h1m6 0h1m42 0h1m4 0h1M33 34.5h1m10 0h1m7 0h1m11 0h1m2 0h1m15 0h1m8 0h1M7 35.5h1m14 0h1m43 0h1m5 0h1m31 0h1m6 0h1M11 36.5h1m37 0h1m8 0h2m54 0h1M3 37.5h1m17 0h1m9 0h1m3 0h1m9 0h1m34 0h1m17 0h1M13 38.5h1m7 0h1m6 0h1m7 0h1m20 0h1m23 0h1m15 0h1m3 0h2m1 0h1m2 0h1M17 39.5h1m3 0h1m15 0h1m10 0h1m43 0h1m2 0h1m14 0h1M23 40.5h1m9 0h1m14 0h2m21 0h1m10 0h1m7 0h1m8 0h1M3 41.5h1m26 0h1m33 0h1m38 0h1M18 42.5h1m25 0h1m3 0h1m4 0h1m19 0h1m36 0h1M16 43.5h1m19 0h1m32 0h1m27 0h1M2 44.5h1m2 0h1m2 0h1m38 0h1m25 0h1m29 0h2M45 45.5h1m27 0h1m39 0h1M48 46.5h1m3 0h1m17 0h1m41 0h1M31 47.5h1m3 0h1m40 0h1m31 0h1M37 48.5h1m2 0h1m10 0h1m10 0h1m50 0h1m2 0h1M1 49.5h1m27 0h1m7 0h1m1 0h1m1 0h1m15 0h1m15 0h1m42 0h1M7 50.5h1m1 0h1m33 0h1m69 0h1M25 51.5h1m87 0h1M8 52.5h1m6 0h1m2 0h1m11 0h1m47 0h1M13 53.5h1m5 0h1m6 0h1m7 0h1m24 0h1m5 0h1m42 0h1M0 54.5h1m52 0h1m4 0h1m34 0h1m2 0h1m10 0h1m8 0h1M5 55.5h1m4 0h1m8 0h1m24 0h1m1 0h3m4 0h1m3 0h1m2 0h1m3 0h1M1 56.5h1m48 0h1m25 0h1m25 0h1M1 57.5h2m2 0h1m30 0h1m47 0h2m5 0h1m3 0h1m7 0h1m5 0h1M40 58.5h1m5 0h1m11 0h2m27 0h1m3 0h1m16 0h1M6 59.5h1m43 0h1m38 0h1m9 0h1m2 0h1M12 60.5h1m35 0h1m7 0h1m20 0h1m30 0h1m1 0h1M40 61.5h1m38 0h1m7 0h1M9 62.5h1m71 0h1m31 0h1M28 63.5h1m43 0h1m3 0h1M0 64.5h1m1 0h1m52 0h1m13 0h1m12 0h1M31 65.5h1m27 0h1m18 0h1m11 0h1m9 0h1m1 0h1m7 0h1m1 0h1M22 66.5h1m35 0h1m13 0h1m12 0h1m5 0h1m1 0h1m18 0h1M2 67.5h1m71 0h1m6 0h1m19 0h1M5 68.5h1m3 0h1m7 0h1m17 0h3m7 0h1m24 0h1m20 0h1M3 69.5h1m17 0h1m3 0h1m42 0h1m15 0h1M2 70.5h1m6 0h1m14 0h1m15 0h1m50 0h1M0 71.5h1m18 0h1m6 0h1m17 0h1m12 0h1m1 0h1m7 0h1m37 0h1M15 72.5h1m46 0h1m13 0h1m1 0h1M2 73.5h1m11 0h1m4 0h2m3 0h1m16 0h2m14 0h1m4 0h1m36 0h1m1 0h1m4 0h2M18 74.5h1m28 0h1m41 0h1M8 75.5h1m1 0h2m10 0h1m21 0h1M41 76.5h1m19 0h1m30 0h1M3 77.5h1m14 0h1m1 0h1m28 0h1m50 0h1m1 0h1m3 0h1m4 0h1M13 78.5h1m18 0h1m2 0h2m3 0h1m29 0h1m20 0h1M53 79.5h1m5 0h1M7 80.5h1m16 0h1m14 0h2m13 0h1m43 0h2m6 0h1m5 0h1M0 81.5h1m5 0h1m1 0h1m6 0h1m3 0h1m3 0h1m10 0h1m9 0h1m30 0h1m26 0h1m6 0h1M27 82.5h1m22 0h1m5 0h1m23 0h1m6 0h1m19 0h1M16 83.5h1m2 0h1m1 0h1m13 0h2m3 0h1m55 0h1m13 0h1M2 84.5h1m8 0h1m43 0h1m5 0h1m4 0h1m7 0h1m5 0h1m10 0h2m1 0h1M62 85.5h1m4 0h1m14 0h1m4 0h1m4 0h1m21 0h2M30 86.5h1m8 0h1m5 0h1m55 0h1m3 0h1M19 87.5h1m94 0h1M12 88.5h1m19 0h1m1 0h1m54 0h2m11 0h1m1 0h1M7 89.5h1m53 0h1m25 0h1m10 0h1M19 90.5h1m7 0h1m32 0h1m45 0h1m1 0h1M1 91.5h1m5 0h1m32 0h1m4 0h1m14 0h1m19 0h1m4 0h1m1 0h1m10 0h2m6 0h1m9 0h1M25 92.5h1m7 0h1m13 0h1m6 0h1m1 0h1m46 0h1M4 93.5h1m26 0h1m6 0h1m48 0h1M18 94.5h1m12 0h1m33 0h1m8 0h1m9 0h1M70 95.5h1m17 0h1m19 0h1M26 96.5h1m2 0h1m42 0h1m14 0h1M6 97.5h1m40 0h1m31 0h1M10 98.5h1m8 0h2m9 0h1m17 0h1m21 0h1m12 0h2m1 0h1M11 99.5h1m3 0h1m15 0h1m10 0h1m1 0h1m3 0h1m46 0h1m2 0h1M28 100.5h1m20 0h1m2 0h1m62 0h1M2 101.5h1m11 0h1m9 0h1m26 0h1m4 0h1m28 0h2M8 102.5h1m6 0h1m27 0h1m19 0h1m6 0h1m25 0h1M17 103.5h1m15 0h1m9 0h1m6 0h1m10 0h1m18 0h1M14 104.5h1m28 0h1m43 0h1M6 105.5h1m44 0h1m12 0h1m20 0h1m19 0h2M27 106.5h1m10 0h1m6 0h1m34 0h2m8 0h1M1 107.5h1m26 0h1m12 0h1m26 0h1m15 0h1m21 0h1M42 108.5h1m14 0h1m10 0h1m2 0h1m1 0h1m1 0h1m7 0h1m9 0h1m9 0h1M23 109.5h1m29 0h1m11 0h2m16 0h1m4 0h1m24 0h1M14 110.5h1m1 0h1m14 0h1m11 0h1m32 0h1m36 0h1M6 111.5h1m4 0h1m11 0h1m12 0h1m31 0h1m22 0h1m10 0h1M8 112.5h1m25 0h1m75 0h1M25 113.5h1m21 0h1m2 0h1m5 0h1m12 0h1m13 0h1m32 0h1M12 114.5h1m10 0h1m41 0h1m10 0h1m2 0h1m22 0h1m6 0h1M24 115.5h1m22 0h1m24 0h1m2 0h1m13 0h1m2 0h1m19 0h1m3 0h1M13 116.5h1m16 0h1m25 0h1m16 0h1m20 0h1m19 0h1"/>
<path stroke="#ffff0d" stroke-width="1" fill="none" d="M22 0.5h1m24 0h1m35 0h1M0 2.5h1M54 3.5h1M55 4.5h1m1 0h1m9 0h1m10 0h1M51 5.5h1m19 0h1m28 0h2M35 6.5h1m34 0h1m31 0h1m5 0h1M4 7.5h1m6 0h1m45 0h1m7 0h1m18 0h1M19 8.5h1m28 0h1m8 0h1m11 0h1M30 9.5h1m32 0h1m32 0h2M18 10.5h1m61 0h1M32 11.5h1m10 0h1m62 0h1M52 12.5h1m25 0h1m7 0h1M68 13.5h1M18 14.5h1m44 0h1m14 0h1M70 15.5h1m27 0h1M79 16.5h1m20 0h1m7 0h1M26 17.5h1M114 18.5h1M7 19.5h1m19 0h1m57 0h1M47 20.5h1m66 0h1M18 22.5h1m13 0h1m67 0h1M13 23.5h1m89 0h1M52 24.5h1M10 25.5h1m62 0h1m7 0h1m15 0h1M11 26.5h1m5 0h1m35 0h1M29 27.5h1m46 0h1m38 0h1M14 28.5h1m86 0h1M98 29.5h1m14 0h1M58 30.5h1M70 31.5h1m24 0h1m1 0h1M61 34.5h1m11 0h1M64 35.5h1m2 0h1m34 0h1M12 36.5h1m39 0h1m17 0h1m2 0h1M114 37.5h1M43 38.5h2m41 0h1m11 0h1M27 39.5h1M3 40.5h1m12 0h1m58 0h1m18 0h1M78 41.5h1m34 0h1M19 42.5h1m2 0h1m40 0h2m43 0h1M37 43.5h1m20 0h1M0 44.5h1m94 0h1M61 45.5h1m10 0h1m8 0h1m9 0h1m23 0h1M40 46.5h2m50 0h1m2 0h1M17 47.5h1m27 0h1M47 49.5h1m37 0h1m11 0h1M13 50.5h1m9 0h1m1 0h1m55 0h1m2 0h1M24 51.5h1m12 0h1m4 0h1m18 0h1M2 52.5h1m44 0h1m19 0h1m11 0h1M48 53.5h2m51 0h1M10 54.5h1m13 0h1m2 0h1m14 0h1m26 0h1m2 0h1m42 0h1M76 55.5h1m16 0h2m1 0h1M0 56.5h1m92 0h1M26 57.5h1m14 0h1m12 0h1M103 58.5h1M80 59.5h1m14 0h1m14 0h1M43 60.5h1m18 0h1M93 61.5h1M110 62.5h1M18 63.5h1m5 0h1m1 0h1m10 0h1m1 0h1m34 0h1M3 64.5h1m22 0h1m16 0h1m3 0h1m17 0h1m30 0h1M10 65.5h1m59 0h1M36 66.5h1m20 0h1m24 0h1M53 67.5h1m18 0h1M8 69.5h1m9 0h1m87 0h1m3 0h1M75 70.5h1m6 0h1M9 71.5h1m66 0h1m17 0h1M48 74.5h1M5 75.5h1m37 0h1M17 76.5h1m7 0h1m90 0h1M38 77.5h1m3 0h1m67 0h1M5 78.5h1m41 0h1m23 0h1m5 0h1m24 0h1M5 79.5h1m29 0h1M23 80.5h1m76 0h1m9 0h1M45 81.5h1m15 0h1m45 0h1M6 82.5h1m108 0h1M27 83.5h1m55 0h1M5 84.5h1m30 0h1M46 85.5h1m54 0h1M11 86.5h1m42 0h1m13 0h1M1 88.5h1m49 0h1m22 0h1M15 89.5h1m35 0h1m54 0h1M20 90.5h1m9 0h1m31 0h1m6 0h1m30 0h1M6 91.5h1m4 0h1m40 0h1m21 0h1m11 0h1m26 0h1m1 0h1M2 92.5h1m69 0h1m8 0h1M19 93.5h1m26 0h1M76 94.5h1m34 0h1M35 95.5h1M1 96.5h1m97 0h1M36 97.5h1m62 0h1M2 98.5h1M30 99.5h1m3 0h1m46 0h1M84 100.5h1M20 101.5h1m66 0h1m6 0h1M30 102.5h1m44 0h1M30 103.5h1m15 0h1m7 0h1m50 0h1M30 104.5h1m46 0h1m15 0h1M13 105.5h1m4 0h1m61 0h1m14 0h1M4 106.5h1m5 0h1m21 0h1M17 107.5h1m5 0h1m57 0h1m15 0h1M48 109.5h1m44 0h1m7 0h1M46 110.5h1m55 0h1m9 0h1M56 111.5h1m6 0h1M102 113.5h1M63 114.5h1m26 0h1m1 0h1M18 115.5h1M106 116.5h1m2 0h1"/>
<path stroke="#ffff4e" stroke-width="1" fill="none" d="M93 0.5h1M25 1.5h1m55 0h1m23 0h1M80 3.5h1M62 4.5h1M83 5.5h1m18 0h1M37 6.5h1M3 7.5h1m51 0h1M3 9.5h1M90 10.5h1M44 11.5h1m8 0h1M61 13.5h1M29 14.5h1M13 16.5h1m92 0h1M65 19.5h1m6 0h1M4 20.5h1m8 0h1M37 22.5h1M86 24.5h1M52 27.5h1m19 0h1M20 29.5h1M43 31.5h1M68 34.5h1M46 35.5h1M26 36.5h1M42 38.5h1M38 39.5h1m52 0h1M45 41.5h1M37 42.5h1m44 0h1M109 43.5h1M22 44.5h1M69 45.5h1M30 51.5h1m78 0h1M20 52.5h1M43 53.5h1m35 0h1M38 54.5h1m28 0h1M82 56.5h1M56 57.5h1m22 0h1M38 58.5h1M7 59.5h1m14 0h1m46 0h1M4 60.5h1M101 64.5h1M32 65.5h1M22 68.5h1M58 70.5h1M5 71.5h1m14 0h1M11 72.5h1m30 0h1m58 0h1M20 75.5h1m42 0h1m19 0h1m32 0h1M60 77.5h1M78 78.5h1M58 82.5h1M61 83.5h1M97 85.5h1M73 86.5h1M97 87.5h1M75 88.5h1M85 89.5h1M114 90.5h1M51 93.5h1M56 95.5h1M91 97.5h1M85 98.5h1M75 100.5h1M26 101.5h1M87 102.5h1m9 0h1M99 103.5h1M116 104.5h1M4 108.5h1m59 0h1M33 113.5h1M21 115.5h1m38 0h1M5 116.5h1"/>
<path stroke="#ffff8f" stroke-width="1" fill="none" d="M116 8.5h1M9 19.5h1M39 23.5h1M56 24.5h1M54 28.5h1m6 0h1M55 29.5h1M27 40.5h1M39 41.5h1M74 47.5h1M26 60.5h1M21 65.5h1M52 67.5h1M46 75.5h1M34 79.5h1M34 85.5h1M77 105.5h1m5 0h1M0 109.5h1M44 112.5h1M66 113.5h1M19 116.5h1"/>
<path stroke="#ffffd0" stroke-width="1" fill="none" d="M82 68.5h1M45 71.5h1M81 90.5h1M46 116.5h1"/>
<path stroke="#ffffff" stroke-width="1" fill="none" d="M8 72.5h1"/>
</pattern>
<linearGradient id="mg" x1="0" y1="0" x2="0" y2="1"><stop offset="0" stop-color="#fff" stop-opacity="0.85"/><stop offset="0.3" stop-color="#fff" stop-opacity="1"/><stop offset="1" stop-color="#fff" stop-opacity="0"/></linearGradient>
<mask id="mk" maskUnits="userSpaceOnUse" x="311" y="113" width="365" height="696"><rect x="311" y="113" width="365" height="696" fill="url(#mg)"/></mask>
<radialGradient id="vr" cx="0.5" cy="0.35" r="0.75" gradientTransform="translate(0.5,0.35) scale(1.9,1) translate(-0.5,-0.35)"><stop offset="0.55" stop-color="#600000" stop-opacity="0"/><stop offset="1" stop-color="#600000" stop-opacity="0.12"/></radialGradient>
<linearGradient id="cb" x1="0" y1="0" x2="0" y2="1"><stop offset="0.0000" stop-color="rgb(255,255,255)"/><stop offset="0.0312" stop-color="rgb(255,255,224)"/><stop offset="0.0625" stop-color="rgb(255,255,192)"/><stop offset="0.0938" stop-color="rgb(255,255,161)"/><stop offset="0.1250" stop-color="rgb(255,255,129)"/><stop offset="0.1562" stop-color="rgb(255,255,98)"/><stop offset="0.1875" stop-color="rgb(255,255,67)"/><stop offset="0.2188" stop-color="rgb(255,255,35)"/><stop offset="0.2500" stop-color="rgb(255,255,4)"/><stop offset="0.2812" stop-color="rgb(255,237,0)"/><stop offset="0.3125" stop-color="rgb(255,216,0)"/><stop offset="0.3438" stop-color="rgb(255,195,0)"/><stop offset="0.3750" stop-color="rgb(255,174,0)"/><stop offset="0.4062" stop-color="rgb(255,153,0)"/><stop offset="0.4375" stop-color="rgb(255,132,0)"/><stop offset="0.4688" stop-color="rgb(255,111,0)"/><stop offset="0.5000" stop-color="rgb(255,90,0)"/><stop offset="0.5312" stop-color="rgb(255,69,0)"/><stop offset="0.5625" stop-color="rgb(255,48,0)"/><stop offset="0.5938" stop-color="rgb(255,28,0)"/><stop offset="0.6250" stop-color="rgb(255,7,0)"/><stop offset="0.6562" stop-color="rgb(241,0,0)"/><stop offset="0.6875" stop-color="rgb(220,0,0)"/><stop offset="0.7188" stop-color="rgb(199,0,0)"/><stop offset="0.7500" stop-color="rgb(178,0,0)"/><stop offset="0.7812" stop-color="rgb(157,0,0)"/><stop offset="0.8125" stop-color="rgb(136,0,0)"/><stop offset="0.8438" stop-color="rgb(115,0,0)"/><stop offset="0.8750" stop-color="rgb(94,0,0)"/><stop offset="0.9062" stop-color="rgb(73,0,0)"/><stop offset="0.9375" stop-color="rgb(52,0,0)"/><stop offset="0.9688" stop-color="rgb(32,0,0)"/><stop offset="1.0000" stop-color="rgb(11,0,0)"/></linearGradient>
</defs>
<rect width="1245" height="870" fill="#fff"/>
<g font-family="Liberation Sans, sans-serif" style="font-kerning:none">
<rect x="311.0" y="113.0" width="365.0" height="696.0" fill="url(#nzB)"/>
<rect x="311.0" y="113.0" width="365.0" height="696.0" fill="url(#nzA)" mask="url(#mk)"/>
<rect x="311.0" y="113.0" width="365.0" height="696.0" fill="url(#vr)"/>
<rect x="321" y="113.0" width="1" height="348.0" fill="#ffffe8"/>
<rect x="322" y="461.0" width="1" height="348.0" fill="#ffffe8"/>
<rect x="320" y="113.0" width="1" height="348.0" fill="#ffffa0" fill-opacity="0.45"/>
<rect x="321" y="461.0" width="1" height="348.0" fill="#ffffa0" fill-opacity="0.45"/>
<rect x="392" y="113.0" width="1" height="348.0" fill="#ffffe8"/>
<rect x="392" y="461.0" width="1" height="348.0" fill="#ffffe8"/>
<rect x="391" y="113.0" width="1" height="348.0" fill="#ffffa0" fill-opacity="0.45"/>
<rect x="391" y="461.0" width="1" height="348.0" fill="#ffffa0" fill-opacity="0.45"/>
<rect x="462" y="113.0" width="1" height="348.0" fill="#ffffe8"/>
<rect x="462" y="461.0" width="1" height="348.0" fill="#ffffe8"/>
<rect x="461" y="113.0" width="1" height="348.0" fill="#ffffa0" fill-opacity="0.45"/>
<rect x="461" y="461.0" width="1" height="348.0" fill="#ffffa0" fill-opacity="0.45"/>
<rect x="532" y="113.0" width="1" height="348.0" fill="#ffffe8"/>
<rect x="532" y="461.0" width="1" height="348.0" fill="#ffffe8"/>
<rect x="531" y="113.0" width="1" height="348.0" fill="#ffffa0" fill-opacity="0.45"/>
<rect x="531" y="461.0" width="1" height="348.0" fill="#ffffa0" fill-opacity="0.45"/>
<rect x="602" y="113.0" width="1" height="348.0" fill="#ffffe8"/>
<rect x="602" y="461.0" width="1" height="348.0" fill="#ffffe8"/>
<rect x="601" y="113.0" width="1" height="348.0" fill="#ffffa0" fill-opacity="0.45"/>
<rect x="601" y="461.0" width="1" height="348.0" fill="#ffffa0" fill-opacity="0.45"/>
<line x1="494.50" y1="106.20" x2="494.50" y2="816.60" stroke="#0000ff" stroke-width="1.0"/>
<line x1="308.00" y1="461.40" x2="680.90" y2="461.40" stroke="#0000ff" stroke-width="1.0"/>
<rect x="311.0" y="113.0" width="365.0" height="696.0" fill="none" stroke="#000" stroke-width="1.7"/>
<line x1="311.08" y1="809.00" x2="311.08" y2="815.90" stroke="#000" stroke-width="1.6"/>
<text transform="translate(308.15,831.90) scale(0.9949,1)" font-size="10.60" fill="#000">0</text>
<line x1="353.58" y1="809.00" x2="353.58" y2="815.90" stroke="#000" stroke-width="1.6"/>
<text transform="translate(344.18,831.90) scale(1.0573,1)" font-size="10.60" fill="#000">250</text>
<line x1="396.08" y1="809.00" x2="396.08" y2="815.90" stroke="#000" stroke-width="1.6"/>
<text transform="translate(386.81,831.90) scale(1.0481,1)" font-size="10.60" fill="#000">500</text>
<line x1="438.58" y1="809.00" x2="438.58" y2="815.90" stroke="#000" stroke-width="1.6"/>
<text transform="translate(429.21,831.90) scale(1.0527,1)" font-size="10.60" fill="#000">750</text>
<line x1="481.08" y1="809.00" x2="481.08" y2="815.90" stroke="#000" stroke-width="1.6"/>
<text transform="translate(468.39,831.90) scale(1.0598,1)" font-size="10.60" fill="#000">1000</text>
<line x1="523.59" y1="809.00" x2="523.59" y2="815.90" stroke="#000" stroke-width="1.6"/>
<text transform="translate(510.89,831.90) scale(1.0598,1)" font-size="10.60" fill="#000">1250</text>
<line x1="566.09" y1="809.00" x2="566.09" y2="815.90" stroke="#000" stroke-width="1.6"/>
<text transform="translate(553.39,831.90) scale(1.0598,1)" font-size="10.60" fill="#000">1500</text>
<line x1="608.59" y1="809.00" x2="608.59" y2="815.90" stroke="#000" stroke-width="1.6"/>
<text transform="translate(595.89,831.90) scale(1.0598,1)" font-size="10.60" fill="#000">1750</text>
<line x1="651.09" y1="809.00" x2="651.09" y2="815.90" stroke="#000" stroke-width="1.6"/>
<text transform="translate(638.49,831.90) scale(1.0631,1)" font-size="10.60" fill="#000">2000</text>
<line x1="304.10" y1="808.91" x2="311.00" y2="808.91" stroke="#000" stroke-width="1.6"/>
<text transform="translate(290.09,812.76) scale(0.9949,1)" font-size="10.60" fill="#000">0</text>
<line x1="304.10" y1="723.91" x2="311.00" y2="723.91" stroke="#000" stroke-width="1.6"/>
<text transform="translate(277.44,727.76) scale(1.0481,1)" font-size="10.60" fill="#000">500</text>
<line x1="304.10" y1="638.91" x2="311.00" y2="638.91" stroke="#000" stroke-width="1.6"/>
<text transform="translate(270.99,642.76) scale(1.0598,1)" font-size="10.60" fill="#000">1000</text>
<line x1="304.10" y1="553.91" x2="311.00" y2="553.91" stroke="#000" stroke-width="1.6"/>
<text transform="translate(270.99,557.76) scale(1.0598,1)" font-size="10.60" fill="#000">1500</text>
<line x1="304.10" y1="468.91" x2="311.00" y2="468.91" stroke="#000" stroke-width="1.6"/>
<text transform="translate(270.92,472.76) scale(1.0631,1)" font-size="10.60" fill="#000">2000</text>
<line x1="304.10" y1="383.91" x2="311.00" y2="383.91" stroke="#000" stroke-width="1.6"/>
<text transform="translate(270.92,387.76) scale(1.0631,1)" font-size="10.60" fill="#000">2500</text>
<line x1="304.10" y1="298.91" x2="311.00" y2="298.91" stroke="#000" stroke-width="1.6"/>
<text transform="translate(271.09,302.76) scale(1.0558,1)" font-size="10.60" fill="#000">3000</text>
<line x1="304.10" y1="213.91" x2="311.00" y2="213.91" stroke="#000" stroke-width="1.6"/>
<text transform="translate(271.09,217.76) scale(1.0558,1)" font-size="10.60" fill="#000">3500</text>
<line x1="304.10" y1="128.91" x2="311.00" y2="128.91" stroke="#000" stroke-width="1.6"/>
<text transform="translate(270.98,132.76) scale(1.0603,1)" font-size="10.60" fill="#000">4000</text>
<text transform="translate(490.91,849.70) scale(0.9445,1)" font-size="11.04" fill="#000">X</text>
<text transform="translate(259.00,464.43) rotate(-90) scale(0.9312,1)" font-size="11.04" fill="#000">Y</text>
<rect x="712.0" y="113.0" width="35.0" height="696.0" fill="url(#cb)" stroke="#000" stroke-width="1.7"/>
<line x1="747.00" y1="776.00" x2="753.90" y2="776.00" stroke="#000" stroke-width="1.6"/>
<text transform="translate(761.84,779.85) scale(1.0569,1)" font-size="10.60" fill="#000">234</text>
<line x1="747.00" y1="686.00" x2="753.90" y2="686.00" stroke="#000" stroke-width="1.6"/>
<text transform="translate(761.83,689.85) scale(1.0626,1)" font-size="10.60" fill="#000">236</text>
<line x1="747.00" y1="596.00" x2="753.90" y2="596.00" stroke="#000" stroke-width="1.6"/>
<text transform="translate(761.84,599.85) scale(1.0591,1)" font-size="10.60" fill="#000">238</text>
<line x1="747.00" y1="506.00" x2="753.90" y2="506.00" stroke="#000" stroke-width="1.6"/>
<text transform="translate(761.84,509.85) scale(1.0573,1)" font-size="10.60" fill="#000">240</text>
<line x1="747.00" y1="416.00" x2="753.90" y2="416.00" stroke="#000" stroke-width="1.6"/>
<text transform="translate(761.84,419.85) scale(1.0446,1)" font-size="10.60" fill="#000">242</text>
<line x1="747.00" y1="326.00" x2="753.90" y2="326.00" stroke="#000" stroke-width="1.6"/>
<text transform="translate(761.84,329.85) scale(1.0569,1)" font-size="10.60" fill="#000">244</text>
<line x1="747.00" y1="236.00" x2="753.90" y2="236.00" stroke="#000" stroke-width="1.6"/>
<text transform="translate(761.83,239.85) scale(1.0626,1)" font-size="10.60" fill="#000">246</text>
<line x1="747.00" y1="146.00" x2="753.90" y2="146.00" stroke="#000" stroke-width="1.6"/>
<text transform="translate(761.84,149.85) scale(1.0591,1)" font-size="10.60" fill="#000">248</text>
<polyline fill="none" stroke="#0000ff" stroke-width="1.5" stroke-linejoin="miter" points="911.0,233.0 1020.2,233.0 1020.2,199.7 1025.8,199.7 1025.8,165.0 1031.3,165.0 1031.3,140.9 1036.9,140.9 1036.9,125.7 1042.5,125.7 1042.5,119.0 1048.0,119.0 1048.0,122.7 1053.6,122.7 1053.6,121.7 1059.2,121.7 1059.2,136.2 1064.8,136.2 1064.8,154.5 1070.3,154.5 1070.3,163.5 1075.9,163.5 1075.9,165.6 1081.5,165.6 1081.5,172.8 1087.0,172.8 1087.0,166.9 1092.6,166.9 1092.6,168.1 1098.2,168.1 1098.2,168.7 1103.8,168.7 1103.8,168.7 1109.3,168.7 1109.3,169.9 1114.9,169.9 1114.9,170.9 1120.5,170.9 1120.5,176.9 1126.0,176.9 1126.0,171.8 1131.6,171.8 1131.6,171.8 1137.2,171.8 1137.2,172.9 1142.7,172.9 1142.7,173.7 1148.3,173.7 1148.3,173.7 1153.9,173.7 1153.9,174.9 1159.5,174.9 1159.5,180.6 1165.0,180.6 1165.0,174.9 1170.6,174.9 1170.6,175.8 1176.2,175.8 1176.2,176.7 1181.7,176.7 1181.7,151.9 1185.0,151.9"/>
<rect x="911.0" y="113.0" width="274.0" height="120.0" fill="none" stroke="#000" stroke-width="1.7"/>
<line x1="926.10" y1="233.00" x2="926.10" y2="239.70" stroke="#000" stroke-width="1.6"/>
<text transform="translate(916.69,255.90) scale(1.0573,1)" font-size="10.60" fill="#000">200</text>
<line x1="986.40" y1="233.00" x2="986.40" y2="239.70" stroke="#000" stroke-width="1.6"/>
<line x1="1046.70" y1="233.00" x2="1046.70" y2="239.70" stroke="#000" stroke-width="1.6"/>
<text transform="translate(1037.29,255.90) scale(1.0573,1)" font-size="10.60" fill="#000">240</text>
<line x1="1107.00" y1="233.00" x2="1107.00" y2="239.70" stroke="#000" stroke-width="1.6"/>
<line x1="1167.30" y1="233.00" x2="1167.30" y2="239.70" stroke="#000" stroke-width="1.6"/>
<text transform="translate(1157.89,255.90) scale(1.0573,1)" font-size="10.60" fill="#000">280</text>
<line x1="904.10" y1="232.80" x2="911.00" y2="232.80" stroke="#000" stroke-width="1.6"/>
<text transform="translate(890.29,236.65) scale(0.9949,1)" font-size="10.60" fill="#000">0</text>
<line x1="904.10" y1="197.54" x2="911.00" y2="197.54" stroke="#000" stroke-width="1.6"/>
<text transform="translate(890.26,201.39) scale(0.9589,1)" font-size="10.60" fill="#000">2</text>
<line x1="904.10" y1="162.28" x2="911.00" y2="162.28" stroke="#000" stroke-width="1.6"/>
<text transform="translate(890.28,166.13) scale(0.9950,1)" font-size="10.60" fill="#000">4</text>
<line x1="904.10" y1="127.02" x2="911.00" y2="127.02" stroke="#000" stroke-width="1.6"/>
<text transform="translate(890.18,130.87) scale(1.0296,1)" font-size="10.60" fill="#000">6</text>
<text transform="translate(1030.63,273.60) scale(1.0657,1)" font-size="11.04" fill="#000">counts</text>
<text transform="translate(877.50,210.21) rotate(-90) scale(1.0943,1)" font-size="11.04" fill="#000">log frequency</text>
<text transform="translate(1194.30,127.76) rotate(90) scale(1.1033,1)" font-size="11.04" fill="#000">histogram (detail)</text>
<polyline fill="none" stroke="#0000ff" stroke-width="1.5" points="911.0,404.8 924.9,404.8 924.9,290.8 930.5,290.8 930.5,351.0 936.1,351.0 936.1,362.0 941.7,362.0 941.7,366.0 947.3,366.0 947.3,371.3 952.9,371.3 952.9,374.8 958.4,374.8 958.4,381.0 964.0,381.0 964.0,382.0 969.6,382.0 969.6,385.9 975.2,385.9 975.2,389.8 980.8,389.8 980.8,388.6 986.4,388.6 986.4,394.8 992.0,394.8 992.0,399.7 997.6,399.7 997.6,399.7 1003.2,399.7 1003.2,404.8 1185.0,404.8"/>
<rect x="911.0" y="285.0" width="274.0" height="119.80000000000001" fill="none" stroke="#000" stroke-width="1.7"/>
<line x1="928.60" y1="404.80" x2="928.60" y2="411.50" stroke="#000" stroke-width="1.6"/>
<text transform="translate(925.67,427.70) scale(0.9949,1)" font-size="10.60" fill="#000">0</text>
<line x1="966.02" y1="404.80" x2="966.02" y2="411.50" stroke="#000" stroke-width="1.6"/>
<line x1="1003.44" y1="404.80" x2="1003.44" y2="411.50" stroke="#000" stroke-width="1.6"/>
<text transform="translate(987.66,427.70) scale(1.0665,1)" font-size="10.60" fill="#000">20000</text>
<line x1="1040.86" y1="404.80" x2="1040.86" y2="411.50" stroke="#000" stroke-width="1.6"/>
<line x1="1078.28" y1="404.80" x2="1078.28" y2="411.50" stroke="#000" stroke-width="1.6"/>
<text transform="translate(1062.69,427.70) scale(1.0643,1)" font-size="10.60" fill="#000">40000</text>
<line x1="1115.70" y1="404.80" x2="1115.70" y2="411.50" stroke="#000" stroke-width="1.6"/>
<line x1="1153.12" y1="404.80" x2="1153.12" y2="411.50" stroke="#000" stroke-width="1.6"/>
<text transform="translate(1137.32,427.70) scale(1.0679,1)" font-size="10.60" fill="#000">60000</text>
<line x1="904.10" y1="404.80" x2="911.00" y2="404.80" stroke="#000" stroke-width="1.6"/>
<text transform="translate(890.29,408.65) scale(0.9949,1)" font-size="10.60" fill="#000">0</text>
<line x1="904.10" y1="372.34" x2="911.00" y2="372.34" stroke="#000" stroke-width="1.6"/>
<text transform="translate(890.26,376.19) scale(0.9589,1)" font-size="10.60" fill="#000">2</text>
<line x1="904.10" y1="339.88" x2="911.00" y2="339.88" stroke="#000" stroke-width="1.6"/>
<text transform="translate(890.28,343.73) scale(0.9950,1)" font-size="10.60" fill="#000">4</text>
<line x1="904.10" y1="307.42" x2="911.00" y2="307.42" stroke="#000" stroke-width="1.6"/>
<text transform="translate(890.18,311.27) scale(1.0296,1)" font-size="10.60" fill="#000">6</text>
<text transform="translate(1030.63,445.40) scale(1.0657,1)" font-size="11.04" fill="#000">counts</text>
<text transform="translate(877.50,381.80) rotate(-90) scale(1.0805,1)" font-size="11.04" fill="#000">log frequency</text>
<text transform="translate(1194.30,308.75) rotate(90) scale(1.1123,1)" font-size="11.04" fill="#000">histogram (full)</text>
<clipPath id="cp517"><rect x="911.0" y="517.0" width="274.0" height="120.0"/></clipPath>
<polyline clip-path="url(#cp517)" fill="none" stroke="#0000ff" stroke-width="1.4" stroke-linejoin="round" points="911.9,579.5 912.0,571.6 912.2,578.2 912.3,575.6 912.4,575.6 912.5,576.9 912.7,579.5 912.8,574.3 912.9,574.3 913.0,580.9 913.2,569.0 913.3,572.9 913.4,576.9 913.5,572.9 913.7,576.9 913.8,575.6 913.9,572.9 914.0,578.2 914.2,574.3 914.3,571.6 914.4,571.6 914.6,575.6 914.7,572.9 914.8,579.5 914.9,575.6 915.1,574.3 915.2,578.2 915.3,575.6 915.4,570.3 915.6,569.0 915.7,572.9 915.8,572.9 915.9,578.2 916.1,578.2 916.2,579.5 916.3,574.3 916.4,572.9 916.6,576.9 916.7,578.2 916.8,574.3 916.9,574.3 917.1,575.6 917.2,571.6 917.3,575.6 917.5,575.6 917.6,578.2 917.7,575.6 917.8,571.6 918.0,575.6 918.1,575.6 918.2,574.3 918.3,574.3 918.5,574.3 918.6,574.3 918.7,574.3 918.8,576.9 919.0,574.3 919.1,579.5 919.2,574.3 919.3,578.2 919.5,575.6 919.6,574.3 919.7,576.9 919.9,575.6 920.0,579.5 920.1,578.2 920.2,572.9 920.4,578.2 920.5,572.9 920.6,497.0 920.7,497.0 920.9,497.0 921.0,575.6 921.1,574.3 921.2,578.2 921.4,575.6 921.5,571.6 921.6,575.6 921.7,576.9 921.9,574.3 922.0,575.6 922.1,576.9 922.2,579.5 922.4,572.9 922.5,576.9 922.6,575.6 922.8,578.2 922.9,571.6 923.0,572.9 923.1,572.9 923.3,575.6 923.4,574.3 923.5,572.9 923.6,572.9 923.8,574.3 923.9,575.6 924.0,576.9 924.1,576.9 924.3,578.2 924.4,574.3 924.5,575.6 924.6,580.9 924.8,575.6 924.9,572.9 925.0,575.6 925.2,580.9 925.3,575.6 925.4,572.9 925.5,574.3 925.7,576.9 925.8,570.3 925.9,570.3 926.0,575.6 926.2,572.9 926.3,574.3 926.4,572.9 926.5,571.6 926.7,572.9 926.8,575.6 926.9,576.9 927.0,576.9 927.2,575.6 927.3,571.6 927.4,574.3 927.5,575.6 927.7,574.3 927.8,575.6 927.9,574.3 928.1,578.2 928.2,580.9 928.3,576.9 928.4,578.2 928.6,571.6 928.7,575.6 928.8,575.6 928.9,579.5 929.1,574.3 929.2,576.9 929.3,572.9 929.4,572.9 929.6,576.9 929.7,574.3 929.8,582.2 929.9,576.9 930.1,571.6 930.2,572.9 930.3,574.3 930.5,575.6 930.6,579.5 930.7,579.5 930.8,574.3 931.0,570.3 931.1,580.9 931.2,574.3 931.3,574.3 931.5,572.9 931.6,578.2 931.7,576.9 931.8,575.6 932.0,578.2 932.1,578.2 932.2,578.2 932.3,575.6 932.5,574.3 932.6,575.6 932.7,575.6 932.8,576.9 933.0,576.9 933.1,572.9 933.2,575.6 933.4,575.6 933.5,572.9 933.6,571.6 933.7,571.6 933.9,574.3 934.0,575.6 934.1,574.3 934.2,574.3 934.4,571.6 934.5,574.3 934.6,574.3 934.7,575.6 934.9,571.6 935.0,580.9 935.1,574.3 935.2,572.9 935.4,578.2 935.5,569.0 935.6,575.6 935.8,575.6 935.9,578.2 936.0,572.9 936.1,574.3 936.3,576.9 936.4,574.3 936.5,572.9 936.6,571.6 936.8,574.3 936.9,578.2 937.0,576.9 937.1,580.9 937.3,576.9 937.4,572.9 937.5,574.3 937.6,575.6 937.8,575.6 937.9,571.6 938.0,574.3 938.1,572.9 938.3,574.3 938.4,576.9 938.5,571.6 938.7,578.2 938.8,578.2 938.9,576.9 939.0,576.9 939.2,576.9 939.3,576.9 939.4,572.9 939.5,575.6 939.7,574.3 939.8,579.5 939.9,576.9 940.0,572.9 940.2,578.2 940.3,571.6 940.4,578.2 940.5,574.3 940.7,576.9 940.8,574.3 940.9,578.2 941.1,575.6 941.2,570.3 941.3,576.9 941.4,570.3 941.6,576.9 941.7,578.2 941.8,575.6 941.9,576.9 942.1,570.3 942.2,572.9 942.3,571.6 942.4,574.3 942.6,569.0 942.7,572.9 942.8,574.3 942.9,576.9 943.1,578.2 943.2,574.3 943.3,572.9 943.4,572.9 943.6,578.2 943.7,574.3 943.8,574.3 944.0,578.2 944.1,574.3 944.2,580.9 944.3,574.3 944.5,569.0 944.6,578.2 944.7,575.6 944.8,580.9 945.0,576.9 945.1,572.9 945.2,578.2 945.3,575.6 945.5,576.9 945.6,576.9 945.7,574.3 945.8,574.3 946.0,571.6 946.1,572.9 946.2,576.9 946.4,571.6 946.5,571.6 946.6,579.5 946.7,572.9 946.9,572.9 947.0,572.9 947.1,574.3 947.2,578.2 947.4,575.6 947.5,580.9 947.6,575.6 947.7,570.3 947.9,572.9 948.0,572.9 948.1,576.9 948.2,578.2 948.4,578.2 948.5,575.6 948.6,576.9 948.8,576.9 948.9,572.9 949.0,579.5 949.1,578.2 949.3,576.9 949.4,575.6 949.5,575.6 949.6,579.5 949.8,574.3 949.9,575.6 950.0,574.3 950.1,578.2 950.3,574.3 950.4,574.3 950.5,576.9 950.6,575.6 950.8,576.9 950.9,571.6 951.0,582.2 951.1,579.5 951.3,579.5 951.4,576.9 951.5,576.9 951.7,576.9 951.8,572.9 951.9,579.5 952.0,576.9 952.2,575.6 952.3,578.2 952.4,574.3 952.5,574.3 952.7,576.9 952.8,579.5 952.9,571.6 953.0,574.3 953.2,574.3 953.3,575.6 953.4,575.6 953.5,572.9 953.7,575.6 953.8,576.9 953.9,572.9 954.1,575.6 954.2,576.9 954.3,578.2 954.4,571.6 954.6,574.3 954.7,570.3 954.8,576.9 954.9,576.9 955.1,574.3 955.2,571.6 955.3,574.3 955.4,574.3 955.6,570.3 955.7,576.9 955.8,578.2 955.9,576.9 956.1,575.6 956.2,574.3 956.3,572.9 956.4,574.3 956.6,571.6 956.7,576.9 956.8,570.3 957.0,576.9 957.1,571.6 957.2,578.2 957.3,574.3 957.5,575.6 957.6,574.3 957.7,572.9 957.8,575.6 958.0,575.6 958.1,574.3 958.2,578.2 958.3,576.9 958.5,579.5 958.6,575.6 958.7,569.0 958.8,572.9 959.0,578.2 959.1,576.9 959.2,572.9 959.4,576.9 959.5,579.5 959.6,578.2 959.7,578.2 959.9,578.2 960.0,572.9 960.1,575.6 960.2,579.5 960.4,576.9 960.5,578.2 960.6,578.2 960.7,579.5 960.9,570.3 961.0,575.6 961.1,574.3 961.2,572.9 961.4,576.9 961.5,574.3 961.6,574.3 961.7,574.3 961.9,569.0 962.0,574.3 962.1,575.6 962.3,574.3 962.4,570.3 962.5,572.9 962.6,576.9 962.8,578.2 962.9,578.2 963.0,576.9 963.1,574.3 963.3,572.9 963.4,580.9 963.5,575.6 963.6,578.2 963.8,572.9 963.9,572.9 964.0,576.9 964.1,576.9 964.3,578.2 964.4,574.3 964.5,579.5 964.7,578.2 964.8,576.9 964.9,571.6 965.0,569.0 965.2,575.6 965.3,578.2 965.4,575.6 965.5,578.2 965.7,574.3 965.8,578.2 965.9,576.9 966.0,575.6 966.2,574.3 966.3,575.6 966.4,571.6 966.5,575.6 966.7,579.5 966.8,572.9 966.9,575.6 967.0,576.9 967.2,571.6 967.3,578.2 967.4,575.6 967.6,576.9 967.7,571.6 967.8,576.9 967.9,574.3 968.1,579.5 968.2,571.6 968.3,578.2 968.4,572.9 968.6,572.9 968.7,571.6 968.8,570.3 968.9,578.2 969.1,574.3 969.2,575.6 969.3,574.3 969.4,572.9 969.6,575.6 969.7,576.9 969.8,575.6 970.0,571.6 970.1,578.2 970.2,575.6 970.3,578.2 970.5,572.9 970.6,579.5 970.7,575.6 970.8,575.6 971.0,575.6 971.1,569.0 971.2,571.6 971.3,578.2 971.5,569.0 971.6,578.2 971.7,580.9 971.8,579.5 972.0,574.3 972.1,574.3 972.2,580.9 972.3,574.3 972.5,575.6 972.6,572.9 972.7,576.9 972.9,497.0 973.0,497.0 973.1,497.0 973.2,571.6 973.4,574.3 973.5,572.9 973.6,571.6 973.7,578.2 973.9,575.6 974.0,576.9 974.1,578.2 974.2,574.3 974.4,574.3 974.5,571.6 974.6,571.6 974.7,575.6 974.9,576.9 975.0,567.6 975.1,570.3 975.3,575.6 975.4,578.2 975.5,576.9 975.6,574.3 975.8,572.9 975.9,572.9 976.0,574.3 976.1,575.6 976.3,574.3 976.4,575.6 976.5,575.6 976.6,575.6 976.8,574.3 976.9,580.9 977.0,575.6 977.1,575.6 977.3,578.2 977.4,575.6 977.5,578.2 977.7,576.9 977.8,575.6 977.9,575.6 978.0,576.9 978.2,572.9 978.3,574.3 978.4,574.3 978.5,574.3 978.7,576.9 978.8,578.2 978.9,572.9 979.0,576.9 979.2,579.5 979.3,580.9 979.4,574.3 979.5,576.9 979.7,575.6 979.8,576.9 979.9,576.9 980.0,575.6 980.2,578.2 980.3,575.6 980.4,572.9 980.6,572.9 980.7,579.5 980.8,578.2 980.9,578.2 981.1,575.6 981.2,572.9 981.3,574.3 981.4,579.5 981.6,575.6 981.7,572.9 981.8,576.9 981.9,570.3 982.1,576.9 982.2,571.6 982.3,569.0 982.4,578.2 982.6,575.6 982.7,574.3 982.8,567.6 983.0,579.5 983.1,574.3 983.2,574.3 983.3,576.9 983.5,576.9 983.6,576.9 983.7,575.6 983.8,578.2 984.0,571.6 984.1,578.2 984.2,576.9 984.3,576.9 984.5,576.9 984.6,575.6 984.7,576.9 984.8,575.6 985.0,570.3 985.1,572.9 985.2,575.6 985.3,572.9 985.5,576.9 985.6,574.3 985.7,579.5 985.9,578.2 986.0,578.2 986.1,571.6 986.2,574.3 986.4,574.3 986.5,574.3 986.6,574.3 986.7,574.3 986.9,572.9 987.0,574.3 987.1,578.2 987.2,576.9 987.4,571.6 987.5,571.6 987.6,574.3 987.7,579.5 987.9,571.6 988.0,574.3 988.1,575.6 988.3,575.6 988.4,576.9 988.5,570.3 988.6,570.3 988.8,578.2 988.9,575.6 989.0,574.3 989.1,571.6 989.3,582.2 989.4,572.9 989.5,570.3 989.6,575.6 989.8,575.6 989.9,571.6 990.0,574.3 990.1,578.2 990.3,578.2 990.4,578.2 990.5,579.5 990.6,575.6 990.8,576.9 990.9,575.6 991.0,572.9 991.2,570.3 991.3,574.3 991.4,580.9 991.5,571.6 991.7,575.6 991.8,571.6 991.9,576.9 992.0,574.3 992.2,575.6 992.3,575.6 992.4,571.6 992.5,576.9 992.7,575.6 992.8,574.3 992.9,576.9 993.0,580.9 993.2,574.3 993.3,582.2 993.4,579.5 993.6,576.9 993.7,574.3 993.8,572.9 993.9,572.9 994.1,574.3 994.2,576.9 994.3,571.6 994.4,575.6 994.6,572.9 994.7,580.9 994.8,578.2 994.9,576.9 995.1,575.6 995.2,582.2 995.3,572.9 995.4,572.9 995.6,572.9 995.7,576.9 995.8,571.6 995.9,576.9 996.1,572.9 996.2,575.6 996.3,575.6 996.5,575.6 996.6,575.6 996.7,572.9 996.8,571.6 997.0,571.6 997.1,572.9 997.2,572.9 997.3,574.3 997.5,570.3 997.6,576.9 997.7,576.9 997.8,575.6 998.0,579.5 998.1,575.6 998.2,575.6 998.3,578.2 998.5,576.9 998.6,572.9 998.7,575.6 998.9,575.6 999.0,572.9 999.1,576.9 999.2,578.2 999.4,575.6 999.5,574.3 999.6,579.5 999.7,574.3 999.9,575.6 1000.0,576.9 1000.1,578.2 1000.2,575.6 1000.4,572.9 1000.5,574.3 1000.6,572.9 1000.7,576.9 1000.9,571.6 1001.0,571.6 1001.1,575.6 1001.2,582.2 1001.4,575.6 1001.5,567.6 1001.6,575.6 1001.8,578.2 1001.9,570.3 1002.0,576.9 1002.1,574.3 1002.3,572.9 1002.4,579.5 1002.5,575.6 1002.6,571.6 1002.8,575.6 1002.9,574.3 1003.0,575.6 1003.1,572.9 1003.3,570.3 1003.4,578.2 1003.5,575.6 1003.6,574.3 1003.8,576.9 1003.9,576.9 1004.0,575.6 1004.2,575.6 1004.3,576.9 1004.4,574.3 1004.5,572.9 1004.7,572.9 1004.8,572.9 1004.9,571.6 1005.0,579.5 1005.2,575.6 1005.3,574.3 1005.4,574.3 1005.5,579.5 1005.7,570.3 1005.8,578.2 1005.9,574.3 1006.0,572.9 1006.2,572.9 1006.3,576.9 1006.4,576.9 1006.5,574.3 1006.7,574.3 1006.8,572.9 1006.9,575.6 1007.1,576.9 1007.2,578.2 1007.3,570.3 1007.4,579.5 1007.6,572.9 1007.7,574.3 1007.8,572.9 1007.9,572.9 1008.1,571.6 1008.2,575.6 1008.3,574.3 1008.4,580.9 1008.6,575.6 1008.7,578.2 1008.8,575.6 1008.9,571.6 1009.1,575.6 1009.2,572.9 1009.3,575.6 1009.5,574.3 1009.6,576.9 1009.7,582.2 1009.8,576.9 1010.0,575.6 1010.1,574.3 1010.2,575.6 1010.3,575.6 1010.5,572.9 1010.6,574.3 1010.7,576.9 1010.8,572.9 1011.0,580.9 1011.1,575.6 1011.2,575.6 1011.3,571.6 1011.5,576.9 1011.6,579.5 1011.7,574.3 1011.9,570.3 1012.0,575.6 1012.1,575.6 1012.2,575.6 1012.4,575.6 1012.5,571.6 1012.6,570.3 1012.7,574.3 1012.9,575.6 1013.0,570.3 1013.1,575.6 1013.2,575.6 1013.4,575.6 1013.5,575.6 1013.6,574.3 1013.7,575.6 1013.9,574.3 1014.0,575.6 1014.1,574.3 1014.2,576.9 1014.4,575.6 1014.5,574.3 1014.6,575.6 1014.8,575.6 1014.9,571.6 1015.0,578.2 1015.1,580.9 1015.3,572.9 1015.4,575.6 1015.5,571.6 1015.6,575.6 1015.8,578.2 1015.9,569.0 1016.0,574.3 1016.1,576.9 1016.3,576.9 1016.4,574.3 1016.5,576.9 1016.6,574.3 1016.8,571.6 1016.9,579.5 1017.0,575.6 1017.2,574.3 1017.3,570.3 1017.4,572.9 1017.5,576.9 1017.7,571.6 1017.8,575.6 1017.9,575.6 1018.0,574.3 1018.2,578.2 1018.3,567.6 1018.4,571.6 1018.5,574.3 1018.7,576.9 1018.8,578.2 1018.9,574.3 1019.0,572.9 1019.2,576.9 1019.3,575.6 1019.4,574.3 1019.5,575.6 1019.7,579.5 1019.8,572.9 1019.9,574.3 1020.1,572.9 1020.2,576.9 1020.3,580.9 1020.4,578.2 1020.6,574.3 1020.7,570.3 1020.8,569.0 1020.9,574.3 1021.1,579.5 1021.2,575.6 1021.3,574.3 1021.4,574.3 1021.6,575.6 1021.7,571.6 1021.8,578.2 1021.9,580.9 1022.1,578.2 1022.2,578.2 1022.3,569.0 1022.5,575.6 1022.6,579.5 1022.7,574.3 1022.8,572.9 1023.0,575.6 1023.1,574.3 1023.2,572.9 1023.3,574.3 1023.5,576.9 1023.6,574.3 1023.7,572.9 1023.8,574.3 1024.0,572.9 1024.1,574.3 1024.2,575.6 1024.3,497.0 1024.5,497.0 1024.6,497.0 1024.7,571.6 1024.8,571.6 1025.0,580.9 1025.1,575.6 1025.2,576.9 1025.4,576.9 1025.5,575.6 1025.6,575.6 1025.7,574.3 1025.9,574.3 1026.0,574.3 1026.1,576.9 1026.2,575.6 1026.4,571.6 1026.5,582.2 1026.6,570.3 1026.7,576.9 1026.9,571.6 1027.0,582.2 1027.1,576.9 1027.2,572.9 1027.4,574.3 1027.5,572.9 1027.6,578.2 1027.8,576.9 1027.9,576.9 1028.0,574.3 1028.1,574.3 1028.3,575.6 1028.4,575.6 1028.5,575.6 1028.6,575.6 1028.8,578.2 1028.9,575.6 1029.0,575.6 1029.1,576.9 1029.3,576.9 1029.4,571.6 1029.5,576.9 1029.6,574.3 1029.8,571.6 1029.9,572.9 1030.0,575.6 1030.1,572.9 1030.3,579.5 1030.4,578.2 1030.5,576.9 1030.7,575.6 1030.8,575.6 1030.9,570.3 1031.0,570.3 1031.2,575.6 1031.3,574.3 1031.4,578.2 1031.5,574.3 1031.7,578.2 1031.8,571.6 1031.9,576.9 1032.0,574.3 1032.2,578.2 1032.3,571.6 1032.4,574.3 1032.5,570.3 1032.7,575.6 1032.8,579.5 1032.9,576.9 1033.1,578.2 1033.2,571.6 1033.3,576.9 1033.4,576.9 1033.6,574.3 1033.7,574.3 1033.8,574.3 1033.9,576.9 1034.1,580.9 1034.2,579.5 1034.3,580.9 1034.4,571.6 1034.6,572.9 1034.7,576.9 1034.8,574.3 1034.9,572.9 1035.1,574.3 1035.2,574.3 1035.3,572.9 1035.4,575.6 1035.6,580.9 1035.7,582.2 1035.8,571.6 1036.0,574.3 1036.1,582.2 1036.2,574.3 1036.3,578.2 1036.5,576.9 1036.6,582.2 1036.7,572.9 1036.8,575.6 1037.0,572.9 1037.1,572.9 1037.2,571.6 1037.3,570.3 1037.5,574.3 1037.6,574.3 1037.7,576.9 1037.8,574.3 1038.0,575.6 1038.1,578.2 1038.2,571.6 1038.4,572.9 1038.5,582.2 1038.6,580.9 1038.7,575.6 1038.9,578.2 1039.0,571.6 1039.1,574.3 1039.2,574.3 1039.4,572.9 1039.5,571.6 1039.6,575.6 1039.7,574.3 1039.9,574.3 1040.0,572.9 1040.1,574.3 1040.2,571.6 1040.4,574.3 1040.5,576.9 1040.6,575.6 1040.8,578.2 1040.9,574.3 1041.0,571.6 1041.1,576.9 1041.3,579.5 1041.4,575.6 1041.5,576.9 1041.6,575.6 1041.8,576.9 1041.9,575.6 1042.0,578.2 1042.1,571.6 1042.3,575.6 1042.4,574.3 1042.5,572.9 1042.6,575.6 1042.8,574.3 1042.9,575.6 1043.0,576.9 1043.1,575.6 1043.3,574.3 1043.4,578.2 1043.5,578.2 1043.7,576.9 1043.8,576.9 1043.9,571.6 1044.0,575.6 1044.2,575.6 1044.3,574.3 1044.4,572.9 1044.5,576.9 1044.7,572.9 1044.8,580.9 1044.9,578.2 1045.0,571.6 1045.2,571.6 1045.3,574.3 1045.4,576.9 1045.5,572.9 1045.7,576.9 1045.8,571.6 1045.9,571.6 1046.1,572.9 1046.2,576.9 1046.3,572.9 1046.4,575.6 1046.6,575.6 1046.7,576.9 1046.8,575.6 1046.9,574.3 1047.1,572.9 1047.2,572.9 1047.3,567.6 1047.4,575.6 1047.6,571.6 1047.7,576.9 1047.8,575.6 1047.9,578.2 1048.1,571.6 1048.2,574.3 1048.3,574.3 1048.4,575.6 1048.6,572.9 1048.7,576.9 1048.8,574.3 1049.0,569.0 1049.1,575.6 1049.2,576.9 1049.3,578.2 1049.5,572.9 1049.6,575.6 1049.7,576.9 1049.8,576.9 1050.0,575.6 1050.1,578.2 1050.2,569.0 1050.3,575.6 1050.5,575.6 1050.6,575.6 1050.7,579.5 1050.8,579.5 1051.0,575.6 1051.1,575.6 1051.2,578.2 1051.4,570.3 1051.5,574.3 1051.6,571.6 1051.7,571.6 1051.9,575.6 1052.0,569.0 1052.1,574.3 1052.2,579.5 1052.4,580.9 1052.5,575.6 1052.6,572.9 1052.7,574.3 1052.9,570.3 1053.0,575.6 1053.1,572.9 1053.2,572.9 1053.4,578.2 1053.5,574.3 1053.6,574.3 1053.7,571.6 1053.9,571.6 1054.0,572.9 1054.1,576.9 1054.3,572.9 1054.4,571.6 1054.5,575.6 1054.6,572.9 1054.8,572.9 1054.9,571.6 1055.0,574.3 1055.1,574.3 1055.3,574.3 1055.4,575.6 1055.5,576.9 1055.6,575.6 1055.8,578.2 1055.9,575.6 1056.0,572.9 1056.1,572.9 1056.3,572.9 1056.4,575.6 1056.5,571.6 1056.7,576.9 1056.8,572.9 1056.9,574.3 1057.0,576.9 1057.2,576.9 1057.3,572.9 1057.4,575.6 1057.5,574.3 1057.7,567.6 1057.8,574.3 1057.9,574.3 1058.0,572.9 1058.2,576.9 1058.3,575.6 1058.4,574.3 1058.5,576.9 1058.7,575.6 1058.8,575.6 1058.9,574.3 1059.0,579.5 1059.2,570.3 1059.3,575.6 1059.4,574.3 1059.6,578.2 1059.7,578.2 1059.8,575.6 1059.9,575.6 1060.1,572.9 1060.2,576.9 1060.3,578.2 1060.4,574.3 1060.6,572.9 1060.7,572.9 1060.8,575.6 1060.9,574.3 1061.1,576.9 1061.2,571.6 1061.3,571.6 1061.4,571.6 1061.6,579.5 1061.7,572.9 1061.8,576.9 1062.0,574.3 1062.1,574.3 1062.2,571.6 1062.3,575.6 1062.5,575.6 1062.6,578.2 1062.7,578.2 1062.8,574.3 1063.0,576.9 1063.1,572.9 1063.2,575.6 1063.3,576.9 1063.5,572.9 1063.6,572.9 1063.7,578.2 1063.8,575.6 1064.0,575.6 1064.1,572.9 1064.2,576.9 1064.3,576.9 1064.5,575.6 1064.6,572.9 1064.7,572.9 1064.9,576.9 1065.0,570.3 1065.1,574.3 1065.2,576.9 1065.4,579.5 1065.5,576.9 1065.6,580.9 1065.7,574.3 1065.9,574.3 1066.0,571.6 1066.1,574.3 1066.2,579.5 1066.4,575.6 1066.5,572.9 1066.6,580.9 1066.7,576.9 1066.9,572.9 1067.0,575.6 1067.1,580.9 1067.3,576.9 1067.4,575.6 1067.5,570.3 1067.6,576.9 1067.8,578.2 1067.9,574.3 1068.0,574.3 1068.1,574.3 1068.3,571.6 1068.4,575.6 1068.5,578.2 1068.6,575.6 1068.8,575.6 1068.9,572.9 1069.0,572.9 1069.1,576.9 1069.3,572.9 1069.4,572.9 1069.5,575.6 1069.7,572.9 1069.8,574.3 1069.9,574.3 1070.0,575.6 1070.2,572.9 1070.3,567.6 1070.4,574.3 1070.5,578.2 1070.7,575.6 1070.8,576.9 1070.9,574.3 1071.0,575.6 1071.2,569.0 1071.3,572.9 1071.4,570.3 1071.5,576.9 1071.7,575.6 1071.8,570.3 1071.9,579.5 1072.0,574.3 1072.2,579.5 1072.3,571.6 1072.4,579.5 1072.6,575.6 1072.7,575.6 1072.8,579.5 1072.9,569.0 1073.1,575.6 1073.2,570.3 1073.3,576.9 1073.4,579.5 1073.6,574.3 1073.7,574.3 1073.8,567.6 1073.9,578.2 1074.1,579.5 1074.2,576.9 1074.3,574.3 1074.4,574.3 1074.6,576.9 1074.7,575.6 1074.8,574.3 1075.0,572.9 1075.1,576.9 1075.2,574.3 1075.3,582.2 1075.5,578.2 1075.6,574.3 1075.7,575.6 1075.8,575.6 1076.0,570.3 1076.1,497.0 1076.2,497.0 1076.3,497.0 1076.5,574.3 1076.6,578.2 1076.7,572.9 1076.8,570.3 1077.0,576.9 1077.1,576.9 1077.2,575.6 1077.3,571.6 1077.5,576.9 1077.6,576.9 1077.7,576.9 1077.9,574.3 1078.0,574.3 1078.1,575.6 1078.2,571.6 1078.4,569.0 1078.5,576.9 1078.6,572.9 1078.7,574.3 1078.9,567.6 1079.0,576.9 1079.1,575.6 1079.2,575.6 1079.4,579.5 1079.5,575.6 1079.6,572.9 1079.7,579.5 1079.9,574.3 1080.0,570.3 1080.1,576.9 1080.3,578.2 1080.4,582.2 1080.5,575.6 1080.6,579.5 1080.8,574.3 1080.9,570.3 1081.0,574.3 1081.1,576.9 1081.3,572.9 1081.4,576.9 1081.5,578.2 1081.6,576.9 1081.8,574.3 1081.9,575.6 1082.0,574.3 1082.1,569.0 1082.3,572.9 1082.4,572.9 1082.5,576.9 1082.6,571.6 1082.8,574.3 1082.9,572.9 1083.0,576.9 1083.2,574.3 1083.3,580.9 1083.4,575.6 1083.5,576.9 1083.7,578.2 1083.8,570.3 1083.9,579.5 1084.0,575.6 1084.2,575.6 1084.3,574.3 1084.4,572.9 1084.5,579.5 1084.7,576.9 1084.8,576.9 1084.9,572.9 1085.0,572.9 1085.2,576.9 1085.3,576.9 1085.4,578.2 1085.6,574.3 1085.7,570.3 1085.8,574.3 1085.9,576.9 1086.1,576.9 1086.2,576.9 1086.3,579.5 1086.4,570.3 1086.6,575.6 1086.7,575.6 1086.8,569.0 1086.9,574.3 1087.1,571.6 1087.2,574.3 1087.3,572.9 1087.4,575.6 1087.6,576.9 1087.7,574.3 1087.8,572.9 1087.9,572.9 1088.1,574.3 1088.2,575.6 1088.3,576.9 1088.5,574.3 1088.6,576.9 1088.7,575.6 1088.8,574.3 1089.0,574.3 1089.1,574.3 1089.2,576.9 1089.3,579.5 1089.5,574.3 1089.6,575.6 1089.7,576.9 1089.8,574.3 1090.0,572.9 1090.1,575.6 1090.2,574.3 1090.3,578.2 1090.5,575.6 1090.6,576.9 1090.7,579.5 1090.9,574.3 1091.0,582.2 1091.1,575.6 1091.2,572.9 1091.4,574.3 1091.5,579.5 1091.6,574.3 1091.7,579.5 1091.9,578.2 1092.0,571.6 1092.1,574.3 1092.2,571.6 1092.4,578.2 1092.5,580.9 1092.6,576.9 1092.7,571.6 1092.9,572.9 1093.0,572.9 1093.1,575.6 1093.2,575.6 1093.4,575.6 1093.5,567.6 1093.6,575.6 1093.8,570.3 1093.9,575.6 1094.0,571.6 1094.1,578.2 1094.3,576.9 1094.4,574.3 1094.5,576.9 1094.6,576.9 1094.8,575.6 1094.9,576.9 1095.0,571.6 1095.1,572.9 1095.3,579.5 1095.4,570.3 1095.5,575.6 1095.6,575.6 1095.8,575.6 1095.9,572.9 1096.0,572.9 1096.2,576.9 1096.3,575.6 1096.4,578.2 1096.5,570.3 1096.7,576.9 1096.8,578.2 1096.9,576.9 1097.0,574.3 1097.2,572.9 1097.3,575.6 1097.4,575.6 1097.5,575.6 1097.7,571.6 1097.8,574.3 1097.9,579.5 1098.0,571.6 1098.2,574.3 1098.3,570.3 1098.4,576.9 1098.5,576.9 1098.7,575.6 1098.8,579.5 1098.9,575.6 1099.1,571.6 1099.2,572.9 1099.3,582.2 1099.4,571.6 1099.6,574.3 1099.7,572.9 1099.8,575.6 1099.9,574.3 1100.1,575.6 1100.2,575.6 1100.3,578.2 1100.4,572.9 1100.6,574.3 1100.7,574.3 1100.8,574.3 1100.9,575.6 1101.1,575.6 1101.2,578.2 1101.3,574.3 1101.5,574.3 1101.6,575.6 1101.7,579.5 1101.8,571.6 1102.0,575.6 1102.1,575.6 1102.2,575.6 1102.3,576.9 1102.5,576.9 1102.6,578.2 1102.7,576.9 1102.8,570.3 1103.0,571.6 1103.1,570.3 1103.2,576.9 1103.3,580.9 1103.5,578.2 1103.6,582.2 1103.7,572.9 1103.9,571.6 1104.0,575.6 1104.1,574.3 1104.2,574.3 1104.4,575.6 1104.5,572.9 1104.6,578.2 1104.7,576.9 1104.9,575.6 1105.0,579.5 1105.1,578.2 1105.2,574.3 1105.4,574.3 1105.5,582.2 1105.6,572.9 1105.7,574.3 1105.9,572.9 1106.0,575.6 1106.1,574.3 1106.2,578.2 1106.4,575.6 1106.5,578.2 1106.6,576.9 1106.8,571.6 1106.9,570.3 1107.0,575.6 1107.1,576.9 1107.3,572.9 1107.4,574.3 1107.5,570.3 1107.6,572.9 1107.8,580.9 1107.9,575.6 1108.0,575.6 1108.1,576.9 1108.3,574.3 1108.4,575.6 1108.5,575.6 1108.6,571.6 1108.8,574.3 1108.9,574.3 1109.0,574.3 1109.2,571.6 1109.3,578.2 1109.4,571.6 1109.5,575.6 1109.7,571.6 1109.8,571.6 1109.9,574.3 1110.0,576.9 1110.2,574.3 1110.3,574.3 1110.4,579.5 1110.5,575.6 1110.7,576.9 1110.8,571.6 1110.9,570.3 1111.0,576.9 1111.2,576.9 1111.3,578.2 1111.4,574.3 1111.5,572.9 1111.7,570.3 1111.8,578.2 1111.9,572.9 1112.1,575.6 1112.2,576.9 1112.3,575.6 1112.4,576.9 1112.6,574.3 1112.7,575.6 1112.8,571.6 1112.9,576.9 1113.1,579.5 1113.2,578.2 1113.3,574.3 1113.4,579.5 1113.6,576.9 1113.7,574.3 1113.8,578.2 1113.9,572.9 1114.1,574.3 1114.2,576.9 1114.3,575.6 1114.5,576.9 1114.6,576.9 1114.7,575.6 1114.8,575.6 1115.0,575.6 1115.1,576.9 1115.2,578.2 1115.3,570.3 1115.5,578.2 1115.6,575.6 1115.7,571.6 1115.8,572.9 1116.0,576.9 1116.1,570.3 1116.2,570.3 1116.3,575.6 1116.5,578.2 1116.6,572.9 1116.7,575.6 1116.8,575.6 1117.0,576.9 1117.1,576.9 1117.2,574.3 1117.4,572.9 1117.5,580.9 1117.6,580.9 1117.7,572.9 1117.9,576.9 1118.0,572.9 1118.1,575.6 1118.2,571.6 1118.4,572.9 1118.5,575.6 1118.6,575.6 1118.7,574.3 1118.9,572.9 1119.0,576.9 1119.1,579.5 1119.2,575.6 1119.4,575.6 1119.5,575.6 1119.6,578.2 1119.8,574.3 1119.9,579.5 1120.0,576.9 1120.1,571.6 1120.3,578.2 1120.4,574.3 1120.5,574.3 1120.6,574.3 1120.8,579.5 1120.9,572.9 1121.0,574.3 1121.1,574.3 1121.3,574.3 1121.4,575.6 1121.5,571.6 1121.6,571.6 1121.8,579.5 1121.9,576.9 1122.0,575.6 1122.1,580.9 1122.3,571.6 1122.4,576.9 1122.5,574.3 1122.7,574.3 1122.8,575.6 1122.9,578.2 1123.0,575.6 1123.2,575.6 1123.3,572.9 1123.4,575.6 1123.5,576.9 1123.7,575.6 1123.8,571.6 1123.9,574.3 1124.0,576.9 1124.2,578.2 1124.3,576.9 1124.4,578.2 1124.5,576.9 1124.7,571.6 1124.8,572.9 1124.9,574.3 1125.1,574.3 1125.2,570.3 1125.3,578.2 1125.4,574.3 1125.6,575.6 1125.7,574.3 1125.8,575.6 1125.9,575.6 1126.1,574.3 1126.2,580.9 1126.3,574.3 1126.4,572.9 1126.6,578.2 1126.7,578.2 1126.8,570.3 1126.9,578.2 1127.1,575.6 1127.2,576.9 1127.3,576.9 1127.4,576.9 1127.6,580.9 1127.7,569.0 1127.8,497.0 1128.0,497.0 1128.1,497.0 1128.2,571.6 1128.3,572.9 1128.5,571.6 1128.6,571.6 1128.7,572.9 1128.8,575.6 1129.0,572.9 1129.1,579.5 1129.2,572.9 1129.3,572.9 1129.5,574.3 1129.6,578.2 1129.7,571.6 1129.8,576.9 1130.0,572.9 1130.1,579.5 1130.2,575.6 1130.4,576.9 1130.5,576.9 1130.6,576.9 1130.7,570.3 1130.9,575.6 1131.0,574.3 1131.1,569.0 1131.2,579.5 1131.4,571.6 1131.5,575.6 1131.6,576.9 1131.7,576.9 1131.9,579.5 1132.0,579.5 1132.1,578.2 1132.2,576.9 1132.4,572.9 1132.5,572.9 1132.6,575.6 1132.8,574.3 1132.9,574.3 1133.0,575.6 1133.1,574.3 1133.3,576.9 1133.4,574.3 1133.5,575.6 1133.6,575.6 1133.8,574.3 1133.9,574.3 1134.0,576.9 1134.1,578.2 1134.3,575.6 1134.4,576.9 1134.5,576.9 1134.6,575.6 1134.8,576.9 1134.9,574.3 1135.0,574.3 1135.1,578.2 1135.3,574.3 1135.4,578.2 1135.5,572.9 1135.7,574.3 1135.8,575.6 1135.9,572.9 1136.0,572.9 1136.2,574.3 1136.3,579.5 1136.4,575.6 1136.5,574.3 1136.7,572.9 1136.8,578.2 1136.9,572.9 1137.0,574.3 1137.2,574.3 1137.3,578.2 1137.4,576.9 1137.5,572.9 1137.7,572.9 1137.8,575.6 1137.9,572.9 1138.1,574.3 1138.2,576.9 1138.3,579.5 1138.4,572.9 1138.6,575.6 1138.7,574.3 1138.8,579.5 1138.9,576.9 1139.1,574.3 1139.2,575.6 1139.3,576.9 1139.4,578.2 1139.6,574.3 1139.7,576.9 1139.8,575.6 1139.9,575.6 1140.1,576.9 1140.2,575.6 1140.3,576.9 1140.4,575.6 1140.6,579.5 1140.7,578.2 1140.8,575.6 1141.0,575.6 1141.1,574.3 1141.2,570.3 1141.3,572.9 1141.5,572.9 1141.6,574.3 1141.7,575.6 1141.8,576.9 1142.0,579.5 1142.1,579.5 1142.2,580.9 1142.3,578.2 1142.5,579.5 1142.6,578.2 1142.7,575.6 1142.8,576.9 1143.0,572.9 1143.1,572.9 1143.2,572.9 1143.4,572.9 1143.5,574.3 1143.6,576.9 1143.7,574.3 1143.9,575.6 1144.0,575.6 1144.1,574.3 1144.2,578.2 1144.4,579.5 1144.5,574.3 1144.6,570.3 1144.7,572.9 1144.9,567.6 1145.0,579.5 1145.1,576.9 1145.2,580.9 1145.4,578.2 1145.5,570.3 1145.6,571.6 1145.7,578.2 1145.9,575.6 1146.0,576.9 1146.1,578.2 1146.3,575.6 1146.4,575.6 1146.5,575.6 1146.6,574.3 1146.8,572.9 1146.9,571.6 1147.0,575.6 1147.1,575.6 1147.3,575.6 1147.4,574.3 1147.5,575.6 1147.6,578.2 1147.8,576.9 1147.9,572.9 1148.0,578.2 1148.1,572.9 1148.3,579.5 1148.4,574.3 1148.5,574.3 1148.7,575.6 1148.8,575.6 1148.9,575.6 1149.0,570.3 1149.2,576.9 1149.3,576.9 1149.4,574.3 1149.5,572.9 1149.7,574.3 1149.8,575.6 1149.9,572.9 1150.0,576.9 1150.2,576.9 1150.3,578.2 1150.4,571.6 1150.5,580.9 1150.7,578.2 1150.8,574.3 1150.9,574.3 1151.0,570.3 1151.2,574.3 1151.3,576.9 1151.4,571.6 1151.6,572.9 1151.7,572.9 1151.8,572.9 1151.9,574.3 1152.1,579.5 1152.2,578.2 1152.3,570.3 1152.4,575.6 1152.6,579.5 1152.7,575.6 1152.8,572.9 1152.9,574.3 1153.1,575.6 1153.2,580.9 1153.3,575.6 1153.4,575.6 1153.6,570.3 1153.7,575.6 1153.8,575.6 1154.0,576.9 1154.1,575.6 1154.2,574.3 1154.3,576.9 1154.5,578.2 1154.6,578.2 1154.7,575.6 1154.8,576.9 1155.0,575.6 1155.1,579.5 1155.2,576.9 1155.3,580.9 1155.5,572.9 1155.6,571.6 1155.7,574.3 1155.8,575.6 1156.0,574.3 1156.1,579.5 1156.2,578.2 1156.3,571.6 1156.5,578.2 1156.6,575.6 1156.7,576.9 1156.9,582.2 1157.0,576.9 1157.1,572.9 1157.2,571.6 1157.4,582.2 1157.5,579.5 1157.6,576.9 1157.7,572.9 1157.9,571.6 1158.0,571.6 1158.1,570.3 1158.2,576.9 1158.4,578.2 1158.5,572.9 1158.6,575.6 1158.7,575.6 1158.9,576.9 1159.0,576.9 1159.1,572.9 1159.3,578.2 1159.4,579.5 1159.5,576.9 1159.6,575.6 1159.8,575.6 1159.9,575.6 1160.0,580.9 1160.1,578.2 1160.3,572.9 1160.4,575.6 1160.5,576.9 1160.6,572.9 1160.8,576.9 1160.9,572.9 1161.0,574.3 1161.1,574.3 1161.3,572.9 1161.4,569.0 1161.5,571.6 1161.6,578.2 1161.8,578.2 1161.9,576.9 1162.0,575.6 1162.2,572.9 1162.3,575.6 1162.4,574.3 1162.5,579.5 1162.7,575.6 1162.8,574.3 1162.9,571.6 1163.0,572.9 1163.2,575.6 1163.3,578.2 1163.4,575.6 1163.5,575.6 1163.7,575.6 1163.8,575.6 1163.9,574.3 1164.0,574.3 1164.2,569.0 1164.3,578.2 1164.4,579.5 1164.6,574.3 1164.7,578.2 1164.8,575.6 1164.9,575.6 1165.1,578.2 1165.2,572.9 1165.3,574.3 1165.4,575.6 1165.6,574.3 1165.7,572.9 1165.8,576.9 1165.9,574.3 1166.1,575.6 1166.2,575.6 1166.3,576.9 1166.4,570.3 1166.6,574.3 1166.7,579.5 1166.8,574.3 1167.0,582.2 1167.1,574.3 1167.2,572.9 1167.3,571.6 1167.5,575.6 1167.6,576.9 1167.7,570.3 1167.8,572.9 1168.0,571.6 1168.1,575.6 1168.2,574.3 1168.3,579.5 1168.5,574.3 1168.6,580.9 1168.7,578.2 1168.8,579.5 1169.0,572.9 1169.1,572.9 1169.2,576.9 1169.3,571.6 1169.5,575.6 1169.6,580.9 1169.7,576.9 1169.9,579.5 1170.0,575.6 1170.1,574.3 1170.2,576.9 1170.4,572.9 1170.5,572.9 1170.6,578.2 1170.7,574.3 1170.9,575.6 1171.0,575.6 1171.1,571.6 1171.2,576.9 1171.4,576.9 1171.5,575.6 1171.6,574.3 1171.7,572.9 1171.9,578.2 1172.0,571.6 1172.1,570.3 1172.3,570.3 1172.4,575.6 1172.5,576.9 1172.6,578.2 1172.8,574.3 1172.9,575.6 1173.0,575.6 1173.1,576.9 1173.3,580.9 1173.4,575.6 1173.5,575.6 1173.6,576.9 1173.8,579.5 1173.9,575.6 1174.0,575.6 1174.1,578.2 1174.3,574.3 1174.4,575.6 1174.5,575.6 1174.6,574.3 1174.8,575.6 1174.9,575.6 1175.0,574.3 1175.2,572.9 1175.3,572.9 1175.4,575.6 1175.5,572.9 1175.7,572.9 1175.8,579.5 1175.9,576.9 1176.0,575.6 1176.2,575.6 1176.3,570.3 1176.4,572.9 1176.5,575.6 1176.7,575.6 1176.8,579.5 1176.9,578.2 1177.0,571.6 1177.2,579.5 1177.3,574.3 1177.4,576.9 1177.6,575.6 1177.7,575.6 1177.8,570.3 1177.9,574.3 1178.1,574.3 1178.2,572.9 1178.3,580.9 1178.4,570.3 1178.6,579.5 1178.7,576.9 1178.8,572.9 1178.9,578.2 1179.1,579.5 1179.2,572.9 1179.3,575.6 1179.4,572.9 1179.6,574.3 1179.7,575.6 1179.8,570.3 1179.9,575.6 1180.1,570.3 1180.2,578.2 1180.3,578.2 1180.5,576.9 1180.6,574.3 1180.7,578.2 1180.8,576.9 1181.0,571.6 1181.1,574.3 1181.2,571.6 1181.3,574.3 1181.5,576.9 1181.6,576.9 1181.7,574.3 1181.8,575.6 1182.0,576.9 1182.1,576.9 1182.2,571.6 1182.3,572.9 1182.5,574.3 1182.6,575.6 1182.7,576.9 1182.9,570.3"/>
<rect x="1108.7" y="519.9" width="73.7" height="16.2" rx="2" ry="2" fill="#fff" fill-opacity="0.8" stroke="#d6d6d6" stroke-width="1"/>
<line x1="1111.20" y1="527.90" x2="1133.80" y2="527.90" stroke="#0000ff" stroke-width="1.5"/>
<text transform="translate(1137.47,531.10) scale(1.1310,1)" font-size="10.60" fill="#000">y=2048</text>
<rect x="911.0" y="517.0" width="274.0" height="120.0" fill="none" stroke="#000" stroke-width="1.7"/>
<line x1="904.10" y1="629.80" x2="911.00" y2="629.80" stroke="#000" stroke-width="1.6"/>
<text transform="translate(877.48,633.65) scale(1.0573,1)" font-size="10.60" fill="#000">200</text>
<line x1="904.10" y1="603.35" x2="911.00" y2="603.35" stroke="#000" stroke-width="1.6"/>
<text transform="translate(877.48,607.20) scale(1.0573,1)" font-size="10.60" fill="#000">220</text>
<line x1="904.10" y1="576.90" x2="911.00" y2="576.90" stroke="#000" stroke-width="1.6"/>
<text transform="translate(877.48,580.75) scale(1.0573,1)" font-size="10.60" fill="#000">240</text>
<line x1="904.10" y1="550.45" x2="911.00" y2="550.45" stroke="#000" stroke-width="1.6"/>
<text transform="translate(877.48,554.30) scale(1.0573,1)" font-size="10.60" fill="#000">260</text>
<line x1="904.10" y1="524.00" x2="911.00" y2="524.00" stroke="#000" stroke-width="1.6"/>
<text transform="translate(877.48,527.85) scale(1.0573,1)" font-size="10.60" fill="#000">280</text>
<line x1="911.90" y1="637.00" x2="911.90" y2="643.70" stroke="#000" stroke-width="1.6"/>
<text transform="translate(908.97,659.90) scale(0.9949,1)" font-size="10.60" fill="#000">0</text>
<line x1="975.00" y1="637.00" x2="975.00" y2="643.70" stroke="#000" stroke-width="1.6"/>
<text transform="translate(965.73,659.90) scale(1.0481,1)" font-size="10.60" fill="#000">500</text>
<line x1="1038.10" y1="637.00" x2="1038.10" y2="643.70" stroke="#000" stroke-width="1.6"/>
<text transform="translate(1025.40,659.90) scale(1.0598,1)" font-size="10.60" fill="#000">1000</text>
<line x1="1101.20" y1="637.00" x2="1101.20" y2="643.70" stroke="#000" stroke-width="1.6"/>
<text transform="translate(1088.50,659.90) scale(1.0598,1)" font-size="10.60" fill="#000">1500</text>
<line x1="1164.30" y1="637.00" x2="1164.30" y2="643.70" stroke="#000" stroke-width="1.6"/>
<text transform="translate(1151.71,659.90) scale(1.0631,1)" font-size="10.60" fill="#000">2000</text>
<text transform="translate(1045.21,677.80) scale(0.9445,1)" font-size="11.04" fill="#000">X</text>
<text transform="translate(866.10,594.89) rotate(-90) scale(1.0486,1)" font-size="11.04" fill="#000">counts</text>
<text transform="translate(1194.10,555.68) rotate(90) scale(1.1166,1)" font-size="11.04" fill="#000">cut in x</text>
<clipPath id="cp689"><rect x="911.0" y="689.0" width="274.0" height="120.0"/></clipPath>
<polyline clip-path="url(#cp689)" fill="none" stroke="#0000ff" stroke-width="1.4" stroke-linejoin="round" points="911.5,749.1 911.6,741.2 911.6,749.1 911.7,751.7 911.8,742.5 911.8,747.8 911.9,743.8 912.0,746.5 912.0,747.8 912.1,745.1 912.2,747.8 912.2,746.5 912.3,747.8 912.4,751.7 912.4,746.5 912.5,749.1 912.6,747.8 912.6,746.5 912.7,751.7 912.8,746.5 912.8,746.5 912.9,742.5 913.0,745.1 913.0,746.5 913.1,749.1 913.2,747.8 913.2,751.7 913.3,746.5 913.4,747.8 913.4,749.1 913.5,747.8 913.6,746.5 913.6,746.5 913.7,750.4 913.8,743.8 913.8,747.8 913.9,746.5 914.0,747.8 914.0,750.4 914.1,746.5 914.2,749.1 914.2,750.4 914.3,747.8 914.4,745.1 914.4,746.5 914.5,746.5 914.6,749.1 914.6,747.8 914.7,747.8 914.8,751.7 914.8,745.1 914.9,747.8 915.0,750.4 915.0,743.8 915.1,742.5 915.2,750.4 915.2,747.8 915.3,750.4 915.4,745.1 915.4,751.7 915.5,746.5 915.6,746.5 915.6,745.1 915.7,753.1 915.8,749.1 915.8,747.8 915.9,745.1 916.0,747.8 916.0,745.1 916.1,746.5 916.2,750.4 916.2,747.8 916.3,749.1 916.4,747.8 916.4,750.4 916.5,745.1 916.6,746.5 916.6,753.1 916.7,745.1 916.8,749.1 916.8,751.7 916.9,743.8 917.0,747.8 917.0,746.5 917.1,747.8 917.2,747.8 917.2,751.7 917.3,745.1 917.4,749.1 917.4,747.8 917.5,747.8 917.6,750.4 917.6,750.4 917.7,747.8 917.8,743.8 917.8,749.1 917.9,749.1 918.0,747.8 918.0,749.1 918.1,743.8 918.2,746.5 918.2,741.2 918.3,746.5 918.4,741.2 918.4,749.1 918.5,746.5 918.6,750.4 918.6,749.1 918.7,747.8 918.8,746.5 918.8,743.8 918.9,747.8 919.0,751.7 919.0,747.8 919.1,747.8 919.2,749.1 919.2,745.1 919.3,745.1 919.4,749.1 919.4,749.1 919.5,754.4 919.6,749.1 919.6,745.1 919.7,750.4 919.8,745.1 919.8,745.1 919.9,746.5 920.0,745.1 920.0,747.8 920.1,745.1 920.2,745.1 920.2,746.5 920.3,747.8 920.4,743.8 920.4,743.8 920.5,749.1 920.6,745.1 920.6,747.8 920.7,741.2 920.8,747.8 920.8,749.1 920.9,750.4 921.0,745.1 921.0,750.4 921.1,745.1 921.2,749.1 921.2,743.8 921.3,743.8 921.4,743.8 921.4,753.1 921.5,751.7 921.6,754.4 921.6,739.8 921.7,749.1 921.8,749.1 921.8,747.8 921.9,746.5 922.0,747.8 922.0,747.8 922.1,747.8 922.2,750.4 922.2,742.5 922.3,742.5 922.4,747.8 922.4,747.8 922.5,742.5 922.6,741.2 922.6,747.8 922.7,745.1 922.8,749.1 922.8,746.5 922.9,754.4 923.0,753.1 923.0,746.5 923.1,747.8 923.2,746.5 923.2,747.8 923.3,745.1 923.4,746.5 923.4,747.8 923.5,746.5 923.6,749.1 923.6,743.8 923.7,750.4 923.8,747.8 923.8,745.1 923.9,747.8 924.0,745.1 924.0,743.8 924.1,745.1 924.2,749.1 924.2,742.5 924.3,746.5 924.4,750.4 924.4,742.5 924.5,746.5 924.6,745.1 924.6,745.1 924.7,749.1 924.8,745.1 924.8,750.4 924.9,750.4 925.0,747.8 925.0,741.2 925.1,745.1 925.2,743.8 925.2,747.8 925.3,746.5 925.4,753.1 925.4,747.8 925.5,746.5 925.6,749.1 925.6,753.1 925.7,751.7 925.8,745.1 925.8,743.8 925.9,747.8 926.0,742.5 926.0,750.4 926.1,745.1 926.2,746.5 926.2,743.8 926.3,751.7 926.4,745.1 926.4,746.5 926.5,749.1 926.6,749.1 926.6,747.8 926.7,746.5 926.8,749.1 926.8,749.1 926.9,746.5 927.0,747.8 927.0,746.5 927.1,745.1 927.2,751.7 927.2,747.8 927.3,746.5 927.4,747.8 927.4,750.4 927.5,745.1 927.6,742.5 927.6,747.8 927.7,749.1 927.8,745.1 927.8,747.8 927.9,747.8 928.0,746.5 928.0,749.1 928.1,747.8 928.1,749.1 928.2,753.1 928.3,745.1 928.3,746.5 928.4,747.8 928.5,743.8 928.5,747.8 928.6,745.1 928.7,745.1 928.7,747.8 928.8,750.4 928.9,746.5 928.9,746.5 929.0,745.1 929.1,751.7 929.1,747.8 929.2,746.5 929.3,746.5 929.3,747.8 929.4,746.5 929.5,753.1 929.5,747.8 929.6,749.1 929.7,751.7 929.7,747.8 929.8,749.1 929.9,750.4 929.9,751.7 930.0,746.5 930.1,754.4 930.1,747.8 930.2,750.4 930.3,747.8 930.3,742.5 930.4,745.1 930.5,747.8 930.5,743.8 930.6,742.5 930.7,745.1 930.7,742.5 930.8,746.5 930.9,745.1 930.9,747.8 931.0,749.1 931.1,747.8 931.1,749.1 931.2,747.8 931.3,741.2 931.3,745.1 931.4,747.8 931.5,742.5 931.5,743.8 931.6,750.4 931.7,749.1 931.7,742.5 931.8,747.8 931.9,746.5 931.9,749.1 932.0,750.4 932.1,743.8 932.1,749.1 932.2,746.5 932.3,742.5 932.3,746.5 932.4,747.8 932.5,745.1 932.5,746.5 932.6,749.1 932.7,746.5 932.7,750.4 932.8,751.7 932.9,749.1 932.9,751.7 933.0,749.1 933.1,747.8 933.1,746.5 933.2,742.5 933.3,750.4 933.3,749.1 933.4,749.1 933.5,750.4 933.5,742.5 933.6,749.1 933.7,747.8 933.7,747.8 933.8,741.2 933.9,747.8 933.9,749.1 934.0,743.8 934.1,749.1 934.1,753.1 934.2,745.1 934.3,745.1 934.3,751.7 934.4,750.4 934.5,747.8 934.5,750.4 934.6,751.7 934.7,750.4 934.7,742.5 934.8,745.1 934.9,750.4 934.9,747.8 935.0,747.8 935.1,749.1 935.1,747.8 935.2,742.5 935.3,749.1 935.3,749.1 935.4,747.8 935.5,749.1 935.5,749.1 935.6,749.1 935.7,750.4 935.7,743.8 935.8,749.1 935.9,743.8 935.9,750.4 936.0,750.4 936.1,746.5 936.1,747.8 936.2,745.1 936.3,746.5 936.3,741.2 936.4,754.4 936.5,750.4 936.5,747.8 936.6,747.8 936.7,747.8 936.7,741.2 936.8,754.4 936.9,746.5 936.9,747.8 937.0,747.8 937.1,745.1 937.1,747.8 937.2,745.1 937.3,743.8 937.3,743.8 937.4,753.1 937.5,749.1 937.5,751.7 937.6,750.4 937.7,747.8 937.7,742.5 937.8,749.1 937.9,749.1 937.9,747.8 938.0,743.8 938.1,749.1 938.1,746.5 938.2,745.1 938.3,746.5 938.3,753.1 938.4,751.7 938.5,746.5 938.5,753.1 938.6,747.8 938.7,751.7 938.7,746.5 938.8,747.8 938.9,751.7 938.9,749.1 939.0,750.4 939.1,749.1 939.1,743.8 939.2,746.5 939.3,746.5 939.3,743.8 939.4,747.8 939.5,743.8 939.5,746.5 939.6,746.5 939.7,749.1 939.7,750.4 939.8,750.4 939.9,750.4 939.9,746.5 940.0,746.5 940.1,750.4 940.1,745.1 940.2,749.1 940.3,749.1 940.3,751.7 940.4,750.4 940.5,745.1 940.5,746.5 940.6,749.1 940.7,745.1 940.7,747.8 940.8,747.8 940.9,745.1 940.9,746.5 941.0,749.1 941.1,750.4 941.1,743.8 941.2,754.4 941.3,749.1 941.3,753.1 941.4,749.1 941.5,745.1 941.5,749.1 941.6,749.1 941.7,747.8 941.7,742.5 941.8,743.8 941.9,747.8 941.9,749.1 942.0,749.1 942.1,746.5 942.1,749.1 942.2,747.8 942.3,750.4 942.3,751.7 942.4,750.4 942.5,747.8 942.5,750.4 942.6,741.2 942.7,746.5 942.7,746.5 942.8,745.1 942.9,750.4 942.9,750.4 943.0,747.8 943.1,746.5 943.1,746.5 943.2,743.8 943.3,743.8 943.3,745.1 943.4,745.1 943.5,746.5 943.5,745.1 943.6,747.8 943.7,749.1 943.7,745.1 943.8,751.7 943.9,743.8 943.9,742.5 944.0,749.1 944.1,745.1 944.1,746.5 944.2,750.4 944.3,746.5 944.3,746.5 944.4,745.1 944.5,747.8 944.5,746.5 944.6,749.1 944.7,745.1 944.7,747.8 944.8,745.1 944.9,749.1 944.9,746.5 945.0,749.1 945.1,749.1 945.1,743.8 945.2,747.8 945.3,747.8 945.3,745.1 945.4,749.1 945.5,742.5 945.5,749.1 945.6,747.8 945.7,741.2 945.7,751.7 945.8,742.5 945.9,746.5 945.9,746.5 946.0,750.4 946.1,746.5 946.1,750.4 946.2,745.1 946.3,747.8 946.3,749.1 946.4,749.1 946.5,747.8 946.5,745.1 946.6,746.5 946.7,749.1 946.7,749.1 946.8,750.4 946.9,745.1 946.9,746.5 947.0,750.4 947.1,751.7 947.1,747.8 947.2,749.1 947.3,746.5 947.3,747.8 947.4,746.5 947.5,745.1 947.5,745.1 947.6,747.8 947.7,745.1 947.7,749.1 947.8,750.4 947.9,746.5 947.9,743.8 948.0,743.8 948.1,747.8 948.1,751.7 948.2,746.5 948.3,747.8 948.3,746.5 948.4,745.1 948.5,749.1 948.5,749.1 948.6,749.1 948.7,749.1 948.7,750.4 948.8,746.5 948.9,749.1 948.9,747.8 949.0,747.8 949.1,749.1 949.1,746.5 949.2,749.1 949.3,747.8 949.3,745.1 949.4,747.8 949.5,751.7 949.5,749.1 949.6,749.1 949.7,746.5 949.7,743.8 949.8,746.5 949.9,747.8 949.9,743.8 950.0,749.1 950.1,746.5 950.1,746.5 950.2,747.8 950.3,747.8 950.3,746.5 950.4,743.8 950.5,746.5 950.5,749.1 950.6,746.5 950.7,745.1 950.7,742.5 950.8,745.1 950.9,746.5 950.9,743.8 951.0,745.1 951.1,747.8 951.1,749.1 951.2,747.8 951.3,745.1 951.3,750.4 951.4,751.7 951.5,746.5 951.5,751.7 951.6,750.4 951.7,747.8 951.7,747.8 951.8,747.8 951.9,747.8 951.9,746.5 952.0,747.8 952.1,750.4 952.1,754.4 952.2,743.8 952.3,745.1 952.3,746.5 952.4,747.8 952.5,750.4 952.5,746.5 952.6,747.8 952.7,751.7 952.7,745.1 952.8,751.7 952.9,749.1 952.9,742.5 953.0,750.4 953.1,747.8 953.1,745.1 953.2,747.8 953.3,751.7 953.3,749.1 953.4,747.8 953.5,751.7 953.5,743.8 953.6,746.5 953.7,746.5 953.7,746.5 953.8,746.5 953.9,749.1 953.9,751.7 954.0,746.5 954.1,747.8 954.1,743.8 954.2,750.4 954.3,747.8 954.3,742.5 954.4,751.7 954.5,750.4 954.5,747.8 954.6,743.8 954.7,750.4 954.7,747.8 954.8,747.8 954.9,749.1 954.9,749.1 955.0,745.1 955.1,747.8 955.1,751.7 955.2,749.1 955.3,747.8 955.3,751.7 955.4,749.1 955.5,749.1 955.5,753.1 955.6,742.5 955.7,751.7 955.7,747.8 955.8,747.8 955.9,749.1 955.9,745.1 956.0,747.8 956.1,750.4 956.1,745.1 956.2,746.5 956.3,750.4 956.3,751.7 956.4,745.1 956.5,747.8 956.5,751.7 956.6,746.5 956.7,751.7 956.7,749.1 956.8,750.4 956.9,753.1 956.9,746.5 957.0,739.8 957.1,746.5 957.1,746.5 957.2,749.1 957.3,747.8 957.3,746.5 957.4,746.5 957.5,749.1 957.5,747.8 957.6,747.8 957.7,746.5 957.7,745.1 957.8,745.1 957.9,749.1 957.9,749.1 958.0,746.5 958.1,747.8 958.1,747.8 958.2,746.5 958.3,746.5 958.3,743.8 958.4,750.4 958.5,745.1 958.5,749.1 958.6,746.5 958.7,750.4 958.7,747.8 958.8,749.1 958.9,742.5 958.9,750.4 959.0,745.1 959.1,749.1 959.1,750.4 959.2,746.5 959.3,745.1 959.3,747.8 959.4,746.5 959.5,746.5 959.5,747.8 959.6,743.8 959.7,747.8 959.7,745.1 959.8,750.4 959.9,747.8 959.9,745.1 960.0,749.1 960.1,753.1 960.1,745.1 960.2,746.5 960.3,747.8 960.3,747.8 960.4,747.8 960.5,746.5 960.5,745.1 960.6,746.5 960.7,747.8 960.7,749.1 960.8,747.8 960.9,749.1 960.9,745.1 961.0,750.4 961.1,749.1 961.1,746.5 961.2,746.5 961.3,746.5 961.3,749.1 961.4,746.5 961.5,751.7 961.5,751.7 961.6,750.4 961.6,746.5 961.7,743.8 961.8,749.1 961.8,749.1 961.9,747.8 962.0,742.5 962.0,746.5 962.1,747.8 962.2,749.1 962.2,746.5 962.3,743.8 962.4,746.5 962.4,749.1 962.5,743.8 962.6,747.8 962.6,742.5 962.7,750.4 962.8,747.8 962.8,746.5 962.9,751.7 963.0,747.8 963.0,745.1 963.1,747.8 963.2,746.5 963.2,746.5 963.3,749.1 963.4,745.1 963.4,749.1 963.5,747.8 963.6,749.1 963.6,745.1 963.7,749.1 963.8,749.1 963.8,753.1 963.9,747.8 964.0,745.1 964.0,753.1 964.1,746.5 964.2,747.8 964.2,751.7 964.3,749.1 964.4,745.1 964.4,747.8 964.5,746.5 964.6,745.1 964.6,747.8 964.7,745.1 964.8,750.4 964.8,749.1 964.9,743.8 965.0,743.8 965.0,745.1 965.1,751.7 965.2,747.8 965.2,750.4 965.3,742.5 965.4,750.4 965.4,750.4 965.5,749.1 965.6,746.5 965.6,749.1 965.7,747.8 965.8,746.5 965.8,747.8 965.9,751.7 966.0,750.4 966.0,742.5 966.1,747.8 966.2,742.5 966.2,743.8 966.3,745.1 966.4,747.8 966.4,743.8 966.5,749.1 966.6,741.2 966.6,746.5 966.7,745.1 966.8,747.8 966.8,749.1 966.9,747.8 967.0,749.1 967.0,749.1 967.1,750.4 967.2,746.5 967.2,743.8 967.3,742.5 967.4,745.1 967.4,747.8 967.5,745.1 967.6,742.5 967.6,746.5 967.7,745.1 967.8,746.5 967.8,746.5 967.9,749.1 968.0,745.1 968.0,749.1 968.1,750.4 968.2,746.5 968.2,745.1 968.3,745.1 968.4,745.1 968.4,747.8 968.5,747.8 968.6,743.8 968.6,741.2 968.7,754.4 968.8,743.8 968.8,746.5 968.9,747.8 969.0,749.1 969.0,749.1 969.1,750.4 969.2,746.5 969.2,749.1 969.3,747.8 969.4,751.7 969.4,743.8 969.5,745.1 969.6,750.4 969.6,746.5 969.7,747.8 969.8,749.1 969.8,746.5 969.9,745.1 970.0,743.8 970.0,746.5 970.1,743.8 970.2,745.1 970.2,745.1 970.3,745.1 970.4,750.4 970.4,747.8 970.5,743.8 970.6,750.4 970.6,749.1 970.7,742.5 970.8,750.4 970.8,746.5 970.9,746.5 971.0,747.8 971.0,745.1 971.1,745.1 971.2,749.1 971.2,742.5 971.3,749.1 971.4,749.1 971.4,747.8 971.5,746.5 971.6,750.4 971.6,746.5 971.7,753.1 971.8,749.1 971.8,750.4 971.9,749.1 972.0,747.8 972.0,746.5 972.1,749.1 972.2,747.8 972.2,751.7 972.3,749.1 972.4,745.1 972.4,749.1 972.5,747.8 972.6,747.8 972.6,745.1 972.7,746.5 972.8,747.8 972.8,750.4 972.9,746.5 973.0,754.4 973.0,746.5 973.1,749.1 973.2,746.5 973.2,747.8 973.3,743.8 973.4,749.1 973.4,753.1 973.5,747.8 973.6,749.1 973.6,747.8 973.7,745.1 973.8,750.4 973.8,746.5 973.9,745.1 974.0,745.1 974.0,753.1 974.1,747.8 974.2,749.1 974.2,747.8 974.3,749.1 974.4,749.1 974.4,745.1 974.5,743.8 974.6,746.5 974.6,750.4 974.7,743.8 974.8,750.4 974.8,749.1 974.9,745.1 975.0,749.1 975.0,745.1 975.1,747.8 975.2,750.4 975.2,746.5 975.3,749.1 975.4,742.5 975.4,742.5 975.5,743.8 975.6,750.4 975.6,742.5 975.7,746.5 975.8,746.5 975.8,746.5 975.9,749.1 976.0,747.8 976.0,745.1 976.1,743.8 976.2,746.5 976.2,747.8 976.3,749.1 976.4,747.8 976.4,743.8 976.5,746.5 976.6,746.5 976.6,751.7 976.7,751.7 976.8,746.5 976.8,746.5 976.9,745.1 977.0,746.5 977.0,749.1 977.1,751.7 977.2,750.4 977.2,753.1 977.3,746.5 977.4,746.5 977.4,743.8 977.5,751.7 977.6,751.7 977.6,746.5 977.7,746.5 977.8,753.1 977.8,749.1 977.9,747.8 978.0,749.1 978.0,746.5 978.1,747.8 978.2,749.1 978.2,746.5 978.3,747.8 978.4,745.1 978.4,751.7 978.5,747.8 978.6,749.1 978.6,747.8 978.7,746.5 978.8,746.5 978.8,753.1 978.9,745.1 979.0,746.5 979.0,746.5 979.1,747.8 979.2,745.1 979.2,746.5 979.3,751.7 979.4,749.1 979.4,747.8 979.5,749.1 979.6,749.1 979.6,746.5 979.7,750.4 979.8,749.1 979.8,750.4 979.9,747.8 980.0,746.5 980.0,750.4 980.1,746.5 980.2,749.1 980.2,743.8 980.3,753.1 980.4,747.8 980.4,745.1 980.5,749.1 980.6,750.4 980.6,750.4 980.7,746.5 980.8,749.1 980.8,745.1 980.9,747.8 981.0,749.1 981.0,749.1 981.1,746.5 981.2,745.1 981.2,749.1 981.3,750.4 981.4,750.4 981.4,746.5 981.5,742.5 981.6,749.1 981.6,746.5 981.7,749.1 981.8,745.1 981.8,751.7 981.9,746.5 982.0,750.4 982.0,750.4 982.1,746.5 982.2,747.8 982.2,747.8 982.3,746.5 982.4,746.5 982.4,743.8 982.5,745.1 982.6,750.4 982.6,747.8 982.7,749.1 982.8,749.1 982.8,742.5 982.9,749.1 983.0,743.8 983.0,743.8 983.1,739.8 983.2,747.8 983.2,746.5 983.3,746.5 983.4,749.1 983.4,742.5 983.5,742.5 983.6,753.1 983.6,747.8 983.7,743.8 983.8,750.4 983.8,749.1 983.9,747.8 984.0,747.8 984.0,747.8 984.1,747.8 984.2,742.5 984.2,753.1 984.3,749.1 984.4,750.4 984.4,746.5 984.5,749.1 984.6,746.5 984.6,747.8 984.7,741.2 984.8,750.4 984.8,749.1 984.9,745.1 985.0,749.1 985.0,747.8 985.1,751.7 985.2,745.1 985.2,747.8 985.3,746.5 985.4,750.4 985.4,749.1 985.5,750.4 985.6,743.8 985.6,751.7 985.7,746.5 985.8,746.5 985.8,743.8 985.9,746.5 986.0,750.4 986.0,746.5 986.1,751.7 986.2,745.1 986.2,747.8 986.3,749.1 986.4,749.1 986.4,746.5 986.5,751.7 986.6,742.5 986.6,749.1 986.7,743.8 986.8,747.8 986.8,742.5 986.9,750.4 987.0,745.1 987.0,747.8 987.1,749.1 987.2,745.1 987.2,747.8 987.3,749.1 987.4,747.8 987.4,749.1 987.5,747.8 987.6,747.8 987.6,745.1 987.7,747.8 987.8,749.1 987.8,745.1 987.9,749.1 988.0,750.4 988.0,750.4 988.1,742.5 988.2,747.8 988.2,743.8 988.3,750.4 988.4,750.4 988.4,742.5 988.5,747.8 988.6,747.8 988.6,747.8 988.7,750.4 988.8,745.1 988.8,750.4 988.9,745.1 989.0,750.4 989.0,741.2 989.1,745.1 989.2,745.1 989.2,751.7 989.3,746.5 989.4,749.1 989.4,750.4 989.5,750.4 989.6,745.1 989.6,747.8 989.7,749.1 989.8,749.1 989.8,749.1 989.9,749.1 990.0,747.8 990.0,750.4 990.1,750.4 990.2,753.1 990.2,747.8 990.3,746.5 990.4,749.1 990.4,743.8 990.5,749.1 990.6,747.8 990.6,745.1 990.7,746.5 990.8,750.4 990.8,746.5 990.9,749.1 991.0,745.1 991.0,745.1 991.1,747.8 991.2,746.5 991.2,742.5 991.3,745.1 991.4,745.1 991.4,747.8 991.5,749.1 991.6,749.1 991.6,745.1 991.7,750.4 991.8,746.5 991.8,743.8 991.9,751.7 992.0,746.5 992.0,750.4 992.1,747.8 992.2,746.5 992.2,750.4 992.3,751.7 992.4,749.1 992.4,746.5 992.5,749.1 992.6,750.4 992.6,746.5 992.7,750.4 992.8,751.7 992.8,747.8 992.9,742.5 993.0,749.1 993.0,747.8 993.1,750.4 993.2,749.1 993.2,750.4 993.3,746.5 993.4,749.1 993.4,750.4 993.5,745.1 993.6,751.7 993.6,745.1 993.7,747.8 993.8,750.4 993.8,747.8 993.9,747.8 994.0,746.5 994.0,747.8 994.1,742.5 994.2,745.1 994.2,745.1 994.3,750.4 994.4,749.1 994.4,743.8 994.5,746.5 994.6,747.8 994.6,747.8 994.7,745.1 994.8,753.1 994.8,750.4 994.9,751.7 994.9,745.1 995.0,751.7 995.1,747.8 995.1,743.8 995.2,747.8 995.3,746.5 995.3,747.8 995.4,745.1 995.5,741.2 995.5,750.4 995.6,747.8 995.7,743.8 995.7,741.2 995.8,747.8 995.9,743.8 995.9,745.1 996.0,746.5 996.1,751.7 996.1,751.7 996.2,747.8 996.3,747.8 996.3,747.8 996.4,750.4 996.5,743.8 996.5,747.8 996.6,739.8 996.7,747.8 996.7,746.5 996.8,745.1 996.9,749.1 996.9,750.4 997.0,749.1 997.1,747.8 997.1,749.1 997.2,742.5 997.3,749.1 997.3,745.1 997.4,745.1 997.5,746.5 997.5,750.4 997.6,746.5 997.7,745.1 997.7,746.5 997.8,747.8 997.9,753.1 997.9,750.4 998.0,747.8 998.1,746.5 998.1,745.1 998.2,747.8 998.3,746.5 998.3,750.4 998.4,746.5 998.5,745.1 998.5,747.8 998.6,745.1 998.7,747.8 998.7,749.1 998.8,747.8 998.9,742.5 998.9,751.7 999.0,746.5 999.1,749.1 999.1,747.8 999.2,751.7 999.3,745.1 999.3,745.1 999.4,747.8 999.5,749.1 999.5,747.8 999.6,745.1 999.7,751.7 999.7,743.8 999.8,747.8 999.9,745.1 999.9,749.1 1000.0,742.5 1000.1,746.5 1000.1,742.5 1000.2,749.1 1000.3,749.1 1000.3,743.8 1000.4,745.1 1000.5,746.5 1000.5,743.8 1000.6,746.5 1000.7,747.8 1000.7,753.1 1000.8,753.1 1000.9,745.1 1000.9,746.5 1001.0,750.4 1001.1,746.5 1001.1,747.8 1001.2,747.8 1001.3,745.1 1001.3,751.7 1001.4,746.5 1001.5,746.5 1001.5,747.8 1001.6,746.5 1001.7,750.4 1001.7,746.5 1001.8,745.1 1001.9,745.1 1001.9,749.1 1002.0,745.1 1002.1,746.5 1002.1,745.1 1002.2,747.8 1002.3,745.1 1002.3,746.5 1002.4,741.2 1002.5,747.8 1002.5,743.8 1002.6,747.8 1002.7,751.7 1002.7,746.5 1002.8,743.8 1002.9,745.1 1002.9,745.1 1003.0,749.1 1003.1,746.5 1003.1,751.7 1003.2,742.5 1003.3,743.8 1003.3,750.4 1003.4,749.1 1003.5,750.4 1003.5,749.1 1003.6,749.1 1003.7,750.4 1003.7,749.1 1003.8,745.1 1003.9,747.8 1003.9,745.1 1004.0,747.8 1004.1,747.8 1004.1,750.4 1004.2,745.1 1004.3,750.4 1004.3,747.8 1004.4,750.4 1004.5,746.5 1004.5,750.4 1004.6,746.5 1004.7,742.5 1004.7,746.5 1004.8,753.1 1004.9,745.1 1004.9,746.5 1005.0,745.1 1005.1,746.5 1005.1,743.8 1005.2,745.1 1005.3,747.8 1005.3,750.4 1005.4,747.8 1005.5,745.1 1005.5,751.7 1005.6,746.5 1005.7,751.7 1005.7,743.8 1005.8,742.5 1005.9,745.1 1005.9,749.1 1006.0,745.1 1006.1,743.8 1006.1,742.5 1006.2,743.8 1006.3,743.8 1006.3,750.4 1006.4,747.8 1006.5,746.5 1006.5,747.8 1006.6,753.1 1006.7,747.8 1006.7,749.1 1006.8,746.5 1006.9,746.5 1006.9,751.7 1007.0,749.1 1007.1,746.5 1007.1,750.4 1007.2,747.8 1007.3,749.1 1007.3,749.1 1007.4,745.1 1007.5,747.8 1007.5,749.1 1007.6,743.8 1007.7,747.8 1007.7,747.8 1007.8,747.8 1007.9,739.8 1007.9,745.1 1008.0,745.1 1008.1,747.8 1008.1,745.1 1008.2,743.8 1008.3,750.4 1008.3,746.5 1008.4,742.5 1008.5,742.5 1008.5,746.5 1008.6,741.2 1008.7,749.1 1008.7,745.1 1008.8,746.5 1008.9,750.4 1008.9,745.1 1009.0,750.4 1009.1,749.1 1009.1,747.8 1009.2,750.4 1009.3,743.8 1009.3,749.1 1009.4,750.4 1009.5,746.5 1009.5,747.8 1009.6,750.4 1009.7,749.1 1009.7,745.1 1009.8,745.1 1009.9,751.7 1009.9,745.1 1010.0,745.1 1010.1,743.8 1010.1,749.1 1010.2,749.1 1010.3,747.8 1010.3,749.1 1010.4,747.8 1010.5,749.1 1010.5,747.8 1010.6,749.1 1010.7,747.8 1010.7,746.5 1010.8,747.8 1010.9,749.1 1010.9,742.5 1011.0,745.1 1011.1,746.5 1011.1,749.1 1011.2,745.1 1011.3,747.8 1011.3,745.1 1011.4,746.5 1011.5,741.2 1011.5,747.8 1011.6,750.4 1011.7,743.8 1011.7,743.8 1011.8,743.8 1011.9,754.4 1011.9,750.4 1012.0,749.1 1012.1,751.7 1012.1,746.5 1012.2,745.1 1012.3,745.1 1012.3,745.1 1012.4,747.8 1012.5,743.8 1012.5,746.5 1012.6,754.4 1012.7,747.8 1012.7,749.1 1012.8,746.5 1012.9,749.1 1012.9,747.8 1013.0,743.8 1013.1,749.1 1013.1,751.7 1013.2,746.5 1013.3,745.1 1013.3,747.8 1013.4,747.8 1013.5,749.1 1013.5,751.7 1013.6,749.1 1013.7,750.4 1013.7,743.8 1013.8,747.8 1013.9,743.8 1013.9,747.8 1014.0,750.4 1014.1,746.5 1014.1,746.5 1014.2,743.8 1014.3,753.1 1014.3,749.1 1014.4,746.5 1014.5,749.1 1014.5,747.8 1014.6,747.8 1014.7,743.8 1014.7,743.8 1014.8,753.1 1014.9,751.7 1014.9,749.1 1015.0,747.8 1015.1,747.8 1015.1,749.1 1015.2,746.5 1015.3,745.1 1015.3,747.8 1015.4,747.8 1015.5,747.8 1015.5,750.4 1015.6,745.1 1015.7,745.1 1015.7,750.4 1015.8,743.8 1015.9,747.8 1015.9,745.1 1016.0,747.8 1016.1,747.8 1016.1,745.1 1016.2,750.4 1016.3,747.8 1016.3,750.4 1016.4,746.5 1016.5,747.8 1016.5,747.8 1016.6,749.1 1016.7,746.5 1016.7,746.5 1016.8,747.8 1016.9,749.1 1016.9,742.5 1017.0,743.8 1017.1,750.4 1017.1,743.8 1017.2,746.5 1017.3,746.5 1017.3,746.5 1017.4,751.7 1017.5,741.2 1017.5,742.5 1017.6,747.8 1017.7,747.8 1017.7,746.5 1017.8,749.1 1017.9,746.5 1017.9,747.8 1018.0,750.4 1018.1,749.1 1018.1,749.1 1018.2,749.1 1018.3,749.1 1018.3,746.5 1018.4,749.1 1018.5,751.7 1018.5,743.8 1018.6,749.1 1018.7,743.8 1018.7,746.5 1018.8,746.5 1018.9,750.4 1018.9,747.8 1019.0,749.1 1019.1,747.8 1019.1,746.5 1019.2,749.1 1019.3,745.1 1019.3,751.7 1019.4,750.4 1019.5,746.5 1019.5,746.5 1019.6,745.1 1019.7,743.8 1019.7,746.5 1019.8,745.1 1019.9,746.5 1019.9,747.8 1020.0,747.8 1020.1,747.8 1020.1,749.1 1020.2,747.8 1020.3,745.1 1020.3,746.5 1020.4,743.8 1020.5,749.1 1020.5,749.1 1020.6,746.5 1020.7,750.4 1020.7,750.4 1020.8,746.5 1020.9,747.8 1020.9,745.1 1021.0,747.8 1021.1,749.1 1021.1,750.4 1021.2,743.8 1021.3,747.8 1021.3,750.4 1021.4,751.7 1021.5,750.4 1021.5,749.1 1021.6,743.8 1021.7,750.4 1021.7,746.5 1021.8,746.5 1021.9,754.4 1021.9,751.7 1022.0,745.1 1022.1,753.1 1022.1,745.1 1022.2,747.8 1022.3,751.7 1022.3,742.5 1022.4,747.8 1022.5,743.8 1022.5,747.8 1022.6,750.4 1022.7,745.1 1022.7,742.5 1022.8,743.8 1022.9,750.4 1022.9,746.5 1023.0,750.4 1023.1,749.1 1023.1,743.8 1023.2,751.7 1023.3,741.2 1023.3,751.7 1023.4,751.7 1023.5,745.1 1023.5,747.8 1023.6,747.8 1023.7,750.4 1023.7,746.5 1023.8,747.8 1023.9,747.8 1023.9,750.4 1024.0,751.7 1024.1,747.8 1024.1,753.1 1024.2,749.1 1024.3,746.5 1024.3,746.5 1024.4,749.1 1024.5,754.4 1024.5,746.5 1024.6,745.1 1024.7,747.8 1024.7,743.8 1024.8,745.1 1024.9,751.7 1024.9,747.8 1025.0,749.1 1025.1,743.8 1025.1,745.1 1025.2,747.8 1025.3,746.5 1025.3,745.1 1025.4,749.1 1025.5,747.8 1025.5,747.8 1025.6,749.1 1025.7,749.1 1025.7,747.8 1025.8,751.7 1025.9,750.4 1025.9,745.1 1026.0,743.8 1026.1,742.5 1026.1,753.1 1026.2,746.5 1026.3,750.4 1026.3,749.1 1026.4,747.8 1026.5,746.5 1026.5,746.5 1026.6,754.4 1026.7,749.1 1026.7,745.1 1026.8,747.8 1026.9,751.7 1026.9,750.4 1027.0,750.4 1027.1,745.1 1027.1,742.5 1027.2,750.4 1027.3,746.5 1027.3,749.1 1027.4,746.5 1027.5,749.1 1027.5,750.4 1027.6,749.1 1027.7,749.1 1027.7,743.8 1027.8,750.4 1027.9,746.5 1027.9,750.4 1028.0,749.1 1028.0,747.8 1028.1,749.1 1028.2,742.5 1028.2,743.8 1028.3,750.4 1028.4,746.5 1028.4,743.8 1028.5,751.7 1028.6,749.1 1028.6,743.8 1028.7,750.4 1028.8,746.5 1028.8,747.8 1028.9,747.8 1029.0,750.4 1029.0,747.8 1029.1,749.1 1029.2,743.8 1029.2,746.5 1029.3,747.8 1029.4,747.8 1029.4,746.5 1029.5,751.7 1029.6,750.4 1029.6,750.4 1029.7,750.4 1029.8,751.7 1029.8,746.5 1029.9,749.1 1030.0,745.1 1030.0,747.8 1030.1,749.1 1030.2,746.5 1030.2,746.5 1030.3,749.1 1030.4,746.5 1030.4,745.1 1030.5,749.1 1030.6,743.8 1030.6,749.1 1030.7,745.1 1030.8,747.8 1030.8,749.1 1030.9,746.5 1031.0,750.4 1031.0,751.7 1031.1,747.8 1031.2,749.1 1031.2,750.4 1031.3,742.5 1031.4,746.5 1031.4,750.4 1031.5,746.5 1031.6,746.5 1031.6,749.1 1031.7,749.1 1031.8,753.1 1031.8,747.8 1031.9,742.5 1032.0,745.1 1032.0,745.1 1032.1,749.1 1032.2,750.4 1032.2,745.1 1032.3,746.5 1032.4,749.1 1032.4,749.1 1032.5,745.1 1032.6,746.5 1032.6,749.1 1032.7,747.8 1032.8,751.7 1032.8,750.4 1032.9,746.5 1033.0,749.1 1033.0,750.4 1033.1,747.8 1033.2,745.1 1033.2,750.4 1033.3,749.1 1033.4,749.1 1033.4,741.2 1033.5,745.1 1033.6,747.8 1033.6,751.7 1033.7,746.5 1033.8,746.5 1033.8,747.8 1033.9,750.4 1034.0,749.1 1034.0,751.7 1034.1,749.1 1034.2,749.1 1034.2,750.4 1034.3,749.1 1034.4,751.7 1034.4,745.1 1034.5,747.8 1034.6,751.7 1034.6,746.5 1034.7,746.5 1034.8,749.1 1034.8,751.7 1034.9,747.8 1035.0,746.5 1035.0,746.5 1035.1,745.1 1035.2,745.1 1035.2,751.7 1035.3,747.8 1035.4,753.1 1035.4,745.1 1035.5,746.5 1035.6,745.1 1035.6,747.8 1035.7,747.8 1035.8,749.1 1035.8,754.4 1035.9,749.1 1036.0,741.2 1036.0,745.1 1036.1,749.1 1036.2,746.5 1036.2,746.5 1036.3,749.1 1036.4,747.8 1036.4,746.5 1036.5,749.1 1036.6,746.5 1036.6,745.1 1036.7,745.1 1036.8,747.8 1036.8,747.8 1036.9,746.5 1037.0,749.1 1037.0,749.1 1037.1,745.1 1037.2,749.1 1037.2,751.7 1037.3,745.1 1037.4,746.5 1037.4,745.1 1037.5,747.8 1037.6,745.1 1037.6,747.8 1037.7,750.4 1037.8,747.8 1037.8,747.8 1037.9,750.4 1038.0,747.8 1038.0,747.8 1038.1,749.1 1038.2,747.8 1038.2,747.8 1038.3,750.4 1038.4,746.5 1038.4,746.5 1038.5,753.1 1038.6,749.1 1038.6,745.1 1038.7,746.5 1038.8,753.1 1038.8,747.8 1038.9,743.8 1039.0,745.1 1039.0,745.1 1039.1,747.8 1039.2,747.8 1039.2,750.4 1039.3,747.8 1039.4,741.2 1039.4,747.8 1039.5,750.4 1039.6,746.5 1039.6,753.1 1039.7,741.2 1039.8,746.5 1039.8,747.8 1039.9,749.1 1040.0,750.4 1040.0,747.8 1040.1,747.8 1040.2,751.7 1040.2,745.1 1040.3,749.1 1040.4,750.4 1040.4,745.1 1040.5,745.1 1040.6,749.1 1040.6,749.1 1040.7,745.1 1040.8,749.1 1040.8,746.5 1040.9,743.8 1041.0,750.4 1041.0,751.7 1041.1,750.4 1041.2,749.1 1041.2,747.8 1041.3,745.1 1041.4,749.1 1041.4,742.5 1041.5,746.5 1041.6,753.1 1041.6,747.8 1041.7,745.1 1041.8,745.1 1041.8,749.1 1041.9,747.8 1042.0,741.2 1042.0,747.8 1042.1,750.4 1042.2,751.7 1042.2,749.1 1042.3,746.5 1042.4,750.4 1042.4,743.8 1042.5,749.1 1042.6,753.1 1042.6,746.5 1042.7,747.8 1042.8,747.8 1042.8,743.8 1042.9,749.1 1043.0,745.1 1043.0,749.1 1043.1,743.8 1043.2,747.8 1043.2,747.8 1043.3,746.5 1043.4,747.8 1043.4,746.5 1043.5,747.8 1043.6,746.5 1043.6,747.8 1043.7,749.1 1043.8,746.5 1043.8,746.5 1043.9,750.4 1044.0,747.8 1044.0,751.7 1044.1,747.8 1044.2,745.1 1044.2,741.2 1044.3,746.5 1044.4,745.1 1044.4,743.8 1044.5,745.1 1044.6,751.7 1044.6,749.1 1044.7,746.5 1044.8,746.5 1044.8,747.8 1044.9,750.4 1045.0,751.7 1045.0,746.5 1045.1,743.8 1045.2,749.1 1045.2,746.5 1045.3,749.1 1045.4,747.8 1045.4,749.1 1045.5,745.1 1045.6,750.4 1045.6,746.5 1045.7,745.1 1045.8,747.8 1045.8,750.4 1045.9,746.5 1046.0,747.8 1046.0,750.4 1046.1,747.8 1046.2,747.8 1046.2,746.5 1046.3,749.1 1046.4,747.8 1046.4,746.5 1046.5,753.1 1046.6,745.1 1046.6,747.8 1046.7,750.4 1046.8,747.8 1046.8,745.1 1046.9,749.1 1047.0,749.1 1047.0,743.8 1047.1,743.8 1047.2,742.5 1047.2,747.8 1047.3,750.4 1047.4,750.4 1047.4,747.8 1047.5,750.4 1047.6,746.5 1047.6,743.8 1047.7,750.4 1047.8,743.8 1047.8,750.4 1047.9,749.1 1048.0,751.7 1048.0,745.1 1048.1,747.8 1048.2,747.8 1048.2,754.4 1048.3,749.1 1048.4,746.5 1048.4,754.4 1048.5,742.5 1048.6,746.5 1048.6,745.1 1048.7,747.8 1048.8,745.1 1048.8,743.8 1048.9,741.2 1049.0,750.4 1049.0,742.5 1049.1,750.4 1049.2,746.5 1049.2,747.8 1049.3,747.8 1049.4,753.1 1049.4,747.8 1049.5,750.4 1049.6,747.8 1049.6,746.5 1049.7,747.8 1049.8,747.8 1049.8,743.8 1049.9,746.5 1050.0,745.1 1050.0,743.8 1050.1,747.8 1050.2,746.5 1050.2,745.1 1050.3,747.8 1050.4,743.8 1050.4,749.1 1050.5,747.8 1050.6,747.8 1050.6,747.8 1050.7,747.8 1050.8,749.1 1050.8,753.1 1050.9,743.8 1051.0,749.1 1051.0,745.1 1051.1,750.4 1051.2,746.5 1051.2,750.4 1051.3,743.8 1051.4,747.8 1051.4,749.1 1051.5,754.4 1051.6,753.1 1051.6,749.1 1051.7,749.1 1051.8,749.1 1051.8,749.1 1051.9,745.1 1052.0,749.1 1052.0,749.1 1052.1,749.1 1052.2,750.4 1052.2,746.5 1052.3,749.1 1052.4,749.1 1052.4,746.5 1052.5,747.8 1052.6,745.1 1052.6,745.1 1052.7,750.4 1052.8,749.1 1052.8,745.1 1052.9,749.1 1053.0,746.5 1053.0,750.4 1053.1,754.4 1053.2,753.1 1053.2,749.1 1053.3,749.1 1053.4,741.2 1053.4,745.1 1053.5,745.1 1053.6,745.1 1053.6,751.7 1053.7,747.8 1053.8,747.8 1053.8,742.5 1053.9,749.1 1054.0,751.7 1054.0,747.8 1054.1,747.8 1054.2,747.8 1054.2,746.5 1054.3,746.5 1054.4,749.1 1054.4,749.1 1054.5,741.2 1054.6,749.1 1054.6,746.5 1054.7,750.4 1054.8,751.7 1054.8,745.1 1054.9,746.5 1055.0,743.8 1055.0,743.8 1055.1,746.5 1055.2,749.1 1055.2,742.5 1055.3,746.5 1055.4,741.2 1055.4,745.1 1055.5,745.1 1055.6,745.1 1055.6,745.1 1055.7,747.8 1055.8,741.2 1055.8,749.1 1055.9,750.4 1056.0,746.5 1056.0,749.1 1056.1,743.8 1056.2,747.8 1056.2,743.8 1056.3,746.5 1056.4,749.1 1056.4,747.8 1056.5,745.1 1056.6,749.1 1056.6,749.1 1056.7,747.8 1056.8,746.5 1056.8,743.8 1056.9,746.5 1057.0,745.1 1057.0,747.8 1057.1,742.5 1057.2,741.2 1057.2,749.1 1057.3,746.5 1057.4,747.8 1057.4,746.5 1057.5,747.8 1057.6,749.1 1057.6,750.4 1057.7,747.8 1057.8,746.5 1057.8,743.8 1057.9,745.1 1058.0,747.8 1058.0,749.1 1058.1,750.4 1058.2,745.1 1058.2,746.5 1058.3,745.1 1058.4,745.1 1058.4,745.1 1058.5,747.8 1058.6,747.8 1058.6,749.1 1058.7,749.1 1058.8,746.5 1058.8,741.2 1058.9,747.8 1059.0,746.5 1059.0,739.8 1059.1,746.5 1059.2,747.8 1059.2,746.5 1059.3,747.8 1059.4,751.7 1059.4,745.1 1059.5,751.7 1059.6,749.1 1059.6,747.8 1059.7,746.5 1059.8,747.8 1059.8,749.1 1059.9,749.1 1060.0,746.5 1060.0,747.8 1060.1,749.1 1060.2,750.4 1060.2,749.1 1060.3,746.5 1060.4,751.7 1060.4,747.8 1060.5,747.8 1060.6,745.1 1060.6,749.1 1060.7,750.4 1060.8,747.8 1060.8,749.1 1060.9,754.4 1061.0,743.8 1061.0,746.5 1061.1,747.8 1061.2,749.1 1061.2,746.5 1061.3,747.8 1061.3,743.8 1061.4,745.1 1061.5,743.8 1061.5,750.4 1061.6,750.4 1061.7,749.1 1061.7,749.1 1061.8,743.8 1061.9,746.5 1061.9,750.4 1062.0,747.8 1062.1,742.5 1062.1,747.8 1062.2,746.5 1062.3,751.7 1062.3,749.1 1062.4,747.8 1062.5,747.8 1062.5,747.8 1062.6,746.5 1062.7,745.1 1062.7,751.7 1062.8,747.8 1062.9,745.1 1062.9,746.5 1063.0,745.1 1063.1,747.8 1063.1,749.1 1063.2,750.4 1063.3,745.1 1063.3,750.4 1063.4,749.1 1063.5,747.8 1063.5,746.5 1063.6,747.8 1063.7,750.4 1063.7,746.5 1063.8,750.4 1063.9,749.1 1063.9,753.1 1064.0,747.8 1064.1,747.8 1064.1,751.7 1064.2,747.8 1064.3,746.5 1064.3,749.1 1064.4,751.7 1064.5,747.8 1064.5,746.5 1064.6,753.1 1064.7,745.1 1064.7,747.8 1064.8,745.1 1064.9,750.4 1064.9,745.1 1065.0,746.5 1065.1,745.1 1065.1,747.8 1065.2,745.1 1065.3,747.8 1065.3,749.1 1065.4,750.4 1065.5,751.7 1065.5,747.8 1065.6,749.1 1065.7,747.8 1065.7,749.1 1065.8,746.5 1065.9,747.8 1065.9,749.1 1066.0,745.1 1066.1,742.5 1066.1,750.4 1066.2,749.1 1066.3,746.5 1066.3,749.1 1066.4,745.1 1066.5,749.1 1066.5,750.4 1066.6,750.4 1066.7,745.1 1066.7,753.1 1066.8,747.8 1066.9,753.1 1066.9,745.1 1067.0,746.5 1067.1,746.5 1067.1,742.5 1067.2,747.8 1067.3,745.1 1067.3,746.5 1067.4,745.1 1067.5,749.1 1067.5,743.8 1067.6,747.8 1067.7,743.8 1067.7,745.1 1067.8,746.5 1067.9,745.1 1067.9,746.5 1068.0,746.5 1068.1,739.8 1068.1,749.1 1068.2,750.4 1068.3,750.4 1068.3,747.8 1068.4,747.8 1068.5,745.1 1068.5,745.1 1068.6,746.5 1068.7,746.5 1068.7,749.1 1068.8,743.8 1068.9,743.8 1068.9,747.8 1069.0,745.1 1069.1,749.1 1069.1,746.5 1069.2,746.5 1069.3,745.1 1069.3,750.4 1069.4,746.5 1069.5,745.1 1069.5,746.5 1069.6,745.1 1069.7,753.1 1069.7,749.1 1069.8,747.8 1069.9,749.1 1069.9,753.1 1070.0,743.8 1070.1,746.5 1070.1,751.7 1070.2,749.1 1070.3,747.8 1070.3,745.1 1070.4,745.1 1070.5,750.4 1070.5,749.1 1070.6,746.5 1070.7,745.1 1070.7,749.1 1070.8,749.1 1070.9,745.1 1070.9,746.5 1071.0,743.8 1071.1,746.5 1071.1,745.1 1071.2,753.1 1071.3,750.4 1071.3,751.7 1071.4,749.1 1071.5,746.5 1071.5,747.8 1071.6,746.5 1071.7,749.1 1071.7,745.1 1071.8,745.1 1071.9,751.7 1071.9,750.4 1072.0,749.1 1072.1,745.1 1072.1,745.1 1072.2,742.5 1072.3,751.7 1072.3,746.5 1072.4,747.8 1072.5,747.8 1072.5,747.8 1072.6,753.1 1072.7,746.5 1072.7,749.1 1072.8,750.4 1072.9,743.8 1072.9,749.1 1073.0,746.5 1073.1,749.1 1073.1,751.7 1073.2,749.1 1073.3,746.5 1073.3,750.4 1073.4,746.5 1073.5,742.5 1073.5,743.8 1073.6,747.8 1073.7,749.1 1073.7,745.1 1073.8,751.7 1073.9,750.4 1073.9,742.5 1074.0,746.5 1074.1,746.5 1074.1,747.8 1074.2,739.8 1074.3,739.8 1074.3,747.8 1074.4,745.1 1074.5,747.8 1074.5,746.5 1074.6,743.8 1074.7,743.8 1074.7,747.8 1074.8,746.5 1074.9,739.8 1074.9,745.1 1075.0,743.8 1075.1,745.1 1075.1,747.8 1075.2,750.4 1075.3,750.4 1075.3,751.7 1075.4,750.4 1075.5,749.1 1075.5,745.1 1075.6,751.7 1075.7,746.5 1075.7,753.1 1075.8,739.8 1075.9,749.1 1075.9,746.5 1076.0,742.5 1076.1,747.8 1076.1,746.5 1076.2,746.5 1076.3,745.1 1076.3,749.1 1076.4,742.5 1076.5,743.8 1076.5,746.5 1076.6,743.8 1076.7,747.8 1076.7,749.1 1076.8,747.8 1076.9,746.5 1076.9,751.7 1077.0,747.8 1077.1,746.5 1077.1,750.4 1077.2,746.5 1077.3,750.4 1077.3,746.5 1077.4,747.8 1077.5,746.5 1077.5,749.1 1077.6,753.1 1077.7,754.4 1077.7,739.8 1077.8,751.7 1077.9,749.1 1077.9,751.7 1078.0,743.8 1078.1,745.1 1078.1,745.1 1078.2,750.4 1078.3,745.1 1078.3,749.1 1078.4,743.8 1078.5,747.8 1078.5,753.1 1078.6,747.8 1078.7,749.1 1078.7,741.2 1078.8,750.4 1078.9,747.8 1078.9,747.8 1079.0,749.1 1079.1,749.1 1079.1,747.8 1079.2,746.5 1079.3,749.1 1079.3,747.8 1079.4,747.8 1079.5,750.4 1079.5,747.8 1079.6,747.8 1079.7,745.1 1079.7,745.1 1079.8,746.5 1079.9,745.1 1079.9,749.1 1080.0,743.8 1080.1,749.1 1080.1,747.8 1080.2,749.1 1080.3,745.1 1080.3,749.1 1080.4,746.5 1080.5,749.1 1080.5,749.1 1080.6,746.5 1080.7,750.4 1080.7,743.8 1080.8,749.1 1080.9,749.1 1080.9,743.8 1081.0,751.7 1081.1,745.1 1081.1,747.8 1081.2,747.8 1081.3,746.5 1081.3,750.4 1081.4,742.5 1081.5,746.5 1081.5,746.5 1081.6,745.1 1081.7,745.1 1081.7,746.5 1081.8,750.4 1081.9,750.4 1081.9,751.7 1082.0,749.1 1082.1,745.1 1082.1,751.7 1082.2,749.1 1082.3,746.5 1082.3,749.1 1082.4,747.8 1082.5,750.4 1082.5,747.8 1082.6,749.1 1082.7,749.1 1082.7,749.1 1082.8,746.5 1082.9,745.1 1082.9,750.4 1083.0,746.5 1083.1,750.4 1083.1,753.1 1083.2,749.1 1083.3,747.8 1083.3,747.8 1083.4,746.5 1083.5,753.1 1083.5,743.8 1083.6,745.1 1083.7,746.5 1083.7,751.7 1083.8,746.5 1083.9,749.1 1083.9,749.1 1084.0,747.8 1084.1,751.7 1084.1,745.1 1084.2,745.1 1084.3,745.1 1084.3,743.8 1084.4,751.7 1084.5,749.1 1084.5,749.1 1084.6,750.4 1084.7,745.1 1084.7,741.2 1084.8,750.4 1084.9,746.5 1084.9,747.8 1085.0,747.8 1085.1,747.8 1085.1,745.1 1085.2,749.1 1085.3,749.1 1085.3,743.8 1085.4,747.8 1085.5,747.8 1085.5,751.7 1085.6,746.5 1085.7,746.5 1085.7,746.5 1085.8,743.8 1085.9,753.1 1085.9,745.1 1086.0,751.7 1086.1,750.4 1086.1,753.1 1086.2,745.1 1086.3,747.8 1086.3,749.1 1086.4,747.8 1086.5,753.1 1086.5,749.1 1086.6,747.8 1086.7,749.1 1086.7,747.8 1086.8,751.7 1086.9,747.8 1086.9,749.1 1087.0,747.8 1087.1,743.8 1087.1,747.8 1087.2,749.1 1087.3,746.5 1087.3,750.4 1087.4,743.8 1087.5,747.8 1087.5,747.8 1087.6,746.5 1087.7,751.7 1087.7,747.8 1087.8,749.1 1087.9,742.5 1087.9,743.8 1088.0,742.5 1088.1,747.8 1088.1,747.8 1088.2,745.1 1088.3,749.1 1088.3,750.4 1088.4,743.8 1088.5,746.5 1088.5,669.0 1088.6,669.0 1088.7,669.0 1088.7,749.1 1088.8,750.4 1088.9,746.5 1088.9,750.4 1089.0,750.4 1089.1,742.5 1089.1,746.5 1089.2,750.4 1089.3,742.5 1089.3,746.5 1089.4,746.5 1089.5,754.4 1089.5,743.8 1089.6,747.8 1089.7,743.8 1089.7,743.8 1089.8,751.7 1089.9,742.5 1089.9,745.1 1090.0,747.8 1090.1,754.4 1090.1,742.5 1090.2,746.5 1090.3,746.5 1090.3,750.4 1090.4,746.5 1090.5,746.5 1090.5,743.8 1090.6,750.4 1090.7,753.1 1090.7,749.1 1090.8,750.4 1090.9,746.5 1090.9,747.8 1091.0,746.5 1091.1,743.8 1091.1,742.5 1091.2,747.8 1091.3,751.7 1091.3,747.8 1091.4,747.8 1091.5,747.8 1091.5,747.8 1091.6,747.8 1091.7,753.1 1091.7,746.5 1091.8,746.5 1091.9,746.5 1091.9,747.8 1092.0,745.1 1092.1,751.7 1092.1,747.8 1092.2,746.5 1092.3,749.1 1092.3,747.8 1092.4,745.1 1092.5,747.8 1092.5,750.4 1092.6,749.1 1092.7,746.5 1092.7,750.4 1092.8,747.8 1092.9,749.1 1092.9,747.8 1093.0,746.5 1093.1,746.5 1093.1,747.8 1093.2,747.8 1093.3,745.1 1093.3,750.4 1093.4,747.8 1093.5,750.4 1093.5,745.1 1093.6,747.8 1093.7,751.7 1093.7,749.1 1093.8,746.5 1093.9,746.5 1093.9,751.7 1094.0,743.8 1094.1,747.8 1094.1,746.5 1094.2,749.1 1094.3,750.4 1094.3,751.7 1094.4,747.8 1094.5,747.8 1094.5,747.8 1094.6,745.1 1094.7,746.5 1094.7,750.4 1094.8,749.1 1094.8,745.1 1094.9,751.7 1095.0,742.5 1095.0,749.1 1095.1,741.2 1095.2,746.5 1095.2,751.7 1095.3,746.5 1095.4,747.8 1095.4,749.1 1095.5,747.8 1095.6,747.8 1095.6,754.4 1095.7,745.1 1095.8,747.8 1095.8,747.8 1095.9,746.5 1096.0,747.8 1096.0,750.4 1096.1,745.1 1096.2,749.1 1096.2,746.5 1096.3,749.1 1096.4,747.8 1096.4,750.4 1096.5,743.8 1096.6,750.4 1096.6,745.1 1096.7,753.1 1096.8,746.5 1096.8,747.8 1096.9,745.1 1097.0,746.5 1097.0,741.2 1097.1,739.8 1097.2,749.1 1097.2,746.5 1097.3,750.4 1097.4,750.4 1097.4,747.8 1097.5,745.1 1097.6,746.5 1097.6,747.8 1097.7,745.1 1097.8,750.4 1097.8,750.4 1097.9,747.8 1098.0,751.7 1098.0,743.8 1098.1,747.8 1098.2,747.8 1098.2,746.5 1098.3,750.4 1098.4,747.8 1098.4,751.7 1098.5,747.8 1098.6,747.8 1098.6,743.8 1098.7,747.8 1098.8,743.8 1098.8,747.8 1098.9,751.7 1099.0,745.1 1099.0,747.8 1099.1,749.1 1099.2,745.1 1099.2,750.4 1099.3,749.1 1099.4,745.1 1099.4,745.1 1099.5,749.1 1099.6,746.5 1099.6,747.8 1099.7,746.5 1099.8,747.8 1099.8,753.1 1099.9,749.1 1100.0,743.8 1100.0,749.1 1100.1,747.8 1100.2,745.1 1100.2,747.8 1100.3,750.4 1100.4,747.8 1100.4,747.8 1100.5,750.4 1100.6,747.8 1100.6,751.7 1100.7,751.7 1100.8,750.4 1100.8,747.8 1100.9,747.8 1101.0,749.1 1101.0,745.1 1101.1,746.5 1101.2,747.8 1101.2,745.1 1101.3,743.8 1101.4,745.1 1101.4,749.1 1101.5,745.1 1101.6,743.8 1101.6,746.5 1101.7,747.8 1101.8,746.5 1101.8,746.5 1101.9,751.7 1102.0,743.8 1102.0,747.8 1102.1,742.5 1102.2,747.8 1102.2,749.1 1102.3,745.1 1102.4,747.8 1102.4,745.1 1102.5,749.1 1102.6,749.1 1102.6,749.1 1102.7,749.1 1102.8,746.5 1102.8,750.4 1102.9,746.5 1103.0,745.1 1103.0,750.4 1103.1,747.8 1103.2,749.1 1103.2,749.1 1103.3,747.8 1103.4,745.1 1103.4,745.1 1103.5,749.1 1103.6,745.1 1103.6,749.1 1103.7,750.4 1103.8,750.4 1103.8,753.1 1103.9,747.8 1104.0,753.1 1104.0,746.5 1104.1,741.2 1104.2,750.4 1104.2,753.1 1104.3,746.5 1104.4,750.4 1104.4,747.8 1104.5,747.8 1104.6,746.5 1104.6,741.2 1104.7,746.5 1104.8,746.5 1104.8,747.8 1104.9,749.1 1105.0,749.1 1105.0,750.4 1105.1,745.1 1105.2,747.8 1105.2,745.1 1105.3,746.5 1105.4,741.2 1105.4,747.8 1105.5,746.5 1105.6,749.1 1105.6,743.8 1105.7,747.8 1105.8,747.8 1105.8,750.4 1105.9,746.5 1106.0,742.5 1106.0,743.8 1106.1,750.4 1106.2,745.1 1106.2,749.1 1106.3,751.7 1106.4,750.4 1106.4,743.8 1106.5,747.8 1106.6,750.4 1106.6,746.5 1106.7,746.5 1106.8,747.8 1106.8,746.5 1106.9,747.8 1107.0,743.8 1107.0,745.1 1107.1,747.8 1107.2,746.5 1107.2,745.1 1107.3,747.8 1107.4,746.5 1107.4,747.8 1107.5,747.8 1107.6,753.1 1107.6,750.4 1107.7,750.4 1107.8,747.8 1107.8,739.8 1107.9,750.4 1108.0,749.1 1108.0,750.4 1108.1,749.1 1108.2,747.8 1108.2,745.1 1108.3,751.7 1108.4,746.5 1108.4,746.5 1108.5,747.8 1108.6,750.4 1108.6,750.4 1108.7,747.8 1108.8,746.5 1108.8,747.8 1108.9,749.1 1109.0,746.5 1109.0,750.4 1109.1,745.1 1109.2,739.8 1109.2,749.1 1109.3,745.1 1109.4,750.4 1109.4,747.8 1109.5,746.5 1109.6,743.8 1109.6,747.8 1109.7,743.8 1109.8,750.4 1109.8,747.8 1109.9,747.8 1110.0,747.8 1110.0,747.8 1110.1,742.5 1110.2,749.1 1110.2,745.1 1110.3,746.5 1110.4,742.5 1110.4,747.8 1110.5,745.1 1110.6,746.5 1110.6,754.4 1110.7,746.5 1110.8,745.1 1110.8,743.8 1110.9,750.4 1111.0,747.8 1111.0,743.8 1111.1,750.4 1111.2,749.1 1111.2,745.1 1111.3,745.1 1111.4,743.8 1111.4,743.8 1111.5,746.5 1111.6,750.4 1111.6,749.1 1111.7,747.8 1111.8,746.5 1111.8,747.8 1111.9,745.1 1112.0,749.1 1112.0,747.8 1112.1,750.4 1112.2,742.5 1112.2,747.8 1112.3,745.1 1112.4,743.8 1112.4,746.5 1112.5,747.8 1112.6,749.1 1112.6,747.8 1112.7,751.7 1112.8,749.1 1112.8,745.1 1112.9,746.5 1113.0,745.1 1113.0,745.1 1113.1,745.1 1113.2,746.5 1113.2,746.5 1113.3,745.1 1113.4,747.8 1113.4,750.4 1113.5,745.1 1113.6,747.8 1113.6,743.8 1113.7,749.1 1113.8,751.7 1113.8,747.8 1113.9,749.1 1114.0,750.4 1114.0,743.8 1114.1,746.5 1114.2,750.4 1114.2,751.7 1114.3,747.8 1114.4,745.1 1114.4,746.5 1114.5,743.8 1114.6,746.5 1114.6,746.5 1114.7,751.7 1114.8,743.8 1114.8,749.1 1114.9,745.1 1115.0,751.7 1115.0,749.1 1115.1,743.8 1115.2,750.4 1115.2,746.5 1115.3,747.8 1115.4,742.5 1115.4,746.5 1115.5,743.8 1115.6,747.8 1115.6,751.7 1115.7,741.2 1115.8,749.1 1115.8,746.5 1115.9,747.8 1116.0,751.7 1116.0,745.1 1116.1,747.8 1116.2,751.7 1116.2,751.7 1116.3,753.1 1116.4,749.1 1116.4,747.8 1116.5,750.4 1116.6,747.8 1116.6,747.8 1116.7,746.5 1116.8,747.8 1116.8,747.8 1116.9,749.1 1117.0,750.4 1117.0,750.4 1117.1,746.5 1117.2,749.1 1117.2,743.8 1117.3,745.1 1117.4,750.4 1117.4,746.5 1117.5,743.8 1117.6,749.1 1117.6,743.8 1117.7,749.1 1117.8,743.8 1117.8,746.5 1117.9,747.8 1118.0,751.7 1118.0,747.8 1118.1,749.1 1118.2,746.5 1118.2,750.4 1118.3,746.5 1118.4,749.1 1118.4,746.5 1118.5,745.1 1118.6,746.5 1118.6,746.5 1118.7,745.1 1118.8,750.4 1118.8,746.5 1118.9,746.5 1119.0,742.5 1119.0,747.8 1119.1,745.1 1119.2,751.7 1119.2,743.8 1119.3,746.5 1119.4,746.5 1119.4,745.1 1119.5,750.4 1119.6,747.8 1119.6,747.8 1119.7,747.8 1119.8,749.1 1119.8,745.1 1119.9,747.8 1120.0,747.8 1120.0,747.8 1120.1,743.8 1120.2,742.5 1120.2,745.1 1120.3,746.5 1120.4,750.4 1120.4,749.1 1120.5,750.4 1120.6,750.4 1120.6,743.8 1120.7,749.1 1120.8,743.8 1120.8,747.8 1120.9,747.8 1121.0,747.8 1121.0,751.7 1121.1,749.1 1121.2,745.1 1121.2,745.1 1121.3,746.5 1121.4,745.1 1121.4,746.5 1121.5,746.5 1121.6,741.2 1121.6,746.5 1121.7,751.7 1121.8,753.1 1121.8,749.1 1121.9,746.5 1122.0,745.1 1122.0,747.8 1122.1,746.5 1122.2,746.5 1122.2,750.4 1122.3,747.8 1122.4,746.5 1122.4,749.1 1122.5,749.1 1122.6,746.5 1122.6,745.1 1122.7,747.8 1122.8,753.1 1122.8,749.1 1122.9,749.1 1123.0,746.5 1123.0,749.1 1123.1,749.1 1123.2,745.1 1123.2,743.8 1123.3,747.8 1123.4,750.4 1123.4,750.4 1123.5,745.1 1123.6,749.1 1123.6,747.8 1123.7,747.8 1123.8,746.5 1123.8,746.5 1123.9,750.4 1124.0,749.1 1124.0,746.5 1124.1,747.8 1124.2,751.7 1124.2,742.5 1124.3,751.7 1124.4,745.1 1124.4,751.7 1124.5,745.1 1124.6,751.7 1124.6,745.1 1124.7,746.5 1124.8,745.1 1124.8,749.1 1124.9,746.5 1125.0,746.5 1125.0,747.8 1125.1,749.1 1125.2,743.8 1125.2,751.7 1125.3,751.7 1125.4,751.7 1125.4,743.8 1125.5,750.4 1125.6,749.1 1125.6,749.1 1125.7,747.8 1125.8,747.8 1125.8,749.1 1125.9,751.7 1126.0,746.5 1126.0,747.8 1126.1,743.8 1126.2,746.5 1126.2,747.8 1126.3,751.7 1126.4,747.8 1126.4,746.5 1126.5,742.5 1126.6,746.5 1126.6,745.1 1126.7,746.5 1126.8,743.8 1126.8,745.1 1126.9,747.8 1127.0,751.7 1127.0,743.8 1127.1,747.8 1127.2,749.1 1127.2,751.7 1127.3,751.7 1127.4,746.5 1127.4,747.8 1127.5,746.5 1127.6,743.8 1127.6,749.1 1127.7,746.5 1127.8,749.1 1127.8,750.4 1127.9,753.1 1128.0,749.1 1128.0,745.1 1128.1,749.1 1128.1,746.5 1128.2,747.8 1128.3,742.5 1128.3,743.8 1128.4,749.1 1128.5,749.1 1128.5,745.1 1128.6,746.5 1128.7,747.8 1128.7,743.8 1128.8,746.5 1128.9,746.5 1128.9,739.8 1129.0,746.5 1129.1,750.4 1129.1,746.5 1129.2,746.5 1129.3,742.5 1129.3,746.5 1129.4,749.1 1129.5,746.5 1129.5,750.4 1129.6,747.8 1129.7,746.5 1129.7,749.1 1129.8,753.1 1129.9,750.4 1129.9,749.1 1130.0,746.5 1130.1,749.1 1130.1,747.8 1130.2,750.4 1130.3,747.8 1130.3,749.1 1130.4,746.5 1130.5,746.5 1130.5,743.8 1130.6,746.5 1130.7,749.1 1130.7,750.4 1130.8,746.5 1130.9,745.1 1130.9,743.8 1131.0,749.1 1131.1,751.7 1131.1,753.1 1131.2,750.4 1131.3,747.8 1131.3,747.8 1131.4,749.1 1131.5,747.8 1131.5,746.5 1131.6,751.7 1131.7,747.8 1131.7,747.8 1131.8,747.8 1131.9,749.1 1131.9,753.1 1132.0,746.5 1132.1,749.1 1132.1,747.8 1132.2,746.5 1132.3,747.8 1132.3,746.5 1132.4,746.5 1132.5,750.4 1132.5,750.4 1132.6,745.1 1132.7,750.4 1132.7,742.5 1132.8,750.4 1132.9,747.8 1132.9,747.8 1133.0,746.5 1133.1,750.4 1133.1,746.5 1133.2,742.5 1133.3,749.1 1133.3,753.1 1133.4,746.5 1133.5,746.5 1133.5,746.5 1133.6,750.4 1133.7,746.5 1133.7,745.1 1133.8,749.1 1133.9,747.8 1133.9,746.5 1134.0,746.5 1134.1,749.1 1134.1,747.8 1134.2,742.5 1134.3,742.5 1134.3,750.4 1134.4,742.5 1134.5,749.1 1134.5,745.1 1134.6,751.7 1134.7,747.8 1134.7,749.1 1134.8,745.1 1134.9,747.8 1134.9,746.5 1135.0,746.5 1135.1,747.8 1135.1,745.1 1135.2,747.8 1135.3,747.8 1135.3,749.1 1135.4,750.4 1135.5,749.1 1135.5,746.5 1135.6,745.1 1135.7,747.8 1135.7,742.5 1135.8,745.1 1135.9,747.8 1135.9,746.5 1136.0,747.8 1136.1,753.1 1136.1,745.1 1136.2,747.8 1136.3,751.7 1136.3,745.1 1136.4,749.1 1136.5,749.1 1136.5,753.1 1136.6,747.8 1136.7,746.5 1136.7,749.1 1136.8,747.8 1136.9,753.1 1136.9,746.5 1137.0,747.8 1137.1,747.8 1137.1,746.5 1137.2,745.1 1137.3,747.8 1137.3,745.1 1137.4,742.5 1137.5,750.4 1137.5,747.8 1137.6,751.7 1137.7,746.5 1137.7,743.8 1137.8,747.8 1137.9,750.4 1137.9,749.1 1138.0,746.5 1138.1,751.7 1138.1,751.7 1138.2,746.5 1138.3,751.7 1138.3,747.8 1138.4,750.4 1138.5,751.7 1138.5,746.5 1138.6,745.1 1138.7,750.4 1138.7,742.5 1138.8,747.8 1138.9,746.5 1138.9,747.8 1139.0,750.4 1139.1,745.1 1139.1,747.8 1139.2,746.5 1139.3,747.8 1139.3,749.1 1139.4,741.2 1139.5,746.5 1139.5,749.1 1139.6,746.5 1139.7,750.4 1139.7,746.5 1139.8,741.2 1139.9,749.1 1139.9,746.5 1140.0,750.4 1140.1,747.8 1140.1,745.1 1140.2,750.4 1140.3,750.4 1140.3,745.1 1140.4,746.5 1140.5,746.5 1140.5,746.5 1140.6,751.7 1140.7,751.7 1140.7,753.1 1140.8,746.5 1140.9,751.7 1140.9,753.1 1141.0,749.1 1141.1,747.8 1141.1,747.8 1141.2,753.1 1141.3,743.8 1141.3,750.4 1141.4,747.8 1141.5,747.8 1141.5,750.4 1141.6,746.5 1141.7,746.5 1141.7,745.1 1141.8,742.5 1141.9,742.5 1141.9,745.1 1142.0,746.5 1142.1,749.1 1142.1,751.7 1142.2,746.5 1142.3,749.1 1142.3,749.1 1142.4,749.1 1142.5,746.5 1142.5,749.1 1142.6,741.2 1142.7,745.1 1142.7,749.1 1142.8,746.5 1142.9,743.8 1142.9,750.4 1143.0,747.8 1143.1,749.1 1143.1,747.8 1143.2,749.1 1143.3,747.8 1143.3,746.5 1143.4,746.5 1143.5,751.7 1143.5,746.5 1143.6,747.8 1143.7,749.1 1143.7,747.8 1143.8,743.8 1143.9,747.8 1143.9,750.4 1144.0,746.5 1144.1,747.8 1144.1,745.1 1144.2,746.5 1144.3,743.8 1144.3,749.1 1144.4,749.1 1144.5,745.1 1144.5,742.5 1144.6,746.5 1144.7,743.8 1144.7,746.5 1144.8,747.8 1144.9,751.7 1144.9,742.5 1145.0,745.1 1145.1,754.4 1145.1,745.1 1145.2,749.1 1145.3,750.4 1145.3,749.1 1145.4,745.1 1145.5,747.8 1145.5,747.8 1145.6,747.8 1145.7,749.1 1145.7,746.5 1145.8,753.1 1145.9,751.7 1145.9,747.8 1146.0,750.4 1146.1,747.8 1146.1,749.1 1146.2,746.5 1146.3,747.8 1146.3,746.5 1146.4,747.8 1146.5,745.1 1146.5,749.1 1146.6,751.7 1146.7,747.8 1146.7,747.8 1146.8,749.1 1146.9,745.1 1146.9,746.5 1147.0,743.8 1147.1,749.1 1147.1,749.1 1147.2,746.5 1147.3,743.8 1147.3,749.1 1147.4,746.5 1147.5,747.8 1147.5,747.8 1147.6,745.1 1147.7,745.1 1147.7,745.1 1147.8,749.1 1147.9,747.8 1147.9,751.7 1148.0,746.5 1148.1,750.4 1148.1,747.8 1148.2,745.1 1148.3,747.8 1148.3,746.5 1148.4,749.1 1148.5,739.8 1148.5,750.4 1148.6,749.1 1148.7,747.8 1148.7,739.8 1148.8,749.1 1148.9,747.8 1148.9,745.1 1149.0,753.1 1149.1,745.1 1149.1,746.5 1149.2,742.5 1149.3,742.5 1149.3,746.5 1149.4,743.8 1149.5,749.1 1149.5,750.4 1149.6,747.8 1149.7,746.5 1149.7,747.8 1149.8,746.5 1149.9,745.1 1149.9,742.5 1150.0,747.8 1150.1,747.8 1150.1,745.1 1150.2,746.5 1150.3,745.1 1150.3,742.5 1150.4,749.1 1150.5,745.1 1150.5,743.8 1150.6,743.8 1150.7,750.4 1150.7,747.8 1150.8,743.8 1150.9,746.5 1150.9,745.1 1151.0,747.8 1151.1,743.8 1151.1,746.5 1151.2,747.8 1151.3,746.5 1151.3,743.8 1151.4,746.5 1151.5,751.7 1151.5,753.1 1151.6,745.1 1151.7,751.7 1151.7,746.5 1151.8,749.1 1151.9,746.5 1151.9,749.1 1152.0,753.1 1152.1,743.8 1152.1,747.8 1152.2,747.8 1152.3,743.8 1152.3,745.1 1152.4,743.8 1152.5,747.8 1152.5,746.5 1152.6,746.5 1152.7,749.1 1152.7,745.1 1152.8,746.5 1152.9,747.8 1152.9,749.1 1153.0,745.1 1153.1,747.8 1153.1,746.5 1153.2,746.5 1153.3,747.8 1153.3,754.4 1153.4,746.5 1153.5,745.1 1153.5,749.1 1153.6,749.1 1153.7,745.1 1153.7,750.4 1153.8,743.8 1153.9,746.5 1153.9,743.8 1154.0,747.8 1154.1,746.5 1154.1,746.5 1154.2,751.7 1154.3,749.1 1154.3,743.8 1154.4,749.1 1154.5,750.4 1154.5,746.5 1154.6,743.8 1154.7,747.8 1154.7,747.8 1154.8,747.8 1154.9,746.5 1154.9,751.7 1155.0,746.5 1155.1,746.5 1155.1,745.1 1155.2,745.1 1155.3,745.1 1155.3,742.5 1155.4,747.8 1155.5,747.8 1155.5,742.5 1155.6,746.5 1155.7,749.1 1155.7,749.1 1155.8,747.8 1155.9,750.4 1155.9,745.1 1156.0,746.5 1156.1,743.8 1156.1,750.4 1156.2,747.8 1156.3,749.1 1156.3,746.5 1156.4,746.5 1156.5,745.1 1156.5,745.1 1156.6,750.4 1156.7,746.5 1156.7,746.5 1156.8,747.8 1156.9,746.5 1156.9,751.7 1157.0,749.1 1157.1,747.8 1157.1,749.1 1157.2,750.4 1157.3,745.1 1157.3,745.1 1157.4,742.5 1157.5,750.4 1157.5,753.1 1157.6,745.1 1157.7,747.8 1157.7,750.4 1157.8,746.5 1157.9,747.8 1157.9,751.7 1158.0,747.8 1158.1,751.7 1158.1,746.5 1158.2,750.4 1158.3,751.7 1158.3,745.1 1158.4,745.1 1158.5,747.8 1158.5,750.4 1158.6,746.5 1158.7,747.8 1158.7,746.5 1158.8,749.1 1158.9,751.7 1158.9,749.1 1159.0,743.8 1159.1,749.1 1159.1,747.8 1159.2,747.8 1159.3,745.1 1159.3,746.5 1159.4,749.1 1159.5,742.5 1159.5,747.8 1159.6,746.5 1159.7,749.1 1159.7,751.7 1159.8,746.5 1159.9,749.1 1159.9,746.5 1160.0,753.1 1160.1,743.8 1160.1,747.8 1160.2,745.1 1160.3,750.4 1160.3,747.8 1160.4,747.8 1160.5,745.1 1160.5,745.1 1160.6,753.1 1160.7,746.5 1160.7,747.8 1160.8,749.1 1160.9,746.5 1160.9,746.5 1161.0,745.1 1161.1,750.4 1161.1,750.4 1161.2,747.8 1161.2,746.5 1161.3,750.4 1161.4,747.8 1161.4,750.4 1161.5,747.8 1161.6,747.8 1161.6,746.5 1161.7,743.8 1161.8,749.1 1161.8,746.5 1161.9,751.7 1162.0,746.5 1162.0,742.5 1162.1,751.7 1162.2,749.1 1162.2,754.4 1162.3,746.5 1162.4,742.5 1162.4,750.4 1162.5,746.5 1162.6,743.8 1162.6,749.1 1162.7,746.5 1162.8,749.1 1162.8,749.1 1162.9,747.8 1163.0,745.1 1163.0,746.5 1163.1,747.8 1163.2,747.8 1163.2,745.1 1163.3,746.5 1163.4,746.5 1163.4,751.7 1163.5,747.8 1163.6,750.4 1163.6,742.5 1163.7,745.1 1163.8,743.8 1163.8,749.1 1163.9,751.7 1164.0,749.1 1164.0,746.5 1164.1,749.1 1164.2,745.1 1164.2,743.8 1164.3,747.8 1164.4,745.1 1164.4,753.1 1164.5,750.4 1164.6,749.1 1164.6,747.8 1164.7,751.7 1164.8,747.8 1164.8,745.1 1164.9,745.1 1165.0,746.5 1165.0,750.4 1165.1,743.8 1165.2,745.1 1165.2,750.4 1165.3,745.1 1165.4,747.8 1165.4,746.5 1165.5,746.5 1165.6,746.5 1165.6,743.8 1165.7,741.2 1165.8,746.5 1165.8,746.5 1165.9,747.8 1166.0,746.5 1166.0,745.1 1166.1,750.4 1166.2,746.5 1166.2,741.2 1166.3,745.1 1166.4,743.8 1166.4,747.8 1166.5,741.2 1166.6,745.1 1166.6,747.8 1166.7,749.1 1166.8,746.5 1166.8,742.5 1166.9,749.1 1167.0,750.4 1167.0,753.1 1167.1,745.1 1167.2,750.4 1167.2,749.1 1167.3,750.4 1167.4,749.1 1167.4,745.1 1167.5,749.1 1167.6,746.5 1167.6,749.1 1167.7,747.8 1167.8,745.1 1167.8,745.1 1167.9,750.4 1168.0,747.8 1168.0,750.4 1168.1,745.1 1168.2,749.1 1168.2,750.4 1168.3,745.1 1168.4,749.1 1168.4,746.5 1168.5,745.1 1168.6,749.1 1168.6,747.8 1168.7,746.5 1168.8,741.2 1168.8,746.5 1168.9,745.1 1169.0,747.8 1169.0,747.8 1169.1,743.8 1169.2,749.1 1169.2,749.1 1169.3,743.8 1169.4,749.1 1169.4,750.4 1169.5,746.5 1169.6,745.1 1169.6,742.5 1169.7,741.2 1169.8,753.1 1169.8,747.8 1169.9,747.8 1170.0,746.5 1170.0,749.1 1170.1,747.8 1170.2,746.5 1170.2,746.5 1170.3,749.1 1170.4,746.5 1170.4,749.1 1170.5,749.1 1170.6,747.8 1170.6,745.1 1170.7,753.1 1170.8,747.8 1170.8,743.8 1170.9,746.5 1171.0,749.1 1171.0,746.5 1171.1,743.8 1171.2,747.8 1171.2,749.1 1171.3,745.1 1171.4,747.8 1171.4,749.1 1171.5,745.1 1171.6,749.1 1171.6,747.8 1171.7,743.8 1171.8,746.5 1171.8,743.8 1171.9,751.7 1172.0,751.7 1172.0,749.1 1172.1,747.8 1172.2,753.1 1172.2,746.5 1172.3,749.1 1172.4,749.1 1172.4,747.8 1172.5,747.8 1172.6,750.4 1172.6,747.8 1172.7,750.4 1172.8,743.8 1172.8,749.1 1172.9,747.8 1173.0,749.1 1173.0,747.8 1173.1,746.5 1173.2,747.8 1173.2,750.4 1173.3,745.1 1173.4,747.8 1173.4,753.1 1173.5,753.1 1173.6,750.4 1173.6,750.4 1173.7,751.7 1173.8,750.4 1173.8,746.5 1173.9,743.8 1174.0,746.5 1174.0,746.5 1174.1,745.1 1174.2,741.2 1174.2,745.1 1174.3,746.5 1174.4,747.8 1174.4,750.4 1174.5,746.5 1174.6,743.8 1174.6,746.5 1174.7,749.1 1174.8,746.5 1174.8,747.8 1174.9,749.1 1175.0,753.1 1175.0,746.5 1175.1,749.1 1175.2,743.8 1175.2,749.1 1175.3,747.8 1175.4,749.1 1175.4,742.5 1175.5,743.8 1175.6,747.8 1175.6,743.8 1175.7,750.4 1175.8,746.5 1175.8,749.1 1175.9,747.8 1176.0,749.1 1176.0,746.5 1176.1,751.7 1176.2,749.1 1176.2,743.8 1176.3,753.1 1176.4,747.8 1176.4,751.7 1176.5,754.4 1176.6,746.5 1176.6,749.1 1176.7,743.8 1176.8,753.1 1176.8,746.5 1176.9,743.8 1177.0,753.1 1177.0,745.1 1177.1,745.1 1177.2,746.5 1177.2,743.8 1177.3,745.1 1177.4,749.1 1177.4,749.1 1177.5,747.8 1177.6,742.5 1177.6,747.8 1177.7,745.1 1177.8,747.8 1177.8,745.1 1177.9,746.5 1178.0,743.8 1178.0,742.5 1178.1,749.1 1178.2,750.4 1178.2,747.8 1178.3,747.8 1178.4,746.5 1178.4,745.1 1178.5,749.1 1178.6,747.8 1178.6,747.8 1178.7,743.8 1178.8,749.1 1178.8,743.8 1178.9,742.5 1179.0,747.8 1179.0,743.8 1179.1,746.5 1179.2,747.8 1179.2,742.5 1179.3,743.8 1179.4,747.8 1179.4,745.1 1179.5,749.1 1179.6,750.4 1179.6,743.8 1179.7,747.8 1179.8,742.5 1179.8,746.5 1179.9,746.5 1180.0,747.8 1180.0,746.5 1180.1,749.1 1180.2,747.8 1180.2,751.7 1180.3,751.7 1180.4,750.4 1180.4,749.1 1180.5,747.8 1180.6,747.8 1180.6,743.8 1180.7,741.2 1180.8,754.4 1180.8,743.8 1180.9,745.1 1181.0,749.1 1181.0,746.5 1181.1,753.1 1181.2,747.8 1181.2,742.5 1181.3,750.4 1181.4,749.1 1181.4,746.5 1181.5,745.1 1181.6,747.8 1181.6,749.1 1181.7,745.1 1181.8,749.1 1181.8,741.2 1181.9,743.8 1182.0,746.5 1182.0,749.1 1182.1,749.1 1182.2,749.1 1182.2,747.8 1182.3,746.5 1182.4,750.4 1182.4,746.5 1182.5,747.8 1182.6,750.4 1182.6,743.8 1182.7,746.5 1182.8,746.5 1182.8,749.1 1182.9,749.1 1183.0,747.8 1183.0,751.7 1183.1,746.5 1183.2,750.4 1183.2,747.8 1183.3,745.1 1183.4,747.8 1183.4,749.1 1183.5,749.1 1183.6,746.5 1183.6,750.4 1183.7,747.8 1183.8,745.1 1183.8,753.1 1183.9,749.1 1184.0,746.5 1184.0,750.4 1184.1,750.4 1184.2,750.4 1184.2,745.1"/>
<rect x="1108.7" y="691.9" width="73.7" height="16.2" rx="2" ry="2" fill="#fff" fill-opacity="0.8" stroke="#d6d6d6" stroke-width="1"/>
<line x1="1111.20" y1="699.90" x2="1133.80" y2="699.90" stroke="#0000ff" stroke-width="1.5"/>
<text transform="translate(1137.37,703.10) scale(1.1291,1)" font-size="10.60" fill="#000">x=1074</text>
<rect x="911.0" y="689.0" width="274.0" height="120.0" fill="none" stroke="#000" stroke-width="1.7"/>
<line x1="904.10" y1="802.00" x2="911.00" y2="802.00" stroke="#000" stroke-width="1.6"/>
<text transform="translate(877.48,805.85) scale(1.0573,1)" font-size="10.60" fill="#000">200</text>
<line x1="904.10" y1="775.55" x2="911.00" y2="775.55" stroke="#000" stroke-width="1.6"/>
<text transform="translate(877.48,779.40) scale(1.0573,1)" font-size="10.60" fill="#000">220</text>
<line x1="904.10" y1="749.10" x2="911.00" y2="749.10" stroke="#000" stroke-width="1.6"/>
<text transform="translate(877.48,752.95) scale(1.0573,1)" font-size="10.60" fill="#000">240</text>
<line x1="904.10" y1="722.65" x2="911.00" y2="722.65" stroke="#000" stroke-width="1.6"/>
<text transform="translate(877.48,726.50) scale(1.0573,1)" font-size="10.60" fill="#000">260</text>
<line x1="904.10" y1="696.20" x2="911.00" y2="696.20" stroke="#000" stroke-width="1.6"/>
<text transform="translate(877.48,700.05) scale(1.0573,1)" font-size="10.60" fill="#000">280</text>
<line x1="911.50" y1="809.00" x2="911.50" y2="815.70" stroke="#000" stroke-width="1.6"/>
<text transform="translate(908.57,831.90) scale(0.9949,1)" font-size="10.60" fill="#000">0</text>
<line x1="978.10" y1="809.00" x2="978.10" y2="815.70" stroke="#000" stroke-width="1.6"/>
<text transform="translate(965.40,831.90) scale(1.0598,1)" font-size="10.60" fill="#000">1000</text>
<line x1="1044.70" y1="809.00" x2="1044.70" y2="815.70" stroke="#000" stroke-width="1.6"/>
<text transform="translate(1032.11,831.90) scale(1.0631,1)" font-size="10.60" fill="#000">2000</text>
<line x1="1111.30" y1="809.00" x2="1111.30" y2="815.70" stroke="#000" stroke-width="1.6"/>
<text transform="translate(1098.86,831.90) scale(1.0558,1)" font-size="10.60" fill="#000">3000</text>
<line x1="1177.90" y1="809.00" x2="1177.90" y2="815.70" stroke="#000" stroke-width="1.6"/>
<text transform="translate(1165.49,831.90) scale(1.0603,1)" font-size="10.60" fill="#000">4000</text>
<text transform="translate(1045.47,849.60) scale(0.9312,1)" font-size="11.04" fill="#000">Y</text>
<text transform="translate(866.10,767.69) rotate(-90) scale(1.0517,1)" font-size="11.04" fill="#000">counts</text>
<text transform="translate(1194.40,729.58) rotate(90) scale(1.1193,1)" font-size="11.04" fill="#000">cut in y</text>
<rect x="1" y="1" width="1243" height="29" fill="#ececec"/>
<text transform="translate(5.60,22.90) scale(1.0088,1)" font-size="17.66" fill="#000">2025-12-18: GIRAFFE</text>
<text transform="translate(336.18,22.90) scale(1.1072,1)" font-size="13.24" fill="#000">type info</text>
<text transform="translate(629.20,22.80) scale(1.0768,1)" font-size="13.24" fill="#000">set-up info</text>
<text transform="translate(6.92,45.00) scale(0.9315,1)" font-size="13.24" fill="#000">ORIGFILE:</text>
<text transform="translate(75.14,45.00) scale(0.9981,1)" font-size="13.24" fill="#000">GIRAF_CAL353_0003.fits</text>
<text transform="translate(6.38,61.50) scale(0.9147,1)" font-size="13.24" fill="#000">ARCFILE:</text>
<text transform="translate(75.11,61.50) scale(1.0425,1)" font-size="13.24" fill="#000">GIRAF.2025-12-19T08:54:36.427.fits</text>
<text transform="translate(5.98,80.20) scale(1.0482,1)" font-size="13.24" fill="#000">raw_type:</text>
<text transform="translate(76.13,80.20) scale(0.9430,1)" font-size="13.24" fill="#000">SIMLAMP</text>
<text transform="translate(7.14,98.30) scale(1.0076,1)" font-size="13.24" fill="#000">do_class:</text>
<text transform="translate(75.58,98.30) scale(0.9144,1)" font-size="13.24" fill="#000">ARC_SPECTRUM</text>
<text transform="translate(7.10,113.80) scale(1.0681,1)" font-size="13.24" fill="#000">extension:</text>
<text transform="translate(76.19,113.80) scale(0.9949,1)" font-size="13.24" fill="#000">0</text>
<text transform="translate(335.68,44.50) scale(0.9410,1)" font-size="13.24" fill="#000">DPR.CATG:</text>
<text transform="translate(404.96,44.50) scale(0.9461,1)" font-size="13.24" fill="#000">CALIB</text>
<text transform="translate(335.70,61.80) scale(0.9177,1)" font-size="13.24" fill="#000">DPR.TYPE:</text>
<text transform="translate(405.03,61.80) scale(0.9498,1)" font-size="13.24" fill="#000">SIMLAMP,TAL</text>
<text transform="translate(335.68,79.50) scale(0.9410,1)" font-size="13.24" fill="#000">DPR.TECH:</text>
<text transform="translate(404.58,79.50) scale(0.9354,1)" font-size="13.24" fill="#000">MOS</text>
<text transform="translate(336.41,96.80) scale(0.9729,1)" font-size="13.24" fill="#000">TPL.ID:</text>
<text transform="translate(404.93,96.80) scale(1.0089,1)" font-size="13.24" fill="#000">GIRAF_cal_expfname</text>
<text transform="translate(628.82,42.85) scale(0.9642,1)" font-size="11.04" fill="#000">INS.SLIT.NAME:</text>
<text transform="translate(758.83,42.85) scale(0.9540,1)" font-size="11.04" fill="#000">IFU1</text>
<text transform="translate(628.82,55.90) scale(0.9592,1)" font-size="11.04" fill="#000">INS.EXP.MODE:</text>
<text transform="translate(758.86,55.90) scale(1.0415,1)" font-size="11.04" fill="#000">H525.8B</text>
<text transform="translate(628.95,68.70) scale(0.9397,1)" font-size="11.04" fill="#000">DET.READ.SPEED:</text>
<text transform="translate(758.83,68.70) scale(1.0726,1)" font-size="11.04" fill="#000">Normal</text>
<rect x="1" y="849" width="1243" height="20" fill="#ececec"/>
<text transform="translate(5.65,863.70) scale(1.0490,1)" font-size="11.04" fill="#000">powered by QC: www.eso.org/HC</text>
<text transform="translate(934.50,863.70) scale(1.0738,1)" font-size="11.04" fill="#000">created by qc_rawdisp.py v1.2.3 on 2025-12-19T10:31:34</text>
</g></svg></body></html>
